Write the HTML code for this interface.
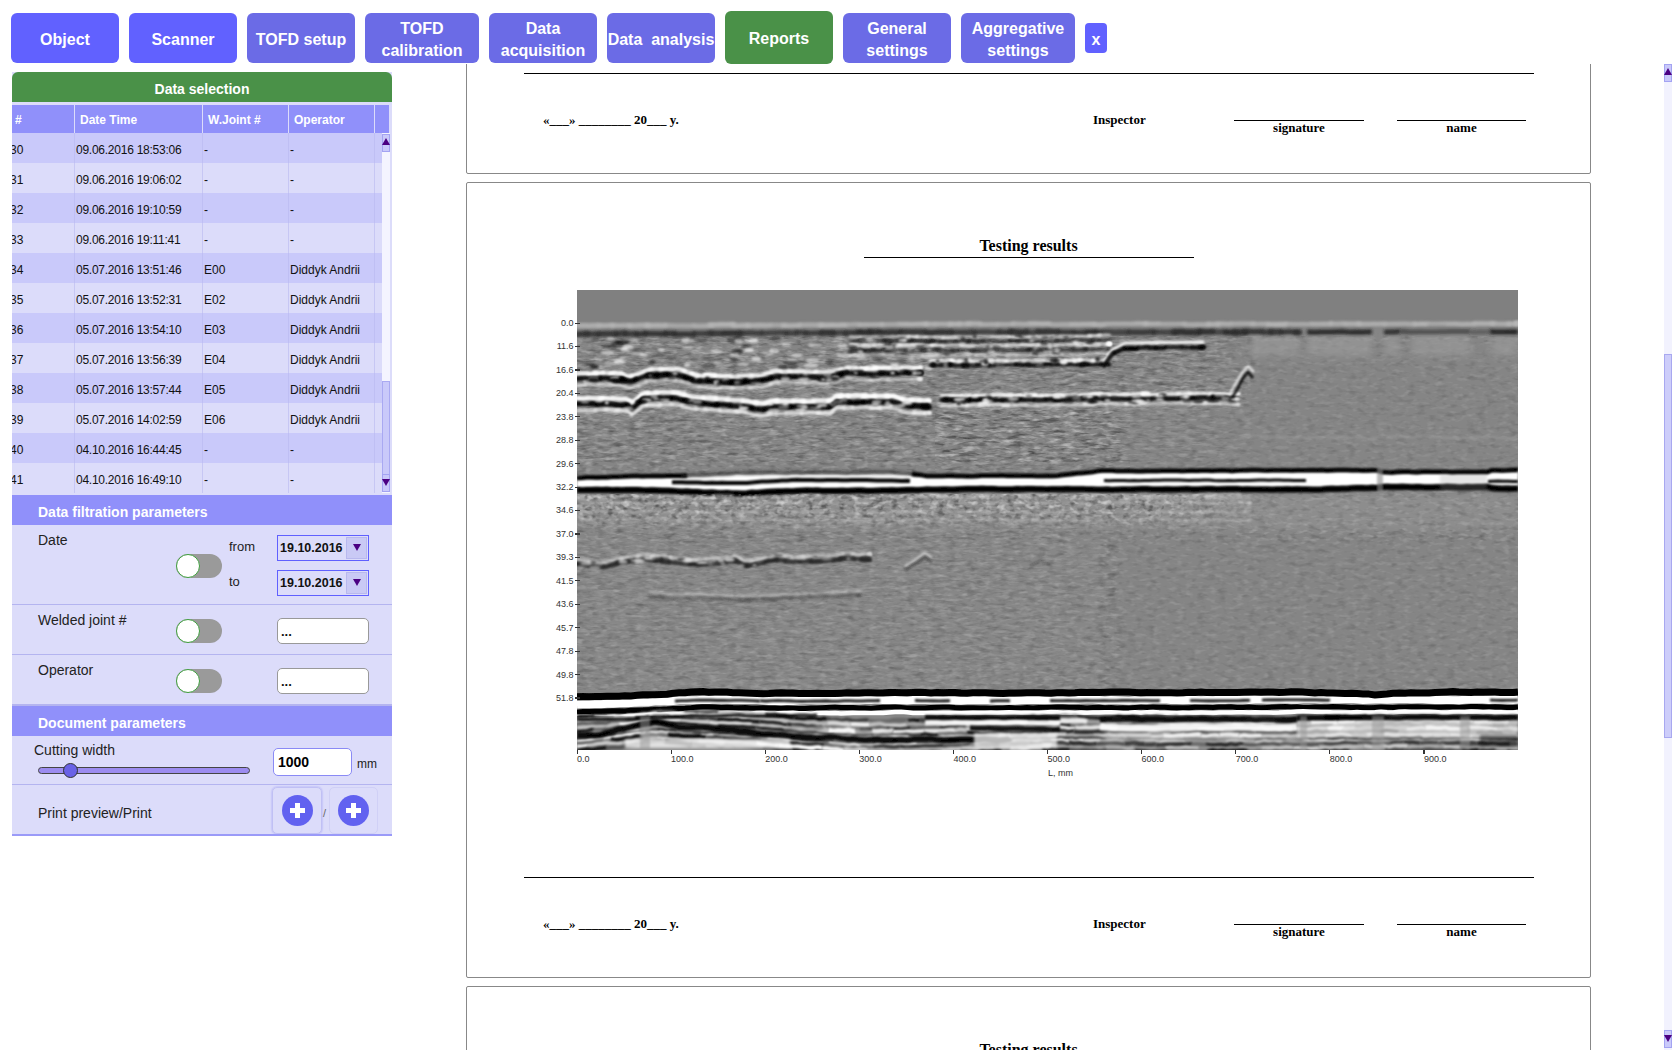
<!DOCTYPE html>
<html><head><meta charset="utf-8">
<style>
*{box-sizing:border-box;margin:0;padding:0}
html,body{width:1680px;height:1050px;overflow:hidden;background:#fff;font-family:"Liberation Sans",sans-serif;position:relative}
.a{position:absolute}
.btn{position:absolute;top:13px;height:50px;border-radius:6px;background:#6b6be6;color:#fff;font-weight:bold;font-size:16px;text-align:center;display:flex;align-items:center;justify-content:center;line-height:22px;padding-top:3px}
.btn.b2{background:#6161ff}
.btn.g{background:#4a9148;top:11px;height:53px}
/* panel */
.panel{position:absolute;left:12px;top:72px;width:380px;height:764px;background:#dcdcfa}
.gh{position:absolute;left:0;top:0;width:380px;height:30px;background:#4a9148;border-radius:6px 6px 0 0;color:#fff;font-weight:bold;font-size:14px;text-align:center;line-height:30px;padding-top:2px}
.th{position:absolute;top:33px;height:28px;background:#9090fa;color:#fff;font-weight:bold;font-size:12px;line-height:30px;padding-left:5px}
.row{position:absolute;left:0;width:370px;height:30px;font-size:12px;color:#111;line-height:30px}
.row span{position:absolute;top:2px}
.row span:nth-child(2){letter-spacing:-0.25px}
.sec{position:absolute;left:0;width:380px;height:30px;background:#9090fa;color:#fff;font-weight:bold;font-size:14px;line-height:30px;padding-left:26px;padding-top:2px}
.lbl{position:absolute;font-size:14px;color:#222}
.tog{position:absolute;width:46px;height:24px;border-radius:12px;background:#9a9a9a}
.tog:after{content:"";position:absolute;left:0;top:0;width:24px;height:24px;border-radius:50%;background:#fff;border:1.5px solid #3f9f3f;box-sizing:border-box}
.din{position:absolute;width:92px;height:26px;border:1.5px solid #6060ff;background:#dcdcfa;font-weight:bold;font-size:12.5px;line-height:25px;padding-left:2px;color:#111}
.din i{position:absolute;right:1px;top:1px;width:21px;height:22px;background:#c9c9f5;border:1px solid #b8b8ee}
.din i:after{content:"";position:absolute;left:5.5px;top:6px;border-left:4px solid transparent;border-right:4px solid transparent;border-top:7px solid #4b0082}
.tin{position:absolute;width:92px;height:26px;border:1px solid #999;border-radius:5px;background:#fff;font-weight:bold;font-size:13px;line-height:26px;padding-left:3px;color:#111}
.sep{position:absolute;left:0;width:380px;height:1px;background:#b4b4f0}
/* report */
.box{position:absolute;left:466px;width:1125px;border:1px solid #888;background:#fff;border-radius:2px}
.ser{font-family:"Liberation Serif",serif;font-weight:bold;color:#000}
.hl{position:absolute;height:1.2px;background:#000}

.sbb{background:#c9c9fa;border:1px solid #a3a3f2}
.sbb i{position:absolute;left:-1px;border-left:4px solid transparent;border-right:4px solid transparent}
.sbb i.up{top:3px;border-bottom:7px solid #4b0082}
.sbb i.dn{top:4px;border-top:7px solid #4b0082}
.plus{width:31px;height:31px;border-radius:50%;background:#6161f0}
.plus:before{content:"";position:absolute;left:8px;top:13px;width:15px;height:5px;background:#fff}
.plus:after{content:"";position:absolute;left:13px;top:8px;width:5px;height:15px;background:#fff}
.ax{font-size:9px;color:#333;font-family:"Liberation Sans",sans-serif;line-height:12px;white-space:nowrap}
</style></head><body>

<!-- top buttons -->
<div class="btn b2" style="left:11px;width:108px">Object</div>
<div class="btn b2" style="left:129px;width:108px">Scanner</div>
<div class="btn" style="left:247px;width:108px">TOFD setup</div>
<div class="btn" style="left:365px;width:114px">TOFD<br>calibration</div>
<div class="btn" style="left:489px;width:108px">Data<br>acquisition</div>
<div class="btn" style="left:607px;width:108px">Data&nbsp; analysis</div>
<div class="btn g" style="left:725px;width:108px">Reports</div>
<div class="btn" style="left:843px;width:108px">General<br>settings</div>
<div class="btn" style="left:961px;width:114px">Aggregative<br>settings</div>
<div class="btn b2" style="left:1085px;top:23px;width:22px;height:30px;border-radius:4px">x</div>

<!-- report area -->
<div class="a" style="left:0;top:64px;width:1680px;height:986px;overflow:hidden">
<div class="a" style="left:0;top:-64px;width:1680px;height:1114px">

<div class="box" style="top:-622px;height:796px">
  <div class="hl" style="left:397px;top:74px;width:330px"></div>
  <div class="ser a" style="left:0;width:1123px;top:53.5px;text-align:center;font-size:16px">Testing results</div>
</div>
<div class="hl" style="left:524px;top:73px;width:1010px"></div>
<div class="ser a" style="left:543px;top:112px;font-size:13px">«___» ________ 20___ y.</div>
<div class="ser a" style="left:1093px;top:112px;font-size:13px">Inspector</div>
<div class="a" style="left:1234px;top:120px;width:130px;height:1px;background:#000"></div>
<div class="ser a" style="left:1234px;width:130px;text-align:center;top:120px;font-size:13px">signature</div>
<div class="a" style="left:1397px;top:120px;width:129px;height:1px;background:#000"></div>
<div class="ser a" style="left:1397px;width:129px;text-align:center;top:120px;font-size:13px">name</div>

<div class="box" style="top:182px;height:796px">
  <div class="hl" style="left:397px;top:74px;width:330px"></div>
  <div class="ser a" style="left:0;width:1123px;top:53.5px;text-align:center;font-size:16px">Testing results</div>
</div>
<div class="hl" style="left:524px;top:877px;width:1010px"></div>
<div class="ser a" style="left:543px;top:916px;font-size:13px">«___» ________ 20___ y.</div>
<div class="ser a" style="left:1093px;top:916px;font-size:13px">Inspector</div>
<div class="a" style="left:1234px;top:924px;width:130px;height:1px;background:#000"></div>
<div class="ser a" style="left:1234px;width:130px;text-align:center;top:924px;font-size:13px">signature</div>
<div class="a" style="left:1397px;top:924px;width:129px;height:1px;background:#000"></div>
<div class="ser a" style="left:1397px;width:129px;text-align:center;top:924px;font-size:13px">name</div>

<div class="box" style="top:986px;height:796px">
  <div class="hl" style="left:397px;top:74px;width:330px"></div>
  <div class="ser a" style="left:0;width:1123px;top:53.5px;text-align:center;font-size:16px">Testing results</div>
</div>
<div class="hl" style="left:524px;top:1681px;width:1010px"></div>
<div class="ser a" style="left:543px;top:1720px;font-size:13px">«___» ________ 20___ y.</div>
<div class="ser a" style="left:1093px;top:1720px;font-size:13px">Inspector</div>
<div class="a" style="left:1234px;top:1728px;width:130px;height:1px;background:#000"></div>
<div class="ser a" style="left:1234px;width:130px;text-align:center;top:1728px;font-size:13px">signature</div>
<div class="a" style="left:1397px;top:1728px;width:129px;height:1px;background:#000"></div>
<div class="ser a" style="left:1397px;width:129px;text-align:center;top:1728px;font-size:13px">name</div>

<svg id="bs" class="a" style="left:577px;top:290px" width="941" height="460" viewBox="0 0 941 460">
<style>#bs path{fill:none;stroke-linejoin:round}#bs .rc{stroke-linecap:round}#bs .b1{filter:url(#b1)}#bs .b2{filter:url(#b2)}#bs .b3{filter:url(#b3)}</style>
<defs>
 <filter id="tex" x="0" y="0" width="100%" height="100%" color-interpolation-filters="sRGB">
  <feTurbulence type="fractalNoise" baseFrequency="0.10 0.22" numOctaves="2" seed="3"/>
  <feColorMatrix type="matrix" values="0 0 0 0 0  0 0 0 0 0  0 0 0 0 0  2.2 0 0 0 -1.1"/>
 </filter>
 <filter id="tex2" x="0" y="0" width="100%" height="100%" color-interpolation-filters="sRGB">
  <feTurbulence type="fractalNoise" baseFrequency="0.12 0.25" numOctaves="2" seed="11"/>
  <feColorMatrix type="matrix" values="0 0 0 0 1  0 0 0 0 1  0 0 0 0 1  2.2 0 0 0 -1.1"/>
 </filter>
 <filter id="tex3" x="0" y="0" width="100%" height="100%" color-interpolation-filters="sRGB">
  <feTurbulence type="fractalNoise" baseFrequency="0.06 0.3" numOctaves="3" seed="21"/>
  <feColorMatrix type="matrix" values="0 0 0 0 0  0 0 0 0 0  0 0 0 0 0  3 0 0 0 -1.5"/>
 </filter>
 <filter id="tex4" x="0" y="0" width="100%" height="100%" color-interpolation-filters="sRGB">
  <feTurbulence type="fractalNoise" baseFrequency="0.07 0.28" numOctaves="3" seed="5"/>
  <feColorMatrix type="matrix" values="0 0 0 0 1  0 0 0 0 1  0 0 0 0 1  3 0 0 0 -1.5"/>
 </filter>
 <filter id="tex5" x="0" y="0" width="100%" height="100%" color-interpolation-filters="sRGB">
  <feTurbulence type="fractalNoise" baseFrequency="0.13 0.2" numOctaves="2" seed="41"/>
  <feColorMatrix type="matrix" values="0 0 0 0 0  0 0 0 0 0  0 0 0 0 0  3.2 0 0 0 -1.6"/>
 </filter>
 <filter id="tex6" x="0" y="0" width="100%" height="100%" color-interpolation-filters="sRGB">
  <feTurbulence type="fractalNoise" baseFrequency="0.13 0.2" numOctaves="2" seed="43"/>
  <feColorMatrix type="matrix" values="0 0 0 0 1  0 0 0 0 1  0 0 0 0 1  3.2 0 0 0 -1.6"/>
 </filter>
 <linearGradient id="gB" x1="0" y1="0" x2="1" y2="0"><stop offset="0" stop-color="#fff"/><stop offset="0.62" stop-color="#fff"/><stop offset="0.75" stop-color="#000"/></linearGradient>
 <linearGradient id="gBv" x1="0" y1="0" x2="0" y2="1"><stop offset="0" stop-color="#fff"/><stop offset="0.45" stop-color="#fff"/><stop offset="1" stop-color="#000"/></linearGradient>
 <mask id="mBv" maskUnits="userSpaceOnUse" x="0" y="0" width="941" height="460"><rect x="0" y="203" width="941" height="40" fill="url(#gBv)"/></mask>
 <mask id="mB" maskUnits="userSpaceOnUse" x="0" y="0" width="941" height="460"><rect x="0" y="200" width="941" height="60" fill="url(#gB)" mask="url(#mBv)"/></mask>
 <filter id="b1" filterUnits="userSpaceOnUse" x="-10" y="-10" width="961" height="480"><feGaussianBlur stdDeviation="0.9"/></filter>
 <filter id="b2" filterUnits="userSpaceOnUse" x="-10" y="-10" width="961" height="480"><feGaussianBlur stdDeviation="1.4"/></filter>
 <filter id="b3" filterUnits="userSpaceOnUse" x="-10" y="-10" width="961" height="480"><feGaussianBlur stdDeviation="3"/></filter>
 <filter id="soft" filterUnits="userSpaceOnUse" x="0" y="0" width="941" height="460"><feGaussianBlur stdDeviation="0.6"/></filter>
 <filter id="b8" filterUnits="userSpaceOnUse" x="-50" y="-50" width="1041" height="560"><feGaussianBlur stdDeviation="12"/></filter>
 <linearGradient id="gL1" x1="0" y1="0" x2="1" y2="0"><stop offset="0" stop-color="#fff"/><stop offset="0.66" stop-color="#fff"/><stop offset="0.72" stop-color="#000"/></linearGradient>
 <linearGradient id="gL2" x1="0" y1="0" x2="1" y2="0"><stop offset="0" stop-color="#b3b3b3"/><stop offset="0.5" stop-color="#b3b3b3"/><stop offset="0.62" stop-color="#000"/></linearGradient>
 <mask id="mL" maskUnits="userSpaceOnUse" x="0" y="0" width="941" height="460"><rect x="0" y="44" width="941" height="128" fill="url(#gL1)"/><rect x="0" y="230" width="941" height="230" fill="url(#gL2)"/></mask>
 <clipPath id="cp"><rect x="0" y="0" width="941" height="460"/></clipPath>
</defs><g clip-path="url(#cp)"><g filter="url(#soft)"><rect x="0.0" y="0.0" width="941.0" height="460.0" fill="#858585" opacity="1" /><rect x="0.0" y="0.0" width="941.0" height="32.0" fill="#808080" opacity="1" /><rect x="0.0" y="46.0" width="941.0" height="354.0" fill="#000" opacity="0.26" filter="url(#tex)"/><rect x="0.0" y="46.0" width="941.0" height="354.0" fill="#fff" opacity="0.26" filter="url(#tex2)"/><g mask="url(#mL)"><rect x="0.0" y="46.0" width="941.0" height="354.0" fill="#000" opacity="0.22" filter="url(#tex3)"/><rect x="0.0" y="46.0" width="941.0" height="354.0" fill="#fff" opacity="0.22" filter="url(#tex4)"/></g><rect x="0.0" y="204.0" width="941.0" height="36.0" fill="#a0a0a0" opacity="0.3" filter="url(#b3)"/><rect x="673.0" y="50.0" width="268.0" height="130.0" fill="#858585" opacity="0.45" filter="url(#b3)"/><rect x="543.0" y="250.0" width="398.0" height="146.0" fill="#868686" opacity="0.4" filter="url(#b3)"/><rect x="673.0" y="44.0" width="48.0" height="22.0" fill="#9c9c9c" opacity="0.6" filter="url(#b3)"/><rect x="730.0" y="44.0" width="65.0" height="22.0" fill="#9c9c9c" opacity="0.6" filter="url(#b3)"/><rect x="807.0" y="44.0" width="16.0" height="22.0" fill="#9c9c9c" opacity="0.6" filter="url(#b3)"/><rect x="835.0" y="44.0" width="58.0" height="22.0" fill="#9c9c9c" opacity="0.6" filter="url(#b3)"/><rect x="913.0" y="44.0" width="28.0" height="22.0" fill="#9c9c9c" opacity="0.6" filter="url(#b3)"/><path d="M0 36.2 5 36.2 10 36 15 35.9 20 36 25 35.8 30 36 35 35.8 40 35.7 45 35.8 50 35.8 55 35.9 60 35.9 65 35.8 70 35.7 75 35.6 80 35.4 85 35.7 90 35.6 95 35.6 100 35.7 105 35.5 110 35.4 115 35.4 120 35.6 125 35.7 130 35.5 135 35.6 140 35.6 145 35.6 150 35.4 155 35.2 160 35.2 165 35.3 170 35.2 175 35.4 180 35.2 185 35.4 190 35.3 195 35.3 200 35.1 205 35 210 34.8 215 35.1 220 35.2 225 35 230 35.2 235 35.1 240 34.8 245 35 250 34.8 255 34.7 260 34.7 265 34.6 270 34.8 275 34.7 280 34.7 285 34.7 290 34.5 295 34.4 300 34.4 305 34.5 310 34.4 315 34.5 320 34.6 325 34.7 330 34.5 335 34.7 340 34.4 345 34.4 350 34.2 355 34.1 360 34.2 365 34.2 370 34.3 375 34.3 380 34.2 385 34.3 390 34.3 395 34.1 400 34.3 405 34.1 410 34.3 415 34.3 420 34.5 425 34.4 430 34.4 435 34.3 440 34.3 445 34.2 450 34 455 33.9 460 33.9 465 33.9 470 34.1 475 34.1 480 34.3 485 34.1 490 34.1 495 34.1 500 34.2 505 34.1 510 34 515 34.1 520 34 525 34.1 530 34.1 535 33.9 540 34 545 33.9 550 33.9 555 34 560 34.1 565 33.9 570 34.2 575 34.2 580 34 585 34.1 590 34.1 595 34.2 600 34 605 33.9 610 34 615 34.2 620 33.9 625 33.9 630 33.8 635 34.1 640 34.2 645 34.2 650 34.2 655 34.2 660 34.1 665 34.2 670 34.1 675 34.2 680 34.2 685 34.1 690 34.2 695 34.3 700 34.2 705 34.1 710 34.1 715 34 720 33.8 725 33.8 730 33.7 735 34 740 34.2 745 33.9 750 33.9 755 34 760 34.1 765 33.8 770 33.7 775 33.6 780 33.7 785 33.5 790 33.5 795 33.6 800 33.8 805 33.9 810 33.8 815 33.7 820 33.6 825 33.7 830 33.6 835 33.5 840 33.7 845 33.8 850 33.9 855 34 860 33.8 865 33.7 870 33.6 875 33.8 880 33.5 885 33.5 890 33.5 895 33.4 900 33.5 905 33.6 910 33.4 915 33.4 920 33.6 925 33.4 930 33.3 935 33.4 940 33.3 941 33.5" stroke="#b8b8b8" stroke-width="3" stroke-opacity="0.48" class="b2"/><path d="M0 35.5 4 35.5 8 35.4 12 35.8 16 35.4 20 35.3 21.6 35.5" stroke="#b8b8b8" stroke-width="4.1" stroke-opacity="0.79" class="b2 rc"/><path d="M21.9 35.3 25.9 35.5 29.9 35.5 33.9 35.1 36.2 35.5" stroke="#b8b8b8" stroke-width="3.5" stroke-opacity="0.91" class="b2 rc"/><path d="M34.9 35.2 38.9 35.2 42.9 35.5 46.9 35.3 50.9 35.1 53.6 35.5" stroke="#b8b8b8" stroke-width="2.9" stroke-opacity="0.91" class="b2 rc"/><path d="M52.5 35.7 56.5 35.5 60.5 35.3 64.5 35 68.5 35.3 71.9 35.5" stroke="#b8b8b8" stroke-width="3.9" stroke-opacity="0.77" class="b2 rc"/><path d="M69.2 35.3 73.2 35.5 77.2 35.6 81.2 35.3 85.2 35.4 88.6 35.3" stroke="#b8b8b8" stroke-width="4.0" stroke-opacity="0.87" class="b2 rc"/><path d="M88.9 35.4 92.9 35.3 96.9 35.6 100.9 35.7 104.9 35.8 108.9 36 112.9 36.1 116.5 35.4" stroke="#b8b8b8" stroke-width="3.1" stroke-opacity="0.63" class="b2 rc"/><path d="M117.3 36 121.3 36.2 125.3 36.1 129.3 35.9 133.3 35.8 135.6 35.9" stroke="#b8b8b8" stroke-width="3.5" stroke-opacity="0.74" class="b2 rc"/><path d="M132.7 34.6 136.7 34.6 140.7 34.5 144.7 34.3 148.7 34.4 152.7 34.2 156.7 34.1 156.8 34.7" stroke="#b8b8b8" stroke-width="3.9" stroke-opacity="0.99" class="b2 rc"/><path d="M156 35.4 160 35.8 164 35.6 168 35.5 171.5 35.6" stroke="#b8b8b8" stroke-width="3.8" stroke-opacity="0.89" class="b2 rc"/><path d="M170.4 35.4 174.4 35.5 178.4 35.6 182.4 35 186.4 35.3 190.4 35.6 193.4 35.1" stroke="#b8b8b8" stroke-width="4.0" stroke-opacity="0.80" class="b2 rc"/><path d="M194.8 35 198.8 34.8 202.8 35.2 206.8 34.8 208.4 35.1" stroke="#b8b8b8" stroke-width="2.8" stroke-opacity="0.63" class="b2 rc"/><path d="M205.5 35.8 209.5 35.7 213.5 35.9 217.5 35.5 221.5 35.4 222.5 35.5" stroke="#b8b8b8" stroke-width="3.4" stroke-opacity="0.93" class="b2 rc"/><path d="M222.8 34.7 226.8 34.9 230.8 34.7 234.8 34.7 238.8 35.1 242.8 34.8 245 35" stroke="#b8b8b8" stroke-width="3.9" stroke-opacity="0.66" class="b2 rc"/><path d="M242.9 35.3 246.9 35.1 250.9 35.4 254.9 34.9 258.9 35.3 262.9 35.1 266.9 34.8 268.8 35.1" stroke="#b8b8b8" stroke-width="3.6" stroke-opacity="0.99" class="b2 rc"/><path d="M270.6 34.6 274.6 34.3 278.6 33.9 282.2 34.3" stroke="#b8b8b8" stroke-width="3.3" stroke-opacity="0.63" class="b2 rc"/><path d="M282 34.7 286 34.6 290 34.6 294 34.7 298 34.5 302 34.5 305.8 34.4" stroke="#b8b8b8" stroke-width="3.1" stroke-opacity="0.87" class="b2 rc"/><path d="M304.4 34.5 308.4 34.5 312.4 34.3 316.4 34.2 320 34.1" stroke="#b8b8b8" stroke-width="3.1" stroke-opacity="0.64" class="b2 rc"/><path d="M321.9 33.9 325.9 34.2 329.9 33.9 333.9 34.4 337.9 34.1 341.9 33.8 345.9 33.9 349.9 33.7 349.9 34.2" stroke="#b8b8b8" stroke-width="3.2" stroke-opacity="0.99" class="b2 rc"/><path d="M347.8 34.1 351.8 34.1 355.8 34 358.1 34.3" stroke="#b8b8b8" stroke-width="3.4" stroke-opacity="0.83" class="b2 rc"/><path d="M359.1 33.9 363.1 33.9 367.1 33.9 371.1 34.1 373.9 34.1" stroke="#b8b8b8" stroke-width="3.1" stroke-opacity="0.84" class="b2 rc"/><path d="M372.5 34.2 376.5 34 380.5 34.2 382.8 33.9" stroke="#b8b8b8" stroke-width="3.8" stroke-opacity="0.96" class="b2 rc"/><path d="M381.8 33.8 385.8 33.9 389.8 33.6 392.9 34" stroke="#b8b8b8" stroke-width="3.1" stroke-opacity="0.87" class="b2 rc"/><path d="M390.7 33.5 394.7 33.4 398.7 33.4 402.7 33.7 403.1 33.7" stroke="#b8b8b8" stroke-width="3.7" stroke-opacity="0.87" class="b2 rc"/><path d="M403.5 34.4 407.5 34.6 411.5 34.5 415.5 34.4 419.5 34.3 420.8 34.5" stroke="#b8b8b8" stroke-width="3.1" stroke-opacity="0.78" class="b2 rc"/><path d="M420.6 34.2 424.6 34.1 428.6 34.2 432.6 34.1 436.6 34.4 436.6 34" stroke="#b8b8b8" stroke-width="3.1" stroke-opacity="0.77" class="b2 rc"/><path d="M435.9 33.4 439.9 33.6 443.9 33.9 447.9 34.2 451.8 33.6" stroke="#b8b8b8" stroke-width="3.6" stroke-opacity="0.74" class="b2 rc"/><path d="M453.2 33.7 457.2 33.4 461.2 33.6 465.2 33.9 469.2 33.7 472 33.6" stroke="#b8b8b8" stroke-width="3.8" stroke-opacity="0.98" class="b2 rc"/><path d="M472.8 34.8 476.8 35 480.8 35 484.8 34.7 488.8 34.7 492.1 34.7" stroke="#b8b8b8" stroke-width="4.0" stroke-opacity="0.61" class="b2 rc"/><path d="M493.8 34.6 497.8 34.2 501.8 34.6 505.8 34.3 509.8 34.2 513.8 34.1 517.1 34.3" stroke="#b8b8b8" stroke-width="3.5" stroke-opacity="0.92" class="b2 rc"/><path d="M517.3 34.4 521.3 34.8 525.3 34.8 528 34.4" stroke="#b8b8b8" stroke-width="3.7" stroke-opacity="0.88" class="b2 rc"/><path d="M529.9 33.7 533.9 33.7 537.9 33.4 541.9 33.8 545.9 33.4 549.9 33.5 553.9 33.7 555.9 33.8" stroke="#b8b8b8" stroke-width="2.9" stroke-opacity="0.79" class="b2 rc"/><path d="M557.7 33.3 561.7 33 565.7 33.5 569.7 33.4 569.9 33.4" stroke="#b8b8b8" stroke-width="3.1" stroke-opacity="0.92" class="b2 rc"/><path d="M567.4 33.7 571.4 33.6 575.4 33.8 579.4 33.7 582 33.6" stroke="#b8b8b8" stroke-width="3.0" stroke-opacity="0.97" class="b2 rc"/><path d="M582.9 33.9 586.9 34 590.9 34 594.9 33.7 598.9 33.9 602.9 33.6 606.9 33.9 607.7 33.6" stroke="#b8b8b8" stroke-width="2.9" stroke-opacity="0.68" class="b2 rc"/><path d="M607.3 34.4 611.3 34.8 615.3 35 619.3 34.8 623.3 34.9 627.3 35 631.3 34.7 631.6 34.5" stroke="#b8b8b8" stroke-width="4.0" stroke-opacity="0.64" class="b2 rc"/><path d="M631.3 34.3 635.3 34.5 639.3 34.1 641.5 34.5" stroke="#b8b8b8" stroke-width="4.1" stroke-opacity="0.83" class="b2 rc"/><path d="M640.9 33.6 644.9 33.4 648.9 33.8 652.9 33.9 653.5 33.5" stroke="#b8b8b8" stroke-width="3.4" stroke-opacity="0.83" class="b2 rc"/><path d="M654.9 33.5 658.9 33.4 662.9 33.3 666.9 33.3 670.9 33.3 674.9 33.7 677.1 33.5" stroke="#b8b8b8" stroke-width="3.4" stroke-opacity="0.65" class="b2 rc"/><path d="M674.4 33.8 678.4 33.8 682.4 33.9 686.4 33.6 690.2 34" stroke="#b8b8b8" stroke-width="3.2" stroke-opacity="0.69" class="b2 rc"/><path d="M690.8 34.2 694.8 34.5 698.8 34.5 702.8 34.3 706.8 34.5 708.6 34.1" stroke="#b8b8b8" stroke-width="3.9" stroke-opacity="0.95" class="b2 rc"/><path d="M709.1 33.8 713.1 33.8 717.1 34.3 721.1 34.4 725.1 34.2 729.1 34.6 733.1 34.2 733.3 34.1" stroke="#b8b8b8" stroke-width="2.8" stroke-opacity="0.72" class="b2 rc"/><path d="M734.8 33.9 738.8 34 742.8 34 746.8 33.7 750.8 34 754.2 33.6" stroke="#b8b8b8" stroke-width="3.6" stroke-opacity="0.80" class="b2 rc"/><path d="M753.6 33.4 757.6 33.6 761.6 33.7 765.6 33.4 767.5 33.6" stroke="#b8b8b8" stroke-width="3.9" stroke-opacity="0.68" class="b2 rc"/><path d="M768.4 34 772.4 33.8 776.4 34 780.4 33.7 782.8 33.9" stroke="#b8b8b8" stroke-width="3.9" stroke-opacity="0.75" class="b2 rc"/><path d="M781.1 33.9 785.1 34.3 789.1 34.2 793.1 34.3 797.1 33.9 801.1 34.2 805.1 33.7 807.5 34.1" stroke="#b8b8b8" stroke-width="3.8" stroke-opacity="0.75" class="b2 rc"/><path d="M808.5 34 812.5 34.1 816.5 34.1 820.5 34.1 824.5 33.8 828.5 33.8 832.5 34.2 836.5 34.2 837.3 33.9" stroke="#b8b8b8" stroke-width="4.0" stroke-opacity="0.62" class="b2 rc"/><path d="M837.6 34.2 841.6 34.1 845.6 33.8 849.5 33.9" stroke="#b8b8b8" stroke-width="3.5" stroke-opacity="0.99" class="b2 rc"/><path d="M850.7 33.2 854.7 33.5 858.7 33.6 862.7 33.5 866.7 33.3 868.4 33.5" stroke="#b8b8b8" stroke-width="2.8" stroke-opacity="0.65" class="b2 rc"/><path d="M870.3 33.9 874.3 33.9 878.3 33.8 882.3 34.2 886.3 34.5 890.3 34.2 894.3 34.4 897 34.1" stroke="#b8b8b8" stroke-width="3.4" stroke-opacity="0.86" class="b2 rc"/><path d="M897.8 33.5 901.8 33.5 905.8 33.4 909.8 33.6 913.8 33.5 916.5 33.4" stroke="#b8b8b8" stroke-width="3.8" stroke-opacity="0.87" class="b2 rc"/><path d="M915 33.9 919 33.7 923 34.1 927 34 931 34.1 932.9 33.8" stroke="#b8b8b8" stroke-width="3.7" stroke-opacity="0.72" class="b2 rc"/><path d="M931.1 33.9 935.1 33.7 939.1 33.9 941 33.5" stroke="#b8b8b8" stroke-width="3.5" stroke-opacity="0.89" class="b2 rc"/><path d="M938.1 33.6 941 33.2" stroke="#b8b8b8" stroke-width="3.3" stroke-opacity="0.72" class="b2 rc"/><path d="M939.8 34.2 941 33.8" stroke="#b8b8b8" stroke-width="3.4" stroke-opacity="0.63" class="b2 rc"/><path d="M938.5 32.8 941 33" stroke="#b8b8b8" stroke-width="2.9" stroke-opacity="0.87" class="b2 rc"/><path d="M939.4 33.1 941 33.4" stroke="#b8b8b8" stroke-width="2.9" stroke-opacity="0.91" class="b2 rc"/><path d="M0 43.9 5 44.2 10 44 15 43.8 20 44.1 25 44.1 30 43.8 35 44 40 44.1 45 44.1 50 43.8 55 43.6 60 43.8 65 43.7 70 43.7 75 43.7 80 43.8 85 43.6 90 43.5 95 43.4 100 43.7 105 43.7 110 43.6 115 43.3 120 43.6 125 43.7 130 43.4 135 43.3 140 43.1 145 43.4 150 43.5 155 43.3 160 43.5 165 43.2 170 43.2 175 43.3 180 43.2 185 43.2 190 43.1 195 43.1 200 42.9 205 42.8 210 42.6 215 42.9 220 42.9 225 42.8 230 42.9 235 42.8 240 42.7 245 42.7 250 42.9 255 42.9 260 42.8 265 42.7 270 42.5 275 42.8 280 42.9 285 42.8 290 42.8 295 42.7 300 42.5 305 42.5 310 42.4 315 42.4 320 42.5 325 42.4 330 42.4 335 42.6 340 42.8 345 42.5 350 42.6 355 42.5 360 42.5 365 42.5 370 42.5 375 42.6 380 42.3 385 42.1 390 41.9 395 42.2 400 42.1 405 42 410 42.3 415 42.4 420 42.3 425 42.2 430 42.3 435 42 440 42 445 42.1 450 42.1 455 42.3 460 42 465 42.2 470 42.2 475 42.3 480 42.4 485 42.4 490 42.5 495 42.5 500 42.3 505 42.3 510 41.9 515 42.1 520 42 525 42 530 41.8 535 42.1 540 42.3 545 42 550 42 555 42.2 560 42.2 565 42.3 570 42.2 575 42.3 580 42.2 585 42.2 590 42 595 42 600 41.9 605 41.8 610 42.1 615 42.2 620 42.1 625 41.9 630 41.9 635 41.7 640 42 645 42.1 650 42 655 42 660 41.9 665 41.8 670 41.7 675 41.8 680 41.8 685 41.7 690 41.9 695 41.9 700 42 705 42.2 710 42 715 41.9 720 41.7 723 42" stroke="#2a2a2a" stroke-width="4.2" stroke-opacity="0.44" class="b2"/><path d="M0 44.4 4 44.2 8 43.8 10.7 44.1" stroke="#2a2a2a" stroke-width="5.1" stroke-opacity="0.81" class="b2 rc"/><path d="M8.6 43.4 12.6 44.1 16.6 43.7 20.6 43.9 21.8 43.8" stroke="#2a2a2a" stroke-width="4.1" stroke-opacity="0.76" class="b2 rc"/><path d="M21.9 44.2 25.9 43.8 29.9 43.6 33.9 43.9 37.9 44 39.3 44.3" stroke="#2a2a2a" stroke-width="5.6" stroke-opacity="0.73" class="b2 rc"/><path d="M38.9 43.3 42.9 43.2 46.9 42.8 48.4 43.3" stroke="#2a2a2a" stroke-width="5.2" stroke-opacity="0.73" class="b2 rc"/><path d="M47.9 43.8 51.9 44 55.9 43.8 59.9 43.8" stroke="#2a2a2a" stroke-width="5.0" stroke-opacity="0.71" class="b2 rc"/><path d="M59.3 44.3 63.3 44.3 67.3 43.9 68.5 43.9" stroke="#2a2a2a" stroke-width="4.7" stroke-opacity="0.83" class="b2 rc"/><path d="M68.1 43.2 72.1 43.7 76.1 43.7 80.1 43.7 84.1 44 88.1 43.5 89.5 43.6" stroke="#2a2a2a" stroke-width="4.3" stroke-opacity="0.87" class="b2 rc"/><path d="M88.3 43.7 92.3 43.2 96.3 43.6 97.6 43.3" stroke="#2a2a2a" stroke-width="4.9" stroke-opacity="0.77" class="b2 rc"/><path d="M96.8 44.3 100.8 44.5 104.8 44.3 108.8 44.2 112.8 44.5 116.8 44.7 116.9 44" stroke="#2a2a2a" stroke-width="4.6" stroke-opacity="0.85" class="b2 rc"/><path d="M117.1 43.5 121.1 43.4 125.1 43.5 129.1 43.6 133.1 43.7 134.7 43.9" stroke="#2a2a2a" stroke-width="5.0" stroke-opacity="0.63" class="b2 rc"/><path d="M132.9 43.1 136.9 43.3 140.9 43.6 144.6 43.5" stroke="#2a2a2a" stroke-width="5.2" stroke-opacity="0.76" class="b2 rc"/><path d="M146.5 43.3 150.5 43.3 154.5 43.3 158.5 43.3 162.5 43 164 43.2" stroke="#2a2a2a" stroke-width="4.9" stroke-opacity="0.90" class="b2 rc"/><path d="M162.5 43.6 166.5 43.1 170.5 42.8 174.5 42.5 178.5 43.1 182.5 43.3 184.5 43.2" stroke="#2a2a2a" stroke-width="4.8" stroke-opacity="0.65" class="b2 rc"/><path d="M185 43.2 189 43.2 193 42.6 197 42.8 201 42.4 205 42.4 209 42.8 209.9 42.7" stroke="#2a2a2a" stroke-width="4.4" stroke-opacity="0.61" class="b2 rc"/><path d="M209.5 43.4 213.5 43 217.5 43.3 219.9 43.1" stroke="#2a2a2a" stroke-width="4.5" stroke-opacity="0.58" class="b2 rc"/><path d="M218.9 42.2 222.9 42.1 226.9 42.4 229.6 42.5" stroke="#2a2a2a" stroke-width="4.0" stroke-opacity="0.66" class="b2 rc"/><path d="M227.9 43.3 231.9 43.5 235.9 43 239.9 43 243.9 43.1 243.9 43.2" stroke="#2a2a2a" stroke-width="4.4" stroke-opacity="0.67" class="b2 rc"/><path d="M244.7 42.7 248.7 42.8 252.7 42.9 256.3 42.8" stroke="#2a2a2a" stroke-width="5.6" stroke-opacity="0.87" class="b2 rc"/><path d="M256.1 43.3 260.1 42.7 264.1 42.4 267.9 43.1" stroke="#2a2a2a" stroke-width="4.2" stroke-opacity="0.62" class="b2 rc"/><path d="M268.8 43.1 272.8 43.5 276.8 43 280.8 43.4 283.8 43.1" stroke="#2a2a2a" stroke-width="5.8" stroke-opacity="0.74" class="b2 rc"/><path d="M280.9 42.3 284.9 42.1 288.9 42.5 292.9 42.3 293.8 42.3" stroke="#2a2a2a" stroke-width="4.9" stroke-opacity="0.93" class="b2 rc"/><path d="M292 41.8 296 41.8 300 42 302.9 42.1" stroke="#2a2a2a" stroke-width="4.9" stroke-opacity="0.88" class="b2 rc"/><path d="M301.3 42.9 305.3 42.9 309.3 42.6 313.3 42.3 317.3 42.2 321.3 42.5 323.3 42.8" stroke="#2a2a2a" stroke-width="5.6" stroke-opacity="0.83" class="b2 rc"/><path d="M323.6 42.1 327.6 41.6 331.6 42 335.6 41.7 339.6 41.8 343.6 41.9 347.6 41.6 348.2 42" stroke="#2a2a2a" stroke-width="5.2" stroke-opacity="0.74" class="b2 rc"/><path d="M349.6 42.6 353.6 42.8 357.6 42.5 361.6 42 365.6 41.7 369.6 42.2 373.6 41.8 374.8 42.2" stroke="#2a2a2a" stroke-width="4.9" stroke-opacity="0.87" class="b2 rc"/><path d="M375.2 43 379.2 42.4 383.2 42.7 387.2 42.6 391.2 42.3 395.2 41.9 397.4 42.6" stroke="#2a2a2a" stroke-width="5.2" stroke-opacity="0.66" class="b2 rc"/><path d="M397.2 42.4 401.2 42 405.2 41.7 409.2 41.5 413.2 41.6 417.2 42.1 421.2 42.1 421.9 42.2" stroke="#2a2a2a" stroke-width="4.4" stroke-opacity="0.59" class="b2 rc"/><path d="M421.7 42.1 425.7 42.3 429.7 42.7 433.3 42.2" stroke="#2a2a2a" stroke-width="5.0" stroke-opacity="0.77" class="b2 rc"/><path d="M433.3 41.5 437.3 41.6 441.3 42.2 445.3 42.6 449.3 42.7 449.8 41.9" stroke="#2a2a2a" stroke-width="5.4" stroke-opacity="0.85" class="b2 rc"/><path d="M447.7 43 451.7 43.2 455.7 42.9 459.7 42.7 460.4 42.6" stroke="#2a2a2a" stroke-width="5.4" stroke-opacity="0.59" class="b2 rc"/><path d="M461.1 41.5 465.1 42 469.1 41.6 473.1 41.4 477.1 42 480.8 41.8" stroke="#2a2a2a" stroke-width="5.6" stroke-opacity="0.83" class="b2 rc"/><path d="M482.1 42.2 486.1 42 490.1 42 494.1 41.8 497.3 42.2" stroke="#2a2a2a" stroke-width="4.3" stroke-opacity="0.69" class="b2 rc"/><path d="M496.6 43 500.6 43.1 504.6 42.6 508.6 43 511.1 42.6" stroke="#2a2a2a" stroke-width="4.4" stroke-opacity="0.82" class="b2 rc"/><path d="M510.1 42.5 514.1 42.4 518.1 42.6 518.8 42.2" stroke="#2a2a2a" stroke-width="5.0" stroke-opacity="0.83" class="b2 rc"/><path d="M516.2 41.8 520.2 41.7 524.2 42.2 525.2 42.2" stroke="#2a2a2a" stroke-width="4.0" stroke-opacity="0.73" class="b2 rc"/><path d="M527.2 42.2 531.2 42 535.2 42.5 539.2 42.4 543.2 42.3 547.2 42.8 550.2 42.6" stroke="#2a2a2a" stroke-width="5.5" stroke-opacity="0.56" class="b2 rc"/><path d="M551.8 42 555.8 42.2 559.8 42.3 563.8 42.1 567.8 42.3 571.8 41.9 575.8 41.8 577.2 42.2" stroke="#2a2a2a" stroke-width="4.9" stroke-opacity="0.73" class="b2 rc"/><path d="M576.1 42.4 580.1 42 584.1 42.3 588.1 42.5 592.1 42.6 596.1 42.2 598.7 42.6" stroke="#2a2a2a" stroke-width="4.5" stroke-opacity="0.62" class="b2 rc"/><path d="M597.1 42.1 601.1 41.8 605.1 41.7 609.1 42.3 613.1 42.1 617.1 42.5 621.1 42.5 622.3 42.2" stroke="#2a2a2a" stroke-width="5.8" stroke-opacity="0.89" class="b2 rc"/><path d="M622.5 41.4 626.5 41.5 630.5 41.9 634.5 41.6 635.6 41.5" stroke="#2a2a2a" stroke-width="5.1" stroke-opacity="0.88" class="b2 rc"/><path d="M636.8 41.6 640.8 42.2 644.8 41.8 648.8 42.1 650 42" stroke="#2a2a2a" stroke-width="4.4" stroke-opacity="0.56" class="b2 rc"/><path d="M647.9 42 651.9 42.4 655.9 42.3 659.8 42.2" stroke="#2a2a2a" stroke-width="4.5" stroke-opacity="0.91" class="b2 rc"/><path d="M656.8 42.5 660.8 42.3 664.8 42.5 668.5 42.4" stroke="#2a2a2a" stroke-width="5.8" stroke-opacity="0.84" class="b2 rc"/><path d="M666.8 41.4 670.8 41.1 674.8 41.5 678.8 41.5 682.8 41.3 685.3 41.6" stroke="#2a2a2a" stroke-width="5.0" stroke-opacity="0.75" class="b2 rc"/><path d="M686.3 42.6 690.3 42.5 694.3 42.1 694.8 42.5" stroke="#2a2a2a" stroke-width="4.1" stroke-opacity="0.76" class="b2 rc"/><path d="M693.4 41.8 697.4 41.9 701.4 42 703.2 41.9" stroke="#2a2a2a" stroke-width="5.9" stroke-opacity="0.72" class="b2 rc"/><path d="M703.9 42.1 707.9 42 711.9 41.4 715.9 41.9 719.9 42 720.9 41.7" stroke="#2a2a2a" stroke-width="4.0" stroke-opacity="0.83" class="b2 rc"/><path d="M718.4 42.5 722.4 42.8 723 42.4" stroke="#2a2a2a" stroke-width="5.0" stroke-opacity="0.80" class="b2 rc"/><path d="M730 42 735 42.2 740 42.3 745 42.1 750 41.9 755 42.1 760 41.7 765 41.6 770 42 775 42.2 780 42 785 42.3 790 42.1 795 41.8" stroke="#202020" stroke-width="5" stroke-opacity="0.90" class="b2"/><path d="M807 42.2 812 41.9 817 42 822 41.6 823 41.8" stroke="#202020" stroke-width="5" stroke-opacity="0.85" class="b2"/><path d="M823 41.5 828 41.6 833 42 838 42.1 843 41.7 848 42 853 42.1 858 42 863 41.8 868 41.8 873 41.4 878 41.6 883 41.4 888 41.6 893 41.6" stroke="#202020" stroke-width="5" stroke-opacity="0.55" class="b2"/><path d="M893 42 898 42.2 903 41.7 908 41.9 913 41.6" stroke="#202020" stroke-width="5" stroke-opacity="0.40" class="b2"/><path d="M913 41.6 918 41.9 923 42 928 41.9 933 41.8 938 42.1 941 41.5" stroke="#202020" stroke-width="5" stroke-opacity="0.95" class="b2"/><ellipse cx="295.7" cy="57.8" rx="4.2" ry="2.3" fill="#fff" opacity="0.35" class="b1"/><ellipse cx="351.1" cy="78.0" rx="4.2" ry="2.1" fill="#fff" opacity="0.55" class="b1"/><ellipse cx="18.2" cy="76.7" rx="3.9" ry="2.3" fill="#111" opacity="0.31" class="b1"/><ellipse cx="123.7" cy="50.6" rx="6.9" ry="2.0" fill="#000" opacity="0.33" class="b1"/><ellipse cx="33.9" cy="73.4" rx="6.5" ry="2.4" fill="#fff" opacity="0.28" class="b1"/><ellipse cx="296.5" cy="69.2" rx="4.1" ry="1.8" fill="#fff" opacity="0.28" class="b1"/><ellipse cx="174.0" cy="50.4" rx="6.9" ry="2.0" fill="#fff" opacity="0.35" class="b1"/><ellipse cx="233.7" cy="75.6" rx="7.9" ry="1.9" fill="#fff" opacity="0.54" class="b1"/><ellipse cx="285.8" cy="60.1" rx="5.9" ry="2.1" fill="#000" opacity="0.33" class="b1"/><ellipse cx="178.0" cy="70.1" rx="6.8" ry="1.9" fill="#fff" opacity="0.27" class="b1"/><ellipse cx="235.7" cy="70.4" rx="6.8" ry="1.9" fill="#fff" opacity="0.59" class="b1"/><ellipse cx="333.8" cy="68.6" rx="3.3" ry="2.0" fill="#fff" opacity="0.30" class="b1"/><ellipse cx="199.2" cy="48.5" rx="5.4" ry="1.9" fill="#111" opacity="0.45" class="b1"/><ellipse cx="30.4" cy="62.4" rx="6.8" ry="2.3" fill="#fff" opacity="0.50" class="b1"/><ellipse cx="94.4" cy="68.0" rx="5.3" ry="2.4" fill="#111" opacity="0.29" class="b1"/><ellipse cx="315.9" cy="55.2" rx="4.0" ry="2.3" fill="#000" opacity="0.31" class="b1"/><ellipse cx="17.0" cy="76.7" rx="4.2" ry="2.0" fill="#111" opacity="0.59" class="b1"/><ellipse cx="215.6" cy="70.0" rx="5.1" ry="2.0" fill="#fff" opacity="0.42" class="b1"/><ellipse cx="157.4" cy="64.2" rx="4.4" ry="2.4" fill="#fff" opacity="0.46" class="b1"/><ellipse cx="33.5" cy="48.6" rx="3.7" ry="1.6" fill="#fff" opacity="0.43" class="b1"/><ellipse cx="252.3" cy="71.4" rx="3.8" ry="2.5" fill="#111" opacity="0.35" class="b1"/><ellipse cx="323.8" cy="64.0" rx="7.1" ry="1.9" fill="#111" opacity="0.55" class="b1"/><ellipse cx="110.1" cy="75.0" rx="3.4" ry="2.0" fill="#fff" opacity="0.57" class="b1"/><ellipse cx="287.3" cy="77.1" rx="6.8" ry="2.5" fill="#111" opacity="0.59" class="b1"/><ellipse cx="284.4" cy="67.7" rx="5.0" ry="2.0" fill="#fff" opacity="0.38" class="b1"/><ellipse cx="276.8" cy="64.9" rx="6.5" ry="1.8" fill="#fff" opacity="0.35" class="b1"/><ellipse cx="45.1" cy="52.1" rx="7.6" ry="2.2" fill="#000" opacity="0.57" class="b1"/><ellipse cx="220.0" cy="64.8" rx="6.4" ry="1.6" fill="#fff" opacity="0.55" class="b1"/><ellipse cx="354.0" cy="51.6" rx="6.5" ry="1.6" fill="#000" opacity="0.48" class="b1"/><ellipse cx="131.5" cy="68.3" rx="6.7" ry="2.1" fill="#111" opacity="0.28" class="b1"/><ellipse cx="260.9" cy="50.4" rx="5.3" ry="2.1" fill="#fff" opacity="0.27" class="b1"/><ellipse cx="277.5" cy="52.5" rx="5.0" ry="2.5" fill="#fff" opacity="0.40" class="b1"/><ellipse cx="47.4" cy="59.3" rx="3.6" ry="2.4" fill="#fff" opacity="0.54" class="b1"/><ellipse cx="345.2" cy="67.0" rx="7.1" ry="2.0" fill="#fff" opacity="0.27" class="b1"/><ellipse cx="206.2" cy="77.7" rx="4.9" ry="2.2" fill="#000" opacity="0.51" class="b1"/><ellipse cx="81.4" cy="65.0" rx="6.7" ry="1.8" fill="#000" opacity="0.32" class="b1"/><ellipse cx="215.9" cy="76.2" rx="4.9" ry="2.2" fill="#000" opacity="0.39" class="b1"/><ellipse cx="42.7" cy="71.6" rx="6.3" ry="2.1" fill="#fff" opacity="0.37" class="b1"/><ellipse cx="239.9" cy="53.7" rx="5.5" ry="2.3" fill="#000" opacity="0.34" class="b1"/><ellipse cx="294.7" cy="76.2" rx="4.7" ry="1.6" fill="#fff" opacity="0.43" class="b1"/><ellipse cx="168.9" cy="57.1" rx="4.2" ry="2.4" fill="#111" opacity="0.46" class="b1"/><ellipse cx="32.5" cy="56.7" rx="7.8" ry="2.4" fill="#111" opacity="0.40" class="b1"/><ellipse cx="197.0" cy="60.7" rx="5.0" ry="2.3" fill="#fff" opacity="0.49" class="b1"/><ellipse cx="297.7" cy="64.3" rx="5.4" ry="2.4" fill="#000" opacity="0.39" class="b1"/><ellipse cx="320.2" cy="60.9" rx="6.8" ry="1.5" fill="#fff" opacity="0.58" class="b1"/><ellipse cx="165.9" cy="74.1" rx="6.4" ry="1.5" fill="#fff" opacity="0.39" class="b1"/><ellipse cx="334.3" cy="59.2" rx="4.3" ry="2.5" fill="#fff" opacity="0.37" class="b1"/><ellipse cx="60.6" cy="61.4" rx="7.5" ry="1.7" fill="#111" opacity="0.45" class="b1"/><ellipse cx="131.7" cy="76.4" rx="7.4" ry="2.2" fill="#000" opacity="0.31" class="b1"/><ellipse cx="161.5" cy="48.7" rx="5.9" ry="2.0" fill="#111" opacity="0.33" class="b1"/><ellipse cx="267.1" cy="65.6" rx="7.7" ry="2.4" fill="#fff" opacity="0.46" class="b1"/><ellipse cx="160.8" cy="48.7" rx="3.2" ry="2.2" fill="#111" opacity="0.41" class="b1"/><ellipse cx="154.1" cy="50.3" rx="4.0" ry="1.9" fill="#000" opacity="0.45" class="b1"/><ellipse cx="322.5" cy="48.9" rx="6.3" ry="2.1" fill="#000" opacity="0.31" class="b1"/><ellipse cx="209.6" cy="54.4" rx="4.8" ry="1.8" fill="#fff" opacity="0.43" class="b1"/><ellipse cx="139.8" cy="61.5" rx="6.3" ry="2.4" fill="#fff" opacity="0.44" class="b1"/><ellipse cx="169.4" cy="59.5" rx="5.1" ry="2.0" fill="#fff" opacity="0.31" class="b1"/><ellipse cx="238.2" cy="55.0" rx="7.0" ry="2.0" fill="#fff" opacity="0.51" class="b1"/><ellipse cx="126.7" cy="62.3" rx="6.7" ry="1.7" fill="#fff" opacity="0.27" class="b1"/><ellipse cx="356.4" cy="64.7" rx="6.9" ry="2.1" fill="#fff" opacity="0.40" class="b1"/><ellipse cx="40.8" cy="54.2" rx="6.7" ry="2.5" fill="#000" opacity="0.46" class="b1"/><ellipse cx="265.5" cy="55.4" rx="4.7" ry="2.4" fill="#fff" opacity="0.48" class="b1"/><ellipse cx="183.9" cy="65.3" rx="3.9" ry="1.9" fill="#111" opacity="0.30" class="b1"/><ellipse cx="18.7" cy="49.1" rx="3.9" ry="2.5" fill="#111" opacity="0.34" class="b1"/><ellipse cx="176.5" cy="50.7" rx="4.4" ry="2.4" fill="#fff" opacity="0.46" class="b1"/><ellipse cx="334.0" cy="49.1" rx="7.6" ry="2.0" fill="#000" opacity="0.29" class="b1"/><ellipse cx="66.7" cy="64.8" rx="4.3" ry="1.8" fill="#fff" opacity="0.59" class="b1"/><ellipse cx="140.6" cy="73.1" rx="4.3" ry="1.7" fill="#fff" opacity="0.40" class="b1"/><ellipse cx="156.6" cy="69.7" rx="3.9" ry="1.5" fill="#111" opacity="0.55" class="b1"/><ellipse cx="75.1" cy="72.2" rx="3.2" ry="2.2" fill="#111" opacity="0.47" class="b1"/><ellipse cx="84.1" cy="59.9" rx="3.6" ry="1.8" fill="#fff" opacity="0.54" class="b1"/><ellipse cx="338.9" cy="54.5" rx="6.0" ry="2.4" fill="#fff" opacity="0.49" class="b1"/><ellipse cx="45.6" cy="68.0" rx="3.1" ry="2.0" fill="#fff" opacity="0.30" class="b1"/><ellipse cx="159.4" cy="61.5" rx="6.1" ry="1.7" fill="#000" opacity="0.52" class="b1"/><ellipse cx="299.9" cy="69.3" rx="6.0" ry="2.0" fill="#111" opacity="0.39" class="b1"/><ellipse cx="263.9" cy="77.4" rx="4.0" ry="1.5" fill="#000" opacity="0.39" class="b1"/><ellipse cx="161.6" cy="50.9" rx="3.8" ry="2.4" fill="#fff" opacity="0.46" class="b1"/><ellipse cx="189.6" cy="63.5" rx="7.9" ry="1.7" fill="#fff" opacity="0.41" class="b1"/><ellipse cx="57.6" cy="50.0" rx="3.3" ry="1.5" fill="#fff" opacity="0.39" class="b1"/><ellipse cx="60.5" cy="63.7" rx="6.7" ry="2.0" fill="#fff" opacity="0.39" class="b1"/><ellipse cx="172.5" cy="60.1" rx="4.8" ry="2.2" fill="#fff" opacity="0.60" class="b1"/><ellipse cx="51.2" cy="57.3" rx="5.6" ry="2.3" fill="#fff" opacity="0.54" class="b1"/><ellipse cx="41.9" cy="70.9" rx="4.1" ry="1.9" fill="#fff" opacity="0.57" class="b1"/><ellipse cx="110.2" cy="57.5" rx="6.4" ry="1.8" fill="#fff" opacity="0.49" class="b1"/><ellipse cx="108.5" cy="50.6" rx="4.0" ry="2.4" fill="#fff" opacity="0.42" class="b1"/><ellipse cx="179.3" cy="68.7" rx="4.7" ry="1.9" fill="#fff" opacity="0.56" class="b1"/><ellipse cx="213.2" cy="72.8" rx="7.2" ry="1.7" fill="#000" opacity="0.45" class="b1"/><ellipse cx="12.7" cy="74.3" rx="5.4" ry="1.9" fill="#111" opacity="0.38" class="b1"/><ellipse cx="281.9" cy="50.5" rx="8.0" ry="2.0" fill="#000" opacity="0.38" class="b1"/><ellipse cx="317.4" cy="75.2" rx="4.2" ry="1.9" fill="#fff" opacity="0.59" class="b1"/><path d="M0 83.6 5 83.6 10 83.3 15 83 20 82.9 25 82.8 30 83 35 83.3 40 83.3 45 83.9 50 85.6 55 85.8 60 84.2 65 82.3 70 80.2 75 79.5 80 79.6 85 79.5 90 79.3 95 79.4 100 79.5 105 80.2 110 82.3 115 84.1 120 85.4 125 85.6 130 85.8 135 86 140 86.4 145 86.5 150 86.4 155 86.5 160 86.4 165 85.9 170 86 175 86 180 85.5 185 85.2 190 83.8 195 82.4 200 81.3 205 81.6 210 81.4 215 81.2 220 81.4 225 81.5 230 81.4 235 81.4 240 81.3 245 81.2 250 81.6 255 81.3 260 80.1 265 78.7 270 77.5 275 77.7 280 78.1 285 78.6 290 78.6 295 78.6 300 78.2 305 77.9 310 78 315 77.7 320 77.9 325 78.1 330 78.1 335 78 340 77.6 344 77.5" stroke="#ffffff" stroke-width="3" stroke-opacity="0.48" class="b1"/><path d="M0 83.5 4 83.3 8 83.2 10.5 83.3" stroke="#ffffff" stroke-width="3.9" stroke-opacity="0.78" class="b1 rc"/><path d="M11.8 84 15.8 83.8 19.7 83.4" stroke="#ffffff" stroke-width="3.7" stroke-opacity="0.92" class="b1 rc"/><path d="M17.2 82.8 21.2 82.9 25.2 82.8 26.2 82.6" stroke="#ffffff" stroke-width="4.0" stroke-opacity="0.85" class="b1 rc"/><path d="M26.2 83.1 30.2 83.4 34.2 83.8 36.1 83.3" stroke="#ffffff" stroke-width="3.7" stroke-opacity="0.66" class="b1 rc"/><path d="M33.2 83.2 37.2 82.8 41.2 83.3 44.5 83.1" stroke="#ffffff" stroke-width="4.0" stroke-opacity="0.84" class="b1 rc"/><path d="M45.4 84.2 49.4 86 53.4 86.8 54.7 86" stroke="#ffffff" stroke-width="3.5" stroke-opacity="0.86" class="b1 rc"/><path d="M54.2 85.8 58.2 84.7 62.2 83.6 66.2 82.1 66.8 81.4" stroke="#ffffff" stroke-width="3.4" stroke-opacity="0.82" class="b1 rc"/><path d="M68.4 80.4 72.4 79.5 75.3 79.2" stroke="#ffffff" stroke-width="3.1" stroke-opacity="0.72" class="b1 rc"/><path d="M72.6 79 76.6 78.7 80.6 78.6 84.6 79.3 86.3 79.4" stroke="#ffffff" stroke-width="3.2" stroke-opacity="0.63" class="b1 rc"/><path d="M83.4 79 87.4 78.8 91.4 78.5 95.4 79.2 96.2 79.2" stroke="#ffffff" stroke-width="4.1" stroke-opacity="0.79" class="b1 rc"/><path d="M98.1 78.5 102.1 78.6 106.1 80.1 108.1 81" stroke="#ffffff" stroke-width="3.1" stroke-opacity="0.87" class="b1 rc"/><path d="M106.8 80.5 110.8 81.6 114.8 83.8 115.9 84.1" stroke="#ffffff" stroke-width="3.9" stroke-opacity="0.65" class="b1 rc"/><path d="M114.1 83 118.1 84.5 121.1 85" stroke="#ffffff" stroke-width="3.5" stroke-opacity="0.87" class="b1 rc"/><path d="M119.1 86.2 123.1 85.8 127.1 86.1 130.2 86.1" stroke="#ffffff" stroke-width="3.0" stroke-opacity="0.86" class="b1 rc"/><path d="M127.7 84.7 131.7 84.4 135.7 85 138 85.5" stroke="#ffffff" stroke-width="4.0" stroke-opacity="0.99" class="b1 rc"/><path d="M137.9 85.5 141.9 85.6 145.9 86 149.9 85.8 153.9 85.9" stroke="#ffffff" stroke-width="3.4" stroke-opacity="0.94" class="b1 rc"/><path d="M154.1 87.3 158.1 87 161.1 86.8" stroke="#ffffff" stroke-width="3.4" stroke-opacity="0.60" class="b1 rc"/><path d="M161.2 85.7 165.2 85.6 169.2 85.2 173.2 85.1 175.5 85.6" stroke="#ffffff" stroke-width="2.9" stroke-opacity="0.83" class="b1 rc"/><path d="M173.7 85.5 177.7 85 181.7 85.4 185.7 85.3 185.7 84.9" stroke="#ffffff" stroke-width="3.0" stroke-opacity="0.83" class="b1 rc"/><path d="M186.9 84.2 190.9 82.8 194.2 82.4" stroke="#ffffff" stroke-width="3.0" stroke-opacity="0.96" class="b1 rc"/><path d="M195.3 81.7 199.3 80.6 203.3 81 203.8 81.1" stroke="#ffffff" stroke-width="3.7" stroke-opacity="0.82" class="b1 rc"/><path d="M204.2 81.6 208.2 81.3 212.2 81.5 214.1 81.5" stroke="#ffffff" stroke-width="3.4" stroke-opacity="0.64" class="b1 rc"/><path d="M211.3 81.1 215.3 81.4 219.3 81.4 223.3 81 226.9 81.2" stroke="#ffffff" stroke-width="3.3" stroke-opacity="0.77" class="b1 rc"/><path d="M228.5 81.8 232.5 82 236.5 82.3 239.4 81.5" stroke="#ffffff" stroke-width="3.8" stroke-opacity="0.63" class="b1 rc"/><path d="M237.5 82 241.5 81.7 245.5 81.9 249.1 81.9" stroke="#ffffff" stroke-width="2.9" stroke-opacity="0.68" class="b1 rc"/><path d="M250.7 81.3 254.7 81.5 258.7 80.1 262.7 79.2 264.2 78.3" stroke="#ffffff" stroke-width="3.4" stroke-opacity="0.62" class="b1 rc"/><path d="M262 79.9 266 78.6 270 77.8 271.7 77.8" stroke="#ffffff" stroke-width="2.9" stroke-opacity="0.66" class="b1 rc"/><path d="M271 77.5 275 77.5 279 77.6 280.3 78.5" stroke="#ffffff" stroke-width="3.6" stroke-opacity="0.66" class="b1 rc"/><path d="M277.5 78.8 281.5 78.6 283.6 78.9" stroke="#ffffff" stroke-width="3.2" stroke-opacity="0.61" class="b1 rc"/><path d="M283.6 77.6 287.6 78.2 290.4 77.9" stroke="#ffffff" stroke-width="3.2" stroke-opacity="1.00" class="b1 rc"/><path d="M287.8 78.9 291.8 78.4 295.8 78.8 299.2 78.5" stroke="#ffffff" stroke-width="4.1" stroke-opacity="0.89" class="b1 rc"/><path d="M296.9 77.8 300.9 77.5 304.9 77.7 308.9 77.6 312.5 77.8" stroke="#ffffff" stroke-width="3.8" stroke-opacity="0.96" class="b1 rc"/><path d="M313.9 78.3 317.9 78.7 321.9 78 324 78.2" stroke="#ffffff" stroke-width="3.5" stroke-opacity="0.61" class="b1 rc"/><path d="M324.3 77.3 328.3 77 332.3 76.9 334.1 77.1" stroke="#ffffff" stroke-width="2.9" stroke-opacity="0.86" class="b1 rc"/><path d="M336.1 77.7 340.1 77.8 344 77.8" stroke="#ffffff" stroke-width="4.1" stroke-opacity="0.88" class="b1 rc"/><path d="M343.3 77.3 344 77.5" stroke="#ffffff" stroke-width="3.9" stroke-opacity="0.61" class="b1 rc"/><path d="M0 88.9 5 88.6 10 88.5 15 88.4 20 88.6 25 88.5 30 88.7 35 88.6 40 88.8 45 89.2 50 91 55 91.2 60 89.5 65 87.4 70 85.5 75 84.8 80 84.9 85 84.9 90 84.7 95 85 100 85.2 105 85.9 110 88 115 89.9 120 90.9 125 91 130 90.8 135 91.3 140 91.3 145 91.8 150 92.2 155 91.9 160 91.9 165 91.5 170 91.3 175 91.1 180 90.9 185 90.6 190 89.4 195 87.9 200 86.8 205 86.7 210 86.6 215 86.6 220 86.6 225 86.6 230 86.8 235 86.7 240 86.7 245 87 250 86.8 255 86.8 260 85.4 265 83.7 270 82.8 275 83.1 280 83.5 285 83.8 290 83.7 295 83.6 300 83.5 305 83.5 310 83.6 315 83.3 320 83.5 325 83.5 330 83.4 335 83.1 340 82.8 344 83" stroke="#000000" stroke-width="3.4" stroke-opacity="0.52" class="b1"/><path d="M0 88.8 4 88.5 8 88.3 10.7 89" stroke="#000000" stroke-width="3.8" stroke-opacity="0.78" class="b1 rc"/><path d="M12.7 88.9 16.7 88.7 20.7 88.6 23.6 88.7" stroke="#000000" stroke-width="4.3" stroke-opacity="0.86" class="b1 rc"/><path d="M23.3 87.6 27.3 87.6 31.3 87.9 35.3 88.2 36 88.4" stroke="#000000" stroke-width="3.8" stroke-opacity="0.77" class="b1 rc"/><path d="M34 88.8 38 89 42 89.3 45.8 89.2" stroke="#000000" stroke-width="4.3" stroke-opacity="0.77" class="b1 rc"/><path d="M44.8 88.6 48.8 90.1 52.8 91.5 56.8 90.6 59.2 89.1" stroke="#000000" stroke-width="4.5" stroke-opacity="0.88" class="b1 rc"/><path d="M57.3 90.3 61.3 88.9 65.3 87.1 69.3 85.9 73.2 84.9" stroke="#000000" stroke-width="3.4" stroke-opacity="0.80" class="b1 rc"/><path d="M70.9 85.6 74.9 85 78.9 85.3 80 85.1" stroke="#000000" stroke-width="4.8" stroke-opacity="0.96" class="b1 rc"/><path d="M79.8 84.3 83.8 84.6 87.8 84.3 90.9 84.5" stroke="#000000" stroke-width="3.9" stroke-opacity="0.86" class="b1 rc"/><path d="M90.3 84.4 94.3 84.4 98.3 84 100.1 84.4" stroke="#000000" stroke-width="3.3" stroke-opacity="0.72" class="b1 rc"/><path d="M101 85.2 105 86.3 109 87.9 109.7 88.2" stroke="#000000" stroke-width="4.3" stroke-opacity="0.89" class="b1 rc"/><path d="M107.2 86.6 111.2 87.8 115.2 89.1 115.6 89.9" stroke="#000000" stroke-width="4.1" stroke-opacity="0.92" class="b1 rc"/><path d="M113.5 89.7 117.5 91.7 121.5 91.8 123.3 91.4" stroke="#000000" stroke-width="4.0" stroke-opacity="0.73" class="b1 rc"/><path d="M122.4 91 126.4 91.4 130.4 91.5 132.3 91.4" stroke="#000000" stroke-width="4.4" stroke-opacity="0.73" class="b1 rc"/><path d="M129.7 90.7 133.7 91.1 137.7 91.6 138.4 91.3" stroke="#000000" stroke-width="3.8" stroke-opacity="0.87" class="b1 rc"/><path d="M135.7 91.3 139.7 91.3 143.7 91.5 146.3 91.3" stroke="#000000" stroke-width="3.9" stroke-opacity="0.89" class="b1 rc"/><path d="M147.6 92.7 151.6 92.7 155.6 92.2 156 92.5" stroke="#000000" stroke-width="4.7" stroke-opacity="0.78" class="b1 rc"/><path d="M153.9 92.9 157.9 92.1 161.9 92.4 165.9 92.4 167.4 92" stroke="#000000" stroke-width="4.7" stroke-opacity="0.97" class="b1 rc"/><path d="M168.4 92 172.4 91.7 176.2 91.6" stroke="#000000" stroke-width="3.3" stroke-opacity="0.87" class="b1 rc"/><path d="M178.1 90.8 182.1 90.5 186.1 89.9 190.1 89.2 194.1 88.1" stroke="#000000" stroke-width="4.7" stroke-opacity="0.96" class="b1 rc"/><path d="M194.4 87.9 198.4 86.6 202.4 86.3 203.2 86.5" stroke="#000000" stroke-width="4.0" stroke-opacity="0.82" class="b1 rc"/><path d="M203.4 87.7 207.4 87.3 211.4 87.6 212 87.5" stroke="#000000" stroke-width="4.4" stroke-opacity="0.81" class="b1 rc"/><path d="M212.1 86.5 216.1 87.1 218.5 86.8" stroke="#000000" stroke-width="4.0" stroke-opacity="0.89" class="b1 rc"/><path d="M219.1 86.5 223.1 86.2 227.1 86.7 227.2 86.7" stroke="#000000" stroke-width="3.2" stroke-opacity="0.65" class="b1 rc"/><path d="M224.3 86.5 228.3 86.8 232.3 86.8 235.9 86.7" stroke="#000000" stroke-width="3.6" stroke-opacity="0.80" class="b1 rc"/><path d="M237.8 87.4 241.8 87.7 245.8 87.8 249.4 87.1" stroke="#000000" stroke-width="4.7" stroke-opacity="0.74" class="b1 rc"/><path d="M246.6 86.9 250.6 86.7 254.6 86.8 256.9 86.2" stroke="#000000" stroke-width="4.5" stroke-opacity="0.85" class="b1 rc"/><path d="M255.7 86.8 259.7 85.8 263.7 84.6 265.4 84.2" stroke="#000000" stroke-width="3.5" stroke-opacity="0.89" class="b1 rc"/><path d="M263.1 84.5 267.1 83 269.4 82.5" stroke="#000000" stroke-width="4.7" stroke-opacity="0.84" class="b1 rc"/><path d="M270.4 82.6 274.4 83.2 278.4 83 280.2 83.2" stroke="#000000" stroke-width="3.5" stroke-opacity="0.74" class="b1 rc"/><path d="M281.1 83.8 285.1 84.4 289.1 84.1 293.1 84.4 294 83.8" stroke="#000000" stroke-width="3.4" stroke-opacity="0.84" class="b1 rc"/><path d="M294.5 83.9 298.5 83.4 302.5 83.3 304.5 83.4" stroke="#000000" stroke-width="3.8" stroke-opacity="0.68" class="b1 rc"/><path d="M303.1 83.6 307.1 83.4 311.1 83.8 315.1 83.6 316 83.7" stroke="#000000" stroke-width="4.3" stroke-opacity="0.92" class="b1 rc"/><path d="M316.3 83 320.3 82.7 324.3 82.6 328.3 82.4 331.6 83" stroke="#000000" stroke-width="3.5" stroke-opacity="0.87" class="b1 rc"/><path d="M331.1 83.4 335.1 83.1 337.6 83.2" stroke="#000000" stroke-width="3.6" stroke-opacity="0.76" class="b1 rc"/><path d="M339.3 83.2 343.3 83 344 82.8" stroke="#000000" stroke-width="4.6" stroke-opacity="0.89" class="b1 rc"/><path d="M342.5 82.6 344 82.6" stroke="#000000" stroke-width="4.3" stroke-opacity="0.71" class="b1 rc"/><path d="M343.3 83.5 344 83.4" stroke="#000000" stroke-width="3.9" stroke-opacity="0.92" class="b1 rc"/><path d="M341.2 82.8 344 82.9" stroke="#000000" stroke-width="4.4" stroke-opacity="0.79" class="b1 rc"/><path d="M0 94.9 5 94.7 10 94.5 15 94.3 20 94.2 25 94.5 30 94.7 35 94.6 40 94.6 45 95.1 50 96.8 55 97.4 60 95.5 65 93.8 70 92.1 75 91.2 80 91.1 85 90.9 90 91 95 91.2 100 91.1 105 91.7 110 93.8 115 95.8 120 96.9 125 97 130 97.3 135 97.5 140 97.8 145 98.1 150 98.3 155 98.2 160 97.8 165 97.6 170 97.4 175 97.1 180 97.2 185 97 190 95.6 195 94.2 200 93.2 205 93.3 210 93.2 215 93.2 220 93.3 225 93.2 230 93.2 235 93 240 93 245 93 250 92.8 255 93 260 91.7 265 89.9 270 89.2 275 89.6 280 89.6 285 90 290 90.1 295 89.8 300 89.8 305 89.9 310 89.5 315 89.6 320 89.5 325 89.5 330 89.4 335 89.4 340 89.3 344 89" stroke="#f0f0f0" stroke-width="2.1" stroke-opacity="0.24" class="b1"/><path d="M0 95.6 4 95.3 8 95 8.6 95" stroke="#f0f0f0" stroke-width="2.8" stroke-opacity="0.74" class="b1 rc"/><path d="M8.9 95.1 12.9 94.6 16.9 94.9 20.9 94.7 21.5 95" stroke="#f0f0f0" stroke-width="2.7" stroke-opacity="0.37" class="b1 rc"/><path d="M21.2 94.6 25.2 94.4 29.2 94.8 29.3 94.4" stroke="#f0f0f0" stroke-width="2.1" stroke-opacity="0.64" class="b1 rc"/><path d="M31.3 94.7 35.3 94.5 39.3 94.9 43.3 95.1 47.2 96.5" stroke="#f0f0f0" stroke-width="2.9" stroke-opacity="0.70" class="b1 rc"/><path d="M48.3 96.7 52.3 98.1 56.3 96.7 60.3 95 62.5 94.8" stroke="#f0f0f0" stroke-width="2.1" stroke-opacity="0.74" class="b1 rc"/><path d="M61.3 95.8 65.3 93.7 69.3 92.1 69.6 92.3" stroke="#f0f0f0" stroke-width="2.6" stroke-opacity="0.51" class="b1 rc"/><path d="M68.5 91.7 72.5 90.7 76.5 90.9 78.8 90.8" stroke="#f0f0f0" stroke-width="2.3" stroke-opacity="0.60" class="b1 rc"/><path d="M78.9 90.6 82.9 90.4 86.9 90.9 87.6 90.9" stroke="#f0f0f0" stroke-width="2.7" stroke-opacity="0.37" class="b1 rc"/><path d="M87.9 90.2 91.9 90.7 95.9 90.5 98.4 90.6" stroke="#f0f0f0" stroke-width="2.2" stroke-opacity="0.48" class="b1 rc"/><path d="M97.2 90.9 101.2 91.3 105.2 91.5 105.8 91.9" stroke="#f0f0f0" stroke-width="2.1" stroke-opacity="0.55" class="b1 rc"/><path d="M104 91.1 108 92.4 112 93.7 112.4 94.4" stroke="#f0f0f0" stroke-width="2.1" stroke-opacity="0.52" class="b1 rc"/><path d="M112.5 94.1 116.5 96 120.5 96.2 123.2 96.4" stroke="#f0f0f0" stroke-width="2.9" stroke-opacity="0.32" class="b1 rc"/><path d="M120.9 97.2 124.9 97.2 128.9 97.2 132.9 97.8 134.9 97.6" stroke="#f0f0f0" stroke-width="2.3" stroke-opacity="0.67" class="b1 rc"/><path d="M135.6 97.9 139.6 98.4 143.6 97.9 144.1 97.9" stroke="#f0f0f0" stroke-width="2.2" stroke-opacity="0.73" class="b1 rc"/><path d="M143 97 147 97.3 151 97.7 155 97.9 156.2 97.5" stroke="#f0f0f0" stroke-width="2.6" stroke-opacity="0.66" class="b1 rc"/><path d="M154.2 98.3 158.2 98.5 162.2 98.5 166.2 98.6 166.4 97.7" stroke="#f0f0f0" stroke-width="2.0" stroke-opacity="0.59" class="b1 rc"/><path d="M166.2 96.7 170.2 97 174.1 97" stroke="#f0f0f0" stroke-width="2.7" stroke-opacity="0.36" class="b1 rc"/><path d="M172.2 98 176.2 97.5 178.9 97.3" stroke="#f0f0f0" stroke-width="2.8" stroke-opacity="0.65" class="b1 rc"/><path d="M180.7 97 184.7 97.2 188.7 96.1 192.7 94.8 195 94" stroke="#f0f0f0" stroke-width="2.0" stroke-opacity="0.80" class="b1 rc"/><path d="M192.6 94.1 196.6 92.7 200.6 92.1 201.6 92.7" stroke="#f0f0f0" stroke-width="2.7" stroke-opacity="0.77" class="b1 rc"/><path d="M201.2 92.4 205.2 92.2 209.2 92.6 213.2 92.8 215.7 92.4" stroke="#f0f0f0" stroke-width="2.3" stroke-opacity="0.55" class="b1 rc"/><path d="M217.6 92.7 221.6 92.7 225.6 92.4 228.8 93" stroke="#f0f0f0" stroke-width="2.2" stroke-opacity="0.70" class="b1 rc"/><path d="M227.6 92.6 231.6 93 235.6 92.5 239.6 92.6 240.8 92.6" stroke="#f0f0f0" stroke-width="2.3" stroke-opacity="0.64" class="b1 rc"/><path d="M242 93.5 246 93.5 250 93.6 250.6 93.1" stroke="#f0f0f0" stroke-width="2.8" stroke-opacity="0.60" class="b1 rc"/><path d="M249.8 93.2 253.8 93.6 257.8 92.5 261.8 91.4 262.2 90.9" stroke="#f0f0f0" stroke-width="2.4" stroke-opacity="0.34" class="b1 rc"/><path d="M263 89.8 267 88.3 271 88.2 275 88.8" stroke="#f0f0f0" stroke-width="2.3" stroke-opacity="0.52" class="b1 rc"/><path d="M276.9 88.9 280.9 88.7 284.9 89.6 286.8 89.4" stroke="#f0f0f0" stroke-width="2.4" stroke-opacity="0.37" class="b1 rc"/><path d="M288.1 90.2 292.1 90.5 295.2 90.2" stroke="#f0f0f0" stroke-width="2.3" stroke-opacity="0.60" class="b1 rc"/><path d="M293.7 89.6 297.7 89.7 301.7 89.8 303.2 89.2" stroke="#f0f0f0" stroke-width="2.4" stroke-opacity="0.74" class="b1 rc"/><path d="M305.1 89.9 309.1 89.7 311.6 89.6" stroke="#f0f0f0" stroke-width="3.0" stroke-opacity="0.32" class="b1 rc"/><path d="M309.4 90.1 313.4 90.1 317.4 89.7 321.4 90 324.3 89.6" stroke="#f0f0f0" stroke-width="2.0" stroke-opacity="0.42" class="b1 rc"/><path d="M325.6 89.3 329.6 89.4 333.1 89.2" stroke="#f0f0f0" stroke-width="2.1" stroke-opacity="0.43" class="b1 rc"/><path d="M334.2 89.3 338.2 88.8 340.7 88.7" stroke="#f0f0f0" stroke-width="2.9" stroke-opacity="0.56" class="b1 rc"/><path d="M342.3 89.3 344 89.1" stroke="#f0f0f0" stroke-width="2.1" stroke-opacity="0.57" class="b1 rc"/><path d="M341.3 89.5 344 89.5" stroke="#f0f0f0" stroke-width="2.8" stroke-opacity="0.57" class="b1 rc"/><path d="M342.5 89.1 344 88.8" stroke="#f0f0f0" stroke-width="2.4" stroke-opacity="0.77" class="b1 rc"/><path d="M341.8 88.6 344 89" stroke="#f0f0f0" stroke-width="2.9" stroke-opacity="0.80" class="b1 rc"/><path d="M0 107.8 5 107.9 10 107.9 15 107.8 20 108 25 108 30 108 35 108.1 40 108.3 45 108.5 50 108.9 55 112.9 60 108.2 65 103.9 70 102.7 75 102.7 80 102.3 85 102.1 90 102.2 95 102.1 100 102.3 105 103.5 110 105 115 106 120 106.4 125 107.3 130 108 135 108.5 140 108.6 145 108.8 150 109.3 155 109.6 160 109.7 165 109.9 170 110.9 175 112 180 112.7 185 114 190 112.6 195 111.4 200 111.1 205 111 210 111.1 215 110.9 220 110.9 225 110.7 230 110.8 235 110.8 240 110.7 245 110.6 250 111 255 110 260 105.8 265 105.8 270 106 275 106.2 280 106.2 285 106.3 290 106.2 295 106.2 300 106.2 305 106.2 310 106.1 315 106.2 320 107.5 325 108.8 330 110 335 110.5 340 110.8 345 111.1 350 111.1 353 111" stroke="#ffffff" stroke-width="3.4" stroke-opacity="0.56" class="b1"/><path d="M0 108.1 4 108.6 8 108.5 10 108.2" stroke="#ffffff" stroke-width="3.7" stroke-opacity="0.95" class="b1 rc"/><path d="M11.9 108.1 15.9 108.7 19.9 108.7 23.9 108.7 25.6 108.6" stroke="#ffffff" stroke-width="4.0" stroke-opacity="0.77" class="b1 rc"/><path d="M22.6 108.1 26.6 107.7 30.6 108.3 34.6 108.4 35.1 108.2" stroke="#ffffff" stroke-width="3.4" stroke-opacity="0.93" class="b1 rc"/><path d="M36.7 108.4 40.7 108.9 44.7 109.1 48.7 108.9 52.7 111.3 53 111.3" stroke="#ffffff" stroke-width="4.4" stroke-opacity="0.82" class="b1 rc"/><path d="M52.2 111.1 56.2 111.6 60.2 108.6 64.2 104.4 68.2 102.8 71.7 102.9" stroke="#ffffff" stroke-width="3.4" stroke-opacity="0.99" class="b1 rc"/><path d="M70.6 103.7 74.6 103.8 78.6 103.2 80.4 102.9" stroke="#ffffff" stroke-width="4.5" stroke-opacity="0.71" class="b1 rc"/><path d="M78.2 102.2 82.2 102.2 86.2 102.1 90.2 102.3 94.2 102.3 95 102" stroke="#ffffff" stroke-width="3.5" stroke-opacity="0.71" class="b1 rc"/><path d="M96.3 102.6 100.3 102.9 104.3 104.3 107.1 104.7" stroke="#ffffff" stroke-width="4.3" stroke-opacity="0.94" class="b1 rc"/><path d="M107.4 104.8 111.4 106.4 115.4 107.3 119.4 107.7 123.4 107.7 126.8 108" stroke="#ffffff" stroke-width="3.3" stroke-opacity="0.87" class="b1 rc"/><path d="M126.6 107.8 130.6 107.7 134.6 107.6 138.6 108 139.2 108.3" stroke="#ffffff" stroke-width="4.6" stroke-opacity="0.82" class="b1 rc"/><path d="M138.1 108.4 142.1 108.6 146.1 108.8 150.1 109.5 151.5 109.1" stroke="#ffffff" stroke-width="3.8" stroke-opacity="0.71" class="b1 rc"/><path d="M149 109.6 153 110.2 157 110.7 161 110.3 165 111.1 165.6 110.9" stroke="#ffffff" stroke-width="3.2" stroke-opacity="0.72" class="b1 rc"/><path d="M165.6 110.7 169.6 111.1 173.6 111.8 177.6 112.8 179.8 113" stroke="#ffffff" stroke-width="4.1" stroke-opacity="0.89" class="b1 rc"/><path d="M177.7 111.9 181.7 112.3 185.7 113.2 187.8 113.1" stroke="#ffffff" stroke-width="3.7" stroke-opacity="0.93" class="b1 rc"/><path d="M189.4 112.6 193.4 111.1 197.4 110.6 200.4 110.6" stroke="#ffffff" stroke-width="4.5" stroke-opacity="0.93" class="b1 rc"/><path d="M199.2 111 203.2 110.9 207.2 110.9 211.2 111.4 215.2 111.1 215.4 111.2" stroke="#ffffff" stroke-width="4.3" stroke-opacity="0.77" class="b1 rc"/><path d="M217 110.9 221 110.7 225 111 227 111.3" stroke="#ffffff" stroke-width="4.6" stroke-opacity="0.85" class="b1 rc"/><path d="M225.9 111.6 229.9 111.9 233.9 111.7 236.8 111.5" stroke="#ffffff" stroke-width="4.1" stroke-opacity="0.83" class="b1 rc"/><path d="M235.9 110.3 239.9 110.5 243.9 110.3 247.9 110.4 251.9 110.8 252.8 110.5" stroke="#ffffff" stroke-width="3.3" stroke-opacity="0.78" class="b1 rc"/><path d="M251.2 110.7 255.2 109.3 259.2 105.7 263.2 106.1 264.3 105.6" stroke="#ffffff" stroke-width="4.6" stroke-opacity="0.89" class="b1 rc"/><path d="M262 106.3 266 105.8 270 105.7 271.8 106.3" stroke="#ffffff" stroke-width="3.6" stroke-opacity="0.99" class="b1 rc"/><path d="M271.4 105.6 275.4 105.3 279.4 104.9 283.4 105.2 287.4 105.7 288.2 105.4" stroke="#ffffff" stroke-width="4.6" stroke-opacity="0.81" class="b1 rc"/><path d="M285.9 105.9 289.9 106.1 293.9 106.3 297.9 106.5 298.4 106.3" stroke="#ffffff" stroke-width="4.1" stroke-opacity="0.95" class="b1 rc"/><path d="M296.9 105.4 300.9 106 304.9 105.7 308.9 105.5 311.3 105.7" stroke="#ffffff" stroke-width="4.4" stroke-opacity="0.81" class="b1 rc"/><path d="M309 106.1 313 105.9 317 105.7 321 107.5 325 109 325.5 108.9" stroke="#ffffff" stroke-width="4.2" stroke-opacity="0.96" class="b1 rc"/><path d="M325.5 109.3 329.5 110.1 333.5 110.5 336.5 110.3" stroke="#ffffff" stroke-width="4.6" stroke-opacity="0.74" class="b1 rc"/><path d="M334 109.7 338 109.6 342 109.5 343.1 110.1" stroke="#ffffff" stroke-width="4.5" stroke-opacity="0.72" class="b1 rc"/><path d="M340.7 110.5 344.7 110.2 348.7 110.2 352.1 110.8" stroke="#ffffff" stroke-width="3.7" stroke-opacity="0.85" class="b1 rc"/><path d="M350.2 110.2 353 110.6" stroke="#ffffff" stroke-width="3.5" stroke-opacity="0.92" class="b1 rc"/><path d="M0 114 5 113.8 10 113.8 15 113.7 20 113.8 25 113.8 30 113.9 35 113.8 40 114.4 45 114.6 50 114.9 55 119 60 114.7 65 109.8 70 108.9 75 108.6 80 108.5 85 108.3 90 108 95 107.9 100 108.1 105 109.8 110 111.1 115 112 120 112.5 125 113.1 130 114 135 114.5 140 114.9 145 114.9 150 115.2 155 115.4 160 115.9 165 116.4 170 117.4 175 118.4 180 119.3 185 120.3 190 118.3 195 117 200 116.8 205 116.8 210 117 215 116.9 220 116.7 225 116.6 230 116.7 235 116.7 240 116.9 245 116.9 250 116.7 255 116 260 111.8 265 112 270 112.1 275 112.1 280 111.9 285 112.1 290 112.1 295 111.9 300 111.9 305 112.2 310 112.3 315 112 320 113.2 325 114.9 330 116.1 335 116.2 340 116.2 345 116.3 350 116.5 353 117" stroke="#000000" stroke-width="3.4" stroke-opacity="0.60" class="b1"/><path d="M0 113.8 4 113.9 8 113.9 12 113.6 16 113.4 19.5 113.6" stroke="#000000" stroke-width="4.2" stroke-opacity="0.86" class="b1 rc"/><path d="M20 114.6 24 114.1 28 114.1 32 114.3 36 114.6 36.9 114.7" stroke="#000000" stroke-width="4.6" stroke-opacity="0.81" class="b1 rc"/><path d="M38.7 114.8 42.7 115.3 46.7 115.6 50.5 115.5" stroke="#000000" stroke-width="4.1" stroke-opacity="0.93" class="b1 rc"/><path d="M49.7 115.2 53.7 118.1 57.7 116.9 61.7 112.8 65.7 108.8 68.3 109" stroke="#000000" stroke-width="4.1" stroke-opacity="0.83" class="b1 rc"/><path d="M66.2 109.3 70.2 108.7 74.2 108.3 78.2 108.3 82.2 108.3 84.4 108.5" stroke="#000000" stroke-width="4.4" stroke-opacity="1.00" class="b1 rc"/><path d="M86.2 108.2 90.2 107.7 94.2 108.2 94.9 107.9" stroke="#000000" stroke-width="3.6" stroke-opacity="0.99" class="b1 rc"/><path d="M93.5 108.5 97.5 108 101.5 109.2 105.5 109.9 109.5 111.4 110.8 111.9" stroke="#000000" stroke-width="4.0" stroke-opacity="0.82" class="b1 rc"/><path d="M109.2 110.6 113.2 111.9 117.2 112.3 121.2 112.6 125.2 112.9 125.5 113.3" stroke="#000000" stroke-width="4.1" stroke-opacity="0.76" class="b1 rc"/><path d="M127.1 113.3 131.1 114.1 135.1 114.8 139.1 114.9 141.2 114.6" stroke="#000000" stroke-width="3.8" stroke-opacity="0.98" class="b1 rc"/><path d="M139.1 114.2 143.1 114.4 147.1 114.5 151.1 115.2 153.9 115.3" stroke="#000000" stroke-width="3.7" stroke-opacity="0.90" class="b1 rc"/><path d="M153.6 116 157.6 116.5 161.6 116.3 165.6 116.5 166.8 116.7" stroke="#000000" stroke-width="3.9" stroke-opacity="0.77" class="b1 rc"/><path d="M166 117 170 117.1 174 117.7 175.2 118.4" stroke="#000000" stroke-width="4.7" stroke-opacity="0.99" class="b1 rc"/><path d="M174.8 117.6 178.8 118.6 182.8 119.3 186.8 119.4 187.6 118.8" stroke="#000000" stroke-width="3.5" stroke-opacity="0.76" class="b1 rc"/><path d="M186.4 120.4 190.4 118.4 194.4 117.7 196.6 117.5" stroke="#000000" stroke-width="3.5" stroke-opacity="0.76" class="b1 rc"/><path d="M196.3 117.6 200.3 117.3 204.3 117.3 208.3 117.7 212.3 117.8 213.8 117.2" stroke="#000000" stroke-width="4.2" stroke-opacity="0.78" class="b1 rc"/><path d="M211.8 116.2 215.8 116.6 219.8 116.3 221.3 116.6" stroke="#000000" stroke-width="3.9" stroke-opacity="0.96" class="b1 rc"/><path d="M220.8 117.1 224.8 117.3 228.8 117 232.8 116.6 235 117.1" stroke="#000000" stroke-width="4.4" stroke-opacity="0.87" class="b1 rc"/><path d="M235.7 116.4 239.7 116.6 243.7 117 247.7 117.2 251.4 116.8" stroke="#000000" stroke-width="3.4" stroke-opacity="0.95" class="b1 rc"/><path d="M249.7 116.9 253.7 117.2 257.7 113.7 259.1 111.6" stroke="#000000" stroke-width="4.2" stroke-opacity="0.84" class="b1 rc"/><path d="M257 114.2 261 111.8 265 111.9 269 111.5 273 111.6 273.3 111.9" stroke="#000000" stroke-width="3.5" stroke-opacity="0.77" class="b1 rc"/><path d="M271.2 112.8 275.2 113.1 279.2 112.7 283.2 112.8 287.2 112.4 287.4 112.6" stroke="#000000" stroke-width="3.6" stroke-opacity="0.97" class="b1 rc"/><path d="M285.3 112 289.3 112 293.3 111.5 296.6 111.5" stroke="#000000" stroke-width="4.2" stroke-opacity="0.85" class="b1 rc"/><path d="M294.2 111.7 298.2 111.4 302.2 111.3 306.2 111.7 310.2 111.4 313.1 112" stroke="#000000" stroke-width="3.3" stroke-opacity="0.84" class="b1 rc"/><path d="M314.3 111.4 318.3 112.2 322.3 113.8 322.7 113.9" stroke="#000000" stroke-width="4.2" stroke-opacity="0.76" class="b1 rc"/><path d="M323.2 114.4 327.2 115.8 331.2 116.3 335.2 116.3 336.2 116.1" stroke="#000000" stroke-width="3.6" stroke-opacity="0.82" class="b1 rc"/><path d="M333.5 115.5 337.5 115.4 341.5 115.9 345.5 115.9 349.5 116.5" stroke="#000000" stroke-width="4.7" stroke-opacity="0.83" class="b1 rc"/><path d="M346.7 116.8 350.7 117.3 353 116.7" stroke="#000000" stroke-width="4.0" stroke-opacity="0.76" class="b1 rc"/><path d="M0 119.8 5 120.1 10 120 15 120.2 20 120.1 25 120.1 30 120.2 35 120.4 40 120.5 45 120.5 50 120.8 55 125 60 120.6 65 115.9 70 114.7 75 114.6 80 114.7 85 114.5 90 114.1 95 114.2 100 114.2 105 115.5 110 117.3 115 118.4 120 119 125 119.4 130 119.9 135 120.2 140 120.6 145 120.7 150 120.8 155 121.5 160 121.8 165 122.2 170 123.3 175 124 180 124.7 185 125.8 190 124.4 195 123.1 200 123.1 205 123.2 210 123.2 215 123 220 123.2 225 122.9 230 122.8 235 122.7 240 123.1 245 123 250 123 255 121.8 260 117.9 265 118 270 118.1 275 118 280 117.8 285 117.8 290 117.8 295 117.7 300 117.6 305 117.8 310 117.7 315 117.6 320 119 325 120.7 330 122.1 335 122.2 340 122.3 345 122.7 350 123.2 353 123" stroke="#f4f4f4" stroke-width="2.5" stroke-opacity="0.40" class="b1"/><path d="M0 120.8 4 120.6 8 120.8 12 120.8 16 121.1 19.1 120.5" stroke="#f4f4f4" stroke-width="3.4" stroke-opacity="0.51" class="b1 rc"/><path d="M17.6 120.2 21.6 120 25.6 119.8 29.6 120.1 30.2 119.8" stroke="#f4f4f4" stroke-width="2.6" stroke-opacity="0.68" class="b1 rc"/><path d="M28.3 119.3 32.3 119.6 36.3 120.1 40.3 120.4 41.7 119.9" stroke="#f4f4f4" stroke-width="3.6" stroke-opacity="0.70" class="b1 rc"/><path d="M38.8 120 42.8 120.5 46.8 121 50.8 121.4 54.4 124.4" stroke="#f4f4f4" stroke-width="2.5" stroke-opacity="0.81" class="b1 rc"/><path d="M54.3 124.4 58.3 122.4 62.3 119.1 66.3 115.9 70.2 115" stroke="#f4f4f4" stroke-width="2.8" stroke-opacity="0.80" class="b1 rc"/><path d="M69.1 114.8 73.1 115.2 77.1 115.3 81.1 115.1 83.9 114.6" stroke="#f4f4f4" stroke-width="3.1" stroke-opacity="0.83" class="b1 rc"/><path d="M81.8 115.3 85.8 115 89.8 115.1 93.8 114.5 95.6 114.5" stroke="#f4f4f4" stroke-width="3.2" stroke-opacity="0.57" class="b1 rc"/><path d="M93.5 114.3 97.5 114.8 101.5 115.3 105.4 116.2" stroke="#f4f4f4" stroke-width="3.1" stroke-opacity="0.53" class="b1 rc"/><path d="M104.5 115.7 108.5 117.4 112.5 118.3 116.5 118.9 119.3 119.2" stroke="#f4f4f4" stroke-width="3.4" stroke-opacity="0.63" class="b1 rc"/><path d="M118.2 118 122.2 118.5 126.2 119.1 129.6 119.6" stroke="#f4f4f4" stroke-width="2.9" stroke-opacity="0.59" class="b1 rc"/><path d="M127.4 119.1 131.4 119.9 135.4 119.7 139.4 120.3 142.8 120.3" stroke="#f4f4f4" stroke-width="3.4" stroke-opacity="0.60" class="b1 rc"/><path d="M142.6 121 146.6 121.6 150.6 121.2 154.6 121.3 158.6 121.8 161.6 122" stroke="#f4f4f4" stroke-width="2.9" stroke-opacity="0.68" class="b1 rc"/><path d="M158.7 121.3 162.7 121.5 166.7 122.1 170.7 122.7 174.3 123.7" stroke="#f4f4f4" stroke-width="3.4" stroke-opacity="0.77" class="b1 rc"/><path d="M176.2 125 180.2 125.1 184.2 126.1 188.2 125.6 192.2 123.8 193.8 123.5" stroke="#f4f4f4" stroke-width="3.5" stroke-opacity="0.68" class="b1 rc"/><path d="M191.3 123.6 195.3 123.4 199.3 123.7 199.5 123.3" stroke="#f4f4f4" stroke-width="2.6" stroke-opacity="0.53" class="b1 rc"/><path d="M198.8 124 202.8 123.7 206.8 124 209.2 123.5" stroke="#f4f4f4" stroke-width="2.8" stroke-opacity="0.54" class="b1 rc"/><path d="M209 122.8 213 122.5 217 123.1 221 122.8 224.8 123.2" stroke="#f4f4f4" stroke-width="3.4" stroke-opacity="0.60" class="b1 rc"/><path d="M223.9 123.1 227.9 123.3 231.9 122.7 235.9 122.6 239.9 122.6 242.7 122.9" stroke="#f4f4f4" stroke-width="3.2" stroke-opacity="0.67" class="b1 rc"/><path d="M240.5 123.1 244.5 123.1 248.5 122.8 252.5 123.5 255.9 121.5" stroke="#f4f4f4" stroke-width="3.2" stroke-opacity="0.83" class="b1 rc"/><path d="M256.1 120.3 260.1 117.6 264.1 117.6 267 117.8" stroke="#f4f4f4" stroke-width="2.8" stroke-opacity="0.84" class="b1 rc"/><path d="M267 117.8 271 118 275 117.7 275.6 117.7" stroke="#f4f4f4" stroke-width="3.2" stroke-opacity="0.63" class="b1 rc"/><path d="M275.4 117.7 279.4 117.5 283.4 117.2 287.4 117.2 291.4 117.5 293.5 117.7" stroke="#f4f4f4" stroke-width="3.2" stroke-opacity="0.64" class="b1 rc"/><path d="M293.9 118.1 297.9 117.9 301.9 118 303.3 118.5" stroke="#f4f4f4" stroke-width="3.4" stroke-opacity="0.90" class="b1 rc"/><path d="M301.6 117.3 305.6 117.8 309.6 117.3 313.6 116.9 313.7 117.4" stroke="#f4f4f4" stroke-width="3.3" stroke-opacity="0.66" class="b1 rc"/><path d="M314.7 117.8 318.7 118.9 322.7 120.2 323 120.5" stroke="#f4f4f4" stroke-width="2.9" stroke-opacity="0.53" class="b1 rc"/><path d="M323.5 121.1 327.5 122.1 331.5 122.8 335.5 123.2 337.3 122.6" stroke="#f4f4f4" stroke-width="3.3" stroke-opacity="0.57" class="b1 rc"/><path d="M336.9 123.1 340.9 123.2 344.9 123.4 348.1 123.5" stroke="#f4f4f4" stroke-width="3.5" stroke-opacity="0.85" class="b1 rc"/><path d="M347.6 122.9 351.6 123 353 123.2" stroke="#f4f4f4" stroke-width="2.9" stroke-opacity="0.77" class="b1 rc"/><path d="M352 122.5 353 122.7" stroke="#f4f4f4" stroke-width="2.8" stroke-opacity="0.66" class="b1 rc"/><path d="M352.1 123 353 123" stroke="#f4f4f4" stroke-width="3.5" stroke-opacity="0.72" class="b1 rc"/><path d="M364 105.7 369 105.6 374 105.5 379 105.5 384 105.3 389 105.5 394 105.6 399 105.4 404 105.5 409 105.4 414 105.2 419 105 424 104.8 429 105.1 434 105 439 104.9 444 105.2 449 105.2 454 105.4 459 105.4 464 105.6 469 105.4 474 105.3 479 105.1 484 105.1 489 104.8 494 104.8 499 104.5 504 104.3 509 104.2 514 104.1 519 103.8 524 104 529 104.2 534 104.3 539 104 544 103.9 549 104.1 554 104.3 559 104 564 104 569 103.9 574 104.1 579 104.2 584 104 589 104 594 103.9 599 103.7 604 103.9 609 103.7 614 103.6 619 103.8 624 103.4 629 103.3 634 103.6 639 103.8 644 103.7 649 103.6 654 104 659 104.1 662 104" stroke="#ffffff" stroke-width="2.5" stroke-opacity="0.44" class="b1"/><path d="M364 105.2 368 105.6 370.1 105" stroke="#ffffff" stroke-width="2.6" stroke-opacity="0.57" class="b1 rc"/><path d="M371.9 105.4 375.9 105.3 379.9 105.6 383.9 106 384.3 105.6" stroke="#ffffff" stroke-width="2.6" stroke-opacity="0.88" class="b1 rc"/><path d="M384.6 105.3 388.6 104.9 392.3 105.3" stroke="#ffffff" stroke-width="3.0" stroke-opacity="0.64" class="b1 rc"/><path d="M392.2 105.3 396.2 105.5 399.7 105.5" stroke="#ffffff" stroke-width="2.9" stroke-opacity="0.64" class="b1 rc"/><path d="M398.3 105.7 402.3 105.2 406.3 105.1 408.7 105.7" stroke="#ffffff" stroke-width="3.3" stroke-opacity="0.74" class="b1 rc"/><path d="M409 104.6 413 105 415.7 104.5" stroke="#ffffff" stroke-width="2.8" stroke-opacity="0.64" class="b1 rc"/><path d="M416.9 104.6 420.9 104.2 424.9 104.2 428.9 104.8 432.9 104.6 434.8 104.6" stroke="#ffffff" stroke-width="3.0" stroke-opacity="0.75" class="b1 rc"/><path d="M435.8 105.5 439.8 105.5 443.8 105 444.3 105.2" stroke="#ffffff" stroke-width="2.6" stroke-opacity="0.84" class="b1 rc"/><path d="M442.4 105.5 446.4 105.4 448.9 105.1" stroke="#ffffff" stroke-width="3.1" stroke-opacity="0.77" class="b1 rc"/><path d="M449.2 105.5 453.2 105.1 457.2 104.8 458.9 105.1" stroke="#ffffff" stroke-width="3.6" stroke-opacity="0.91" class="b1 rc"/><path d="M457.5 105.8 461.5 106.1 465.5 106.3 465.6 105.6" stroke="#ffffff" stroke-width="3.4" stroke-opacity="0.68" class="b1 rc"/><path d="M463.5 105.8 467.5 105.6 469.8 105.7" stroke="#ffffff" stroke-width="3.2" stroke-opacity="0.59" class="b1 rc"/><path d="M468.8 105.2 472.8 104.8 476.8 105.2 480.8 104.7 484.8 104.7 485.7 105.1" stroke="#ffffff" stroke-width="2.6" stroke-opacity="0.75" class="b1 rc"/><path d="M486.7 105.1 490.7 105.4 494.7 105.6 498.1 105" stroke="#ffffff" stroke-width="3.3" stroke-opacity="0.67" class="b1 rc"/><path d="M499.4 105.6 503.4 105.5 507.4 105 511.4 104.9 513.1 104.8" stroke="#ffffff" stroke-width="2.8" stroke-opacity="0.87" class="b1 rc"/><path d="M514.3 104.2 518.3 103.8 522.3 103.4 526.1 104" stroke="#ffffff" stroke-width="3.0" stroke-opacity="0.94" class="b1 rc"/><path d="M528 103.9 532 103.8 536 103.9 539.8 104.1" stroke="#ffffff" stroke-width="2.5" stroke-opacity="0.61" class="b1 rc"/><path d="M540.5 105 544.5 104.7 548.5 104.2 552.5 103.9 554.8 104.6" stroke="#ffffff" stroke-width="2.4" stroke-opacity="0.77" class="b1 rc"/><path d="M555.7 103.2 559.7 103.7 563.7 103.6 567.3 103.7" stroke="#ffffff" stroke-width="2.9" stroke-opacity="0.68" class="b1 rc"/><path d="M565.2 103.9 569.2 103.3 571.8 103.5" stroke="#ffffff" stroke-width="3.1" stroke-opacity="0.97" class="b1 rc"/><path d="M573.2 105 577.2 104.3 581.2 104.5 585.2 104 588.7 104.4" stroke="#ffffff" stroke-width="2.8" stroke-opacity="0.63" class="b1 rc"/><path d="M587.9 103.5 591.9 103.8 595.9 103.7 599.9 104 602.3 103.7" stroke="#ffffff" stroke-width="3.0" stroke-opacity="0.65" class="b1 rc"/><path d="M600.2 103.4 604.2 102.9 608.2 102.7 612.2 103 613.6 103.4" stroke="#ffffff" stroke-width="3.0" stroke-opacity="0.61" class="b1 rc"/><path d="M611.2 103.5 615.2 103.5 619.2 103.2 623.2 103.8 626.6 103.8" stroke="#ffffff" stroke-width="2.8" stroke-opacity="0.72" class="b1 rc"/><path d="M627.5 103.4 631.5 103.9 634 103.8" stroke="#ffffff" stroke-width="2.9" stroke-opacity="0.61" class="b1 rc"/><path d="M632.9 103.8 636.9 103.8 640.9 103.8 642.6 103.7" stroke="#ffffff" stroke-width="2.8" stroke-opacity="0.81" class="b1 rc"/><path d="M644.2 104.4 648.2 104 652.2 104.3 653.4 104.4" stroke="#ffffff" stroke-width="2.4" stroke-opacity="0.83" class="b1 rc"/><path d="M654.9 104 658.9 103.9 662 103.6" stroke="#ffffff" stroke-width="3.2" stroke-opacity="0.64" class="b1 rc"/><path d="M659.2 104.6 662 104.2" stroke="#ffffff" stroke-width="2.7" stroke-opacity="0.71" class="b1 rc"/><path d="M364 110.1 369 110 374 110.2 379 110.2 384 109.9 389 109.6 394 109.8 399 109.7 404 109.8 409 109.6 414 109.7 419 109.6 424 109.8 429 109.5 434 109.8 439 109.6 444 110 449 109.8 454 109.9 459 110.1 464 109.8 469 109.9 474 109.9 479 109.9 484 109.8 489 109.6 494 109.1 499 108.9 504 108.6 509 108.7 514 108.6 519 108.6 524 108.5 529 108.4 534 108.5 539 108.4 544 108.5 549 108.5 554 108.6 559 108.4 564 108.7 569 108.5 574 108.4 579 108.3 584 108.3 589 108.2 594 108.4 599 108.1 604 108 609 108 614 108.1 619 107.9 624 108 629 108 634 108.2 639 108.1 644 108.2 649 108.4 654 108.3 659 108.3 662 108.5" stroke="#000000" stroke-width="3" stroke-opacity="0.48" class="b1"/><path d="M364 109.8 368 109.4 370.9 109.6" stroke="#000000" stroke-width="3.8" stroke-opacity="0.70" class="b1 rc"/><path d="M368.1 109.6 372.1 109.4 374.5 109.7" stroke="#000000" stroke-width="4.0" stroke-opacity="0.81" class="b1 rc"/><path d="M376.2 109.9 380.2 109.6 384.2 109.6 388.2 109.6 392.2 110 392.8 109.6" stroke="#000000" stroke-width="3.6" stroke-opacity="0.91" class="b1 rc"/><path d="M392.4 110 396.4 109.8 400.4 109.8 404.3 110" stroke="#000000" stroke-width="4.0" stroke-opacity="0.98" class="b1 rc"/><path d="M402.3 109.1 406.3 108.7 409.3 109.2" stroke="#000000" stroke-width="3.0" stroke-opacity="0.66" class="b1 rc"/><path d="M406.4 109.2 410.4 108.6 412.9 109" stroke="#000000" stroke-width="3.1" stroke-opacity="0.79" class="b1 rc"/><path d="M413.6 109.9 417.6 110 421.6 109.9 425.5 109.6" stroke="#000000" stroke-width="3.8" stroke-opacity="0.83" class="b1 rc"/><path d="M425.4 109.8 429.4 109.7 433.4 109.8 437.4 109.4 440.6 109.8" stroke="#000000" stroke-width="3.2" stroke-opacity="0.63" class="b1 rc"/><path d="M440.9 109.5 444.9 109.8 448.9 109.8 452.9 110 456.9 110.3 457 109.7" stroke="#000000" stroke-width="2.9" stroke-opacity="0.79" class="b1 rc"/><path d="M458.1 109.7 462.1 110.3 466.1 110 469.4 110.1" stroke="#000000" stroke-width="4.0" stroke-opacity="0.65" class="b1 rc"/><path d="M467.7 109.3 471.7 109.2 475.7 108.7 479.7 109.1 480.4 109.1" stroke="#000000" stroke-width="3.1" stroke-opacity="0.61" class="b1 rc"/><path d="M477.4 110.4 481.4 110.2 485.4 109.9 489.4 110.2 493.4 109.6 494.8 109.4" stroke="#000000" stroke-width="3.3" stroke-opacity="0.79" class="b1 rc"/><path d="M496.5 109.4 500.5 109.1 504.5 108.4 505.5 108.7" stroke="#000000" stroke-width="3.5" stroke-opacity="0.69" class="b1 rc"/><path d="M504.4 108.6 508.4 108.6 512.4 108.3 516.4 108 519 108.2" stroke="#000000" stroke-width="4.1" stroke-opacity="0.65" class="b1 rc"/><path d="M519.5 108.5 523.5 108.6 527.5 108.2 529.7 108.3" stroke="#000000" stroke-width="3.1" stroke-opacity="0.60" class="b1 rc"/><path d="M526.8 108.9 530.8 108.8 534.8 109.1 538.8 109.2 542.8 109.4 544.2 108.6" stroke="#000000" stroke-width="3.9" stroke-opacity="0.73" class="b1 rc"/><path d="M546.1 108.9 550.1 109.2 554.1 109 558.1 108.4 562.1 108.8 563.1 108.4" stroke="#000000" stroke-width="4.2" stroke-opacity="0.77" class="b1 rc"/><path d="M564.8 109.4 568.8 108.9 572.8 109.3 574.5 109" stroke="#000000" stroke-width="4.2" stroke-opacity="0.68" class="b1 rc"/><path d="M575.4 108.7 579.4 108.5 583.4 108.5 587.4 108.9 588.4 108.3" stroke="#000000" stroke-width="3.3" stroke-opacity="0.64" class="b1 rc"/><path d="M589.2 108.9 593.2 108.6 597.2 109 601.2 109.1 602.5 108.7" stroke="#000000" stroke-width="2.8" stroke-opacity="0.95" class="b1 rc"/><path d="M603.1 108 607.1 108 611.1 108.1 615.1 108 617.2 108.4" stroke="#000000" stroke-width="3.1" stroke-opacity="0.76" class="b1 rc"/><path d="M615.2 107.9 619.2 107.8 623.2 107.3 627.2 107.3 629 107.7" stroke="#000000" stroke-width="3.4" stroke-opacity="0.78" class="b1 rc"/><path d="M630.6 108.5 634.6 108.3 636.6 108.6" stroke="#000000" stroke-width="2.8" stroke-opacity="0.63" class="b1 rc"/><path d="M635.4 107.3 639.4 107.1 643.4 107.2 647.4 107.4 650.1 107.9" stroke="#000000" stroke-width="4.2" stroke-opacity="0.95" class="b1 rc"/><path d="M650.8 108.2 654.8 108.5 657.7 108.6" stroke="#000000" stroke-width="3.5" stroke-opacity="0.63" class="b1 rc"/><path d="M655.7 108.9 659.7 108.6 662 109.1" stroke="#000000" stroke-width="4.2" stroke-opacity="0.75" class="b1 rc"/><path d="M364 115.4 369 115.4 374 115.5 379 115.4 384 115.3 389 115.4 394 115.1 399 115 404 114.9 409 114.9 414 114.8 419 114.8 424 115.1 429 114.9 434 115.2 439 115.3 444 115.5 449 115.3 454 115.3 459 115.3 464 115.4 469 115.4 474 115.1 479 115.1 484 114.8 489 114.5 494 114.7 499 114.6 504 114.7 509 114.6 514 114.4 519 114.2 524 114.3 529 114.3 534 113.9 539 114 544 113.8 549 113.9 554 113.9 559 114 564 113.8 569 114 574 113.8 579 113.9 584 113.8 589 114 594 114 599 113.7 604 113.5 609 113.7 614 113.6 619 113.5 624 113.5 629 113.6 634 113.9 639 113.8 644 113.6 649 113.9 654 113.9 659 114.1 662 114" stroke="#eeeeee" stroke-width="2.1" stroke-opacity="0.32" class="b1"/><path d="M364 115.5 368 115.4 372 116 376 115.5 376.8 115.5" stroke="#eeeeee" stroke-width="2.8" stroke-opacity="0.64" class="b1 rc"/><path d="M378.2 115.3 382.2 115.1 386.2 114.9 390.2 115.5 390.6 115.3" stroke="#eeeeee" stroke-width="2.9" stroke-opacity="0.87" class="b1 rc"/><path d="M389.2 115.4 393.2 115.4 397.2 114.8 401.2 115.3 403.5 115.1" stroke="#eeeeee" stroke-width="2.9" stroke-opacity="0.72" class="b1 rc"/><path d="M402 115 406 115.4 410 115 411.7 115.1" stroke="#eeeeee" stroke-width="2.7" stroke-opacity="0.83" class="b1 rc"/><path d="M412.1 115.1 416.1 114.8 420.1 114.9 424.1 114.3 427.9 114.8" stroke="#eeeeee" stroke-width="2.6" stroke-opacity="0.74" class="b1 rc"/><path d="M425.5 116 429.5 115.5 432.1 115.7" stroke="#eeeeee" stroke-width="3.0" stroke-opacity="0.90" class="b1 rc"/><path d="M429.5 115.2 433.5 115.2 437.5 115.4 439.9 115.4" stroke="#eeeeee" stroke-width="2.2" stroke-opacity="0.54" class="b1 rc"/><path d="M436.9 114.4 440.9 114.6 444.9 114.9 448.9 114.6 449.2 115.1" stroke="#eeeeee" stroke-width="2.4" stroke-opacity="0.74" class="b1 rc"/><path d="M450.6 115.3 454.6 115.7 458.6 115.2 461 115.6" stroke="#eeeeee" stroke-width="2.6" stroke-opacity="0.46" class="b1 rc"/><path d="M458.7 115.7 462.7 115.7 466.1 115.2" stroke="#eeeeee" stroke-width="2.4" stroke-opacity="0.57" class="b1 rc"/><path d="M467.5 114.8 471.5 115.2 475.5 115.4 479.5 114.8 481.6 114.9" stroke="#eeeeee" stroke-width="2.5" stroke-opacity="0.58" class="b1 rc"/><path d="M481.3 114.8 485.3 114.4 489.3 114.5 493.3 114.8 496.7 114.4" stroke="#eeeeee" stroke-width="2.0" stroke-opacity="0.59" class="b1 rc"/><path d="M497.5 114.5 501.5 115 505.5 115 507.8 114.6" stroke="#eeeeee" stroke-width="2.0" stroke-opacity="0.67" class="b1 rc"/><path d="M507.1 114.4 511.1 114.7 515.1 114.7 516.8 114.6" stroke="#eeeeee" stroke-width="2.9" stroke-opacity="0.85" class="b1 rc"/><path d="M517.5 114.1 521.5 113.7 525.5 113.9 529.3 114.2" stroke="#eeeeee" stroke-width="2.6" stroke-opacity="0.76" class="b1 rc"/><path d="M528.6 114 532.6 113.7 536.6 113.8 539.7 114" stroke="#eeeeee" stroke-width="2.5" stroke-opacity="0.71" class="b1 rc"/><path d="M540.4 114.3 544.4 114.6 548.4 114.4 551.1 114.3" stroke="#eeeeee" stroke-width="2.8" stroke-opacity="0.56" class="b1 rc"/><path d="M548.6 114.2 552.6 113.8 556.6 113.5 556.9 114.3" stroke="#eeeeee" stroke-width="3.0" stroke-opacity="0.85" class="b1 rc"/><path d="M554.7 113.9 558.7 114.2 562.7 114.4 566.7 113.7 569.4 113.8" stroke="#eeeeee" stroke-width="2.4" stroke-opacity="0.80" class="b1 rc"/><path d="M571 114.6 575 114.6 579 114.3 583 114.3 587 114 587.5 114.2" stroke="#eeeeee" stroke-width="2.7" stroke-opacity="0.42" class="b1 rc"/><path d="M588.2 112.9 592.2 113.2 596.2 112.8 600.2 113 604.2 112.9 605 113.1" stroke="#eeeeee" stroke-width="2.1" stroke-opacity="0.54" class="b1 rc"/><path d="M604.9 113 608.9 113.1 612.9 113.4 616.9 112.9 617.7 113.2" stroke="#eeeeee" stroke-width="2.2" stroke-opacity="0.70" class="b1 rc"/><path d="M615.1 113.1 619.1 112.9 623.1 112.9 627.1 113.4 629.2 113" stroke="#eeeeee" stroke-width="3.0" stroke-opacity="0.74" class="b1 rc"/><path d="M626.3 113.5 630.3 113.5 634.3 113.7 638.3 113.2 642.3 113.6 643.5 113.7" stroke="#eeeeee" stroke-width="2.1" stroke-opacity="0.83" class="b1 rc"/><path d="M642.8 114.1 646.8 113.8 650.8 114.2 654.8 114.5 658.2 114.1" stroke="#eeeeee" stroke-width="2.8" stroke-opacity="0.51" class="b1 rc"/><path d="M655.7 114.5 659.7 114.6 662 114.4" stroke="#eeeeee" stroke-width="2.5" stroke-opacity="0.55" class="b1 rc"/><path d="M659.2 114.4 662 114.5" stroke="#eeeeee" stroke-width="2.0" stroke-opacity="0.83" class="b1 rc"/><ellipse cx="148.3" cy="90.6" rx="3.5" ry="2.0" fill="#fff" opacity="0.43" class="b1"/><ellipse cx="245.2" cy="89.8" rx="5.0" ry="1.7" fill="#000" opacity="0.64" class="b1"/><ellipse cx="160.6" cy="92.4" rx="4.0" ry="1.3" fill="#fff" opacity="0.49" class="b1"/><ellipse cx="37.4" cy="88.0" rx="4.7" ry="1.6" fill="#fff" opacity="0.73" class="b1"/><ellipse cx="165.2" cy="92.7" rx="3.7" ry="2.1" fill="#000" opacity="0.49" class="b1"/><ellipse cx="296.7" cy="80.8" rx="4.5" ry="1.8" fill="#fff" opacity="0.35" class="b1"/><ellipse cx="251.3" cy="89.9" rx="4.8" ry="2.1" fill="#000" opacity="0.46" class="b1"/><ellipse cx="208.3" cy="89.0" rx="4.9" ry="2.2" fill="#fff" opacity="0.55" class="b1"/><ellipse cx="227.3" cy="88.6" rx="4.8" ry="1.3" fill="#fff" opacity="0.40" class="b1"/><ellipse cx="130.2" cy="88.0" rx="2.5" ry="1.7" fill="#000" opacity="0.68" class="b1"/><ellipse cx="279.2" cy="82.0" rx="2.3" ry="2.1" fill="#fff" opacity="0.76" class="b1"/><ellipse cx="88.2" cy="84.1" rx="3.5" ry="1.9" fill="#000" opacity="0.59" class="b1"/><ellipse cx="263.9" cy="87.2" rx="4.3" ry="1.7" fill="#000" opacity="0.48" class="b1"/><ellipse cx="253.3" cy="87.5" rx="4.8" ry="1.4" fill="#fff" opacity="0.32" class="b1"/><ellipse cx="70.9" cy="86.3" rx="4.1" ry="1.7" fill="#000" opacity="0.32" class="b1"/><ellipse cx="35.2" cy="89.4" rx="5.8" ry="1.4" fill="#000" opacity="0.54" class="b1"/><ellipse cx="175.5" cy="92.4" rx="3.2" ry="2.2" fill="#000" opacity="0.68" class="b1"/><ellipse cx="171.8" cy="92.1" rx="2.4" ry="2.1" fill="#000" opacity="0.64" class="b1"/><ellipse cx="320.3" cy="83.8" rx="3.1" ry="1.6" fill="#000" opacity="0.73" class="b1"/><ellipse cx="11.0" cy="91.7" rx="5.0" ry="2.0" fill="#fff" opacity="0.63" class="b1"/><ellipse cx="16.3" cy="88.7" rx="5.0" ry="1.9" fill="#fff" opacity="0.49" class="b1"/><ellipse cx="139.5" cy="91.8" rx="3.0" ry="2.2" fill="#fff" opacity="0.48" class="b1"/><ellipse cx="297.9" cy="86.7" rx="5.9" ry="2.1" fill="#000" opacity="0.32" class="b1"/><ellipse cx="47.0" cy="91.9" rx="4.2" ry="1.8" fill="#000" opacity="0.71" class="b1"/><ellipse cx="152.7" cy="91.1" rx="5.1" ry="1.6" fill="#000" opacity="0.52" class="b1"/><ellipse cx="11.9" cy="90.2" rx="3.7" ry="1.8" fill="#000" opacity="0.38" class="b1"/><ellipse cx="337.1" cy="83.4" rx="2.1" ry="1.8" fill="#fff" opacity="0.44" class="b1"/><ellipse cx="149.2" cy="92.4" rx="6.0" ry="1.7" fill="#000" opacity="0.73" class="b1"/><ellipse cx="246.2" cy="89.5" rx="2.1" ry="1.6" fill="#fff" opacity="0.62" class="b1"/><ellipse cx="258.8" cy="87.1" rx="3.4" ry="1.9" fill="#fff" opacity="0.71" class="b1"/><ellipse cx="16.6" cy="89.9" rx="4.8" ry="2.2" fill="#000" opacity="0.76" class="b1"/><ellipse cx="39.9" cy="91.6" rx="5.4" ry="1.8" fill="#000" opacity="0.74" class="b1"/><ellipse cx="195.1" cy="87.5" rx="2.0" ry="2.2" fill="#000" opacity="0.30" class="b1"/><ellipse cx="281.5" cy="81.3" rx="5.4" ry="1.6" fill="#000" opacity="0.71" class="b1"/><ellipse cx="39.5" cy="90.2" rx="6.0" ry="1.5" fill="#000" opacity="0.58" class="b1"/><ellipse cx="323.4" cy="81.0" rx="3.7" ry="1.3" fill="#fff" opacity="0.46" class="b1"/><ellipse cx="97.9" cy="83.5" rx="3.1" ry="1.2" fill="#fff" opacity="0.71" class="b1"/><ellipse cx="258.0" cy="88.6" rx="4.1" ry="2.0" fill="#000" opacity="0.70" class="b1"/><ellipse cx="73.3" cy="85.7" rx="2.1" ry="1.4" fill="#fff" opacity="0.35" class="b1"/><ellipse cx="262.8" cy="82.9" rx="5.2" ry="2.0" fill="#000" opacity="0.63" class="b1"/><ellipse cx="83.3" cy="86.3" rx="5.5" ry="2.0" fill="#000" opacity="0.60" class="b1"/><ellipse cx="329.3" cy="81.9" rx="2.2" ry="1.4" fill="#000" opacity="0.45" class="b1"/><ellipse cx="226.6" cy="89.2" rx="5.1" ry="1.2" fill="#fff" opacity="0.40" class="b1"/><ellipse cx="285.4" cy="83.6" rx="4.5" ry="1.2" fill="#000" opacity="0.76" class="b1"/><ellipse cx="250.1" cy="84.7" rx="4.5" ry="2.1" fill="#fff" opacity="0.42" class="b1"/><ellipse cx="138.7" cy="93.1" rx="2.3" ry="1.6" fill="#fff" opacity="0.58" class="b1"/><ellipse cx="79.0" cy="87.9" rx="4.4" ry="1.4" fill="#000" opacity="0.69" class="b1"/><ellipse cx="179.0" cy="93.2" rx="5.9" ry="1.7" fill="#fff" opacity="0.34" class="b1"/><ellipse cx="252.0" cy="90.0" rx="3.8" ry="2.1" fill="#fff" opacity="0.42" class="b1"/><ellipse cx="94.5" cy="87.9" rx="3.5" ry="1.3" fill="#000" opacity="0.46" class="b1"/><ellipse cx="184.2" cy="89.9" rx="3.6" ry="1.7" fill="#000" opacity="0.36" class="b1"/><ellipse cx="168.8" cy="90.3" rx="2.8" ry="2.2" fill="#000" opacity="0.79" class="b1"/><ellipse cx="228.3" cy="84.4" rx="2.9" ry="1.5" fill="#fff" opacity="0.37" class="b1"/><ellipse cx="315.6" cy="83.0" rx="2.4" ry="1.7" fill="#fff" opacity="0.73" class="b1"/><ellipse cx="295.7" cy="86.1" rx="3.5" ry="1.9" fill="#000" opacity="0.35" class="b1"/><ellipse cx="92.0" cy="84.4" rx="4.1" ry="2.0" fill="#000" opacity="0.46" class="b1"/><ellipse cx="340.4" cy="83.1" rx="4.9" ry="1.8" fill="#fff" opacity="0.56" class="b1"/><ellipse cx="327.1" cy="81.4" rx="4.8" ry="1.7" fill="#000" opacity="0.55" class="b1"/><ellipse cx="45.3" cy="89.8" rx="4.2" ry="1.3" fill="#000" opacity="0.64" class="b1"/><ellipse cx="142.4" cy="94.0" rx="3.0" ry="2.2" fill="#000" opacity="0.43" class="b1"/><ellipse cx="347.8" cy="117.7" rx="3.9" ry="1.8" fill="#000" opacity="0.37" class="b1"/><ellipse cx="227.2" cy="117.4" rx="4.0" ry="2.0" fill="#fff" opacity="0.60" class="b1"/><ellipse cx="241.7" cy="116.8" rx="2.7" ry="1.5" fill="#fff" opacity="0.66" class="b1"/><ellipse cx="266.7" cy="110.6" rx="3.7" ry="1.5" fill="#fff" opacity="0.32" class="b1"/><ellipse cx="19.8" cy="114.0" rx="3.7" ry="1.8" fill="#000" opacity="0.37" class="b1"/><ellipse cx="51.5" cy="118.1" rx="3.6" ry="1.5" fill="#fff" opacity="0.33" class="b1"/><ellipse cx="193.8" cy="114.1" rx="2.9" ry="1.2" fill="#fff" opacity="0.79" class="b1"/><ellipse cx="68.4" cy="110.5" rx="4.1" ry="2.1" fill="#000" opacity="0.42" class="b1"/><ellipse cx="246.4" cy="118.3" rx="2.2" ry="1.5" fill="#000" opacity="0.32" class="b1"/><ellipse cx="324.3" cy="115.3" rx="3.1" ry="1.8" fill="#fff" opacity="0.35" class="b1"/><ellipse cx="124.5" cy="115.6" rx="4.2" ry="1.8" fill="#000" opacity="0.37" class="b1"/><ellipse cx="236.5" cy="117.8" rx="4.7" ry="1.4" fill="#fff" opacity="0.37" class="b1"/><ellipse cx="197.0" cy="119.8" rx="5.9" ry="1.2" fill="#fff" opacity="0.61" class="b1"/><ellipse cx="337.6" cy="115.3" rx="2.9" ry="1.3" fill="#000" opacity="0.51" class="b1"/><ellipse cx="163.6" cy="116.0" rx="2.1" ry="1.7" fill="#fff" opacity="0.34" class="b1"/><ellipse cx="330.0" cy="113.2" rx="5.4" ry="1.9" fill="#fff" opacity="0.65" class="b1"/><ellipse cx="256.0" cy="114.7" rx="3.8" ry="2.0" fill="#fff" opacity="0.31" class="b1"/><ellipse cx="346.1" cy="116.7" rx="2.7" ry="1.4" fill="#000" opacity="0.62" class="b1"/><ellipse cx="299.2" cy="113.8" rx="4.0" ry="1.8" fill="#000" opacity="0.69" class="b1"/><ellipse cx="222.0" cy="116.6" rx="4.0" ry="1.3" fill="#000" opacity="0.70" class="b1"/><ellipse cx="79.4" cy="108.9" rx="3.0" ry="1.7" fill="#fff" opacity="0.48" class="b1"/><ellipse cx="278.9" cy="111.2" rx="3.7" ry="1.5" fill="#000" opacity="0.34" class="b1"/><ellipse cx="308.3" cy="113.6" rx="4.8" ry="2.0" fill="#000" opacity="0.49" class="b1"/><ellipse cx="120.5" cy="111.9" rx="4.5" ry="1.9" fill="#fff" opacity="0.45" class="b1"/><ellipse cx="29.8" cy="112.7" rx="2.1" ry="1.8" fill="#fff" opacity="0.78" class="b1"/><ellipse cx="183.3" cy="118.7" rx="5.0" ry="1.8" fill="#000" opacity="0.34" class="b1"/><ellipse cx="165.8" cy="119.1" rx="4.0" ry="1.4" fill="#fff" opacity="0.73" class="b1"/><ellipse cx="87.7" cy="109.8" rx="5.3" ry="1.5" fill="#fff" opacity="0.52" class="b1"/><ellipse cx="350.2" cy="118.7" rx="5.9" ry="1.4" fill="#000" opacity="0.49" class="b1"/><ellipse cx="76.9" cy="106.4" rx="3.5" ry="2.0" fill="#fff" opacity="0.49" class="b1"/><ellipse cx="185.0" cy="117.9" rx="4.9" ry="1.4" fill="#000" opacity="0.32" class="b1"/><ellipse cx="246.0" cy="115.7" rx="5.1" ry="1.4" fill="#fff" opacity="0.67" class="b1"/><ellipse cx="138.7" cy="115.2" rx="3.0" ry="1.5" fill="#000" opacity="0.73" class="b1"/><ellipse cx="208.9" cy="114.0" rx="3.2" ry="2.0" fill="#fff" opacity="0.55" class="b1"/><ellipse cx="51.3" cy="118.9" rx="5.9" ry="2.1" fill="#fff" opacity="0.35" class="b1"/><ellipse cx="69.6" cy="110.1" rx="5.1" ry="2.0" fill="#fff" opacity="0.64" class="b1"/><ellipse cx="298.5" cy="114.2" rx="4.1" ry="1.6" fill="#fff" opacity="0.67" class="b1"/><ellipse cx="40.1" cy="116.0" rx="2.5" ry="1.5" fill="#000" opacity="0.33" class="b1"/><ellipse cx="350.5" cy="114.9" rx="2.4" ry="2.1" fill="#000" opacity="0.64" class="b1"/><ellipse cx="281.1" cy="110.5" rx="2.6" ry="2.1" fill="#000" opacity="0.31" class="b1"/><ellipse cx="49.0" cy="113.4" rx="4.3" ry="1.5" fill="#000" opacity="0.51" class="b1"/><ellipse cx="223.4" cy="119.7" rx="5.2" ry="1.3" fill="#fff" opacity="0.78" class="b1"/><ellipse cx="68.5" cy="111.6" rx="2.5" ry="1.4" fill="#000" opacity="0.38" class="b1"/><ellipse cx="63.6" cy="111.5" rx="5.8" ry="2.2" fill="#000" opacity="0.75" class="b1"/><ellipse cx="176.0" cy="121.1" rx="5.9" ry="2.0" fill="#000" opacity="0.31" class="b1"/><ellipse cx="310.6" cy="112.4" rx="2.5" ry="1.3" fill="#fff" opacity="0.55" class="b1"/><ellipse cx="113.4" cy="110.3" rx="4.3" ry="1.6" fill="#fff" opacity="0.45" class="b1"/><ellipse cx="260.5" cy="112.0" rx="4.9" ry="1.4" fill="#fff" opacity="0.36" class="b1"/><ellipse cx="8.0" cy="112.0" rx="4.1" ry="1.5" fill="#fff" opacity="0.44" class="b1"/><ellipse cx="252.1" cy="117.1" rx="2.5" ry="1.4" fill="#000" opacity="0.77" class="b1"/><ellipse cx="299.6" cy="111.7" rx="5.1" ry="1.6" fill="#fff" opacity="0.55" class="b1"/><ellipse cx="206.5" cy="117.4" rx="5.6" ry="2.2" fill="#fff" opacity="0.33" class="b1"/><ellipse cx="323.2" cy="115.8" rx="5.8" ry="1.6" fill="#fff" opacity="0.45" class="b1"/><ellipse cx="347.7" cy="115.9" rx="5.3" ry="1.9" fill="#000" opacity="0.64" class="b1"/><ellipse cx="311.2" cy="114.6" rx="4.0" ry="1.6" fill="#fff" opacity="0.56" class="b1"/><ellipse cx="167.1" cy="117.9" rx="4.8" ry="1.7" fill="#fff" opacity="0.67" class="b1"/><ellipse cx="21.8" cy="111.1" rx="4.4" ry="1.3" fill="#fff" opacity="0.64" class="b1"/><ellipse cx="224.6" cy="116.1" rx="5.7" ry="1.4" fill="#fff" opacity="0.58" class="b1"/><ellipse cx="107.6" cy="110.3" rx="5.2" ry="1.8" fill="#000" opacity="0.78" class="b1"/><ellipse cx="279.5" cy="114.1" rx="3.2" ry="1.8" fill="#000" opacity="0.34" class="b1"/><ellipse cx="376.6" cy="111.1" rx="3.8" ry="1.8" fill="#000" opacity="0.39" class="b1"/><ellipse cx="482.0" cy="110.2" rx="3.9" ry="1.8" fill="#000" opacity="0.36" class="b1"/><ellipse cx="475.7" cy="109.6" rx="5.9" ry="1.3" fill="#000" opacity="0.73" class="b1"/><ellipse cx="386.9" cy="112.2" rx="2.7" ry="1.7" fill="#000" opacity="0.56" class="b1"/><ellipse cx="482.1" cy="107.3" rx="5.8" ry="1.5" fill="#fff" opacity="0.41" class="b1"/><ellipse cx="529.2" cy="110.5" rx="3.0" ry="1.4" fill="#000" opacity="0.77" class="b1"/><ellipse cx="481.4" cy="107.8" rx="3.7" ry="2.1" fill="#000" opacity="0.34" class="b1"/><ellipse cx="411.2" cy="105.7" rx="2.9" ry="2.2" fill="#000" opacity="0.31" class="b1"/><ellipse cx="525.9" cy="105.1" rx="4.9" ry="2.2" fill="#fff" opacity="0.53" class="b1"/><ellipse cx="582.7" cy="109.4" rx="3.7" ry="1.7" fill="#fff" opacity="0.62" class="b1"/><ellipse cx="556.4" cy="112.2" rx="5.7" ry="2.0" fill="#000" opacity="0.55" class="b1"/><ellipse cx="585.9" cy="112.0" rx="2.2" ry="1.4" fill="#fff" opacity="0.32" class="b1"/><ellipse cx="439.2" cy="111.8" rx="3.4" ry="1.4" fill="#000" opacity="0.65" class="b1"/><ellipse cx="580.7" cy="105.7" rx="2.3" ry="1.6" fill="#fff" opacity="0.71" class="b1"/><ellipse cx="558.3" cy="111.9" rx="3.1" ry="1.5" fill="#000" opacity="0.63" class="b1"/><ellipse cx="635.7" cy="106.3" rx="2.1" ry="2.1" fill="#000" opacity="0.49" class="b1"/><ellipse cx="585.9" cy="104.7" rx="4.0" ry="1.8" fill="#000" opacity="0.74" class="b1"/><ellipse cx="426.0" cy="106.8" rx="5.9" ry="2.0" fill="#fff" opacity="0.47" class="b1"/><ellipse cx="440.1" cy="106.6" rx="2.3" ry="2.0" fill="#fff" opacity="0.64" class="b1"/><ellipse cx="400.0" cy="109.1" rx="2.4" ry="1.5" fill="#000" opacity="0.43" class="b1"/><ellipse cx="560.1" cy="106.5" rx="4.7" ry="1.7" fill="#fff" opacity="0.49" class="b1"/><ellipse cx="571.0" cy="110.7" rx="2.1" ry="1.6" fill="#fff" opacity="0.44" class="b1"/><ellipse cx="406.6" cy="113.3" rx="5.4" ry="1.8" fill="#fff" opacity="0.74" class="b1"/><ellipse cx="563.5" cy="111.8" rx="4.9" ry="1.8" fill="#fff" opacity="0.76" class="b1"/><ellipse cx="642.4" cy="105.4" rx="5.1" ry="1.9" fill="#fff" opacity="0.39" class="b1"/><ellipse cx="451.6" cy="106.0" rx="3.3" ry="1.3" fill="#000" opacity="0.49" class="b1"/><ellipse cx="515.6" cy="111.8" rx="5.4" ry="1.6" fill="#000" opacity="0.69" class="b1"/><ellipse cx="479.7" cy="106.7" rx="4.1" ry="1.8" fill="#fff" opacity="0.79" class="b1"/><ellipse cx="493.5" cy="106.7" rx="5.1" ry="1.8" fill="#000" opacity="0.47" class="b1"/><ellipse cx="508.7" cy="106.9" rx="4.1" ry="1.3" fill="#000" opacity="0.49" class="b1"/><ellipse cx="560.1" cy="110.9" rx="5.5" ry="1.8" fill="#fff" opacity="0.64" class="b1"/><ellipse cx="388.2" cy="106.5" rx="3.6" ry="1.5" fill="#fff" opacity="0.40" class="b1"/><ellipse cx="510.9" cy="106.6" rx="5.2" ry="1.9" fill="#fff" opacity="0.80" class="b1"/><ellipse cx="425.5" cy="110.6" rx="3.5" ry="1.9" fill="#000" opacity="0.36" class="b1"/><ellipse cx="515.3" cy="110.9" rx="3.5" ry="1.8" fill="#000" opacity="0.58" class="b1"/><ellipse cx="491.3" cy="111.7" rx="5.5" ry="1.9" fill="#000" opacity="0.38" class="b1"/><ellipse cx="611.6" cy="111.2" rx="5.4" ry="1.9" fill="#000" opacity="0.34" class="b1"/><ellipse cx="655.4" cy="111.4" rx="4.3" ry="2.2" fill="#000" opacity="0.37" class="b1"/><ellipse cx="427.7" cy="109.4" rx="5.2" ry="1.4" fill="#000" opacity="0.57" class="b1"/><ellipse cx="531.3" cy="104.7" rx="3.1" ry="1.4" fill="#fff" opacity="0.72" class="b1"/><ellipse cx="621.1" cy="111.5" rx="5.2" ry="1.9" fill="#000" opacity="0.65" class="b1"/><ellipse cx="441.5" cy="108.4" rx="5.5" ry="1.7" fill="#000" opacity="0.63" class="b1"/><ellipse cx="409.6" cy="109.7" rx="4.0" ry="1.8" fill="#fff" opacity="0.80" class="b1"/><ellipse cx="636.2" cy="111.1" rx="5.9" ry="1.4" fill="#000" opacity="0.68" class="b1"/><ellipse cx="407.8" cy="111.8" rx="2.9" ry="2.1" fill="#fff" opacity="0.41" class="b1"/><ellipse cx="609.0" cy="106.5" rx="2.6" ry="2.2" fill="#fff" opacity="0.62" class="b1"/><ellipse cx="436.1" cy="109.0" rx="5.7" ry="1.9" fill="#fff" opacity="0.57" class="b1"/><ellipse cx="568.7" cy="104.6" rx="4.8" ry="2.0" fill="#fff" opacity="0.68" class="b1"/><ellipse cx="499.2" cy="105.9" rx="2.7" ry="1.5" fill="#000" opacity="0.41" class="b1"/><ellipse cx="648.4" cy="108.4" rx="4.1" ry="2.1" fill="#fff" opacity="0.47" class="b1"/><ellipse cx="660.8" cy="109.2" rx="3.4" ry="2.1" fill="#fff" opacity="0.63" class="b1"/><ellipse cx="527.1" cy="105.7" rx="4.4" ry="1.3" fill="#000" opacity="0.37" class="b1"/><ellipse cx="530.2" cy="110.4" rx="2.9" ry="2.1" fill="#fff" opacity="0.62" class="b1"/><ellipse cx="411.1" cy="111.3" rx="5.3" ry="1.8" fill="#fff" opacity="0.47" class="b1"/><ellipse cx="658.0" cy="108.9" rx="4.2" ry="1.7" fill="#fff" opacity="0.78" class="b1"/><ellipse cx="508.3" cy="107.9" rx="2.3" ry="1.3" fill="#000" opacity="0.64" class="b1"/><ellipse cx="482.3" cy="105.5" rx="5.1" ry="1.9" fill="#fff" opacity="0.60" class="b1"/><ellipse cx="547.4" cy="104.7" rx="5.7" ry="1.8" fill="#fff" opacity="0.51" class="b1"/><ellipse cx="607.7" cy="106.6" rx="5.5" ry="2.0" fill="#fff" opacity="0.47" class="b1"/><ellipse cx="527.1" cy="107.7" rx="4.3" ry="1.7" fill="#000" opacity="0.30" class="b1"/><ellipse cx="382.5" cy="109.6" rx="6.0" ry="2.1" fill="#fff" opacity="0.74" class="b1"/><ellipse cx="388.4" cy="111.5" rx="5.2" ry="1.3" fill="#000" opacity="0.54" class="b1"/><ellipse cx="583.9" cy="105.9" rx="2.3" ry="1.4" fill="#fff" opacity="0.69" class="b1"/><ellipse cx="381.8" cy="113.8" rx="2.4" ry="1.5" fill="#000" opacity="0.75" class="b1"/><ellipse cx="556.7" cy="106.0" rx="2.8" ry="1.2" fill="#fff" opacity="0.43" class="b1"/><ellipse cx="368.1" cy="109.9" rx="3.4" ry="1.4" fill="#000" opacity="0.63" class="b1"/><ellipse cx="398.0" cy="106.9" rx="3.5" ry="1.4" fill="#fff" opacity="0.61" class="b1"/><ellipse cx="432.8" cy="105.7" rx="2.8" ry="1.8" fill="#fff" opacity="0.59" class="b1"/><ellipse cx="499.7" cy="108.5" rx="5.1" ry="1.3" fill="#fff" opacity="0.37" class="b1"/><ellipse cx="412.6" cy="108.2" rx="2.2" ry="1.5" fill="#000" opacity="0.77" class="b1"/><path d="M655 108 661 98 666 88 671 82 676 88" stroke="#000" stroke-width="3" stroke-opacity="0.80" class="b1"/><path d="M653 103 659 93 665 83 671 76 677 82" stroke="#fff" stroke-width="2.5" stroke-opacity="0.70" class="b1"/><path d="M273 46.4 278 46.3 283 46.2 288 46.5 293 46.6 298 46.5 303 46.6 308 46.5 313 46.5 318 46.5 323 46.8 328 47 333 46.7 338 46.5 343 46.8 348 46.7 353 46.7 358 46.8 363 47.1 368 46.9 373 47 378 47.2 383 47.1 388 47.1 393 46.8 398 46.9 403 46.8 408 46.7 413 46.8 418 46.9 423 46.8 428 46.5 433 46.5 438 46.7 443 46.9 448 46.9 453 47 458 47 463 46.9 468 46.9 473 46.8 478 46.5 483 46.2 488 46.2 493 45.9 498 45.8 503 45.6 508 45.9 513 45.9 518 45.8 523 45.5 528 45.6 533 45.5" stroke="#ffffff" stroke-width="2.1" stroke-opacity="0.20" class="b1"/><path d="M273 46.6 277 47.2 281 46.7 283.8 46.8" stroke="#ffffff" stroke-width="2.9" stroke-opacity="0.42" class="b1 rc"/><path d="M283.8 46.8 287.8 46.5 291.8 47 295.8 46.7 299 47.2" stroke="#ffffff" stroke-width="2.1" stroke-opacity="0.26" class="b1 rc"/><path d="M299.1 46 303.1 45.8 307.1 46.5 311.1 46.9 314.4 46.5" stroke="#ffffff" stroke-width="2.4" stroke-opacity="0.26" class="b1 rc"/><path d="M315.7 46.2 319.7 46.8 321.9 46.5" stroke="#ffffff" stroke-width="3.0" stroke-opacity="0.27" class="b1 rc"/><path d="M321.4 46.1 325.4 45.9 329.4 46.3 331.6 46.3" stroke="#ffffff" stroke-width="2.2" stroke-opacity="0.56" class="b1 rc"/><path d="M332 46.6 336 46.7 340 47 340.3 46.4" stroke="#ffffff" stroke-width="3.0" stroke-opacity="0.59" class="b1 rc"/><path d="M339.1 46.9 343.1 46.8 347.1 47.2 350.3 47.5" stroke="#ffffff" stroke-width="2.3" stroke-opacity="0.51" class="b1 rc"/><path d="M347.5 47 351.5 47 355.5 47.5 357.4 47.3" stroke="#ffffff" stroke-width="2.5" stroke-opacity="0.34" class="b1 rc"/><path d="M357.6 47 361.6 47.1 365.6 47.5 366.1 47.4" stroke="#ffffff" stroke-width="2.6" stroke-opacity="0.44" class="b1 rc"/><path d="M365.9 47.7 369.9 47.7 373.9 47.2 377.9 46.7 381.9 46.9 383.1 47.3" stroke="#ffffff" stroke-width="3.0" stroke-opacity="0.62" class="b1 rc"/><path d="M382.5 47 386.5 47 390.5 47.3 394.5 46.8 398.5 46.4 400.2 46.9" stroke="#ffffff" stroke-width="2.3" stroke-opacity="0.37" class="b1 rc"/><path d="M400.9 46.3 404.9 46.5 408.9 46.7 412.9 46.5 413.4 46.6" stroke="#ffffff" stroke-width="2.2" stroke-opacity="0.34" class="b1 rc"/><path d="M414.5 46.7 418.5 46.9 422.5 46.4 426.5 46.5 430.5 46.4 432 46.6" stroke="#ffffff" stroke-width="2.3" stroke-opacity="0.59" class="b1 rc"/><path d="M432 47.1 436 47.3 440 47.3 440.8 46.7" stroke="#ffffff" stroke-width="2.8" stroke-opacity="0.61" class="b1 rc"/><path d="M440.8 47.3 444.8 46.8 448.8 46.7 452.8 46.4 453.3 46.7" stroke="#ffffff" stroke-width="2.7" stroke-opacity="0.47" class="b1 rc"/><path d="M452.5 47.1 456.5 46.9 458.5 47" stroke="#ffffff" stroke-width="3.0" stroke-opacity="0.28" class="b1 rc"/><path d="M459.2 45.8 463.2 46.4 467.2 46.3 471.2 46.1 475.2 46.2 477.1 46" stroke="#ffffff" stroke-width="2.3" stroke-opacity="0.57" class="b1 rc"/><path d="M475 46.6 479 46.6 483 46 487 46.5 487.7 46.3" stroke="#ffffff" stroke-width="2.9" stroke-opacity="0.39" class="b1 rc"/><path d="M488.5 46.6 492.5 46.1 496.5 45.6 499.8 45.9" stroke="#ffffff" stroke-width="2.4" stroke-opacity="0.36" class="b1 rc"/><path d="M499.4 46.4 503.4 46.2 507.4 46.3 511.4 45.9 513.8 46" stroke="#ffffff" stroke-width="2.8" stroke-opacity="0.45" class="b1 rc"/><path d="M511.6 45.7 515.6 45.5 519.6 45.5 523.5 45.2" stroke="#ffffff" stroke-width="2.7" stroke-opacity="0.66" class="b1 rc"/><path d="M520.9 45.4 524.9 44.9 528.9 44.5 532.9 44.9 533 45.1" stroke="#ffffff" stroke-width="2.3" stroke-opacity="0.49" class="b1 rc"/><path d="M273 51 278 50.9 283 50.8 288 50.9 293 51.1 298 51.1 303 51 308 50.9 313 51.1 318 51.3 323 51.3 328 51.3 333 51.1 338 51.1 343 51.2 348 51.2 353 51.3 358 51.4 363 51.7 368 51.4 373 51.3 378 51.1 383 51.5 388 51.3 393 51.3 398 51.2 403 51 408 50.9 413 50.9 418 50.8 423 51.1 428 51.2 433 51 438 51.1 443 51 448 51.3 453 51 458 50.9 463 51 468 51.3 473 51.1 478 50.9 483 50.9 488 50.8 493 50.5 498 50.6 503 50.7 508 50.3 513 50.1 518 49.9 523 49.8 528 49.8 533 50" stroke="#101010" stroke-width="2.4" stroke-opacity="0.24" class="b1"/><path d="M273 51.3 277 51.4 281 51.4 285 51.1 285.4 51.4" stroke="#101010" stroke-width="2.9" stroke-opacity="0.37" class="b1 rc"/><path d="M282.6 50.1 286.6 50.5 290.6 51 294.6 50.9 295.6 50.6" stroke="#101010" stroke-width="2.3" stroke-opacity="0.74" class="b1 rc"/><path d="M296.3 50.6 300.3 51 304.3 51.5 308.3 51.3 308.6 51" stroke="#101010" stroke-width="3.1" stroke-opacity="0.54" class="b1 rc"/><path d="M307.4 50.6 311.4 51 314.9 50.9" stroke="#101010" stroke-width="3.3" stroke-opacity="0.56" class="b1 rc"/><path d="M312.8 51.5 316.8 51.6 320.8 51.9 324.2 51.4" stroke="#101010" stroke-width="3.1" stroke-opacity="0.40" class="b1 rc"/><path d="M325.4 51.2 329.4 50.9 333.4 50.9 337.4 50.9 337.7 51" stroke="#101010" stroke-width="3.0" stroke-opacity="0.44" class="b1 rc"/><path d="M338 51.2 342 51.2 346 50.7 348.3 50.8" stroke="#101010" stroke-width="2.9" stroke-opacity="0.64" class="b1 rc"/><path d="M349.3 50.9 353.3 50.7 356.1 51.3" stroke="#101010" stroke-width="3.2" stroke-opacity="0.59" class="b1 rc"/><path d="M354.5 51.6 358.5 51.7 362.5 51.8 363.1 52" stroke="#101010" stroke-width="3.1" stroke-opacity="0.51" class="b1 rc"/><path d="M363.8 52.2 367.8 51.7 371.8 51.9 375.8 52.1 379.6 51.8" stroke="#101010" stroke-width="2.5" stroke-opacity="0.70" class="b1 rc"/><path d="M377.8 52.1 381.8 52.2 385.8 51.5 389.8 51.6 392.1 51.6" stroke="#101010" stroke-width="3.0" stroke-opacity="0.63" class="b1 rc"/><path d="M390.7 51.4 394.7 51.6 398.7 51.7 402.7 51.6 406.6 51.3" stroke="#101010" stroke-width="2.3" stroke-opacity="0.60" class="b1 rc"/><path d="M405.1 51.6 409.1 51.2 411.5 51.1" stroke="#101010" stroke-width="3.2" stroke-opacity="0.50" class="b1 rc"/><path d="M412.9 50.5 416.9 51 420.6 50.9" stroke="#101010" stroke-width="2.4" stroke-opacity="0.39" class="b1 rc"/><path d="M420.9 51.6 424.9 51.4 428.9 51.4 432.9 51.1 434.1 51.4" stroke="#101010" stroke-width="2.9" stroke-opacity="0.34" class="b1 rc"/><path d="M432.6 50.4 436.6 50.1 440.6 50.7 444.6 50.8 448.6 50.7 450.1 50.7" stroke="#101010" stroke-width="2.4" stroke-opacity="0.54" class="b1 rc"/><path d="M447.7 51.2 451.7 51.5 455.7 51 459.7 51 463.7 50.8 464.9 51.1" stroke="#101010" stroke-width="2.3" stroke-opacity="0.54" class="b1 rc"/><path d="M466.6 51.4 470.6 51.9 474.6 52.1 478.6 51.9 480.5 51.3" stroke="#101010" stroke-width="3.0" stroke-opacity="0.49" class="b1 rc"/><path d="M478.9 51.1 482.9 51.2 486.9 51.5 487.4 50.9" stroke="#101010" stroke-width="3.1" stroke-opacity="0.65" class="b1 rc"/><path d="M488.3 50.1 492.3 50 496.3 49.8 500.3 49.7 504.3 49.9 505.1 50" stroke="#101010" stroke-width="2.9" stroke-opacity="0.32" class="b1 rc"/><path d="M504.8 50.2 508.8 50 512.8 50.4 516.7 50.3" stroke="#101010" stroke-width="2.8" stroke-opacity="0.53" class="b1 rc"/><path d="M515.4 50 519.4 49.7 522.5 50.2" stroke="#101010" stroke-width="2.8" stroke-opacity="0.51" class="b1 rc"/><path d="M521.4 50.6 525.4 50.6 529.4 50.9 533 50.2" stroke="#101010" stroke-width="2.9" stroke-opacity="0.53" class="b1 rc"/><path d="M273 54.8 278 54.8 283 54.8 288 55 293 55.2 298 55.2 303 55.2 308 55.1 313 55.3 318 55.1 323 55 328 55.1 333 55.3 338 55.4 343 55.3 348 55.3 353 55.2 358 55.1 363 55.4 368 55.4 373 55.4 378 55.7 383 55.7 388 55.4 393 55.6 398 55.6 403 55.3 408 55.2 413 55.4 418 55.2 423 55.2 428 55 433 54.9 438 54.7 443 55 448 54.9 453 55 458 55.1 463 55.2 468 54.9 473 55 478 55.1 483 54.8 488 54.7 493 54.8 498 54.9 503 54.8 508 54.6 513 54.5 518 54.2 523 53.9 528 53.9 533 54" stroke="#ffffff" stroke-width="2.1" stroke-opacity="0.24" class="b1"/><path d="M273 55 277 54.9 281 55.4 285 55 285.7 55.4" stroke="#ffffff" stroke-width="2.0" stroke-opacity="0.46" class="b1 rc"/><path d="M286.6 54.9 290.6 54.6 294.6 54.7 297.9 54.8" stroke="#ffffff" stroke-width="2.4" stroke-opacity="0.57" class="b1 rc"/><path d="M295.7 55.1 299.7 55 302.8 54.7" stroke="#ffffff" stroke-width="2.2" stroke-opacity="0.65" class="b1 rc"/><path d="M303.7 55.3 307.7 55.3 311.7 55.6 315.7 55.5 316.9 55.7" stroke="#ffffff" stroke-width="2.5" stroke-opacity="0.46" class="b1 rc"/><path d="M315.4 55 319.4 55.1 323.4 54.8 327.4 55.2 331.4 55 332.5 55.1" stroke="#ffffff" stroke-width="3.0" stroke-opacity="0.74" class="b1 rc"/><path d="M334.1 54.7 338.1 54.5 342.1 55.3 345.8 55.2" stroke="#ffffff" stroke-width="2.2" stroke-opacity="0.61" class="b1 rc"/><path d="M347.6 55.8 351.6 56 355.6 55.5 356.9 55.9" stroke="#ffffff" stroke-width="2.0" stroke-opacity="0.31" class="b1 rc"/><path d="M354.7 55.5 358.7 55.8 362.7 55.7 366.7 55.9 367.5 55.6" stroke="#ffffff" stroke-width="2.1" stroke-opacity="0.68" class="b1 rc"/><path d="M368.7 55.1 372.7 54.8 376.7 54.6 380.7 54.3 383.7 55.1" stroke="#ffffff" stroke-width="2.0" stroke-opacity="0.57" class="b1 rc"/><path d="M383.7 55.8 387.7 55.7 391.7 56 395.7 55.5 399.7 55.2 401.1 55.7" stroke="#ffffff" stroke-width="2.3" stroke-opacity="0.34" class="b1 rc"/><path d="M401.7 55 405.7 54.7 409.7 54.8 410.5 55.2" stroke="#ffffff" stroke-width="2.2" stroke-opacity="0.31" class="b1 rc"/><path d="M411.2 56.1 415.2 55.8 419.2 55.3 422.7 55.6" stroke="#ffffff" stroke-width="2.3" stroke-opacity="0.43" class="b1 rc"/><path d="M421.7 55.2 425.7 55.6 429.7 55.9 430.5 55.4" stroke="#ffffff" stroke-width="2.6" stroke-opacity="0.51" class="b1 rc"/><path d="M428.7 55.3 432.7 55.7 436.7 55.3 440.7 55 443 55.4" stroke="#ffffff" stroke-width="2.7" stroke-opacity="0.50" class="b1 rc"/><path d="M444.5 54.6 448.5 54.8 452.5 54.7 456.5 54.9 460.5 55.2 462 54.7" stroke="#ffffff" stroke-width="2.4" stroke-opacity="0.72" class="b1 rc"/><path d="M460.8 54.5 464.8 55 468.8 54.5 472.8 54.5" stroke="#ffffff" stroke-width="2.6" stroke-opacity="0.33" class="b1 rc"/><path d="M470.9 54.8 474.9 54.4 477.9 54.5" stroke="#ffffff" stroke-width="2.1" stroke-opacity="0.35" class="b1 rc"/><path d="M478.1 54.6 482.1 54.1 486.1 54.2 490.1 53.7 494.1 53.6 495.6 54.1" stroke="#ffffff" stroke-width="2.2" stroke-opacity="0.42" class="b1 rc"/><path d="M497.1 53.9 501.1 53.8 505.1 53.4 508 53.9" stroke="#ffffff" stroke-width="2.3" stroke-opacity="0.37" class="b1 rc"/><path d="M507 54.9 511 55.1 515 55.4 519 55 522.5 54.7" stroke="#ffffff" stroke-width="2.8" stroke-opacity="0.63" class="b1 rc"/><path d="M520.7 53.8 524.7 53.9 528.7 54.1 532.7 53.5" stroke="#ffffff" stroke-width="2.3" stroke-opacity="0.40" class="b1 rc"/><path d="M531.7 53.6 533 53.9" stroke="#ffffff" stroke-width="2.1" stroke-opacity="0.41" class="b1 rc"/><path d="M532.7 54 533 54.4" stroke="#ffffff" stroke-width="2.8" stroke-opacity="0.58" class="b1 rc"/><path d="M532.9 53.6 533 53.9" stroke="#ffffff" stroke-width="2.9" stroke-opacity="0.57" class="b1 rc"/><path d="M531.2 53.8 533 53.6" stroke="#ffffff" stroke-width="2.5" stroke-opacity="0.47" class="b1 rc"/><path d="M531.9 54.9 533 54.5" stroke="#ffffff" stroke-width="2.2" stroke-opacity="0.51" class="b1 rc"/><path d="M532.9 54.1 533 53.7" stroke="#ffffff" stroke-width="2.6" stroke-opacity="0.40" class="b1 rc"/><path d="M532.6 54.7 533 54.4" stroke="#ffffff" stroke-width="2.2" stroke-opacity="0.60" class="b1 rc"/><path d="M530.8 54.2 533 53.9" stroke="#ffffff" stroke-width="2.9" stroke-opacity="0.40" class="b1 rc"/><path d="M530.5 54.5 533 54" stroke="#ffffff" stroke-width="2.5" stroke-opacity="0.41" class="b1 rc"/><path d="M530.1 54 533 53.6" stroke="#ffffff" stroke-width="2.9" stroke-opacity="0.72" class="b1 rc"/><path d="M531.2 53.3 533 53.6" stroke="#ffffff" stroke-width="2.4" stroke-opacity="0.55" class="b1 rc"/><path d="M531.8 53 533 53.5" stroke="#ffffff" stroke-width="2.7" stroke-opacity="0.53" class="b1 rc"/><path d="M273 60.1 278 59.8 283 59.9 288 60.1 293 60 298 60.2 303 60 308 60.3 313 60.2 318 60.2 323 60.1 328 60.3 333 60.5 338 60.2 343 60.4 348 60.4 353 60.3 358 60.4 363 60.6 368 60.6 373 60.7 378 60.7 383 60.4 388 60.6 393 60.6 398 60.5 403 60.3 408 60.1 413 60.1 418 60.1 423 60.3 428 60.3 433 60.3 438 60.4 443 60.4 448 60.3 453 60.1 458 59.9 463 60 468 59.8 473 59.8 478 59.8 483 59.8 488 59.7 493 59.9 498 59.4 503 59.4 508 59.6 513 59.4 518 59.3 523 59.1 528 59.2 533 59" stroke="#101010" stroke-width="2.4" stroke-opacity="0.24" class="b1"/><path d="M273 60.8 277 60.8 281 60.6 285 60.7 287.1 60.6" stroke="#101010" stroke-width="2.5" stroke-opacity="0.63" class="b1 rc"/><path d="M285.8 60.1 289.8 59.9 293.8 59.5 297 59.8" stroke="#101010" stroke-width="3.2" stroke-opacity="0.39" class="b1 rc"/><path d="M294.2 59.9 298.2 59.6 302.2 59.9 305.1 59.6" stroke="#101010" stroke-width="3.0" stroke-opacity="0.74" class="b1 rc"/><path d="M305.2 59.6 309.2 60 313.2 59.5 317.2 59.8 318.5 60.1" stroke="#101010" stroke-width="2.4" stroke-opacity="0.56" class="b1 rc"/><path d="M320.3 59.6 324.3 60 328.3 60.4 331.2 59.9" stroke="#101010" stroke-width="2.4" stroke-opacity="0.72" class="b1 rc"/><path d="M331 60.5 335 60.8 339 60.4 343 60.2 347 60.9 347.2 60.8" stroke="#101010" stroke-width="2.3" stroke-opacity="0.68" class="b1 rc"/><path d="M345.4 59.4 349.4 60 353.4 59.5 357.4 59.3 361.4 59.8 362.2 60" stroke="#101010" stroke-width="2.7" stroke-opacity="0.54" class="b1 rc"/><path d="M359.5 60.5 363.5 60.7 367.5 60.4 368.5 60.5" stroke="#101010" stroke-width="2.4" stroke-opacity="0.47" class="b1 rc"/><path d="M369.3 60.8 373.3 61.1 377.3 61.1 380.9 60.7" stroke="#101010" stroke-width="3.2" stroke-opacity="0.44" class="b1 rc"/><path d="M382 60.1 386 60.6 390 60 394 60.1 397.8 60.2" stroke="#101010" stroke-width="2.5" stroke-opacity="0.43" class="b1 rc"/><path d="M394.8 60.7 398.8 60.4 401.6 60.3" stroke="#101010" stroke-width="3.2" stroke-opacity="0.58" class="b1 rc"/><path d="M403.6 59.8 407.6 59.8 411.6 59.8 415.6 59.6 419.6 59.4 420.1 60" stroke="#101010" stroke-width="2.5" stroke-opacity="0.54" class="b1 rc"/><path d="M422 60.3 426 59.8 430 59.9 434 60.4 438 60.2 439.7 60.1" stroke="#101010" stroke-width="2.6" stroke-opacity="0.47" class="b1 rc"/><path d="M437.5 59.5 441.5 60 445.5 60.1 449.5 59.7 452.5 59.9" stroke="#101010" stroke-width="3.2" stroke-opacity="0.64" class="b1 rc"/><path d="M453.9 59.8 457.9 59.7 461.9 59.3 465.9 59 469.6 59.7" stroke="#101010" stroke-width="2.4" stroke-opacity="0.51" class="b1 rc"/><path d="M469.5 59.5 473.5 59.3 477.5 59.1 481.5 59 484.6 59.3" stroke="#101010" stroke-width="2.4" stroke-opacity="0.35" class="b1 rc"/><path d="M485.2 59.8 489.2 59.8 493.2 60.2 494.8 59.9" stroke="#101010" stroke-width="3.0" stroke-opacity="0.33" class="b1 rc"/><path d="M495.6 59.8 499.6 59.6 503.6 59.4 507.6 59.2 509.8 59.2" stroke="#101010" stroke-width="3.2" stroke-opacity="0.71" class="b1 rc"/><path d="M507.9 59.7 511.9 59.4 514.7 59.9" stroke="#101010" stroke-width="2.3" stroke-opacity="0.32" class="b1 rc"/><path d="M515 58.9 519 59.2 523 59.1 527 58.6 530.3 58.9" stroke="#101010" stroke-width="2.5" stroke-opacity="0.33" class="b1 rc"/><path d="M531.6 59.2 533 59.3" stroke="#101010" stroke-width="2.8" stroke-opacity="0.57" class="b1 rc"/><path d="M273 64.9 278 64.9 283 65 288 65 293 65.1 298 65.2 303 65.3 308 65.3 313 65.2 318 65.5 323 65.5 328 65.6 333 65.3 338 65.3 343 65.2 348 65.5 353 65.4 358 65.2 363 65.3 368 65.6 373 65.5 378 65.4 383 65.3 388 65.2 393 65.1 398 65.1 403 65.2 408 65.1 413 65.4 418 65.5 423 65.2 428 65.3 433 65.2 438 65 443 64.9 448 64.9 453 65.2 458 65.2 463 65.3 468 65.1 473 65.1 478 64.9 483 64.8 488 64.9 493 65 498 64.7 503 64.6 508 64.7 513 64.5 518 64.2 523 63.9 528 63.7 533 64" stroke="#ffffff" stroke-width="2.1" stroke-opacity="0.12" class="b1"/><path d="M273 65.6 277 65.6 281 65.8 285 65.2 285.6 65.3" stroke="#ffffff" stroke-width="2.7" stroke-opacity="0.38" class="b1 rc"/><path d="M285.6 64.6 289.6 64.2 293.6 64.1 297.6 64.4 301.1 64.6" stroke="#ffffff" stroke-width="2.3" stroke-opacity="0.43" class="b1 rc"/><path d="M302.6 64.2 306.6 64.3 310.6 64.5 314.6 64.5 316 64.7" stroke="#ffffff" stroke-width="2.7" stroke-opacity="0.35" class="b1 rc"/><path d="M313.7 64.8 317.7 65.2 321.7 64.6 323 64.9" stroke="#ffffff" stroke-width="2.5" stroke-opacity="0.24" class="b1 rc"/><path d="M321.7 65.5 325.7 65.7 329.7 65.5 333.7 66 336.4 65.4" stroke="#ffffff" stroke-width="2.4" stroke-opacity="0.16" class="b1 rc"/><path d="M335.7 65.4 339.7 65.6 343.7 65.5 345.1 65.4" stroke="#ffffff" stroke-width="2.5" stroke-opacity="0.30" class="b1 rc"/><path d="M345.1 65.7 349.1 66 353.1 65.8 357.1 65.9 360.7 65.4" stroke="#ffffff" stroke-width="2.6" stroke-opacity="0.44" class="b1 rc"/><path d="M362.1 65.3 366.1 65.6 370.1 65.7 374.1 65.5 378.1 65.2 379.3 65.4" stroke="#ffffff" stroke-width="2.1" stroke-opacity="0.42" class="b1 rc"/><path d="M377.8 65.2 381.8 64.9 385.8 64.7 389.8 64.3 392.3 64.8" stroke="#ffffff" stroke-width="2.4" stroke-opacity="0.27" class="b1 rc"/><path d="M389.5 65.2 393.5 65.2 397.5 64.9 398.7 64.9" stroke="#ffffff" stroke-width="2.5" stroke-opacity="0.23" class="b1 rc"/><path d="M398.4 65.2 402.4 65.2 406.4 65.2 407.7 65.5" stroke="#ffffff" stroke-width="2.7" stroke-opacity="0.41" class="b1 rc"/><path d="M407.7 65.9 411.7 65.5 415.7 65 417.3 65.6" stroke="#ffffff" stroke-width="2.6" stroke-opacity="0.35" class="b1 rc"/><path d="M417.5 65.3 421.5 64.6 425.5 65 429.5 65.2 432.5 64.7" stroke="#ffffff" stroke-width="2.4" stroke-opacity="0.36" class="b1 rc"/><path d="M429.8 65.2 433.8 65.3 437.8 65.6 439.9 65.5" stroke="#ffffff" stroke-width="2.8" stroke-opacity="0.27" class="b1 rc"/><path d="M438.6 65.4 442.6 65.3 446.6 65.1 450.6 65.4 454.6 64.9 455 65.2" stroke="#ffffff" stroke-width="2.1" stroke-opacity="0.29" class="b1 rc"/><path d="M454.7 64.4 458.7 64.6 462.3 64.6" stroke="#ffffff" stroke-width="2.3" stroke-opacity="0.21" class="b1 rc"/><path d="M462.2 65.8 466.2 65.9 468.5 65.4" stroke="#ffffff" stroke-width="2.3" stroke-opacity="0.44" class="b1 rc"/><path d="M466.9 64.9 470.9 65 474.9 64.7 477.2 65.3" stroke="#ffffff" stroke-width="2.1" stroke-opacity="0.23" class="b1 rc"/><path d="M474.9 64.7 478.9 64.7 482.9 64.9 485.9 64.6" stroke="#ffffff" stroke-width="2.3" stroke-opacity="0.45" class="b1 rc"/><path d="M486 65.2 490 65.6 494 65.5 498 65 502 65.2 502.2 65" stroke="#ffffff" stroke-width="2.1" stroke-opacity="0.26" class="b1 rc"/><path d="M503 64.5 507 64.9 511 64.4 515 64.4 519 64 519 64.2" stroke="#ffffff" stroke-width="2.7" stroke-opacity="0.37" class="b1 rc"/><path d="M520.8 63.7 524.8 63.6 528.8 63.7 532.8 63.4 533 63.8" stroke="#ffffff" stroke-width="2.8" stroke-opacity="0.44" class="b1 rc"/><path d="M532.6 64.4 533 64.5" stroke="#ffffff" stroke-width="2.0" stroke-opacity="0.28" class="b1 rc"/><path d="M532.5 63.9 533 63.6" stroke="#ffffff" stroke-width="2.9" stroke-opacity="0.17" class="b1 rc"/><path d="M531.7 63.6 533 63.6" stroke="#ffffff" stroke-width="3.0" stroke-opacity="0.34" class="b1 rc"/><path d="M530.7 63.8 533 64.1" stroke="#ffffff" stroke-width="2.4" stroke-opacity="0.31" class="b1 rc"/><path d="M530.7 63.4 533 63.8" stroke="#ffffff" stroke-width="2.7" stroke-opacity="0.44" class="b1 rc"/><path d="M532.5 64.4 533 64.4" stroke="#ffffff" stroke-width="2.5" stroke-opacity="0.22" class="b1 rc"/><path d="M353 70.9 358 70.8 363 70.6 368 70.6 373 70.8 378 71 383 70.9 388 70.6 393 70.5 398 70.4 403 70.7 408 70.6 413 70.8 418 70.9 423 70.8 428 70.7 433 70.4 438 70.5 443 70.3 448 70.2 453 70.4 458 70.5 463 70.6 468 70.2 473 70.2 478 70.2 483 70.2 488 70.2 493 70.1 498 70.3 503 70.4 508 70.3 513 70.3 518 70.1 523 69.9 528 69.9 533 70" stroke="#ffffff" stroke-width="2.4" stroke-opacity="0.24" class="b1"/><path d="M353 70.8 357 70.1 361 70.6 364.2 70.4" stroke="#ffffff" stroke-width="3.3" stroke-opacity="0.71" class="b1 rc"/><path d="M366 70.6 370 70.2 374 70.1 377 70.3" stroke="#ffffff" stroke-width="3.3" stroke-opacity="0.57" class="b1 rc"/><path d="M374.9 71.3 378.9 71.5 382.9 71.1 384.5 71.1" stroke="#ffffff" stroke-width="2.4" stroke-opacity="0.75" class="b1 rc"/><path d="M382.1 71 386.1 70.9 390.1 71.1 394.1 71.3 396.4 71.1" stroke="#ffffff" stroke-width="2.8" stroke-opacity="0.35" class="b1 rc"/><path d="M394 71.1 398 71.2 402 71.4 406 71.2 407.6 70.7" stroke="#ffffff" stroke-width="2.9" stroke-opacity="0.67" class="b1 rc"/><path d="M408.4 70.7 412.4 70.5 416.4 70.6 420.4 70.7 421.2 70.9" stroke="#ffffff" stroke-width="2.5" stroke-opacity="0.40" class="b1 rc"/><path d="M420 70.4 424 70.5 428 70.9 429.8 70.8" stroke="#ffffff" stroke-width="2.8" stroke-opacity="0.78" class="b1 rc"/><path d="M428.6 71.5 432.6 71.1 436.6 71.2 439.4 71.1" stroke="#ffffff" stroke-width="3.2" stroke-opacity="0.65" class="b1 rc"/><path d="M440.1 70.6 444.1 70.6 448.1 70.5 449 70.6" stroke="#ffffff" stroke-width="2.8" stroke-opacity="0.38" class="b1 rc"/><path d="M447.4 70.3 451.4 70.5 455.4 70.5 458.1 69.9" stroke="#ffffff" stroke-width="3.1" stroke-opacity="0.37" class="b1 rc"/><path d="M459.1 70.5 463.1 70.2 467.1 70.5 467.2 70" stroke="#ffffff" stroke-width="2.5" stroke-opacity="0.72" class="b1 rc"/><path d="M467.4 71.2 471.4 71.4 475.4 71.6 476.2 70.8" stroke="#ffffff" stroke-width="2.5" stroke-opacity="0.66" class="b1 rc"/><path d="M475 70.4 479 70.5 483 70.1 483.1 70.7" stroke="#ffffff" stroke-width="2.8" stroke-opacity="0.76" class="b1 rc"/><path d="M482.8 71.2 486.8 71.3 488.9 70.6" stroke="#ffffff" stroke-width="2.3" stroke-opacity="0.45" class="b1 rc"/><path d="M487.9 70.6 491.9 70.8 495.9 70.2 499.9 70.5 501.9 70.1" stroke="#ffffff" stroke-width="3.3" stroke-opacity="0.75" class="b1 rc"/><path d="M503.1 70.9 507.1 70.5 511.1 70.8 515.1 70.7 515.3 70.5" stroke="#ffffff" stroke-width="2.7" stroke-opacity="0.67" class="b1 rc"/><path d="M516.5 70.5 520.5 70 524.5 70.3 528.5 70.6 529.8 70.3" stroke="#ffffff" stroke-width="2.7" stroke-opacity="0.44" class="b1 rc"/><path d="M528.2 69.2 532.2 69.6 533 69.5" stroke="#ffffff" stroke-width="2.8" stroke-opacity="0.43" class="b1 rc"/><path d="M353 75.3 358 75.4 363 75.6 368 75.4 373 75.2 378 75.2 383 75.3 388 75.2 393 75.4 398 75.3 403 75.1 408 75.1 413 75.3 418 75.4 423 75.5 428 75.2 433 75.3 438 75.4 443 75.4 448 75.2 453 75.2 458 75.1 463 75.2 468 74.9 473 74.8 478 74.5 483 74.7 488 74.4 493 74.7 498 74.7 503 74.8 508 74.7 513 74.5 518 74.6 523 74.7 528 74.8 533 74.5" stroke="#050505" stroke-width="2.7" stroke-opacity="0.28" class="b1"/><path d="M353 75.3 357 75.4 361 75.6 363.9 75.6" stroke="#050505" stroke-width="3.0" stroke-opacity="0.70" class="b1 rc"/><path d="M364.3 74.6 368.3 75.2 372.3 74.7 376.3 75.2 376.9 75" stroke="#050505" stroke-width="3.6" stroke-opacity="0.63" class="b1 rc"/><path d="M378.4 76.1 382.4 75.6 386.4 75.2 386.6 75.7" stroke="#050505" stroke-width="3.5" stroke-opacity="0.66" class="b1 rc"/><path d="M386.1 75.4 390.1 75.3 394.1 75.3 398.1 75.7 399.3 75.3" stroke="#050505" stroke-width="3.5" stroke-opacity="0.56" class="b1 rc"/><path d="M400 75 404 74.8 408 74.8 412 74.9 412.5 75.1" stroke="#050505" stroke-width="3.8" stroke-opacity="0.77" class="b1 rc"/><path d="M411.3 76.1 415.3 76.2 417.8 75.6" stroke="#050505" stroke-width="3.1" stroke-opacity="0.59" class="b1 rc"/><path d="M416.9 74.5 420.9 74.9 424.9 75.1 427.8 74.6" stroke="#050505" stroke-width="3.2" stroke-opacity="0.40" class="b1 rc"/><path d="M429.7 74.8 433.7 74.4 437.7 74.7 439.8 74.5" stroke="#050505" stroke-width="3.2" stroke-opacity="0.57" class="b1 rc"/><path d="M438.5 74.2 442.5 74.6 445.9 74.4" stroke="#050505" stroke-width="3.6" stroke-opacity="0.84" class="b1 rc"/><path d="M446 74.8 450 74.7 454 75.3 457.9 75.2" stroke="#050505" stroke-width="3.1" stroke-opacity="0.87" class="b1 rc"/><path d="M459.8 75.2 463.8 75.4 467.8 74.9 469.2 75.2" stroke="#050505" stroke-width="3.2" stroke-opacity="0.40" class="b1 rc"/><path d="M467.3 74.3 471.3 74 473.6 74.5" stroke="#050505" stroke-width="3.1" stroke-opacity="0.93" class="b1 rc"/><path d="M474.5 75 478.5 74.8 482.5 74.4 486.1 74.8" stroke="#050505" stroke-width="2.6" stroke-opacity="0.87" class="b1 rc"/><path d="M487.9 74.6 491.9 74.4 495.9 74.7 497.7 74.9" stroke="#050505" stroke-width="2.9" stroke-opacity="0.81" class="b1 rc"/><path d="M499.4 74.8 503.4 75 507.4 74.3 511.2 74.4" stroke="#050505" stroke-width="3.2" stroke-opacity="0.83" class="b1 rc"/><path d="M510.7 74.8 514.7 74.9 518.7 74.5 522.7 74.4 524.9 74.5" stroke="#050505" stroke-width="3.0" stroke-opacity="0.80" class="b1 rc"/><path d="M523.6 74.1 527.6 73.6 531.4 74.1" stroke="#050505" stroke-width="3.2" stroke-opacity="0.65" class="b1 rc"/><path d="M531.2 75 533 74.9" stroke="#050505" stroke-width="3.4" stroke-opacity="0.57" class="b1 rc"/><ellipse cx="458.0" cy="63.4" rx="3.5" ry="1.7" fill="#000" opacity="0.55" class="b1"/><ellipse cx="452.0" cy="59.8" rx="3.5" ry="2.0" fill="#000" opacity="0.40" class="b1"/><ellipse cx="400.9" cy="53.1" rx="2.4" ry="1.6" fill="#000" opacity="0.38" class="b1"/><ellipse cx="397.5" cy="51.2" rx="2.1" ry="1.7" fill="#000" opacity="0.29" class="b1"/><ellipse cx="468.4" cy="61.4" rx="2.2" ry="1.4" fill="#fff" opacity="0.25" class="b1"/><ellipse cx="275.8" cy="57.4" rx="4.3" ry="1.8" fill="#000" opacity="0.55" class="b1"/><ellipse cx="273.5" cy="62.4" rx="3.2" ry="1.4" fill="#000" opacity="0.42" class="b1"/><ellipse cx="311.8" cy="62.1" rx="4.4" ry="1.5" fill="#000" opacity="0.37" class="b1"/><ellipse cx="532.9" cy="62.0" rx="4.8" ry="1.6" fill="#000" opacity="0.28" class="b1"/><ellipse cx="339.7" cy="60.4" rx="2.3" ry="1.3" fill="#fff" opacity="0.35" class="b1"/><ellipse cx="441.3" cy="45.7" rx="3.5" ry="1.7" fill="#000" opacity="0.60" class="b1"/><ellipse cx="435.6" cy="62.7" rx="3.6" ry="1.8" fill="#fff" opacity="0.24" class="b1"/><ellipse cx="419.7" cy="57.1" rx="4.5" ry="1.5" fill="#000" opacity="0.49" class="b1"/><ellipse cx="385.1" cy="53.9" rx="3.1" ry="1.9" fill="#fff" opacity="0.47" class="b1"/><ellipse cx="390.4" cy="63.7" rx="4.8" ry="1.8" fill="#fff" opacity="0.25" class="b1"/><ellipse cx="502.0" cy="57.2" rx="4.1" ry="1.7" fill="#fff" opacity="0.26" class="b1"/><ellipse cx="456.8" cy="48.7" rx="3.4" ry="1.9" fill="#000" opacity="0.34" class="b1"/><ellipse cx="454.5" cy="51.2" rx="2.2" ry="1.6" fill="#fff" opacity="0.46" class="b1"/><ellipse cx="412.2" cy="58.0" rx="2.7" ry="2.0" fill="#fff" opacity="0.21" class="b1"/><ellipse cx="370.0" cy="64.9" rx="2.9" ry="1.7" fill="#000" opacity="0.46" class="b1"/><ellipse cx="327.7" cy="49.5" rx="2.4" ry="1.3" fill="#fff" opacity="0.47" class="b1"/><ellipse cx="324.8" cy="47.6" rx="4.6" ry="1.6" fill="#000" opacity="0.27" class="b1"/><ellipse cx="462.3" cy="60.0" rx="3.8" ry="1.5" fill="#000" opacity="0.38" class="b1"/><ellipse cx="501.8" cy="54.5" rx="4.2" ry="1.8" fill="#fff" opacity="0.47" class="b1"/><ellipse cx="348.8" cy="57.4" rx="2.2" ry="1.6" fill="#000" opacity="0.25" class="b1"/><ellipse cx="323.0" cy="55.9" rx="2.5" ry="1.9" fill="#fff" opacity="0.39" class="b1"/><ellipse cx="476.0" cy="58.1" rx="2.1" ry="1.4" fill="#000" opacity="0.21" class="b1"/><ellipse cx="365.7" cy="52.4" rx="4.9" ry="1.3" fill="#000" opacity="0.40" class="b1"/><ellipse cx="432.9" cy="50.4" rx="2.7" ry="1.6" fill="#000" opacity="0.22" class="b1"/><ellipse cx="316.1" cy="54.0" rx="4.2" ry="1.9" fill="#000" opacity="0.24" class="b1"/><ellipse cx="414.3" cy="61.5" rx="3.7" ry="2.0" fill="#fff" opacity="0.52" class="b1"/><ellipse cx="332.0" cy="59.6" rx="2.4" ry="1.8" fill="#fff" opacity="0.37" class="b1"/><ellipse cx="513.9" cy="52.8" rx="3.0" ry="1.5" fill="#000" opacity="0.26" class="b1"/><ellipse cx="479.0" cy="63.3" rx="4.5" ry="1.2" fill="#000" opacity="0.53" class="b1"/><ellipse cx="397.7" cy="46.4" rx="2.4" ry="1.8" fill="#000" opacity="0.57" class="b1"/><ellipse cx="360.4" cy="57.5" rx="4.6" ry="2.0" fill="#000" opacity="0.47" class="b1"/><ellipse cx="353.4" cy="59.6" rx="2.1" ry="1.4" fill="#000" opacity="0.38" class="b1"/><ellipse cx="333.1" cy="50.4" rx="4.0" ry="1.9" fill="#000" opacity="0.57" class="b1"/><ellipse cx="331.0" cy="47.9" rx="2.7" ry="1.9" fill="#fff" opacity="0.43" class="b1"/><ellipse cx="474.5" cy="47.7" rx="2.2" ry="1.3" fill="#000" opacity="0.31" class="b1"/><ellipse cx="302.4" cy="57.4" rx="3.7" ry="1.6" fill="#fff" opacity="0.31" class="b1"/><ellipse cx="286.4" cy="50.7" rx="4.6" ry="2.0" fill="#fff" opacity="0.22" class="b1"/><ellipse cx="411.2" cy="56.7" rx="2.6" ry="1.6" fill="#000" opacity="0.50" class="b1"/><ellipse cx="295.0" cy="51.2" rx="4.8" ry="1.9" fill="#fff" opacity="0.35" class="b1"/><ellipse cx="440.1" cy="57.6" rx="2.2" ry="1.9" fill="#fff" opacity="0.31" class="b1"/><ellipse cx="325.8" cy="50.3" rx="4.2" ry="1.9" fill="#fff" opacity="0.59" class="b1"/><ellipse cx="392.2" cy="49.1" rx="2.5" ry="1.7" fill="#000" opacity="0.37" class="b1"/><ellipse cx="343.0" cy="56.5" rx="4.6" ry="1.8" fill="#000" opacity="0.50" class="b1"/><ellipse cx="480.1" cy="60.8" rx="2.7" ry="1.6" fill="#fff" opacity="0.56" class="b1"/><ellipse cx="393.3" cy="56.5" rx="4.6" ry="1.4" fill="#fff" opacity="0.44" class="b1"/><ellipse cx="512.1" cy="52.5" rx="3.7" ry="1.6" fill="#000" opacity="0.38" class="b1"/><ellipse cx="468.0" cy="47.4" rx="3.4" ry="1.8" fill="#000" opacity="0.40" class="b1"/><ellipse cx="316.8" cy="56.0" rx="2.0" ry="1.7" fill="#000" opacity="0.56" class="b1"/><ellipse cx="458.9" cy="58.2" rx="2.7" ry="1.6" fill="#fff" opacity="0.29" class="b1"/><ellipse cx="307.7" cy="50.3" rx="4.3" ry="1.4" fill="#000" opacity="0.42" class="b1"/><ellipse cx="471.9" cy="62.1" rx="3.7" ry="1.9" fill="#fff" opacity="0.33" class="b1"/><ellipse cx="356.7" cy="54.9" rx="4.0" ry="2.0" fill="#fff" opacity="0.55" class="b1"/><ellipse cx="319.8" cy="57.2" rx="2.0" ry="1.4" fill="#fff" opacity="0.49" class="b1"/><ellipse cx="478.9" cy="56.6" rx="2.9" ry="1.9" fill="#fff" opacity="0.35" class="b1"/><ellipse cx="383.9" cy="47.0" rx="3.7" ry="1.3" fill="#000" opacity="0.34" class="b1"/><ellipse cx="473.3" cy="57.2" rx="2.4" ry="1.7" fill="#fff" opacity="0.58" class="b1"/><ellipse cx="304.6" cy="46.2" rx="2.4" ry="1.5" fill="#000" opacity="0.24" class="b1"/><ellipse cx="282.3" cy="61.6" rx="2.6" ry="1.7" fill="#000" opacity="0.23" class="b1"/><ellipse cx="440.3" cy="51.3" rx="3.4" ry="1.4" fill="#000" opacity="0.56" class="b1"/><ellipse cx="488.8" cy="47.3" rx="2.7" ry="1.3" fill="#000" opacity="0.52" class="b1"/><ellipse cx="313.0" cy="58.1" rx="4.1" ry="1.4" fill="#fff" opacity="0.49" class="b1"/><ellipse cx="283.4" cy="61.8" rx="3.0" ry="1.9" fill="#fff" opacity="0.59" class="b1"/><ellipse cx="352.6" cy="59.7" rx="2.1" ry="1.5" fill="#fff" opacity="0.53" class="b1"/><ellipse cx="316.3" cy="61.6" rx="3.7" ry="1.8" fill="#000" opacity="0.24" class="b1"/><ellipse cx="456.4" cy="49.5" rx="3.6" ry="1.4" fill="#fff" opacity="0.35" class="b1"/><ellipse cx="300.4" cy="60.9" rx="4.6" ry="1.5" fill="#000" opacity="0.24" class="b1"/><ellipse cx="498.3" cy="52.7" rx="2.8" ry="2.0" fill="#fff" opacity="0.52" class="b1"/><ellipse cx="365.7" cy="63.9" rx="4.7" ry="1.2" fill="#000" opacity="0.23" class="b1"/><ellipse cx="365.3" cy="54.2" rx="2.6" ry="1.2" fill="#fff" opacity="0.29" class="b1"/><ellipse cx="506.7" cy="58.9" rx="5.0" ry="1.4" fill="#000" opacity="0.21" class="b1"/><ellipse cx="289.0" cy="56.4" rx="4.9" ry="1.8" fill="#fff" opacity="0.48" class="b1"/><ellipse cx="444.8" cy="47.1" rx="2.8" ry="1.3" fill="#000" opacity="0.48" class="b1"/><ellipse cx="310.7" cy="54.2" rx="4.0" ry="1.4" fill="#000" opacity="0.57" class="b1"/><ellipse cx="491.8" cy="52.1" rx="3.3" ry="1.5" fill="#000" opacity="0.31" class="b1"/><ellipse cx="386.2" cy="49.1" rx="2.9" ry="1.4" fill="#000" opacity="0.60" class="b1"/><ellipse cx="362.5" cy="55.5" rx="3.4" ry="1.7" fill="#fff" opacity="0.37" class="b1"/><ellipse cx="375.3" cy="60.2" rx="2.6" ry="1.8" fill="#000" opacity="0.42" class="b1"/><ellipse cx="413.8" cy="56.4" rx="2.1" ry="1.9" fill="#fff" opacity="0.22" class="b1"/><ellipse cx="291.0" cy="61.8" rx="4.0" ry="1.9" fill="#000" opacity="0.48" class="b1"/><ellipse cx="292.6" cy="49.6" rx="4.0" ry="1.9" fill="#fff" opacity="0.45" class="b1"/><ellipse cx="492.4" cy="54.5" rx="3.4" ry="1.7" fill="#fff" opacity="0.37" class="b1"/><ellipse cx="355.6" cy="50.5" rx="2.2" ry="1.8" fill="#000" opacity="0.26" class="b1"/><ellipse cx="467.2" cy="53.6" rx="3.6" ry="1.9" fill="#000" opacity="0.45" class="b1"/><ellipse cx="411.6" cy="60.5" rx="4.6" ry="1.3" fill="#000" opacity="0.23" class="b1"/><ellipse cx="477.2" cy="46.7" rx="4.0" ry="1.3" fill="#000" opacity="0.30" class="b1"/><ellipse cx="476.1" cy="71.4" rx="3.2" ry="1.6" fill="#000" opacity="0.47" class="b1"/><ellipse cx="520.4" cy="69.3" rx="2.7" ry="2.4" fill="#000" opacity="0.69" class="b1"/><ellipse cx="507.3" cy="73.1" rx="3.5" ry="2.4" fill="#000" opacity="0.42" class="b1"/><ellipse cx="374.5" cy="70.3" rx="2.1" ry="1.8" fill="#fff" opacity="0.87" class="b1"/><ellipse cx="373.3" cy="74.8" rx="2.6" ry="2.2" fill="#000" opacity="0.71" class="b1"/><ellipse cx="516.1" cy="70.8" rx="2.7" ry="1.6" fill="#fff" opacity="0.81" class="b1"/><ellipse cx="369.3" cy="75.1" rx="2.3" ry="1.9" fill="#fff" opacity="0.87" class="b1"/><ellipse cx="476.8" cy="69.9" rx="4.0" ry="2.3" fill="#000" opacity="0.63" class="b1"/><ellipse cx="388.5" cy="75.8" rx="4.0" ry="2.2" fill="#000" opacity="0.76" class="b1"/><ellipse cx="373.4" cy="74.7" rx="2.8" ry="1.8" fill="#000" opacity="0.86" class="b1"/><ellipse cx="408.5" cy="70.4" rx="2.3" ry="1.7" fill="#000" opacity="0.52" class="b1"/><ellipse cx="405.3" cy="71.5" rx="3.3" ry="1.9" fill="#000" opacity="0.52" class="b1"/><ellipse cx="446.2" cy="71.6" rx="2.2" ry="2.0" fill="#fff" opacity="0.41" class="b1"/><ellipse cx="390.3" cy="72.9" rx="2.2" ry="2.2" fill="#000" opacity="0.46" class="b1"/><ellipse cx="356.0" cy="74.7" rx="2.3" ry="2.4" fill="#000" opacity="0.82" class="b1"/><ellipse cx="480.1" cy="70.8" rx="3.5" ry="2.0" fill="#000" opacity="0.59" class="b1"/><ellipse cx="389.3" cy="70.2" rx="2.2" ry="2.4" fill="#000" opacity="0.51" class="b1"/><ellipse cx="486.6" cy="72.5" rx="3.7" ry="1.9" fill="#fff" opacity="0.89" class="b1"/><ellipse cx="357.0" cy="75.1" rx="2.3" ry="1.8" fill="#000" opacity="0.64" class="b1"/><ellipse cx="407.8" cy="74.1" rx="3.8" ry="1.8" fill="#fff" opacity="0.84" class="b1"/><ellipse cx="497.6" cy="71.0" rx="2.6" ry="1.9" fill="#fff" opacity="0.75" class="b1"/><ellipse cx="503.3" cy="69.5" rx="3.1" ry="2.3" fill="#fff" opacity="0.68" class="b1"/><ellipse cx="392.6" cy="70.0" rx="2.0" ry="2.4" fill="#fff" opacity="0.61" class="b1"/><ellipse cx="451.3" cy="74.6" rx="3.2" ry="2.2" fill="#000" opacity="0.56" class="b1"/><ellipse cx="381.9" cy="71.3" rx="2.4" ry="2.1" fill="#fff" opacity="0.53" class="b1"/><ellipse cx="505.7" cy="74.7" rx="3.9" ry="2.2" fill="#000" opacity="0.77" class="b1"/><ellipse cx="414.2" cy="70.7" rx="3.4" ry="2.2" fill="#fff" opacity="0.66" class="b1"/><ellipse cx="369.7" cy="75.1" rx="2.7" ry="1.7" fill="#000" opacity="0.64" class="b1"/><ellipse cx="409.0" cy="72.4" rx="2.1" ry="2.3" fill="#000" opacity="0.71" class="b1"/><ellipse cx="360.7" cy="71.1" rx="2.1" ry="1.5" fill="#000" opacity="0.68" class="b1"/><path d="M527 72 535 60 548 53 627 52" stroke="#ffffff" stroke-width="3" stroke-opacity="0.90" class="b1"/><path d="M527 75.9 532 68.5 537 62.9 542 60.6 547 58.5 552 57.9 557 58 562 57.9 567 57.7 572 57.9 577 57.9 582 57.8 587 57.7 592 57.5 597 57.3 602 57.2 607 57.3 612 57.1 617 57.2 622 56.9 627 57" stroke="#000" stroke-width="3" stroke-opacity="0.48" class="b1"/><path d="M527 75.8 531 69.9 535 63.8 536.8 62.8" stroke="#000" stroke-width="4.1" stroke-opacity="0.75" class="b1 rc"/><path d="M538.3 62.6 542.3 60.8 546.3 59 547.1 58.1" stroke="#000" stroke-width="3.8" stroke-opacity="0.83" class="b1 rc"/><path d="M548 58.8 552 58.5 556 58.6 560 58.6 560.6 58.2" stroke="#000" stroke-width="4.1" stroke-opacity="0.99" class="b1 rc"/><path d="M562.5 57.5 566.5 57.3 570.5 56.9 571.7 57.4" stroke="#000" stroke-width="3.7" stroke-opacity="0.62" class="b1 rc"/><path d="M572.7 58.2 576.7 57.9 579 58" stroke="#000" stroke-width="3.8" stroke-opacity="0.63" class="b1 rc"/><path d="M577.8 57.9 581.8 58 585.8 58 588.5 57.6" stroke="#000" stroke-width="3.0" stroke-opacity="0.97" class="b1 rc"/><path d="M589 56.5 593 56.8 597 57.2 601 57.1 604.8 56.7" stroke="#000" stroke-width="3.1" stroke-opacity="0.61" class="b1 rc"/><path d="M604.7 57.4 608.7 57.6 612.7 57.9 615 57.5" stroke="#000" stroke-width="3.2" stroke-opacity="0.66" class="b1 rc"/><path d="M615.4 57.7 619.4 57.9 623.4 57.5 625.4 57.2" stroke="#000" stroke-width="4.0" stroke-opacity="0.69" class="b1 rc"/><path d="M622.9 57.7 626.9 57.6 627 57.5" stroke="#000" stroke-width="3.4" stroke-opacity="0.90" class="b1 rc"/><path d="M626.7 57.1 627 57.2" stroke="#000" stroke-width="3.0" stroke-opacity="0.92" class="b1 rc"/><rect x="358.0" y="120.0" width="195.0" height="60.0" fill="#000" opacity="0.2" filter="url(#tex3)"/><rect x="358.0" y="120.0" width="195.0" height="60.0" fill="#fff" opacity="0.2" filter="url(#tex4)"/><rect x="543.0" y="118.0" width="130.0" height="62.0" fill="#878787" opacity="0.35" filter="url(#b3)"/><path d="M663 146.6 671 146.8 679 146.3 687 147.1 695 146.6 703 146.9 711 147.6 719 147.2 727 147.9 735 147.9 743 147.6 751 147.6 759 147.5 767 147.1 775 147.8 783 147.3 791 148 799 148.2 807 146.9 815 146.6 823 146.7 831 147.3 839 146.7 847 147 855 146.8 863 147.3 871 147.9 879 147.9 887 147.1 895 147.5 903 147.2 911 147.6 919 147.3 927 147.9 935 148.3 941 147" stroke="#a8a8a8" stroke-width="2" stroke-opacity="0.40" class="b1"/><path d="M0.0,189.6 L5.0,189.3 L10.0,188.8 L15.0,188.7 L20.0,189.0 L25.0,188.8 L30.0,188.7 L35.0,188.3 L40.0,188.2 L45.0,188.1 L50.0,187.8 L55.0,187.6 L60.0,187.3 L65.0,187.7 L70.0,187.5 L75.0,187.5 L80.0,187.5 L85.0,187.5 L90.0,187.2 L95.0,187.3 L100.0,187.2 L105.0,187.3 L110.0,186.9 L115.0,186.6 L120.0,186.2 L125.0,186.4 L130.0,186.2 L135.0,186.0 L140.0,185.5 L145.0,185.5 L150.0,185.2 L155.0,184.9 L160.0,184.1 L165.0,184.2 L170.0,184.4 L175.0,184.4 L180.0,184.2 L185.0,184.2 L190.0,184.0 L195.0,183.8 L200.0,184.1 L205.0,184.2 L210.0,184.4 L215.0,184.0 L220.0,184.0 L225.0,184.2 L230.0,183.9 L235.0,183.9 L240.0,183.9 L245.0,183.8 L250.0,184.0 L255.0,184.1 L260.0,184.0 L265.0,184.2 L270.0,184.4 L275.0,184.0 L280.0,184.3 L285.0,184.0 L290.0,184.0 L295.0,183.8 L300.0,183.6 L305.0,183.8 L310.0,183.6 L315.0,183.8 L320.0,184.2 L325.0,184.6 L330.0,184.8 L335.0,185.2 L340.0,186.1 L345.0,186.6 L350.0,187.5 L355.0,187.6 L360.0,187.6 L365.0,187.5 L370.0,187.2 L375.0,187.3 L380.0,187.4 L385.0,187.4 L390.0,187.8 L395.0,187.8 L400.0,187.5 L405.0,187.1 L410.0,187.0 L415.0,187.0 L420.0,186.9 L425.0,186.8 L430.0,187.3 L435.0,187.2 L440.0,187.2 L445.0,187.3 L450.0,187.3 L455.0,187.3 L460.0,187.4 L465.0,187.5 L470.0,187.3 L475.0,187.4 L480.0,187.2 L485.0,186.5 L490.0,186.0 L495.0,185.4 L500.0,184.8 L505.0,184.4 L510.0,184.0 L515.0,183.5 L520.0,182.6 L525.0,182.0 L530.0,182.0 L535.0,181.9 L540.0,182.4 L545.0,182.6 L550.0,182.3 L555.0,182.6 L560.0,182.8 L565.0,182.7 L570.0,182.6 L575.0,182.4 L580.0,182.5 L585.0,182.2 L590.0,182.2 L595.0,182.3 L600.0,182.2 L605.0,182.5 L610.0,182.3 L615.0,182.0 L620.0,182.2 L625.0,182.0 L630.0,182.1 L635.0,182.2 L640.0,182.0 L645.0,181.8 L650.0,182.1 L655.0,182.4 L660.0,182.0 L665.0,181.8 L670.0,181.7 L675.0,181.6 L680.0,181.5 L685.0,181.8 L690.0,181.9 L695.0,181.8 L700.0,181.8 L705.0,181.8 L710.0,181.8 L715.0,182.1 L720.0,181.8 L725.0,181.8 L730.0,181.8 L735.0,181.6 L740.0,181.7 L745.0,181.6 L750.0,181.9 L755.0,181.7 L760.0,181.6 L765.0,181.5 L770.0,181.4 L775.0,181.7 L780.0,181.6 L785.0,182.0 L790.0,182.0 L795.0,181.7 L800.0,181.7 L805.0,183.4 L810.0,183.8 L815.0,184.0 L820.0,183.5 L825.0,183.3 L830.0,183.1 L835.0,183.4 L840.0,183.7 L845.0,183.3 L850.0,183.1 L855.0,183.3 L860.0,183.2 L865.0,183.2 L870.0,183.3 L875.0,183.7 L880.0,183.4 L885.0,183.6 L890.0,183.4 L895.0,183.5 L900.0,183.5 L905.0,183.2 L910.0,183.6 L915.0,181.7 L920.0,181.7 L925.0,181.9 L930.0,181.8 L935.0,181.4 L940.0,181.3 L941.0,181.5 L941.0,196.0 L940.0,196.1 L935.0,196.2 L930.0,196.0 L925.0,196.2 L920.0,195.9 L915.0,195.6 L910.0,194.2 L905.0,194.4 L900.0,194.5 L895.0,194.8 L890.0,194.5 L885.0,195.0 L880.0,194.8 L875.0,194.4 L870.0,194.3 L865.0,194.8 L860.0,194.8 L855.0,195.0 L850.0,194.9 L845.0,194.8 L840.0,194.5 L835.0,194.7 L830.0,194.5 L825.0,194.3 L820.0,194.5 L815.0,194.4 L810.0,194.3 L805.0,194.5 L800.0,195.5 L795.0,195.3 L790.0,195.7 L785.0,195.6 L780.0,195.5 L775.0,195.8 L770.0,196.2 L765.0,196.3 L760.0,196.4 L755.0,196.3 L750.0,196.5 L745.0,197.1 L740.0,197.3 L735.0,197.3 L730.0,197.1 L725.0,197.1 L720.0,196.8 L715.0,197.0 L710.0,196.7 L705.0,196.9 L700.0,196.9 L695.0,197.3 L690.0,197.0 L685.0,197.0 L680.0,197.1 L675.0,197.1 L670.0,196.7 L665.0,197.0 L660.0,196.6 L655.0,196.6 L650.0,196.6 L645.0,196.7 L640.0,197.0 L635.0,196.5 L630.0,196.6 L625.0,196.8 L620.0,196.9 L615.0,197.0 L610.0,196.6 L605.0,196.8 L600.0,197.0 L595.0,197.1 L590.0,196.8 L585.0,196.9 L580.0,196.9 L575.0,196.9 L570.0,196.6 L565.0,196.6 L560.0,196.7 L555.0,197.1 L550.0,197.1 L545.0,197.1 L540.0,197.2 L535.0,197.4 L530.0,197.1 L525.0,197.2 L520.0,197.3 L515.0,196.9 L510.0,197.0 L505.0,196.7 L500.0,196.8 L495.0,196.7 L490.0,196.6 L485.0,196.7 L480.0,196.8 L475.0,196.7 L470.0,196.9 L465.0,196.7 L460.0,196.7 L455.0,196.4 L450.0,196.4 L445.0,196.8 L440.0,196.5 L435.0,197.0 L430.0,197.0 L425.0,196.9 L420.0,196.8 L415.0,196.5 L410.0,196.6 L405.0,196.3 L400.0,196.4 L395.0,196.6 L390.0,196.6 L385.0,196.7 L380.0,196.9 L375.0,197.2 L370.0,197.0 L365.0,197.1 L360.0,197.2 L355.0,197.3 L350.0,197.1 L345.0,197.5 L340.0,197.8 L335.0,197.6 L330.0,197.5 L325.0,197.7 L320.0,197.9 L315.0,197.7 L310.0,198.0 L305.0,198.0 L300.0,198.3 L295.0,198.6 L290.0,198.4 L285.0,198.1 L280.0,198.0 L275.0,198.3 L270.0,198.5 L265.0,198.2 L260.0,198.5 L255.0,198.5 L250.0,198.6 L245.0,198.5 L240.0,198.0 L235.0,198.3 L230.0,197.9 L225.0,198.2 L220.0,198.6 L215.0,198.9 L210.0,198.7 L205.0,198.9 L200.0,198.9 L195.0,199.2 L190.0,199.5 L185.0,200.0 L180.0,200.4 L175.0,200.3 L170.0,201.0 L165.0,201.2 L160.0,200.9 L155.0,201.1 L150.0,200.6 L145.0,200.7 L140.0,200.4 L135.0,199.9 L130.0,200.2 L125.0,200.0 L120.0,199.5 L115.0,199.4 L110.0,199.1 L105.0,199.3 L100.0,198.9 L95.0,198.6 L90.0,198.2 L85.0,198.3 L80.0,197.9 L75.0,197.7 L70.0,197.9 L65.0,197.8 L60.0,197.5 L55.0,197.4 L50.0,197.4 L45.0,197.8 L40.0,197.5 L35.0,197.7 L30.0,197.3 L25.0,197.5 L20.0,197.3 L15.0,197.5 L10.0,197.6 L5.0,197.7 L0.0,197.4 Z" style="fill:#fff" class="b1"/><path d="M0 188.1 5 187.8 10 187.3 15 187.2 20 187.5 25 187.3 30 187.2 35 186.8 40 186.7 45 186.6 50 186.3 55 186.1 60 185.8 65 186.2 70 186 75 186 80 186 85 186 90 185.7 95 185.8 100 185.7 105 185.8 110 185.4" stroke="#000" stroke-width="4.5" class="b1"/><path d="M105 185.8 110 185.4 115 185.1 120 184.7 125 184.9 130 184.7 135 184.5 140 184 145 184 150 183.7 155 183.4 160 182.6 165 182.7 170 182.9 175 182.9 180 182.7 185 182.7 190 182.5 195 182.3 200 182.6 205 182.7 210 182.9 215 182.5 220 182.5 225 182.7 230 182.4 235 182.4 240 182.4 245 182.3 250 182.5 255 182.6 260 182.5 265 182.7 270 182.9 275 182.5 280 182.8 285 182.5 290 182.5 295 182.3 300 182.1 305 182.3 310 182.1 315 182.3 320 182.7 325 183.1 330 183.3 335 183.7 340 184.6" stroke="#222" stroke-width="4" stroke-opacity="0.55" class="b2"/><path d="M335 183.7 340 184.6 345 185.1 350 186 355 186.1 360 186.1 365 186 370 185.7 375 185.8 380 185.9 385 185.9 390 186.3 395 186.3 400 186 405 185.6 410 185.5 415 185.5 420 185.4 425 185.3 430 185.8 435 185.7 440 185.7 445 185.8 450 185.8 455 185.8 460 185.9 465 186 470 185.8 475 185.9 480 185.7 485 185 490 184.5 495 183.9 500 183.3 505 182.9 510 182.5 515 182 520 181.1 525 180.5 530 180.5 535 180.4 540 180.9 545 181.1 550 180.8 555 181.1 560 181.3 565 181.2 570 181.1 575 180.9 580 181 585 180.7 590 180.7 595 180.8 600 180.7 605 181 610 180.8 615 180.5 620 180.7 625 180.5 630 180.6 635 180.7 640 180.5 645 180.3 650 180.6 655 180.9 660 180.5 665 180.3 670 180.2 675 180.1 680 180 685 180.3 690 180.4 695 180.3 700 180.3 705 180.3 710 180.3 715 180.6 720 180.3 725 180.3 730 180.3 735 180.1 740 180.2 745 180.1 750 180.4 755 180.2 760 180.1 765 180 770 179.9 775 180.2 780 180.1 785 180.5 790 180.5 795 180.2 800 180.2 805 181.9 810 182.3 815 182.5 820 182 825 181.8 830 181.6 835 181.9 840 182.2 845 181.8 850 181.6 855 181.8 860 181.7 865 181.7 870 181.8 875 182.2 880 181.9 885 182.1 890 181.9 895 182 900 182 905 181.7 910 182.1 915 180.2 920 180.2 925 180.4 930 180.3 935 179.9 940 179.8 941 180" stroke="#000" stroke-width="4.5" class="b1"/><path d="M0 199.9 5 200.2 10 200.1 15 200 20 199.8 25 200 30 199.8 35 200.2 40 200 45 200.3 50 199.9 55 199.9 60 200 65 200.3 70 200.4 75 200.2 80 200.4 85 200.8 90 200.7 95 201.1 100 201.4 105 201.8 110 201.6 115 201.9 120 202 125 202.5 130 202.7 135 202.4 140 202.9 145 203.2 150 203.1 155 203.6 160 203.4 165 203.7 170 203.5 175 202.8 180 202.9 185 202.5 190 202 195 201.7 200 201.4 205 201.4 210 201.2 215 201.4 220 201.1 225 200.7 230 200.4 235 200.8 240 200.5 245 201 250 201.1 255 201 260 201 265 200.7 270 201 275 200.8 280 200.5 285 200.6 290 200.9 295 201.1 300 200.8 305 200.5 310 200.5 315 200.2 320 200.4 325 200.2 330 200 335 200.1 340 200.3 345 200 350 199.6 355 199.8 360 199.7 365 199.6 370 199.5 375 199.7 380 199.4 385 199.2 390 199.1 395 199.1 400 198.9 405 198.8 410 199.1 415 199 420 199.3 425 199.4 430 199.5 435 199.5 440 199 445 199.3 450 198.9 455 198.9 460 199.2 465 199.2 470 199.4 475 199.2 480 199.3 485 199.2 490 199.1 495 199.2 500 199.3 505 199.2 510 199.5 515 199.4 520 199.8 525 199.7 530 199.6 535 199.9 540 199.7 545 199.6 550 199.6 555 199.6 560 199.2 565 199.1 570 199.1 575 199.4 580 199.4 585 199.4 590 199.3 595 199.6 600 199.5 605 199.3 610 199.1 615 199.5 620 199.4 625 199.3 630 199.1 635 199 640 199.5 645 199.2 650 199.1 655 199.1 660 199.1 665 199.5 670 199.2 675 199.6 680 199.6 685 199.5 690 199.5 695 199.8 700 199.4 705 199.4 710 199.2 715 199.5 720 199.3 725 199.6 730 199.6 735 199.8 740 199.8 745 199.6 750 199 755 198.8 760 198.9 765 198.8 770 198.7 775 198.3 780 198 785 198.1 790 198.2 795 197.8 800 198 805 197 810 196.8 815 196.9 820 197 825 196.8 830 197 835 197.2 840 197 845 197.3 850 197.4 855 197.5 860 197.3 865 197.3 870 196.8 875 196.9 880 197.3 885 197.5 890 197 895 197.3 900 197 905 196.9 910 196.7 915 198.1 920 198.4 925 198.7 930 198.5 935 198.7 940 198.6 941 198.5" stroke="#000" stroke-width="6" class="b1"/><path d="M95 192.2 100 192.2 105 192.2 110 192.4 115 192.6 120 192.4 125 192.8 130 193 135 192.8 140 193 145 192.8 150 193 155 193 160 193.1 165 193.1 170 192.9 175 192.5 180 192 185 191.6 190 191.6 195 191.2 200 190.9 205 190.6 210 190.5 215 190 220 189.8 225 190 230 189.9 235 190.1 240 190.3 245 190.2 250 190 255 189.9 260 190 265 190.3 270 190.2 275 189.9 280 190.1 285 190 290 190.1 295 190.2 300 190.5 305 190.5 310 190.4 315 190.5 320 190.7 325 191 330 190.8 333 191" stroke="#000" stroke-width="4" class="b1"/><path d="M527 190.4 532 190.7 537 190.4 542 190.6 547 190.5 552 190.8 557 190.6 562 190.8 567 190.6 572 190.4 577 190.3 582 190.2 587 190.1 592 190 597 190.1 602 190.1 607 190.3 612 190.5 617 190.2 622 190.2 627 190.1 632 190.1 637 190.5 642 190.7 647 190.8 652 190.4 657 190.7 662 190.4 667 190.6 672 190.4 677 190.2 682 190.1 687 190 692 190.3 697 190.1 702 190.1 707 190.3 712 190.2 717 190.4 722 190.6 727 190.6 729 190.5" stroke="#000" stroke-width="3" class="b1"/><path d="M911 191.4 916 191.2 921 191.1 926 191.3 931 191.2 936 191.6 941 191.5" stroke="#000" stroke-width="3" class="b1"/><rect x="863.0" y="184.0" width="47.0" height="16.0" fill="#9a9a9a" opacity="0.25" filter="url(#b2)"/><rect x="800.0" y="176.0" width="6.0" height="28.0" fill="#8a8a8a" opacity="0.6" filter="url(#b1)"/><path d="M0 206.1 5 206 10 206.2 15 205.9 20 206.1 25 206.1 30 205.9 35 205.8 40 206 45 205.9 50 206 55 205.8 60 206.1 65 205.9 70 206 75 206.2 80 205.8 85 205.9 90 205.9 95 206 100 206.2 105 205.8 110 205.6 115 205.7 120 205.9 125 205.8 130 205.6 135 205.4 140 205.4 145 205.5 150 205.6 155 205.4 160 205.5 165 205.7 170 205.5 175 205.7 180 205.7 185 205.9 190 205.9 195 205.8 200 205.8 205 205.9 210 205.6 215 205.8 220 205.6 225 205.4 230 205.6 235 205.4 240 205.4 245 205.4 250 205.6 255 205.9 260 205.8 265 205.7 270 205.7 275 205.9 280 205.6 285 205.5 290 205.5 295 205.3 300 205.3 305 205.3 310 205.3 315 205.3 320 205.4 325 205.5 330 205.6 335 205.7 340 205.4 345 205.4 350 205.6 355 205.8 360 205.9 365 205.8 370 205.7 375 205.7 380 205.4 385 205.4 390 205.4 395 205.2 400 205.3 405 205.2 410 205.1 415 205.1 420 205 425 205.2 430 205.4 435 205.5 440 205.7 445 205.4 450 205.2 455 205.2 460 205 465 205.4 470 205.6 475 205.4 480 205.4 485 205.2 490 205.4 495 205.4 500 205.1 505 205.1 510 205.2 515 205 520 205 525 205.1 530 205.3 535 205.1 540 204.9 545 205.2 550 205.3 555 205 560 205.1 565 205.1 570 205.3 575 205.2 580 205.4 585 205.5 590 205.2 595 205.3 600 205 605 205 610 205.3 615 205.4 620 205.3 625 205.4 630 205.3 635 205.4 640 205.3 645 205 650 204.8 655 204.9 660 205.2 663 205" stroke="#fff" stroke-width="2.1" stroke-opacity="0.00" class="b1"/><path d="M0 205.8 4 205.5 8 205.9 11.8 205.8" stroke="#fff" stroke-width="2.1" stroke-opacity="0.40" class="b1 rc"/><path d="M11.6 205.9 15.6 206.3 19.6 206.7 23.6 206.9 24.3 206.1" stroke="#fff" stroke-width="2.6" stroke-opacity="0.20" class="b1 rc"/><path d="M26 205.5 30 205.9 34 206 38 205.7 41.4 205.6" stroke="#fff" stroke-width="2.7" stroke-opacity="0.01" class="b1 rc"/><path d="M40.9 206.1 44.9 206.3 48.9 205.9 52.9 205.5 56.9 205.5 57 205.9" stroke="#fff" stroke-width="2.2" stroke-opacity="0.20" class="b1 rc"/><path d="M58.9 205.9 62.9 206 66.9 206 67.8 205.9" stroke="#fff" stroke-width="2.6" stroke-opacity="0.17" class="b1 rc"/><path d="M66.2 205.5 70.2 205.6 74.2 205.1 78.2 205.6 78.9 205.5" stroke="#fff" stroke-width="2.4" stroke-opacity="0.09" class="b1 rc"/><path d="M80.5 206.3 84.5 205.8 88.5 205.5 92.5 205.7 96.5 205.6 98.7 206" stroke="#fff" stroke-width="2.1" stroke-opacity="0.18" class="b1 rc"/><path d="M98.3 206.1 102.3 206.2 106.3 206 107.1 205.9" stroke="#fff" stroke-width="2.5" stroke-opacity="0.38" class="b1 rc"/><path d="M108 205.7 112 205.5 116 205.3 119.2 205.7" stroke="#fff" stroke-width="2.9" stroke-opacity="0.11" class="b1 rc"/><path d="M119.9 205.5 123.9 205.2 127.9 205.1 131.9 205.6 135.9 205.8 136.6 205.8" stroke="#fff" stroke-width="2.2" stroke-opacity="0.11" class="b1 rc"/><path d="M136.3 205.6 140.3 205.1 144.3 205.1 148.3 205.5 152.3 205.4 154.9 205.6" stroke="#fff" stroke-width="2.9" stroke-opacity="0.40" class="b1 rc"/><path d="M153.8 206.1 157.8 206.6 161.1 206.1" stroke="#fff" stroke-width="2.6" stroke-opacity="0.09" class="b1 rc"/><path d="M162.9 205.6 166.9 205.6 170.9 205 174.9 204.9 178.9 205.3 181.7 205.2" stroke="#fff" stroke-width="2.3" stroke-opacity="0.02" class="b1 rc"/><path d="M183.2 205.4 187.2 205.8 191.2 205.8 192.8 205.3" stroke="#fff" stroke-width="2.2" stroke-opacity="0.13" class="b1 rc"/><path d="M191.7 206.1 195.7 206.4 199.7 206.1 203.7 206.2 207.4 205.7" stroke="#fff" stroke-width="3.0" stroke-opacity="0.01" class="b1 rc"/><path d="M207.9 205.8 211.9 205.8 215.9 206.3 217 206" stroke="#fff" stroke-width="2.6" stroke-opacity="0.26" class="b1 rc"/><path d="M218.2 205.7 222.2 205.3 226.2 205 226.2 205.4" stroke="#fff" stroke-width="2.4" stroke-opacity="0.13" class="b1 rc"/><path d="M225.3 205.1 229.3 205.3 233.3 204.9 237.3 205.1 241.3 205.2 241.9 205.1" stroke="#fff" stroke-width="2.4" stroke-opacity="0.44" class="b1 rc"/><path d="M240.6 205.2 244.6 205.5 248.6 205.7 252.6 205.6 252.9 205.6" stroke="#fff" stroke-width="2.1" stroke-opacity="0.18" class="b1 rc"/><path d="M250.6 205.7 254.6 205.7 258.6 205.7 262.6 205.3 266.6 205.8 268.9 205.7" stroke="#fff" stroke-width="2.8" stroke-opacity="0.15" class="b1 rc"/><path d="M269.5 205.7 273.5 205.3 277.5 205.4 279.4 205.3" stroke="#fff" stroke-width="2.8" stroke-opacity="0.05" class="b1 rc"/><path d="M281.3 206.5 285.3 206 289.3 205.7 293.3 206.3 295.6 206" stroke="#fff" stroke-width="2.2" stroke-opacity="0.15" class="b1 rc"/><path d="M293.6 205.1 297.6 205.2 301.6 205.3 305.6 204.9 308.8 205.3" stroke="#fff" stroke-width="2.3" stroke-opacity="0.19" class="b1 rc"/><path d="M307.3 205.4 311.3 205.6 315.3 205.9 319.3 205.5 323.3 204.9 326.6 205.2" stroke="#fff" stroke-width="3.0" stroke-opacity="0.09" class="b1 rc"/><path d="M327.1 205.4 331.1 205.8 333.7 205.8" stroke="#fff" stroke-width="2.1" stroke-opacity="0.20" class="b1 rc"/><path d="M335.5 205.3 339.5 204.9 343.5 204.9 343.7 205" stroke="#fff" stroke-width="2.5" stroke-opacity="0.25" class="b1 rc"/><path d="M344.4 204.6 348.4 204.8 352.4 204.5 356.4 204.6 360.4 204.9 361.8 205" stroke="#fff" stroke-width="2.7" stroke-opacity="0.43" class="b1 rc"/><path d="M359.9 206 363.9 205.8 367.9 206.2 371.9 205.5 373.2 205.7" stroke="#fff" stroke-width="2.7" stroke-opacity="0.42" class="b1 rc"/><path d="M374.2 205.7 378.2 206 382.2 205.4 384.5 205.7" stroke="#fff" stroke-width="2.6" stroke-opacity="0.02" class="b1 rc"/><path d="M384.2 205.6 388.2 205.8 392.2 205.2 396.2 205 397.8 205.5" stroke="#fff" stroke-width="2.6" stroke-opacity="0.00" class="b1 rc"/><path d="M395.2 205.7 399.2 205.9 403.2 205.5 407.2 206.2 410.1 206" stroke="#fff" stroke-width="2.7" stroke-opacity="0.33" class="b1 rc"/><path d="M407.6 205.8 411.6 205.4 415.6 205.8 419.6 205.5 423.6 205.4 424 205.7" stroke="#fff" stroke-width="2.7" stroke-opacity="0.17" class="b1 rc"/><path d="M424.3 205.5 428.3 205.1 432.3 205.1 436.3 205.6 438.2 205.4" stroke="#fff" stroke-width="2.2" stroke-opacity="0.14" class="b1 rc"/><path d="M437.1 205.2 441.1 205.6 445.1 205.9 446 205.4" stroke="#fff" stroke-width="2.5" stroke-opacity="0.32" class="b1 rc"/><path d="M447.6 204.7 451.6 204.9 455.6 205.3 459.6 205 461.7 204.8" stroke="#fff" stroke-width="2.5" stroke-opacity="0.24" class="b1 rc"/><path d="M460.2 204.7 464.2 204.5 468.2 204.5 470.8 205.2" stroke="#fff" stroke-width="2.2" stroke-opacity="0.21" class="b1 rc"/><path d="M468.1 204.7 472.1 205.1 476.1 205 478.8 205.1" stroke="#fff" stroke-width="2.4" stroke-opacity="0.37" class="b1 rc"/><path d="M477.1 205.2 481.1 205.6 485.1 205.4 489.1 205 493.1 205.5 493.4 205.5" stroke="#fff" stroke-width="2.0" stroke-opacity="0.07" class="b1 rc"/><path d="M493.4 205.2 497.4 205.4 501.4 205.6 503.3 205.3" stroke="#fff" stroke-width="3.0" stroke-opacity="0.01" class="b1 rc"/><path d="M503.9 205.2 507.9 204.7 511.9 205.1 515.9 204.8 519.9 204.7 522.7 205" stroke="#fff" stroke-width="2.7" stroke-opacity="0.43" class="b1 rc"/><path d="M523.4 205.1 527.4 205 530.3 205.1" stroke="#fff" stroke-width="2.4" stroke-opacity="0.22" class="b1 rc"/><path d="M532.3 205 536.3 204.9 540.3 204.6 544.3 204.8 547.5 204.8" stroke="#fff" stroke-width="2.1" stroke-opacity="0.32" class="b1 rc"/><path d="M544.6 206 548.6 206.1 551.5 205.6" stroke="#fff" stroke-width="2.1" stroke-opacity="0.37" class="b1 rc"/><path d="M551.6 204.8 555.6 205 559.6 205.4 563.6 205.2 565.2 204.7" stroke="#fff" stroke-width="2.8" stroke-opacity="0.06" class="b1 rc"/><path d="M562.3 205.4 566.3 205.5 570.3 205.6 574.3 205.8 575.7 205.7" stroke="#fff" stroke-width="2.2" stroke-opacity="0.08" class="b1 rc"/><path d="M575.7 204.9 579.7 205.3 582.7 205.3" stroke="#fff" stroke-width="2.8" stroke-opacity="0.16" class="b1 rc"/><path d="M580.2 205.9 584.2 205.3 588.2 205.4 592.2 205.5 596.2 205.4 600.1 205.4" stroke="#fff" stroke-width="2.9" stroke-opacity="0.02" class="b1 rc"/><path d="M601.5 205.7 605.5 205.7 609.5 205.7 613.5 205.7 617.5 205.6 620.9 205.6" stroke="#fff" stroke-width="2.1" stroke-opacity="0.19" class="b1 rc"/><path d="M622.3 205.5 626.3 205.7 630.3 206 634.3 205.3 638 205.4" stroke="#fff" stroke-width="2.8" stroke-opacity="0.41" class="b1 rc"/><path d="M638.1 204.5 642.1 204.8 646.1 205 649 204.9" stroke="#fff" stroke-width="2.8" stroke-opacity="0.25" class="b1 rc"/><path d="M649.9 205.2 653.9 204.6 657.9 204.3 661.9 204.1 663 204.7" stroke="#fff" stroke-width="2.5" stroke-opacity="0.21" class="b1 rc"/><path d="M661.3 205.1 663 205" stroke="#fff" stroke-width="2.7" stroke-opacity="0.24" class="b1 rc"/><path d="M0 209.4 5 209.6 10 209.3 15 209.5 20 209.8 25 209.7 30 209.7 35 209.6 40 209.5 45 209.5 50 209.6 55 209.5 60 209.7 65 209.6 70 209.4 75 209.4 80 209.6 85 209.3 90 209.3 95 209.4 100 209.2 105 209.3 110 209.4 115 209.3 120 209.3 125 209.2 130 209.2 135 209.2 140 209 145 209.2 150 209.1 155 208.9 160 209.1 165 209.4 170 209.5 175 209.6 180 209.5 185 209.6 190 209.5 195 209.4 200 209.3 205 209.3 210 209.1 215 209.2 220 209.2 225 209.2 230 209.1 235 209.2 240 209 245 208.8 250 209.1 255 209 260 209.2 265 209.3 270 209.4 275 209.4 280 209.2 285 209.3 290 209.4 295 209 300 209 305 208.8 310 208.7 315 208.8 320 208.8 325 208.7 330 208.9 335 209.2 340 209.1 345 209 350 208.8 355 209.1 360 209.1 365 209 370 208.9 375 208.9 380 208.8 385 209.1 390 209.1 395 209.2 400 209 405 208.9 410 208.7 415 208.8 420 209 425 209.2 430 208.8 435 208.9 440 209.1 445 208.9 450 209 455 209 460 209.1 465 209.1 470 209.1 475 209.1 480 209.2 485 209.2 490 209.2 495 209.3 500 209 505 208.8 510 208.6 515 208.4 520 208.7 523 208.7" stroke="#111" stroke-width="2.1" stroke-opacity="0.00" class="b1"/><path d="M0 209 4 208.9 8 208.8 12 209.3 12.3 209.1" stroke="#111" stroke-width="2.6" stroke-opacity="0.06" class="b1 rc"/><path d="M11.6 208.7 15.6 208.9 19.6 208.8 19.9 209.1" stroke="#111" stroke-width="2.7" stroke-opacity="0.18" class="b1 rc"/><path d="M20.5 209.6 24.5 209.9 28.5 209.8 32.5 209.3 35.2 209.5" stroke="#111" stroke-width="2.5" stroke-opacity="0.01" class="b1 rc"/><path d="M33.4 209.3 37.4 209.5 41.4 209.5 45.4 209.5 47.2 208.8" stroke="#111" stroke-width="2.9" stroke-opacity="0.20" class="b1 rc"/><path d="M45 208.9 49 209 53 209.1 53.5 209.2" stroke="#111" stroke-width="2.6" stroke-opacity="0.25" class="b1 rc"/><path d="M52.1 208.6 56.1 208.8 60.1 209.1 62.4 209" stroke="#111" stroke-width="3.0" stroke-opacity="0.01" class="b1 rc"/><path d="M61 209 65 208.7 68 208.9" stroke="#111" stroke-width="2.7" stroke-opacity="0.23" class="b1 rc"/><path d="M69.5 209.1 73.5 209.2 77.5 209.3 81.5 209.1 85.5 208.8 89 208.8" stroke="#111" stroke-width="2.6" stroke-opacity="0.22" class="b1 rc"/><path d="M89.5 210.1 93.5 210.1 97.5 210.5 101.5 210.2 105.5 210.1 106.8 209.8" stroke="#111" stroke-width="2.0" stroke-opacity="0.04" class="b1 rc"/><path d="M108.4 209.8 112.4 209.5 116.4 210.1 120.4 210.4 124.4 210.5 125.6 209.8" stroke="#111" stroke-width="2.9" stroke-opacity="0.09" class="b1 rc"/><path d="M124.6 209.5 128.6 209.6 132.6 210 136.6 210 140.6 210.1 142 209.9" stroke="#111" stroke-width="2.1" stroke-opacity="0.08" class="b1 rc"/><path d="M139.8 209.1 143.8 209.2 147.8 208.7 151.8 208.3 155.8 208.7 156 208.8" stroke="#111" stroke-width="2.8" stroke-opacity="0.03" class="b1 rc"/><path d="M156.5 209.4 160.5 209.1 164.5 209.2 168.5 209.6 172.5 209.3" stroke="#111" stroke-width="2.2" stroke-opacity="0.05" class="b1 rc"/><path d="M174.1 208.6 178.1 209 182.1 209 185.3 208.6" stroke="#111" stroke-width="2.8" stroke-opacity="0.12" class="b1 rc"/><path d="M186 209.1 190 209 194 209.3 197.7 209" stroke="#111" stroke-width="3.0" stroke-opacity="0.17" class="b1 rc"/><path d="M198 209.5 202 209.2 205.5 209.6" stroke="#111" stroke-width="2.8" stroke-opacity="0.03" class="b1 rc"/><path d="M205.4 209.3 209.4 209.1 213.1 209" stroke="#111" stroke-width="2.3" stroke-opacity="0.05" class="b1 rc"/><path d="M213 209.2 217 209.7 221 209.7 225 209.8 227.1 209.7" stroke="#111" stroke-width="2.8" stroke-opacity="0.17" class="b1 rc"/><path d="M227.5 208.7 231.5 208.5 235 208.8" stroke="#111" stroke-width="2.9" stroke-opacity="0.12" class="b1 rc"/><path d="M233.9 209.5 237.9 209.7 241.9 209 245.9 209.4 249.9 209.3 253.4 209.1" stroke="#111" stroke-width="2.1" stroke-opacity="0.10" class="b1 rc"/><path d="M254.3 208.7 258.3 209 262.3 208.4 266.3 208.5 270.3 208.1 271.7 208.5" stroke="#111" stroke-width="2.1" stroke-opacity="0.18" class="b1 rc"/><path d="M269.7 208.6 273.7 208.8 277.7 209 278.9 208.6" stroke="#111" stroke-width="2.4" stroke-opacity="0.09" class="b1 rc"/><path d="M278.6 209.7 282.6 209.3 286.6 209.6 290.6 209.7 294.6 209.1 296.4 209.6" stroke="#111" stroke-width="2.6" stroke-opacity="0.02" class="b1 rc"/><path d="M297.5 208.2 301.5 208.4 305.5 208.6 309.5 208.8 313.5 208.6" stroke="#111" stroke-width="2.4" stroke-opacity="0.22" class="b1 rc"/><path d="M311 209 315 208.9 319 209.5 323 209.7 326.5 209.2" stroke="#111" stroke-width="2.3" stroke-opacity="0.17" class="b1 rc"/><path d="M325.5 208.6 329.5 208.8 333.5 208.4 337 208.5" stroke="#111" stroke-width="2.1" stroke-opacity="0.11" class="b1 rc"/><path d="M335.3 209.9 339.3 209.9 343.3 210.1 345.7 209.4" stroke="#111" stroke-width="2.9" stroke-opacity="0.25" class="b1 rc"/><path d="M344.7 208.6 348.7 208.7 352.7 209 356.7 208.6 360.5 209" stroke="#111" stroke-width="2.6" stroke-opacity="0.08" class="b1 rc"/><path d="M362.1 209 366.1 208.6 370.1 208.6 370.9 208.7" stroke="#111" stroke-width="3.0" stroke-opacity="0.10" class="b1 rc"/><path d="M369.2 209 373.2 208.8 377.2 209.2 381.2 209 381.6 209.4" stroke="#111" stroke-width="2.4" stroke-opacity="0.13" class="b1 rc"/><path d="M380 209.3 384 209.1 388 209.4 392 209.4 396 208.8 397 209.3" stroke="#111" stroke-width="2.7" stroke-opacity="0.02" class="b1 rc"/><path d="M395.8 208.8 399.8 209.1 403.8 209.3 407.8 208.6 411.8 208.5 412.7 208.5" stroke="#111" stroke-width="2.4" stroke-opacity="0.15" class="b1 rc"/><path d="M414.2 208.7 418.2 208.8 422.2 208.5 426.2 208.3 429.6 208.5" stroke="#111" stroke-width="2.7" stroke-opacity="0.24" class="b1 rc"/><path d="M430.6 209.1 434.6 208.7 438.6 208.8 442.6 209.2 443 209.3" stroke="#111" stroke-width="2.8" stroke-opacity="0.23" class="b1 rc"/><path d="M441.4 209.1 445.4 209.2 449.4 209 453.4 208.7 457.2 209.3" stroke="#111" stroke-width="2.7" stroke-opacity="0.05" class="b1 rc"/><path d="M457.2 209.1 461.2 209.7 465.2 209.6 469.2 209.9 473.2 209.2 476.9 209.3" stroke="#111" stroke-width="2.7" stroke-opacity="0.16" class="b1 rc"/><path d="M476.7 208.7 480.7 209 484.7 208.9 488.7 208.8 492.7 208.4 493.3 209.1" stroke="#111" stroke-width="2.6" stroke-opacity="0.17" class="b1 rc"/><path d="M493.5 209.2 497.5 209.2 501.5 209.1 505.3 209.3" stroke="#111" stroke-width="2.2" stroke-opacity="0.19" class="b1 rc"/><path d="M503.9 208.3 507.9 208.6 511.9 208.4 515.9 208.2 518 208.5" stroke="#111" stroke-width="2.6" stroke-opacity="0.10" class="b1 rc"/><path d="M518.5 208.8 522.5 208.3 523 208.5" stroke="#111" stroke-width="2.7" stroke-opacity="0.16" class="b1 rc"/><path d="M522.9 209 523 208.7" stroke="#111" stroke-width="2.6" stroke-opacity="0.03" class="b1 rc"/><g mask="url(#mB)"><rect x="0.0" y="204.0" width="941.0" height="66.0" fill="#000" opacity="0.4" filter="url(#tex5)"/><rect x="0.0" y="204.0" width="941.0" height="66.0" fill="#fff" opacity="0.45" filter="url(#tex6)"/></g><path d="M0 268.4 5 269.3 10 270.7 15 271.4 20 272 25 272.5 30 271.8 35 270 40 268.2 45 267.2 50 266.6 55 266 60 265.5 65 264.9 70 264.6 75 265.3 80 265.6 85 265.9 90 266.6 95 267.2 100 267.9 105 268.4 110 268.6 115 269 120 269.3 125 269.2 130 269.2 135 269.1 140 268.8 145 268 150 267 155 266.1 160 266.6 165 269.8 170 271.3 175 270.2 180 269.4 185 268.3 190 267.3 195 266.5 200 265.4 205 265.1 210 266.5 215 267 220 266.7 225 266.6 230 266.1 235 265.8 240 266 245 266 250 265.9 255 265.6 260 264.6 265 263.9 270 263.6 275 263.7 280 263.9 285 264.2 290 264.2 293 264.5" stroke="#f0f0f0" stroke-width="2.5" stroke-opacity="0.24" class="b1"/><path d="M0 269 4 270 8 270.7 10.9 271.1" stroke="#f0f0f0" stroke-width="3.5" stroke-opacity="0.45" class="b1 rc"/><path d="M12 271.5 16 272.3 18.2 271.7" stroke="#f0f0f0" stroke-width="2.9" stroke-opacity="0.46" class="b1 rc"/><path d="M16.1 272.5 20.1 272.5 24.1 272.5 28.1 272.7 28.4 272.8" stroke="#f0f0f0" stroke-width="2.5" stroke-opacity="0.39" class="b1 rc"/><path d="M25.5 271.9 29.5 271.5 33.5 270.5 37.5 269.3 39.6 268.2" stroke="#f0f0f0" stroke-width="2.8" stroke-opacity="0.45" class="b1 rc"/><path d="M41.5 269 45.5 268.3 49.5 267.5 50.9 267.1" stroke="#f0f0f0" stroke-width="2.8" stroke-opacity="0.71" class="b1 rc"/><path d="M51 266.6 55 265.8 59 265.8 63 264.9 64.8 265" stroke="#f0f0f0" stroke-width="2.9" stroke-opacity="0.37" class="b1 rc"/><path d="M62.1 264.8 66.1 263.8 70.1 263.6 71.8 264.3" stroke="#f0f0f0" stroke-width="2.5" stroke-opacity="0.45" class="b1 rc"/><path d="M68.8 264.9 72.8 264.8 76.6 265.3" stroke="#f0f0f0" stroke-width="2.5" stroke-opacity="0.41" class="b1 rc"/><path d="M76.7 264.7 80.7 265.6 84.7 266.2 88.7 265.9 88.9 266.1" stroke="#f0f0f0" stroke-width="2.7" stroke-opacity="0.75" class="b1 rc"/><path d="M86.9 266.5 90.9 267.2 93.6 267.2" stroke="#f0f0f0" stroke-width="3.2" stroke-opacity="0.62" class="b1 rc"/><path d="M93.7 267.4 97.7 268.4 101.7 268.9 103.8 269.1" stroke="#f0f0f0" stroke-width="3.3" stroke-opacity="0.66" class="b1 rc"/><path d="M104.9 269.3 108.9 269.1 112.9 269.8 116.9 269.5 119.9 269.7" stroke="#f0f0f0" stroke-width="3.6" stroke-opacity="0.55" class="b1 rc"/><path d="M121.6 268.8 125.6 269.1 128.4 268.8" stroke="#f0f0f0" stroke-width="3.4" stroke-opacity="0.39" class="b1 rc"/><path d="M128.4 269.2 132.4 268.5 136.4 268 140.4 268.2 141.8 268.2" stroke="#f0f0f0" stroke-width="2.7" stroke-opacity="0.68" class="b1 rc"/><path d="M141.1 268.5 145.1 267.3 149.1 267 150.3 266.5" stroke="#f0f0f0" stroke-width="2.7" stroke-opacity="0.35" class="b1 rc"/><path d="M149.3 267.9 153.3 267.4 156.8 266.2" stroke="#f0f0f0" stroke-width="3.1" stroke-opacity="0.35" class="b1 rc"/><path d="M156.8 265.1 160.8 266.5 164.3 269.1" stroke="#f0f0f0" stroke-width="2.6" stroke-opacity="0.73" class="b1 rc"/><path d="M163.4 268.8 167.4 270.7 171.4 270.3 173.8 270.3" stroke="#f0f0f0" stroke-width="3.5" stroke-opacity="0.59" class="b1 rc"/><path d="M174.7 270.6 178.7 270 182.7 268.6 186.7 268 187.9 267.5" stroke="#f0f0f0" stroke-width="3.3" stroke-opacity="0.70" class="b1 rc"/><path d="M189.3 267.2 193.3 267 197.3 265.8 201.3 264.9 201.9 265" stroke="#f0f0f0" stroke-width="2.6" stroke-opacity="0.37" class="b1 rc"/><path d="M202.1 264.5 206.1 265.4 210.1 266.1 214.1 266.9 214.1 266.8" stroke="#f0f0f0" stroke-width="3.5" stroke-opacity="0.74" class="b1 rc"/><path d="M212.8 267.9 216.8 268 220.8 267.1 224.8 266.4 226.9 266.6" stroke="#f0f0f0" stroke-width="3.5" stroke-opacity="0.54" class="b1 rc"/><path d="M225.3 266.8 229.3 266.5 232.7 266.6" stroke="#f0f0f0" stroke-width="3.0" stroke-opacity="0.63" class="b1 rc"/><path d="M230.4 266.1 234.4 265.4 238.4 265.1 239.9 265.6" stroke="#f0f0f0" stroke-width="3.5" stroke-opacity="0.39" class="b1 rc"/><path d="M241.6 265.1 245.6 265.4 249.6 265.5 251.8 265.1" stroke="#f0f0f0" stroke-width="3.5" stroke-opacity="0.37" class="b1 rc"/><path d="M252.2 265.3 256.2 264.9 260.2 264.6 264.2 263.6 265.6 263.8" stroke="#f0f0f0" stroke-width="3.2" stroke-opacity="0.48" class="b1 rc"/><path d="M265.7 263.5 269.7 263.7 273.7 263.7 276.8 263.6" stroke="#f0f0f0" stroke-width="2.8" stroke-opacity="0.65" class="b1 rc"/><path d="M274.4 264.1 278.4 264.6 282.4 264.7 286.4 265.1 286.8 264.6" stroke="#f0f0f0" stroke-width="2.5" stroke-opacity="0.53" class="b1 rc"/><path d="M284.6 264 288.6 263.9 292.6 264.3 293 264" stroke="#f0f0f0" stroke-width="2.5" stroke-opacity="0.57" class="b1 rc"/><path d="M290.1 264.1 293 264.1" stroke="#f0f0f0" stroke-width="2.6" stroke-opacity="0.48" class="b1 rc"/><path d="M293 264.4 293 264.3" stroke="#f0f0f0" stroke-width="3.0" stroke-opacity="0.46" class="b1 rc"/><path d="M291.9 264.6 293 264.3" stroke="#f0f0f0" stroke-width="3.4" stroke-opacity="0.59" class="b1 rc"/><path d="M292.2 264.3 293 264.5" stroke="#f0f0f0" stroke-width="2.8" stroke-opacity="0.38" class="b1 rc"/><path d="M293 264.4 293 264.2" stroke="#f0f0f0" stroke-width="2.8" stroke-opacity="0.61" class="b1 rc"/><path d="M292 264.4 293 264.3" stroke="#f0f0f0" stroke-width="3.1" stroke-opacity="0.41" class="b1 rc"/><path d="M0 273.5 5 274.6 10 276 15 276.7 20 276.8 25 277.1 30 276.6 35 274.9 40 273.6 45 272.3 50 271.7 55 271.3 60 270.5 65 269.9 70 269.8 75 270.4 80 270.6 85 270.9 90 271.7 95 272.4 100 272.8 105 273.4 110 274 115 274.4 120 274.6 125 274.7 130 274.1 135 273.9 140 273.9 145 273.3 150 272.4 155 271.3 160 272 165 275.1 170 276.2 175 275.2 180 274.3 185 273.3 190 272.3 195 271 200 270.1 205 270.2 210 271.9 215 272.3 220 271.6 225 271.4 230 271.4 235 271.4 240 271.2 245 270.8 250 270.6 255 270 260 269.4 265 268.9 270 268.5 275 268.8 280 269 285 269 290 269.4 293 269.5" stroke="#000000" stroke-width="3.2" stroke-opacity="0.40" class="b1"/><path d="M0 273.4 4 273.9 8 274.9 12 276.2 15.3 276.3" stroke="#000000" stroke-width="3.4" stroke-opacity="0.73" class="b1 rc"/><path d="M16.8 276.4 20.8 276.9 24.8 277.6 26.3 277.4" stroke="#000000" stroke-width="3.1" stroke-opacity="0.63" class="b1 rc"/><path d="M26.5 276.9 30.5 276.6 34.5 275 38.5 274.1 41.2 272.5" stroke="#000000" stroke-width="3.8" stroke-opacity="0.89" class="b1 rc"/><path d="M39.9 273.6 43.9 272.3 47.9 272.1 51.8 271" stroke="#000000" stroke-width="4.1" stroke-opacity="0.66" class="b1 rc"/><path d="M51 271.7 55 271.2 57.2 270.7" stroke="#000000" stroke-width="3.5" stroke-opacity="0.67" class="b1 rc"/><path d="M56.5 270.4 60.5 269.8 64.5 269.7 68.5 269.7 72 269.7" stroke="#000000" stroke-width="4.0" stroke-opacity="0.62" class="b1 rc"/><path d="M72 269.5 76 270.2 80 270.8" stroke="#000000" stroke-width="3.9" stroke-opacity="0.79" class="b1 rc"/><path d="M77.1 270.1 81.1 270 85.1 270.3 85.5 270.8" stroke="#000000" stroke-width="3.7" stroke-opacity="0.74" class="b1 rc"/><path d="M84.1 271.3 88.1 272.3 92.1 272.6 92.1 272.6" stroke="#000000" stroke-width="4.4" stroke-opacity="0.67" class="b1 rc"/><path d="M91.1 271.5 95.1 272.4 99.1 273 103.1 273.3 104.2 273.4" stroke="#000000" stroke-width="3.0" stroke-opacity="0.77" class="b1 rc"/><path d="M105.7 273.9 109.7 273.9 112.4 274.5" stroke="#000000" stroke-width="4.0" stroke-opacity="0.56" class="b1 rc"/><path d="M112.8 273.7 116.8 274.1 120.8 274.6 121 274.4" stroke="#000000" stroke-width="4.1" stroke-opacity="0.96" class="b1 rc"/><path d="M122.8 274.2 126.8 273.6 129.8 273.9" stroke="#000000" stroke-width="4.5" stroke-opacity="1.00" class="b1 rc"/><path d="M131.6 274.4 135.6 274.8 139.6 274 143.6 273.5 147 273.2" stroke="#000000" stroke-width="3.5" stroke-opacity="0.53" class="b1 rc"/><path d="M148.7 272.8 152.7 271.8 156.7 271.5 159.3 271.9" stroke="#000000" stroke-width="3.4" stroke-opacity="0.69" class="b1 rc"/><path d="M157.5 269.9 161.5 272 165.5 274.7 169.5 275.6 170.6 275.6" stroke="#000000" stroke-width="4.1" stroke-opacity="0.82" class="b1 rc"/><path d="M169.3 276 173.3 275.6 177.3 274.4 179.4 274" stroke="#000000" stroke-width="3.1" stroke-opacity="0.84" class="b1 rc"/><path d="M176.8 275.1 180.8 274.1 184.8 273.2 185.6 273.1" stroke="#000000" stroke-width="4.2" stroke-opacity="0.59" class="b1 rc"/><path d="M187.6 272.1 191.6 270.9 195.6 270.7 199.6 269.6 200.3 269.8" stroke="#000000" stroke-width="3.8" stroke-opacity="0.98" class="b1 rc"/><path d="M199.9 270.2 203.9 270.1 207.9 270.9 208.4 271.6" stroke="#000000" stroke-width="3.5" stroke-opacity="0.63" class="b1 rc"/><path d="M208 270.8 212 271.7 216 272.2 220 271.3 223.7 271.4" stroke="#000000" stroke-width="3.8" stroke-opacity="0.67" class="b1 rc"/><path d="M223 271.1 227 271.2 231 270.9 234.1 270.6" stroke="#000000" stroke-width="4.5" stroke-opacity="0.69" class="b1 rc"/><path d="M233.2 271.9 237.2 271.5 241.2 271.2 243.4 271.1" stroke="#000000" stroke-width="3.3" stroke-opacity="0.85" class="b1 rc"/><path d="M245.3 271.3 249.3 271.3 253.3 270.6 254.8 270.4" stroke="#000000" stroke-width="3.8" stroke-opacity="0.66" class="b1 rc"/><path d="M256.3 270.4 260.3 269.8 263.5 269.5" stroke="#000000" stroke-width="4.1" stroke-opacity="0.88" class="b1 rc"/><path d="M264.2 268.8 268.2 268.5 272.2 268.4 276.2 268.6 277.6 269.1" stroke="#000000" stroke-width="4.5" stroke-opacity="0.63" class="b1 rc"/><path d="M277.2 268.2 281.2 268 283.4 268.8" stroke="#000000" stroke-width="4.0" stroke-opacity="0.60" class="b1 rc"/><path d="M284.2 269.5 288.2 270.2 292.2 269.9 293 270" stroke="#000000" stroke-width="4.2" stroke-opacity="0.92" class="b1 rc"/><ellipse cx="0.3" cy="275.0" rx="2.3" ry="1.9" fill="#000" opacity="0.44" class="b1"/><ellipse cx="98.7" cy="270.5" rx="2.6" ry="1.4" fill="#000" opacity="0.36" class="b1"/><ellipse cx="265.7" cy="268.2" rx="3.9" ry="1.6" fill="#000" opacity="0.75" class="b1"/><ellipse cx="74.7" cy="266.0" rx="2.1" ry="1.8" fill="#fff" opacity="0.66" class="b1"/><ellipse cx="280.9" cy="265.1" rx="4.0" ry="1.7" fill="#fff" opacity="0.45" class="b1"/><ellipse cx="170.3" cy="274.5" rx="5.7" ry="2.1" fill="#000" opacity="0.37" class="b1"/><ellipse cx="164.4" cy="275.8" rx="2.9" ry="1.9" fill="#fff" opacity="0.49" class="b1"/><ellipse cx="144.3" cy="272.4" rx="5.8" ry="2.2" fill="#000" opacity="0.77" class="b1"/><ellipse cx="133.0" cy="273.4" rx="3.2" ry="1.5" fill="#fff" opacity="0.30" class="b1"/><ellipse cx="17.6" cy="277.6" rx="5.3" ry="2.1" fill="#fff" opacity="0.42" class="b1"/><ellipse cx="16.5" cy="272.6" rx="2.9" ry="1.9" fill="#000" opacity="0.60" class="b1"/><ellipse cx="59.5" cy="270.5" rx="5.6" ry="1.5" fill="#fff" opacity="0.62" class="b1"/><ellipse cx="211.9" cy="268.0" rx="2.4" ry="1.6" fill="#000" opacity="0.31" class="b1"/><ellipse cx="116.5" cy="270.7" rx="4.4" ry="1.3" fill="#fff" opacity="0.50" class="b1"/><ellipse cx="72.9" cy="267.9" rx="5.8" ry="2.2" fill="#fff" opacity="0.73" class="b1"/><ellipse cx="224.4" cy="268.1" rx="5.5" ry="2.0" fill="#fff" opacity="0.55" class="b1"/><ellipse cx="8.8" cy="273.6" rx="5.4" ry="2.0" fill="#fff" opacity="0.47" class="b1"/><ellipse cx="177.5" cy="275.2" rx="2.3" ry="1.5" fill="#fff" opacity="0.54" class="b1"/><ellipse cx="270.7" cy="264.9" rx="3.3" ry="1.6" fill="#000" opacity="0.39" class="b1"/><ellipse cx="44.7" cy="269.2" rx="2.6" ry="2.1" fill="#fff" opacity="0.61" class="b1"/><ellipse cx="289.2" cy="267.7" rx="5.2" ry="1.9" fill="#000" opacity="0.67" class="b1"/><ellipse cx="85.9" cy="268.0" rx="5.9" ry="1.8" fill="#000" opacity="0.43" class="b1"/><ellipse cx="146.0" cy="273.9" rx="2.7" ry="2.0" fill="#fff" opacity="0.43" class="b1"/><ellipse cx="78.6" cy="267.6" rx="5.1" ry="1.3" fill="#fff" opacity="0.61" class="b1"/><ellipse cx="111.0" cy="270.0" rx="3.3" ry="2.0" fill="#fff" opacity="0.59" class="b1"/><ellipse cx="144.0" cy="270.6" rx="3.3" ry="1.9" fill="#fff" opacity="0.63" class="b1"/><ellipse cx="239.7" cy="272.1" rx="6.0" ry="1.7" fill="#000" opacity="0.53" class="b1"/><ellipse cx="60.8" cy="266.4" rx="2.5" ry="2.1" fill="#fff" opacity="0.64" class="b1"/><ellipse cx="46.0" cy="271.8" rx="4.5" ry="1.9" fill="#fff" opacity="0.59" class="b1"/><ellipse cx="86.9" cy="270.3" rx="5.1" ry="1.4" fill="#000" opacity="0.44" class="b1"/><ellipse cx="152.8" cy="269.7" rx="4.9" ry="1.8" fill="#fff" opacity="0.70" class="b1"/><ellipse cx="104.1" cy="269.4" rx="3.8" ry="1.7" fill="#000" opacity="0.74" class="b1"/><ellipse cx="125.3" cy="272.6" rx="5.9" ry="1.5" fill="#fff" opacity="0.77" class="b1"/><ellipse cx="62.6" cy="271.2" rx="5.1" ry="2.1" fill="#fff" opacity="0.63" class="b1"/><ellipse cx="201.4" cy="265.5" rx="4.4" ry="1.7" fill="#000" opacity="0.48" class="b1"/><ellipse cx="271.4" cy="268.8" rx="2.1" ry="1.2" fill="#fff" opacity="0.47" class="b1"/><ellipse cx="80.0" cy="269.0" rx="5.7" ry="1.6" fill="#000" opacity="0.56" class="b1"/><ellipse cx="250.4" cy="269.1" rx="5.5" ry="1.2" fill="#fff" opacity="0.32" class="b1"/><ellipse cx="238.7" cy="266.9" rx="2.2" ry="1.5" fill="#000" opacity="0.32" class="b1"/><ellipse cx="110.2" cy="270.5" rx="5.0" ry="2.0" fill="#fff" opacity="0.48" class="b1"/><path d="M73 301.8 78 302.3 83 303 88 303.7 93 303.9 98 304.4 103 304.7 108 304.7 113 304.3 118 303.9 123 303.7 128 304 133 304.5 138 304.8 143 304.9 148 305.3 153 305.7 158 305.7 163 305.7 168 305.4 173 305.6 178 305.4 183 305.1 188 305.2 193 304.9 198 304.9 203 304.8 208 304.4 213 304.3 218 304 223 303.7 228 303.6 233 303.6 238 303.6 243 303.2 248 303 253 302.4 258 302.1 263 302.2 268 302 273 301.8 278 301.5 283 301" stroke="#dcdcdc" stroke-width="2.5" stroke-opacity="0.16" class="b1"/><path d="M73 301.7 77 301.8 81 302.3 85 302.7 86.3 303.1" stroke="#dcdcdc" stroke-width="2.7" stroke-opacity="0.40" class="b1 rc"/><path d="M85.3 303.5 89.3 303.6 93.3 304.2 94.2 304.3" stroke="#dcdcdc" stroke-width="2.5" stroke-opacity="0.39" class="b1 rc"/><path d="M95.4 304.3 99.4 304.2 103.4 305.1 107.4 304.4 110.8 304.3" stroke="#dcdcdc" stroke-width="3.5" stroke-opacity="0.24" class="b1 rc"/><path d="M108.9 303.7 112.9 303.7 116.9 303.5 120.9 303.7 124.1 303.5" stroke="#dcdcdc" stroke-width="3.5" stroke-opacity="0.46" class="b1 rc"/><path d="M124.7 304.4 128.7 304.5 132.7 305 135.4 304.8" stroke="#dcdcdc" stroke-width="2.9" stroke-opacity="0.31" class="b1 rc"/><path d="M135.9 304.4 139.9 304.5 143.9 304.9 145.2 304.5" stroke="#dcdcdc" stroke-width="3.1" stroke-opacity="0.43" class="b1 rc"/><path d="M146.8 305.2 150.8 306.1 154.8 306.3 155.1 306.1" stroke="#dcdcdc" stroke-width="3.1" stroke-opacity="0.48" class="b1 rc"/><path d="M154.1 305.4 158.1 306 162.1 306 166.1 306.2 167.3 305.7" stroke="#dcdcdc" stroke-width="2.5" stroke-opacity="0.33" class="b1 rc"/><path d="M165.6 306.3 169.6 305.6 173.6 305.3 177.6 305.6 181.6 305.7 185 305.3" stroke="#dcdcdc" stroke-width="3.0" stroke-opacity="0.26" class="b1 rc"/><path d="M183.1 305.9 187.1 305.6 191.1 305.9 195.1 305.1 199.1 304.9 202.7 305.1" stroke="#dcdcdc" stroke-width="2.6" stroke-opacity="0.45" class="b1 rc"/><path d="M204 304.2 208 303.9 212 304.2 216 304.3 220 304.4 221.6 303.7" stroke="#dcdcdc" stroke-width="2.8" stroke-opacity="0.36" class="b1 rc"/><path d="M220.1 304.7 224.1 304.7 228.1 304.4 229.6 304.1" stroke="#dcdcdc" stroke-width="2.6" stroke-opacity="0.31" class="b1 rc"/><path d="M227.2 303.7 231.2 303.6 235.2 303.8 235.8 303.1" stroke="#dcdcdc" stroke-width="2.9" stroke-opacity="0.25" class="b1 rc"/><path d="M234.8 304 238.8 304 242.8 303.2 246.3 303.2" stroke="#dcdcdc" stroke-width="3.1" stroke-opacity="0.23" class="b1 rc"/><path d="M247.3 302.7 251.3 302.7 255.3 302.7 255.7 302.2" stroke="#dcdcdc" stroke-width="3.2" stroke-opacity="0.43" class="b1 rc"/><path d="M255.9 302.3 259.9 301.7 263.9 301.5 267.9 301.5 269.6 301.1" stroke="#dcdcdc" stroke-width="3.1" stroke-opacity="0.50" class="b1 rc"/><path d="M268.9 301.1 272.9 301.1 276.9 301.3 280.9 300.9 282.2 300.6" stroke="#dcdcdc" stroke-width="3.5" stroke-opacity="0.28" class="b1 rc"/><path d="M280.9 300.8 283 301" stroke="#dcdcdc" stroke-width="3.6" stroke-opacity="0.33" class="b1 rc"/><path d="M73 305.8 78 306.7 83 307.1 88 307.7 93 308.3 98 308.8 103 309.2 108 309.1 113 308.6 118 308.2 123 307.9 128 308.4 133 308.7 138 308.8 143 309.1 148 309.4 153 309.7 158 310.1 163 310.4 168 310.3 173 309.9 178 309.7 183 309.5 188 309.4 193 309.2 198 308.8 203 308.4 208 308.2 213 308.4 218 308 223 308.1 228 307.7 233 307.4 238 307.4 243 307.2 248 306.7 253 306.7 258 306.4 263 306.2 268 305.9 273 305.4 278 304.9 283 305" stroke="#303030" stroke-width="2.5" stroke-opacity="0.20" class="b1"/><path d="M73 306.3 77 306.9 81 306.7 85 307.1 86.7 307.5" stroke="#303030" stroke-width="3.0" stroke-opacity="0.49" class="b1 rc"/><path d="M84.7 307.3 88.7 307.5 92.7 308.2 96 308.8" stroke="#303030" stroke-width="3.4" stroke-opacity="0.32" class="b1 rc"/><path d="M97.1 308.1 101.1 308.3 105.1 308 109.1 307.6 112.9 308.1" stroke="#303030" stroke-width="2.9" stroke-opacity="0.32" class="b1 rc"/><path d="M110 309.2 114 309.3 118 308.7 122 308.4 122.8 308.5" stroke="#303030" stroke-width="2.5" stroke-opacity="0.29" class="b1 rc"/><path d="M120.1 307.5 124.1 307.1 128.1 307.9 132.1 308.5 135.1 308.3" stroke="#303030" stroke-width="2.5" stroke-opacity="0.26" class="b1 rc"/><path d="M134.4 308.6 138.4 308.8 142.4 308.7 146.4 308.5 150.4 309.2 153.1 309.3" stroke="#303030" stroke-width="3.1" stroke-opacity="0.38" class="b1 rc"/><path d="M151.7 309.6 155.7 309.3 159.7 310 163.7 310.4 164 309.9" stroke="#303030" stroke-width="2.5" stroke-opacity="0.33" class="b1 rc"/><path d="M161.8 309.9 165.8 310 169.8 309.6 172.5 309.9" stroke="#303030" stroke-width="3.2" stroke-opacity="0.54" class="b1 rc"/><path d="M169.6 309.8 173.6 309.5 177.6 309.4 181.6 309.4 185.6 308.8 187.3 309" stroke="#303030" stroke-width="2.5" stroke-opacity="0.30" class="b1 rc"/><path d="M185.4 309 189.4 308.8 193.4 309.3 197.4 309.1 201.4 308.8 203.9 308.9" stroke="#303030" stroke-width="3.6" stroke-opacity="0.48" class="b1 rc"/><path d="M205.6 308.1 209.6 308.4 213.6 307.9 215.4 308" stroke="#303030" stroke-width="2.9" stroke-opacity="0.50" class="b1 rc"/><path d="M213.2 307.9 217.2 307.9 221.2 307.6 223.1 307.6" stroke="#303030" stroke-width="2.6" stroke-opacity="0.29" class="b1 rc"/><path d="M224.7 307.6 228.7 307.7 232.7 307.3 233.4 307.1" stroke="#303030" stroke-width="3.6" stroke-opacity="0.34" class="b1 rc"/><path d="M232.5 306.8 236.5 306.6 240.5 306.2 244.5 305.9 248.5 305.8 249.9 306.1" stroke="#303030" stroke-width="2.8" stroke-opacity="0.43" class="b1 rc"/><path d="M247.1 306.5 251.1 305.9 255.1 306.4 259.1 306.4 263.1 305.8 264.1 306" stroke="#303030" stroke-width="3.4" stroke-opacity="0.30" class="b1 rc"/><path d="M265.5 305.8 269.5 305.5 273.5 305 277.5 305.2 281.5 305.4 282.6 305.3" stroke="#303030" stroke-width="2.8" stroke-opacity="0.47" class="b1 rc"/><path d="M280.2 305.3 283 304.9" stroke="#303030" stroke-width="2.8" stroke-opacity="0.25" class="b1 rc"/><path d="M280 305.7 283 305.2" stroke="#303030" stroke-width="2.6" stroke-opacity="0.59" class="b1 rc"/><path d="M328 276 338 270 348 263 355 268" stroke="#fff" stroke-width="3" stroke-opacity="0.60" class="b1"/><path d="M328 280 338 274 348 267 355 272" stroke="#111" stroke-width="3" stroke-opacity="0.60" class="b1"/><path d="M453 276 463 271 473 275" stroke="#111" stroke-width="3" stroke-opacity="0.40" class="b1"/><path d="M0 208.1 5 208.3 10 208.3 15 208 20 208.3 25 208.4 30 208.4 35 208.4 40 208 45 207.9 50 207.8 55 208 60 208.1 65 207.9 70 207.8 75 208 80 207.9 85 207.8 90 207.7 95 207.8 100 208 105 208.1 110 207.9 115 207.8 120 207.7 125 208.1 130 208.1 135 208 140 208.1 145 207.9 150 207.9 155 207.9 160 208 165 207.8 170 207.8 175 207.8 180 207.7 185 208.1 190 207.8 195 207.9 200 207.9 205 208.1 210 208.2 215 208.3 220 208.1 225 208.3 230 208.3 235 208.4 240 208.4 245 208.2 250 208.1 255 207.9 260 208.2 265 207.9 270 208 275 208 280 208.1 285 208.1 290 208.3 295 208.2 300 207.9 305 207.9 310 207.8 315 207.8 320 207.9 325 207.8 330 207.6 335 207.7 340 208 345 208.1 350 207.9 355 207.8 360 207.7 365 207.6 370 207.6 375 207.9 380 208 385 208.2 390 208.1 395 208.1 400 208.1 405 207.9 410 207.8 415 208.1 420 208 425 207.8 430 208.1 435 208.1 440 207.8 445 207.9 450 207.8 455 207.9 460 207.7 465 207.9 470 208.1 475 208.3 480 207.9 485 207.9 490 207.7 495 207.8 500 207.8 505 207.7 510 208 515 207.8 520 207.9 525 207.8 530 207.7 535 207.9 540 208 545 207.7 550 207.7 555 207.9 560 207.9 565 208 570 208.2 575 208.2 580 208.4 585 208.4 590 208.3 595 208.3 600 208.2 605 207.9 610 207.8 615 207.8 620 207.6 625 208 630 208.1 635 208.1 640 208.1 645 208 650 208.1 655 207.8 660 208 665 207.9 670 207.8 673 208" stroke="#e8e8e8" stroke-width="2.1" stroke-opacity="0.04" class="b1"/><path d="M0 208.8 4 208.6 8 208.8 12 208.6 13.9 208.3" stroke="#e8e8e8" stroke-width="2.8" stroke-opacity="0.32" class="b1 rc"/><path d="M12.5 208.9 16.5 208.6 20.5 208.7 24.5 208.4 26.6 208.6" stroke="#e8e8e8" stroke-width="2.5" stroke-opacity="0.19" class="b1 rc"/><path d="M25.3 208.9 29.3 208.7 33.3 209 37.3 208.6 37.7 208.4" stroke="#e8e8e8" stroke-width="2.3" stroke-opacity="0.19" class="b1 rc"/><path d="M37.7 207.8 41.7 207.6 45.7 207.7 48.9 207.5" stroke="#e8e8e8" stroke-width="2.4" stroke-opacity="0.17" class="b1 rc"/><path d="M50.5 207.5 54.5 207.3 58.5 207 62.5 207.1 66.5 207.4 70.5 207.9 74.5 208 78.5 207.7 79.4 207.6" stroke="#e8e8e8" stroke-width="2.4" stroke-opacity="0.07" class="b1 rc"/><path d="M76.6 208.8 80.6 209 84.6 208.3 88.6 208.7 92.6 208.5 96.6 208.7 100.6 208.5 104.6 209 106.3 208.5" stroke="#e8e8e8" stroke-width="2.7" stroke-opacity="0.06" class="b1 rc"/><path d="M105.4 208.2 109.4 208.4 113.4 208.1 117.4 208.5 121.4 208.4 124.7 208" stroke="#e8e8e8" stroke-width="2.9" stroke-opacity="0.27" class="b1 rc"/><path d="M123.1 208.2 127.1 208.2 131.1 208.2 135.1 208.1 139.1 208.1 140.6 208.1" stroke="#e8e8e8" stroke-width="2.9" stroke-opacity="0.34" class="b1 rc"/><path d="M140.9 208.4 144.9 208 148.9 207.9 151.3 208.2" stroke="#e8e8e8" stroke-width="2.2" stroke-opacity="0.13" class="b1 rc"/><path d="M150.1 208.3 154.1 208.5 158.1 208.2 162.1 208.4 166.1 208.6 170.1 208.3 170.1 208.3" stroke="#e8e8e8" stroke-width="2.5" stroke-opacity="0.08" class="b1 rc"/><path d="M168.3 208.6 172.3 208.2 176.3 208.6 180.3 208.2 184.3 208.5 188 208.2" stroke="#e8e8e8" stroke-width="3.0" stroke-opacity="0.08" class="b1 rc"/><path d="M185.3 208.2 189.3 207.7 193.3 207.8 197.3 207.4 201.3 207.8 205.3 207.8 208.3 207.9" stroke="#e8e8e8" stroke-width="2.7" stroke-opacity="0.30" class="b1 rc"/><path d="M209.9 208.3 213.9 208.1 217.9 208.2 221.9 208.8 225.9 209 227.7 208.5" stroke="#e8e8e8" stroke-width="2.6" stroke-opacity="0.22" class="b1 rc"/><path d="M226.5 208.1 230.5 208 234.5 208.3 238.5 208.1 242.5 208.5 246.5 208.7 250.5 208.7 250.6 208.3" stroke="#e8e8e8" stroke-width="3.0" stroke-opacity="0.08" class="b1 rc"/><path d="M250.7 208.2 254.7 208.6 258.7 208.6 262.7 208 266.7 207.9 270.7 208.4 274.7 208.1 278.7 207.9 279.3 208.1" stroke="#e8e8e8" stroke-width="2.6" stroke-opacity="0.28" class="b1 rc"/><path d="M277.1 208.4 281.1 208.8 285.1 209 289.1 209.1 291.1 208.2" stroke="#e8e8e8" stroke-width="2.5" stroke-opacity="0.19" class="b1 rc"/><path d="M292.3 207.1 296.3 207.5 300.3 207.8 304.3 207.9 308.3 207.7 312.3 207.2 316.3 207.1 316.5 207.6" stroke="#e8e8e8" stroke-width="2.1" stroke-opacity="0.08" class="b1 rc"/><path d="M315.6 207.7 319.6 208 323.6 208.2 327.6 208.3 331.6 208.2 335.6 208.2 339.6 208.1 342.6 208.2" stroke="#e8e8e8" stroke-width="3.0" stroke-opacity="0.29" class="b1 rc"/><path d="M344.3 207.1 348.3 207.3 352.3 207.4 356.3 207.8 360.3 207.5 364.3 207.2 368.3 207.5 370.6 207.5" stroke="#e8e8e8" stroke-width="2.2" stroke-opacity="0.32" class="b1 rc"/><path d="M367.8 207.8 371.8 208.1 375.8 207.7 379.8 207.8 383.8 207.7 385.9 208.3" stroke="#e8e8e8" stroke-width="2.0" stroke-opacity="0.26" class="b1 rc"/><path d="M383.2 208 387.2 207.9 391.2 207.5 395.2 207.6 397.5 208.1" stroke="#e8e8e8" stroke-width="2.8" stroke-opacity="0.29" class="b1 rc"/><path d="M395.3 207.5 399.3 208 403.3 208 407.3 207.6 411.3 207.6 415.3 207.5 419.3 208 421.3 207.9" stroke="#e8e8e8" stroke-width="2.5" stroke-opacity="0.28" class="b1 rc"/><path d="M420.6 208.3 424.6 208.7 428.6 208.5 430.7 208.2" stroke="#e8e8e8" stroke-width="2.4" stroke-opacity="0.18" class="b1 rc"/><path d="M432.1 207.4 436.1 207.9 440.1 207.7 444.1 207.3 448.1 207.7 450.7 207.6" stroke="#e8e8e8" stroke-width="2.1" stroke-opacity="0.29" class="b1 rc"/><path d="M451.5 207.8 455.5 207.2 459.5 207.7 463.5 207.7 467.5 207.2 468.8 207.5" stroke="#e8e8e8" stroke-width="2.4" stroke-opacity="0.32" class="b1 rc"/><path d="M467.4 207.2 471.4 207.8 475.4 207.9 479.4 207.8 481.9 207.7" stroke="#e8e8e8" stroke-width="2.7" stroke-opacity="0.12" class="b1 rc"/><path d="M481.5 208.3 485.5 208.5 489.5 208.3 493.5 208.5 497.5 208.6 501.5 208.5 503 207.9" stroke="#e8e8e8" stroke-width="2.9" stroke-opacity="0.26" class="b1 rc"/><path d="M500.3 208.9 504.3 209.2 508.3 208.5 512.3 208.9 516.3 208.3 520.3 208.5 522.9 208.5" stroke="#e8e8e8" stroke-width="2.1" stroke-opacity="0.34" class="b1 rc"/><path d="M521.6 207.7 525.6 207.7 529.6 207.4 533.6 208.1 537.6 207.6 541.6 207.5 542.2 207.9" stroke="#e8e8e8" stroke-width="2.6" stroke-opacity="0.05" class="b1 rc"/><path d="M541 208.8 545 208.8 549 208.8 553 208.9 553.7 208.5" stroke="#e8e8e8" stroke-width="2.2" stroke-opacity="0.32" class="b1 rc"/><path d="M550.9 207.6 554.9 207.6 558.9 208 562.9 208.1 566.9 207.5 570.9 207.8 572.3 207.8" stroke="#e8e8e8" stroke-width="2.4" stroke-opacity="0.33" class="b1 rc"/><path d="M570.6 207.8 574.6 207.7 578.6 207.5 582.6 207.5 585.1 208" stroke="#e8e8e8" stroke-width="2.9" stroke-opacity="0.14" class="b1 rc"/><path d="M586.5 207.5 590.5 207.7 594.5 207.2 598.5 207.2 602.5 207 606.5 207 607.8 207.5" stroke="#e8e8e8" stroke-width="2.8" stroke-opacity="0.16" class="b1 rc"/><path d="M608.5 207.4 612.5 207.1 616.5 207.5 620.5 207.6 624.5 207.7 628.5 207.6 632.5 207.7 633.6 207.7" stroke="#e8e8e8" stroke-width="2.3" stroke-opacity="0.23" class="b1 rc"/><path d="M630.7 207.9 634.7 207.7 638.7 208 642.7 208.2 646.7 208.4 649.7 208" stroke="#e8e8e8" stroke-width="2.7" stroke-opacity="0.30" class="b1 rc"/><path d="M651.2 208.1 655.2 207.6 659.2 207.4 663.2 207.6 667.2 207.4 671.2 207.3 673 207.7" stroke="#e8e8e8" stroke-width="2.1" stroke-opacity="0.30" class="b1 rc"/><path d="M0 212.8 5 212.9 10 213.2 15 213.1 20 213.1 25 212.9 30 212.8 35 212.6 40 212.9 45 212.9 50 213.1 55 213 60 213.1 65 213.3 70 213.3 75 213 80 212.8 85 212.8 90 212.9 95 212.9 100 212.9 105 213 110 212.8 115 213.1 120 213 125 213.2 130 212.9 135 212.9 140 213 145 213.2 150 213.2 155 213 160 213.1 165 213.3 170 213.4 175 213 180 213.2 185 213.2 190 213.3 195 213.2 200 213.4 205 213.1 210 212.8 215 212.7 220 212.9 225 212.9 230 213 235 213.2 240 213.1 245 213.1 250 213.2 255 213 260 213.1 265 213.2 270 213 275 212.8 280 212.9 285 213.2 290 212.9 295 213.1 300 212.9 305 213.1 310 213.3 315 213 320 213.2 325 212.9 330 213.2 335 213.3 340 213.2 345 213.2 350 213.1 355 213.2 360 213 365 213.1 370 213.2 375 213.1 380 213.2 385 212.9 390 212.8 395 212.7 400 213 405 213 410 213.1 415 213 420 212.8 425 212.8 430 212.9 435 213.2 440 213.3 445 213.3 450 213 455 213 460 213.2 465 212.9 470 212.8 475 213 480 213.1 485 213 490 213 495 212.7 500 212.9 505 213 510 213 515 212.8 520 213 525 212.8 530 213 535 213 540 212.9 545 212.7 550 212.7 555 212.6 560 212.6 565 212.7 570 212.7 575 212.6 580 212.7 585 212.7 590 212.7 595 212.8 600 212.7 605 212.8 610 213 615 213.1 620 212.9 625 213.1 630 213.2 635 213.1 640 213.2 645 213 650 213.1 655 212.9 660 213 665 213.1 670 213.3 673 213" stroke="#e8e8e8" stroke-width="2.1" stroke-opacity="0.04" class="b1"/><path d="M0 213.3 4 213.7 8 213.5 12 213.5 16 213.7 19.3 213.6" stroke="#e8e8e8" stroke-width="2.7" stroke-opacity="0.13" class="b1 rc"/><path d="M20.4 212.5 24.4 212.7 28.4 212.9 32.4 212.3 36.4 212.6 40.4 212.2 41.3 212.6" stroke="#e8e8e8" stroke-width="2.8" stroke-opacity="0.20" class="b1 rc"/><path d="M42.7 213.1 46.7 213.4 50.7 213 54.7 213.3 58.7 213.1 61.3 213.2" stroke="#e8e8e8" stroke-width="2.7" stroke-opacity="0.27" class="b1 rc"/><path d="M60.4 213.4 64.4 213.4 68.4 213.5 72.4 213.8 76.4 213.5 80.4 213.4 84.4 213.4 85.8 213.4" stroke="#e8e8e8" stroke-width="2.1" stroke-opacity="0.27" class="b1 rc"/><path d="M85 213.4 89 212.9 93 213 97 212.9 101 212.7 105 212.6 109 212.9 111.5 213" stroke="#e8e8e8" stroke-width="2.3" stroke-opacity="0.20" class="b1 rc"/><path d="M113.4 213 117.4 213.4 121.4 213.4 125.4 213.4 129.4 213.7 133.4 213.1 134.7 213.3" stroke="#e8e8e8" stroke-width="2.3" stroke-opacity="0.27" class="b1 rc"/><path d="M133.3 213.3 137.3 213.6 141.3 213.5 145.3 213.9 149.3 213.4 153.3 213.8 156.8 213.3" stroke="#e8e8e8" stroke-width="2.5" stroke-opacity="0.20" class="b1 rc"/><path d="M158.3 213.9 162.3 214 166.3 214 170.3 213.9 174.3 213.4 177.5 213.5" stroke="#e8e8e8" stroke-width="2.2" stroke-opacity="0.16" class="b1 rc"/><path d="M174.7 213.8 178.7 213.7 182.7 213.3 186.6 213.5" stroke="#e8e8e8" stroke-width="2.1" stroke-opacity="0.28" class="b1 rc"/><path d="M187.5 213 191.5 213.3 195.5 213.3 199.5 213.4 203.5 212.6 206.1 212.6" stroke="#e8e8e8" stroke-width="2.9" stroke-opacity="0.21" class="b1 rc"/><path d="M204.3 212.8 208.3 212.5 212.3 212.4 216.3 212.6 220.3 212.6 223.4 213.2" stroke="#e8e8e8" stroke-width="2.5" stroke-opacity="0.28" class="b1 rc"/><path d="M220.6 212.5 224.6 212.5 228.6 213.1 232.6 213.3 236.6 213.1 240.6 212.8 244.6 212.4 247.1 212.7" stroke="#e8e8e8" stroke-width="2.7" stroke-opacity="0.10" class="b1 rc"/><path d="M244.6 213.1 248.6 212.9 252.6 213.1 256.6 213.2 260.6 213 264.6 213.2 268.6 212.5 270.8 212.6" stroke="#e8e8e8" stroke-width="2.7" stroke-opacity="0.06" class="b1 rc"/><path d="M272 213.8 276 213.3 280 213 284 212.7 288 212.9 289.1 213.3" stroke="#e8e8e8" stroke-width="2.1" stroke-opacity="0.22" class="b1 rc"/><path d="M287.1 212.7 291.1 212.3 295.1 211.9 299.1 212.3 303.1 212.6 304.7 212.5" stroke="#e8e8e8" stroke-width="2.1" stroke-opacity="0.19" class="b1 rc"/><path d="M306.2 212.7 310.2 212.5 314.2 212.2 318.2 212.2 322.2 212.7 326.2 212.4 330.2 212.5 332.8 212.8" stroke="#e8e8e8" stroke-width="2.1" stroke-opacity="0.19" class="b1 rc"/><path d="M334.2 213.3 338.2 213.3 342.2 212.8 345.2 213.4" stroke="#e8e8e8" stroke-width="2.5" stroke-opacity="0.10" class="b1 rc"/><path d="M342.9 213.2 346.9 212.7 350.9 213.3 354.9 213.1 358.9 212.8 362.9 213.2 366.9 213.2 370.5 213" stroke="#e8e8e8" stroke-width="2.1" stroke-opacity="0.13" class="b1 rc"/><path d="M368 213.2 372 213 376 212.9 380 213.3 384 213.1 388 212.8 392 212.8 395.7 213.3" stroke="#e8e8e8" stroke-width="2.3" stroke-opacity="0.17" class="b1 rc"/><path d="M395.8 213.5 399.8 212.9 403.8 213.3 407.8 213 411.8 213.1 415.8 213.6 419.8 213.5 423.5 213.1" stroke="#e8e8e8" stroke-width="2.9" stroke-opacity="0.24" class="b1 rc"/><path d="M423.3 213.6 427.3 213.2 431.3 213 435.3 213.3 439.3 213.7 443.3 213.3 443.8 213.3" stroke="#e8e8e8" stroke-width="2.4" stroke-opacity="0.29" class="b1 rc"/><path d="M444.2 212.2 448.2 212 452.2 212.2 456.2 212.3 460.2 212.8 461 212.7" stroke="#e8e8e8" stroke-width="2.8" stroke-opacity="0.22" class="b1 rc"/><path d="M459.2 213.1 463.2 212.8 467.2 212.8 471.2 213.2 475.2 212.8 479.2 212.4 481.8 212.9" stroke="#e8e8e8" stroke-width="2.2" stroke-opacity="0.30" class="b1 rc"/><path d="M480.4 212.8 484.4 213.2 488.4 212.8 492 212.7" stroke="#e8e8e8" stroke-width="3.0" stroke-opacity="0.06" class="b1 rc"/><path d="M490.8 212.7 494.8 213.1 498.8 213.1 502.8 213.4 506.8 213 510.8 212.7 512.6 213.1" stroke="#e8e8e8" stroke-width="2.3" stroke-opacity="0.09" class="b1 rc"/><path d="M511.3 213.5 515.3 213.4 519.3 213.3 523.3 213.2 527.3 213.8 530.3 213.6" stroke="#e8e8e8" stroke-width="2.7" stroke-opacity="0.26" class="b1 rc"/><path d="M528.9 212.9 532.9 212.4 536.9 212.1 540.9 211.9 544.9 212.3 548.9 212.3 552 212.7" stroke="#e8e8e8" stroke-width="2.9" stroke-opacity="0.23" class="b1 rc"/><path d="M551.6 212.9 555.6 212.9 559.6 212.7 563.6 212.6 567.6 212.7 571.6 212.7 571.9 213.2" stroke="#e8e8e8" stroke-width="2.4" stroke-opacity="0.14" class="b1 rc"/><path d="M569 212.8 573 212.6 577 212.3 581 212.1 585 212.4 589 212.4 589.6 212.5" stroke="#e8e8e8" stroke-width="2.2" stroke-opacity="0.22" class="b1 rc"/><path d="M590.6 212.4 594.6 212.5 598.6 212.3 602.6 212.1 606.6 212.8 610.6 212.5 614.6 212.9" stroke="#e8e8e8" stroke-width="2.8" stroke-opacity="0.18" class="b1 rc"/><path d="M612.3 212.8 616.3 212.5 620.3 212.9 624.3 213.2 628.3 213.6 632.3 213.9 634.9 213.3" stroke="#e8e8e8" stroke-width="2.5" stroke-opacity="0.25" class="b1 rc"/><path d="M635.2 213.1 639.2 213.4 643.2 213.4 647.2 213.6 651.2 213.2 655.2 212.7 659.2 212.9 663.2 212.9 664.9 212.8" stroke="#e8e8e8" stroke-width="2.5" stroke-opacity="0.18" class="b1 rc"/><path d="M662.8 212.5 666.8 212.6 670.8 212.9 673 213" stroke="#e8e8e8" stroke-width="2.2" stroke-opacity="0.24" class="b1 rc"/><path d="M671.9 212.4 673 212.8" stroke="#e8e8e8" stroke-width="2.3" stroke-opacity="0.27" class="b1 rc"/><path d="M670.9 213.9 673 213.5" stroke="#e8e8e8" stroke-width="3.0" stroke-opacity="0.23" class="b1 rc"/><path d="M670.5 213.4 673 213.5" stroke="#e8e8e8" stroke-width="2.3" stroke-opacity="0.14" class="b1 rc"/><path d="M671.8 213.6 673 213.1" stroke="#e8e8e8" stroke-width="2.5" stroke-opacity="0.10" class="b1 rc"/><path d="M672.9 212.7 673 212.9" stroke="#e8e8e8" stroke-width="2.0" stroke-opacity="0.23" class="b1 rc"/><path d="M0 222.2 5 222.3 10 222.2 15 221.9 20 222.1 25 222 30 222.1 35 221.9 40 222.1 45 222.1 50 222 55 222 60 222.1 65 222.3 70 222.4 75 222.5 80 222.4 85 222.1 90 222 95 221.8 100 221.7 105 221.6 110 221.9 115 222 120 221.8 125 222 130 222 135 221.9 140 221.9 145 222.2 150 221.9 155 221.8 160 221.7 165 221.8 170 221.7 175 221.8 180 222.1 185 222.2 190 222.3 195 222.1 200 222.3 205 222 210 221.8 215 221.7 220 221.7 225 222 230 222.2 235 221.9 240 221.8 245 221.8 250 221.7 255 222 260 222.1 265 221.9 270 222.1 275 221.9 280 221.8 285 222.1 290 222 295 222 300 221.9 305 221.7 310 221.8 315 221.9 320 222 325 221.9 330 222.1 335 221.8 340 222.1 345 222.1 350 222.1 355 222.1 360 222.1 365 222.1 370 222.2 375 222.3 380 222.3 385 222.3 390 221.9 395 222.2 400 222.3 405 222.3 410 222.3 415 222.4 420 222.3 425 222.2 430 222.4 435 222.3 440 222 445 222 450 221.9 455 222.1 460 221.8 465 222 470 222.2 475 222.3 480 222 485 222.1 490 222.1 495 221.9 500 222.1 505 222.2 510 222.2 515 222.3 520 222.2 525 222.2 530 222.2 535 222.4 540 222.3 545 222.2 550 222 555 222 560 222 565 222.1 570 222.3 575 222 580 221.9 585 221.9 590 221.8 595 221.9 600 221.8 605 222.1 610 221.9 615 221.9 620 221.8 625 221.7 630 221.7 635 221.6 640 221.8 645 221.9 650 221.9 655 221.8 660 221.6 665 221.8 670 221.7 673 222" stroke="#e8e8e8" stroke-width="2.1" stroke-opacity="0.04" class="b1"/><path d="M0 221.2 4 220.9 8 221.6 12 221.8 16 222 20 221.6 24 221.6 24.1 221.6" stroke="#e8e8e8" stroke-width="2.8" stroke-opacity="0.18" class="b1 rc"/><path d="M25.9 221.3 29.9 221.8 33.9 221.8 37.9 221.4 41.4 221.7" stroke="#e8e8e8" stroke-width="2.1" stroke-opacity="0.22" class="b1 rc"/><path d="M42.2 221.6 46.2 221.3 50.2 220.9 54.2 221.2 55.1 221.4" stroke="#e8e8e8" stroke-width="2.7" stroke-opacity="0.25" class="b1 rc"/><path d="M53.6 221.6 57.6 221.9 61.6 221.5 65.6 221.9 69.6 221.3 73.6 221.1 77.6 221.6 81.6 222 82.2 221.4" stroke="#e8e8e8" stroke-width="2.5" stroke-opacity="0.16" class="b1 rc"/><path d="M79.6 222.4 83.6 222.3 87.6 221.9 91.6 222.5 95.6 222.4 95.9 222.5" stroke="#e8e8e8" stroke-width="2.7" stroke-opacity="0.12" class="b1 rc"/><path d="M93.8 222 97.8 221.7 101.8 221.7 105.8 222.2 106.6 222.3" stroke="#e8e8e8" stroke-width="3.0" stroke-opacity="0.14" class="b1 rc"/><path d="M104.3 222.3 108.3 222.5 112.3 222.4 116.3 222.8 120.3 222.4 124.3 222.1 128.3 222.4 130.1 222.2" stroke="#e8e8e8" stroke-width="2.2" stroke-opacity="0.21" class="b1 rc"/><path d="M129.3 222.1 133.3 221.5 137.3 222 141.3 222.3 142 221.7" stroke="#e8e8e8" stroke-width="2.5" stroke-opacity="0.26" class="b1 rc"/><path d="M141.1 222.3 145.1 222.8 149.1 222.4 153.1 222.7 157.1 222.6 158.6 222.5" stroke="#e8e8e8" stroke-width="2.3" stroke-opacity="0.18" class="b1 rc"/><path d="M160 222.4 164 222.7 168 222.3 172 222.4 176 222 179.4 222.6" stroke="#e8e8e8" stroke-width="2.9" stroke-opacity="0.22" class="b1 rc"/><path d="M178.6 221.9 182.6 222.5 186.6 222 190.6 222 194.6 221.9 197.7 222.2" stroke="#e8e8e8" stroke-width="2.3" stroke-opacity="0.12" class="b1 rc"/><path d="M195.8 221.8 199.8 221.4 203.8 221.2 207.8 221.2 211.8 221 215.8 221.8 218.6 221.8" stroke="#e8e8e8" stroke-width="2.4" stroke-opacity="0.19" class="b1 rc"/><path d="M216.3 222 220.3 222.1 224.3 222.1 227.4 222" stroke="#e8e8e8" stroke-width="2.9" stroke-opacity="0.27" class="b1 rc"/><path d="M225.7 221.3 229.7 221.5 233.7 221.9 237.7 221.7 241.7 221.3 245.7 221.1 249.7 221.8 253.7 221.8 255.5 221.8" stroke="#e8e8e8" stroke-width="2.4" stroke-opacity="0.23" class="b1 rc"/><path d="M256.4 222 260.4 221.8 264.4 222.2 268.4 222.2 272.4 221.9 276.4 222.4 277 222.1" stroke="#e8e8e8" stroke-width="2.5" stroke-opacity="0.13" class="b1 rc"/><path d="M274.6 222.1 278.6 222.3 282.6 222.5 286.6 222 290.6 222.2 294.6 222.4 296 222.5" stroke="#e8e8e8" stroke-width="2.8" stroke-opacity="0.23" class="b1 rc"/><path d="M295.6 221.9 299.6 222.4 303.6 222.3 307.6 221.7 308.3 222.1" stroke="#e8e8e8" stroke-width="2.3" stroke-opacity="0.24" class="b1 rc"/><path d="M307.9 222.8 311.9 222.5 315.9 222.2 319.9 222.1 322.5 222.4" stroke="#e8e8e8" stroke-width="2.4" stroke-opacity="0.13" class="b1 rc"/><path d="M319.7 221.5 323.7 221.3 327.7 221.7 331.7 222 335.7 221.8 339.7 221.5 343.7 221 346.3 221.5" stroke="#e8e8e8" stroke-width="2.5" stroke-opacity="0.22" class="b1 rc"/><path d="M346.6 222.3 350.6 221.9 354.6 222 358.6 221.9 362.6 222.1 363.7 222.3" stroke="#e8e8e8" stroke-width="2.5" stroke-opacity="0.12" class="b1 rc"/><path d="M360.9 221.6 364.9 222.1 368.9 222.1 372.9 222.4 376.9 222.6 380.9 222.4 381.8 221.8" stroke="#e8e8e8" stroke-width="2.9" stroke-opacity="0.06" class="b1 rc"/><path d="M382.9 222.4 386.9 221.9 390.9 222.5 394.9 222.3 398.9 222.7 402.9 222.2 405.1 222.3" stroke="#e8e8e8" stroke-width="2.2" stroke-opacity="0.17" class="b1 rc"/><path d="M405.7 221.8 409.7 222 413.7 222 417.7 221.8 418.7 221.5" stroke="#e8e8e8" stroke-width="2.9" stroke-opacity="0.22" class="b1 rc"/><path d="M420.6 221.7 424.6 221.2 428.6 221 432.6 220.8 433.5 221.6" stroke="#e8e8e8" stroke-width="2.2" stroke-opacity="0.15" class="b1 rc"/><path d="M434.8 222.8 438.8 222.5 442.8 222.2 446.8 221.9 450.8 222.3 451.6 222.4" stroke="#e8e8e8" stroke-width="2.7" stroke-opacity="0.21" class="b1 rc"/><path d="M448.9 223 452.9 222.9 456.9 223.2 460.9 222.5 464.5 222.5" stroke="#e8e8e8" stroke-width="2.4" stroke-opacity="0.22" class="b1 rc"/><path d="M464.2 222.7 468.2 222.7 472.2 222.5 476.2 222.5 480.2 222.2 484.2 222 488.2 221.7 492.2 221.9 494.2 222.4" stroke="#e8e8e8" stroke-width="2.8" stroke-opacity="0.26" class="b1 rc"/><path d="M495 222.2 499 221.9 503 222.3 507 222.5 510.8 222.4" stroke="#e8e8e8" stroke-width="2.8" stroke-opacity="0.22" class="b1 rc"/><path d="M511.2 221.9 515.2 221.3 519.2 221.8 523.2 222.1 527.2 222 528.5 221.5" stroke="#e8e8e8" stroke-width="2.2" stroke-opacity="0.13" class="b1 rc"/><path d="M526.9 222 530.9 222 534.9 222.2 538.9 221.6 542.9 221.9 546.9 221.7 549.6 221.6" stroke="#e8e8e8" stroke-width="2.2" stroke-opacity="0.05" class="b1 rc"/><path d="M547.4 222.9 551.4 223.2 555.4 222.5 559.4 222.6 563.4 222.6 567.4 222.5 571.4 222 574.5 222.6" stroke="#e8e8e8" stroke-width="2.7" stroke-opacity="0.15" class="b1 rc"/><path d="M572.2 221.6 576.2 221.8 580.2 221.8 584.2 221.6 586.8 221.5" stroke="#e8e8e8" stroke-width="2.8" stroke-opacity="0.08" class="b1 rc"/><path d="M585.4 222.8 589.4 222.2 593.4 222 597.4 222.4 601.4 222.1 605.4 221.8 608.7 222.6" stroke="#e8e8e8" stroke-width="2.0" stroke-opacity="0.26" class="b1 rc"/><path d="M606.3 222.3 610.3 222.5 614.3 222.1 617.8 222.2" stroke="#e8e8e8" stroke-width="2.9" stroke-opacity="0.29" class="b1 rc"/><path d="M615.7 222.9 619.7 222.9 623.7 223 627.7 222.7 628.6 222.6" stroke="#e8e8e8" stroke-width="2.7" stroke-opacity="0.16" class="b1 rc"/><path d="M627.4 221.8 631.4 221.6 635.4 221.5 639.4 221.5 643.4 221.4 647.4 221.3 649.3 221.5" stroke="#e8e8e8" stroke-width="2.9" stroke-opacity="0.23" class="b1 rc"/><path d="M649.5 222 653.5 221.9 657.5 222.3 661.5 222.4 665.5 222.4 668.4 221.9" stroke="#e8e8e8" stroke-width="2.9" stroke-opacity="0.14" class="b1 rc"/><path d="M667.2 221.5 671.2 221.7 673 221.9" stroke="#e8e8e8" stroke-width="2.7" stroke-opacity="0.25" class="b1 rc"/><path d="M0 230 5 230 10 229.9 15 229.9 20 230 25 230 30 229.9 35 230.1 40 229.9 45 230.2 50 230.3 55 230.1 60 229.9 65 230.1 70 229.9 75 230.2 80 230.1 85 230 90 230.1 95 230.3 100 230.2 105 230 110 229.8 115 230.1 120 230 125 230 130 229.8 135 229.7 140 229.7 145 229.9 150 229.9 155 229.9 160 229.8 165 229.7 170 230 175 230.2 180 230.3 185 230 190 229.8 195 229.8 200 229.8 205 229.8 210 229.9 215 229.8 220 229.9 225 230 230 229.9 235 230.1 240 230.1 245 229.8 250 230.1 255 229.9 260 229.8 265 230 270 229.8 275 229.7 280 229.6 285 230 290 230.2 295 230 300 230.1 305 230.2 310 230.1 315 230.1 320 230 325 229.9 330 230.2 335 230.1 340 230.2 345 230.3 350 230.2 355 230.2 360 230.3 365 230.4 370 230.1 375 230.2 380 230.3 385 230 390 230.1 395 230.1 400 230 405 230.1 410 230 415 229.8 420 229.7 425 229.9 430 230 435 229.8 440 229.8 445 230 450 229.8 455 229.8 460 230.1 465 229.9 470 230.1 475 230.1 480 229.9 485 230 490 230 495 230.2 500 230.2 505 230 510 230.3 515 230.4 520 230 525 230 530 229.9 535 229.7 540 230 545 230 550 229.8 555 230.1 560 229.9 565 229.8 570 229.6 575 229.6 580 229.9 585 229.8 590 229.7 595 229.7 600 229.8 605 229.9 610 229.9 615 229.7 620 229.9 625 230 630 230.1 635 230 640 230.3 645 230.2 650 230.3 655 230.2 660 230.2 665 230.2 670 230 673 230" stroke="#e8e8e8" stroke-width="2.1" stroke-opacity="0.04" class="b1"/><path d="M0 229.1 4 229.3 8 229.5 12 229.4 16 229.5 18.5 229.6" stroke="#e8e8e8" stroke-width="3.0" stroke-opacity="0.23" class="b1 rc"/><path d="M15.5 229.6 19.5 229.4 23.5 229 26.4 229.5" stroke="#e8e8e8" stroke-width="2.2" stroke-opacity="0.05" class="b1 rc"/><path d="M26.1 230 30.1 230.5 34.1 230.3 38.1 230.7 39.4 230.5" stroke="#e8e8e8" stroke-width="2.1" stroke-opacity="0.06" class="b1 rc"/><path d="M37 229.8 41 229.4 45 229.8 48.5 229.9" stroke="#e8e8e8" stroke-width="2.1" stroke-opacity="0.14" class="b1 rc"/><path d="M46.4 229.6 50.4 230.2 54.4 230 58.4 230.2 59.4 230" stroke="#e8e8e8" stroke-width="2.5" stroke-opacity="0.14" class="b1 rc"/><path d="M59.6 230.2 63.6 230.6 67.6 230.8 71.6 230.9 75.6 230.1 79.1 229.9" stroke="#e8e8e8" stroke-width="2.3" stroke-opacity="0.13" class="b1 rc"/><path d="M76.9 230.9 80.9 230.5 84.9 230.7 88.9 230.4 92.9 230.6 96.9 230.9 100.9 230.6 104.8 230.6" stroke="#e8e8e8" stroke-width="2.3" stroke-opacity="0.11" class="b1 rc"/><path d="M102.4 230.7 106.4 230.5 110.4 230.4 114.4 230.1 118.4 230 122.4 230.3 126.4 230.2" stroke="#e8e8e8" stroke-width="2.2" stroke-opacity="0.19" class="b1 rc"/><path d="M127.2 230.9 131.2 230.3 135.2 230.3 139.2 230.8 142.7 230.4" stroke="#e8e8e8" stroke-width="2.5" stroke-opacity="0.08" class="b1 rc"/><path d="M142.6 229.5 146.6 230 150.6 230.3 154.6 230.5 154.7 229.9" stroke="#e8e8e8" stroke-width="2.5" stroke-opacity="0.10" class="b1 rc"/><path d="M151.9 229.9 155.9 229.4 159.9 229.6 163.9 229.7 167.9 229.4 171.9 229.8 175.9 229.3 177.7 229.5" stroke="#e8e8e8" stroke-width="2.8" stroke-opacity="0.17" class="b1 rc"/><path d="M178.8 229.6 182.8 229.9 186.8 230 190.8 230 194.8 230.3 197.7 229.9" stroke="#e8e8e8" stroke-width="2.8" stroke-opacity="0.16" class="b1 rc"/><path d="M197.9 229.6 201.9 229.4 205.9 229.4 209.9 229.1 213.9 229.2 217.9 229.7 221.5 229.6" stroke="#e8e8e8" stroke-width="2.5" stroke-opacity="0.21" class="b1 rc"/><path d="M219.6 230.6 223.6 230.7 227.6 230.1 231.6 230 235.6 230.6 239.6 230.3 240.3 230.5" stroke="#e8e8e8" stroke-width="2.1" stroke-opacity="0.13" class="b1 rc"/><path d="M240.7 229.9 244.7 229.7 248.7 229.5 252.7 230.2 256.7 230.6 260.7 230 264.7 230.3 266.5 230.1" stroke="#e8e8e8" stroke-width="2.4" stroke-opacity="0.08" class="b1 rc"/><path d="M265.7 230.5 269.7 230.6 273.7 230.8 277.7 231.1 281.7 230.4 285.7 230.1 289.7 230.7 293.7 230.8 294.3 230.6" stroke="#e8e8e8" stroke-width="2.8" stroke-opacity="0.25" class="b1 rc"/><path d="M292.5 229.6 296.5 230.1 300.5 229.5 304.5 230.1 306.3 230" stroke="#e8e8e8" stroke-width="2.3" stroke-opacity="0.23" class="b1 rc"/><path d="M304.5 230 308.5 229.8 312.5 229.4 316.5 229.6 320.5 229.5 324.5 229.3 328.5 229.8 330.5 229.8" stroke="#e8e8e8" stroke-width="2.5" stroke-opacity="0.17" class="b1 rc"/><path d="M332.4 230.1 336.4 230.1 340.4 229.5 344.4 229.4 348.4 229.4 352.4 229.4 356.1 229.9" stroke="#e8e8e8" stroke-width="2.2" stroke-opacity="0.24" class="b1 rc"/><path d="M358 230.1 362 229.7 366 230.2 370 230.6 374 230.6 378 230.6 379.6 230.1" stroke="#e8e8e8" stroke-width="3.0" stroke-opacity="0.17" class="b1 rc"/><path d="M380 230.2 384 229.6 388 229.4 392 229.4 396 230 400 229.7 404 230.2 405.9 229.8" stroke="#e8e8e8" stroke-width="2.1" stroke-opacity="0.20" class="b1 rc"/><path d="M406.3 229.8 410.3 230.3 414.3 229.8 418.3 229.5 422.3 229.5 426.3 229.7 430.3 229.7 431.9 230.2" stroke="#e8e8e8" stroke-width="2.4" stroke-opacity="0.21" class="b1 rc"/><path d="M429.3 230.9 433.3 231.1 437.3 231.1 441.3 231.3 444.7 230.6" stroke="#e8e8e8" stroke-width="2.1" stroke-opacity="0.20" class="b1 rc"/><path d="M444.7 230.2 448.7 230.3 452.7 230.6 456.7 230.4 460.7 230.3 461.8 230" stroke="#e8e8e8" stroke-width="2.8" stroke-opacity="0.24" class="b1 rc"/><path d="M459.5 230.4 463.5 230.9 467.5 231.1 471.5 230.8 475.5 231 479.5 231.2 483.1 230.5" stroke="#e8e8e8" stroke-width="2.8" stroke-opacity="0.23" class="b1 rc"/><path d="M483.5 230.3 487.5 230.7 491.5 230.5 495.5 230.7 496.5 230.2" stroke="#e8e8e8" stroke-width="2.4" stroke-opacity="0.06" class="b1 rc"/><path d="M495.7 230.6 499.7 230.8 503.7 230.6 507.7 230.9 511.7 230.9 515.7 231 519.7 230.3 523.7 230 525 230.4" stroke="#e8e8e8" stroke-width="2.3" stroke-opacity="0.24" class="b1 rc"/><path d="M523.9 229.2 527.9 229.8 531.9 229.7 535.9 229.8 539.9 229.3 543.9 229.4 547.9 229.8 548.4 229.6" stroke="#e8e8e8" stroke-width="2.5" stroke-opacity="0.13" class="b1 rc"/><path d="M546.5 229.7 550.5 230 554.5 230 558.5 230.2 562.5 230.4 565.4 230.1" stroke="#e8e8e8" stroke-width="2.2" stroke-opacity="0.17" class="b1 rc"/><path d="M563.1 230.3 567.1 230.2 571.1 230 575.1 229.8 579.1 229.6 583.1 230.1 585.7 229.9" stroke="#e8e8e8" stroke-width="2.4" stroke-opacity="0.19" class="b1 rc"/><path d="M585.3 229.4 589.3 229.3 593.3 229.2 597.3 229.9 600.5 229.9" stroke="#e8e8e8" stroke-width="2.9" stroke-opacity="0.19" class="b1 rc"/><path d="M600.9 230.2 604.9 230.1 608.9 230.2 612.9 230.7 616.9 230.1 618.1 230.2" stroke="#e8e8e8" stroke-width="2.3" stroke-opacity="0.21" class="b1 rc"/><path d="M615.7 230.7 619.7 230.2 623.7 229.9 627.7 229.7 631.7 229.6 635.7 230.1 635.9 230.6" stroke="#e8e8e8" stroke-width="2.9" stroke-opacity="0.09" class="b1 rc"/><path d="M636.1 230.4 640.1 230.9 644.1 230.4 648.1 230.6 652.1 230.8 656.1 230.3 658.7 230.4" stroke="#e8e8e8" stroke-width="2.6" stroke-opacity="0.14" class="b1 rc"/><path d="M659.8 230.4 663.8 230.6 667.8 230.5 671.8 230.8 673 230.1" stroke="#e8e8e8" stroke-width="2.7" stroke-opacity="0.20" class="b1 rc"/><path d="M670.7 229.9 673 229.9" stroke="#e8e8e8" stroke-width="2.8" stroke-opacity="0.18" class="b1 rc"/><rect x="0.0" y="250.0" width="523.0" height="150.0" fill="#8e8e8e" opacity="0.25" filter="url(#b3)"/><path d="M0 414.5 6 414.3 12 414.3 18 414.3 24 414.2 30 413.7 36 413.8 42 413.2 48 413.2 54 413.1 60 412.5 66 412.7 72 412.4 78 411.6 84 411.6 90 411.4 96 411 102 410.2 108 410.2 114 410.3 120 410.2 126 409.7 132 409.9 138 409.6 144 409.8 150 409.7 156 409.9 162 409.8 168 410 174 410.1 180 410.1 186 410.6 192 410.9 198 410.8 204 410.9 210 410.8 216 410.9 222 410.5 228 410.3 234 410.3 240 410.4 246 410.4 252 410.7 258 410.8 264 410.5 270 410.3 276 410.4 282 410.5 288 410 294 410 300 409.6 306 410 312 410.4 318 410 324 410 330 410.4 336 410.1 342 409.8 348 410 354 410.2 360 410.3 366 410.6 372 410.4 378 410.4 384 410.8 390 410.3 396 410 402 410.3 408 410.1 414 410.5 420 410.8 426 410.8 432 410.8 438 410.8 444 410.2 450 409.9 456 409.7 462 410.1 468 410.4 474 410.2 480 409.9 486 410 492 410.3 498 410.3 504 409.8 510 409.6 516 409.5 522 410 528 410.4 534 409.9 540 410.2 546 410.5 552 410.7 558 410.2 564 410.5 570 410 576 409.6 582 409.4 588 409.3 594 409.9 600 409.9 606 410.2 612 410 618 410 624 410.3 630 409.9 636 410.3 642 409.7 648 410 654 409.6 660 409.7 666 409.6 672 409.9 678 409.5 684 409.5 690 409.7 696 409.8 702 409.6 708 409.3 714 409.7 720 409.7 726 409.2 732 409.2 738 409.2 744 409.7 750 409.3 756 409.6 762 409.4 768 409.3 774 409.1 780 409.6 786 409.9 792 409.7 798 409.4 804 409.4 810 409.8 816 409.4 822 409.2 828 409 834 409.5 840 409.2 846 409.3 852 409.7 858 409.9 864 409.7 870 410 876 410.2 882 410.3 888 409.8 894 409.4 900 409.6 906 409.5 912 409.9 918 409.6 924 409.8 930 409.8 936 410 941 409.5" stroke="#fff" stroke-width="8"/><path d="M0 406.8 6 406.5 12 406.7 18 406.5 24 406.5 30 406.2 36 406.3 42 406.2 48 405.8 54 405.9 60 405.3 66 404.7 72 404.8 78 404.8 84 404.5 90 404.2 96 403.3 102 402.8 108 402.8 114 402.1 120 401.8 126 401.6 132 402.2 138 402.1 144 401.9 150 402.1 156 402.7 162 402.8 168 403.1 174 403.3 180 403.5 186 403.7 192 403.5 198 403 204 402.7 210 403.1 216 403.1 222 403.5 228 403.4 234 403.6 240 403.3 246 403.5 252 403.5 258 403.6 264 403.2 270 402.8 276 403 282 403 288 402.7 294 402.8 300 403 306 403.1 312 402.6 318 402.6 324 402.7 330 402.7 336 402.5 342 402.3 348 402.5 354 402.9 360 402.5 366 402.8 372 402.6 378 402.6 384 403.1 390 403.2 396 402.8 402 402.8 408 402.8 414 403 420 403.2 426 403.4 432 403 438 403.1 444 403 450 402.8 456 402.8 462 402.8 468 403.1 474 403.2 480 402.8 486 402.7 492 402.9 498 402.7 504 402.2 510 402.6 516 402.2 522 402.5 528 402.2 534 402 540 402 546 402.1 552 402.1 558 402.4 564 402.7 570 402.4 576 402.7 582 402.7 588 402.7 594 402.8 600 402.9 606 402.8 612 402.3 618 402.5 624 402.1 630 402.6 636 402.6 642 402.6 648 402.6 654 402.4 660 402.4 666 402.2 672 402 678 402 684 402.2 690 402 696 402.1 702 402.4 708 402.2 714 401.8 720 401.7 726 401.9 732 402.4 738 402.9 744 402.5 750 402.9 756 403.1 762 403.3 768 403.6 774 403.3 780 403.6 786 403.9 792 404.1 798 405 804 404.4 810 404 816 403.3 822 402.9 828 403.2 834 402.8 840 402.9 846 403 852 402.9 858 402.4 864 402.2 870 401.9 876 401.6 882 402.1 888 402.2 894 402.4 900 402.1 906 402.2 912 402.1 918 402.1 924 402.5 930 402.6 936 402.6 941 402" stroke="#000" stroke-width="7"/><path d="M98 411.1 104 410.8 110 410.7 116 410.2 122 410.1 128 410.1 134 410.1 140 410.4 146 410.2 152 410.5 158 410.3 164 410.3 170 410.5 176 410.8 182 411.1 183 411" stroke="#000" stroke-width="2.6" class="b1"/><path d="M183 410.8 189 411.1 195 410.8 201 410.6 207 410.8 213 410.9 219 411.2 225 411.4 231 411.2 237 411.1 243 411.1 249 410.9 255 411.2 261 411.3 267 410.8 273 410.8 279 411 285 411 291 410.8 297 410.7 303 410.6" stroke="#000" stroke-width="2.6" class="b1"/><path d="M338 410.4 344 410.7 350 410.7 356 410.9 362 411 368 410.9 373 410.8" stroke="#000" stroke-width="2.6" class="b1"/><path d="M413 411.1 419 410.8 425 410.8 431 410.7 433 411" stroke="#000" stroke-width="2.6" class="b1"/><path d="M473 410.6 479 410.7 485 410.7 491 410.6 497 410.8 503 410.9 509 410.6 515 410.7 521 410.8 527 410.6 533 410.8 539 410.8 545 410.4 551 410.2 557 410.6 563 410.5 569 410.5 575 410.7 581 410.8 583 410.5" stroke="#000" stroke-width="2.6" class="b1"/><path d="M613 410.5 619 410.5 625 410.8 631 410.9 637 410.9 643 410.7 649 410.8 655 410.8 661 410.8 667 410.4 673 410.2" stroke="#000" stroke-width="2.6" class="b1"/><path d="M685 410 691 409.9 697 409.9 703 409.9 709 409.8 715 409.8 721 409.8 727 409.9 733 409.9 739 409.9 745 410.1 751 410.3 753 410" stroke="#000" stroke-width="2.6" class="b1"/><path d="M913 410 919 410.3 925 410.4 931 410.3 937 410.2 941 410" stroke="#000" stroke-width="2.6" class="b1"/><path d="M0 422.3 6 421.6 12 421.6 18 421.3 24 421.2 30 421 36 420.7 42 420.8 48 420.9 54 420.2 60 420.3 66 420.1 72 419.7 78 419.5 84 419.4 90 419.1 96 418.6 102 418.5 108 418.3 114 417.8 120 417 126 416.7 132 416.7 138 416.9 144 417.5 150 417.2 156 417.6 162 417.8 168 417.6 174 417.9 180 417.9 186 417.7 192 418 198 418.1 204 418.4 210 418.1 216 418.2 222 418.4 228 418.6 234 418.1 240 418 246 417.7 252 417.3 258 417.1 264 417.6 270 417.6 276 417.5 282 417.9 288 418.1 294 418.4 300 417.7 306 417.3 312 416.9 318 417.1 324 417.5 330 417.9 336 417.9 342 418.1 348 418.1 354 417.6 360 417.2 366 417 372 417 378 417.5 384 417.7 390 417.8 396 417.8 402 418.1 408 418.1 414 418.3 420 418.1 426 418.1 432 417.5 438 418.1 444 417.9 450 417.6 456 417.9 462 417.5 468 417.3 474 417.2 480 416.9 486 417.1 492 417.2 498 417.3 504 417.6 510 417.9 516 417.5 522 417.2 528 417.7 534 417.6 540 417.9 546 417.8 552 418 558 417.4 564 417.1 570 417.6 576 417.1 582 417.3 588 417.3 594 417.7 600 417.7 606 417.7 612 417.8 618 417.2 624 417.3 630 417.2 636 417.4 642 417 648 416.9 654 416.8 660 417.5 666 417.4 672 417 678 417.4 684 417.7 690 417.4 696 417 702 416.7 708 416.6 714 416.9 720 416.8 726 417.4 732 417.4 738 417 744 417.1 750 416.9 756 416.6 762 416.7 768 416.9 774 417.4 780 417.3 786 417.5 792 417.8 798 417.4 804 417.1 810 417.3 816 417.4 822 416.9 828 417 834 416.8 840 416.8 846 417.1 852 416.9 858 417.2 864 417.2 870 417.1 876 417 882 417.4 888 417 894 416.6 900 416.6 906 416.7 912 417 918 416.8 924 417 930 417.4 936 417.5 941 417" stroke="#000" stroke-width="5"/><path d="M0 426.7 6 426.5 12 426.7 18 426.9 24 427 30 426.7 36 426.2 42 426.4 48 426.3 54 426.1 60 425.8 66 425.7 72 425 78 424.7 84 424.7 90 424.2 96 424.1 102 423.9 108 422.9 114 422.2 120 422.3 126 422.6 132 422.6 138 422.8 144 422.9 150 422.7 156 423 162 423.2 168 423.6 174 423.6 180 422.9 186 423.1 192 423.4 198 423.5 204 423.1 210 422.9 216 422.8 222 423.3 228 423.3 234 423.7 240 423 246 423 252 423.3 258 423 264 423.4 270 423.2 276 423 282 423.1 288 422.9 294 423.1 300 422.9 306 423 312 422.4 318 422.1 324 421.8 330 422.3 336 422.9 342 423 348 423.1 354 423 360 423.1 366 422.8 372 422.8 378 423.2 384 423.2 390 423 396 422.8 402 422.7 408 422.8 414 422.5 420 422.7 426 422.4 432 422.3 438 422.4 444 422.8 450 422.7 456 422.8 462 422.9 468 422.4 474 422.1 480 422.2 486 422.8 492 422.5 498 422.9 504 422.6 510 422.8 516 422.4 522 422.5 528 422.2 534 422.2 540 422.5 546 422.9 552 422.7 558 422.3 564 422.8 570 422.2 576 422.1 582 422.6 588 422.7 594 423 600 423.2 606 422.8 612 423 618 422.7 624 422.4 630 422.7 636 422.9 642 422.6 648 422.4 654 422.4 660 422.2 666 422.2 672 422.5 678 422.2 684 422.6 690 422.4 696 422.7 702 422.6 708 422.3 714 421.9 720 421.5 726 421.3 732 421.6 738 421.8 744 421.9 750 421.9 756 422.4 762 422.4 768 422.4 774 422.5 780 422 786 422.5 792 422.4 798 422.2 804 421.7 810 422.2 816 422.4 822 421.8 828 421.4 834 422 840 422.1 846 421.8 852 421.8 858 422 864 422.4 870 422.4 876 422 882 421.7 888 421.9 894 421.4 900 421.8 906 422.3 912 421.8 918 422.2 924 422.2 930 422.5 936 422.4 941 422" stroke="#fff" stroke-width="4.5"/><rect x="0.0" y="426.0" width="941.0" height="34.0" fill="#8a8a8a" opacity="1" /><path d="M0 426.5 5 425.8 10 426.1 15 425.7 18 425.1" stroke="#000" stroke-width="4.2" stroke-opacity="0.79" class="b1"/><path d="M18 425.3 23 424.2 28 424.2 33 423.1 37.8 423.5" stroke="#000" stroke-width="3.6" stroke-opacity="0.47" class="b1"/><path d="M37.8 423 42.8 422.4 47.8 421.3 52.8 421.3 57.8 420.5 62.8 419.7 67.4 419.6" stroke="#000" stroke-width="4.7" stroke-opacity="0.56" class="b1"/><path d="M67.4 418.9 72.4 419.2 77.4 418.2 82.4 419 87.4 418 92.4 419.8 97.4 419.6 102.4 418.9 107.4 420.4 107.6 419.6" stroke="#000" stroke-width="3.8" stroke-opacity="0.43" class="b1"/><path d="M107.6 420.2 112.6 420.3 117.6 420.9 122.6 422.4 127.6 422.3 132.6 422.1 137.6 421.9 141.4 422.2" stroke="#000" stroke-width="5.3" stroke-opacity="0.62" class="b1"/><path d="M141.4 422.4 146.4 422 151.4 422.3 152.2 422.2" stroke="#000" stroke-width="5.3" stroke-opacity="0.21" class="b1"/><path d="M152.2 421.8 157.2 422.1 162.2 423.4 167.2 423 172.2 423 177.2 423.5 177.9 423.5" stroke="#000" stroke-width="3.6" stroke-opacity="0.24" class="b1"/><path d="M177.9 424.1 182.9 423.9 187.9 424.4 188.1 424" stroke="#000" stroke-width="3.8" stroke-opacity="0.18" class="b1"/><path d="M188.1 424.5 193.1 424.8 198.1 424.5 203.1 426 208.1 426.1 213.1 427.8 217.3 427.9" stroke="#000" stroke-width="4.2" stroke-opacity="0.82" class="b1"/><path d="M217.3 427.9 222.3 428.7 227.3 429 232.3 428 237.3 428.4 242.3 429.3 247.3 428.3 249.8 429.3" stroke="#000" stroke-width="3.3" stroke-opacity="0.99" class="b1"/><path d="M249.8 428.5 254.8 429.8 259.8 429.5 264.8 430.4 269.8 429.1 274.8 430.5 279.8 431 284.8 430.1 289.8 429.8 291.2 430.5" stroke="#000" stroke-width="3.4" stroke-opacity="0.55" class="b1"/><path d="M291.2 431.2 296.2 431.7 301.2 432 306.2 432.1 311.2 432.1 316.2 430.6 321.2 430.4 326.2 430.2 331.2 430.7 331.2 430.8" stroke="#000" stroke-width="5.6" stroke-opacity="0.24" class="b1"/><path d="M331.2 430.7 336.2 430 341.2 430.6 342.9 429.7" stroke="#000" stroke-width="3.1" stroke-opacity="0.98" class="b1"/><path d="M342.9 430.2 347.9 430.9 352.9 429.6 357.9 429.8 362.9 430 367.9 430.6 372.9 429.9 376.3 429.9" stroke="#000" stroke-width="4.9" stroke-opacity="0.58" class="b1"/><path d="M376.3 428.3 381.3 428.1 386.3 428.1 391.3 428.9 396.3 428.4 401.3 428 405.4 428.9" stroke="#000" stroke-width="3.8" stroke-opacity="0.59" class="b1"/><path d="M405.4 428.8 410.4 428.8 415.4 428.1 420.4 428.1 425.4 427.7 430.4 428.2 435.4 428.8 440.4 428.8 441 427.4" stroke="#000" stroke-width="3.2" stroke-opacity="0.25" class="b1"/><path d="M441 428.3 446 428.2 451 427.7 456 426.3 461 427.7 466 426.9 471 427.7 476 427.4 481 426.6 483.2 427.5" stroke="#000" stroke-width="4.8" stroke-opacity="0.48" class="b1"/><path d="M483.2 426.7 488.2 426.2 493.2 427.2 498.2 426.6 500.3 427.4" stroke="#000" stroke-width="5.6" stroke-opacity="0.44" class="b1"/><path d="M500.3 426.7 505.3 427.4 510.3 427.7 515.3 427.9 520.3 428.2 525.3 428.6 530.3 428.6 535.3 427.9 537 427.1" stroke="#000" stroke-width="3.3" stroke-opacity="0.87" class="b1"/><path d="M537 428 542 426.7 547 427.4 552 427.3 557 427.1 562 428 563.7 428.2" stroke="#000" stroke-width="4.5" stroke-opacity="0.84" class="b1"/><path d="M563.7 428.2 568.7 427 573.7 428.3 574.3 428.3" stroke="#000" stroke-width="4.9" stroke-opacity="0.51" class="b1"/><path d="M574.3 427.9 579.3 426.9 584.3 427.2 589.3 428.7 594.3 428 599.3 427.2 599.7 427.8" stroke="#000" stroke-width="5.6" stroke-opacity="0.43" class="b1"/><path d="M599.7 428.6 604.7 428.2 609.7 427.5 614.7 428.6 619.7 428.7 624.7 427.5 629.7 428 634.7 428.2 639.7 428.5 641.6 428" stroke="#000" stroke-width="4.1" stroke-opacity="0.49" class="b1"/><path d="M641.6 428.4 646.6 427.7 651.6 428.5 656.6 428.7 661.6 429 666.6 428.5 671.6 428.5 674.3 428" stroke="#000" stroke-width="3.5" stroke-opacity="0.65" class="b1"/><path d="M674.3 428.1 679.3 427.5 684.3 427.3 689.3 427.6 694.3 427 699.3 427.8 704.3 428.1 704.6 428.4" stroke="#000" stroke-width="3.4" stroke-opacity="0.17" class="b1"/><path d="M704.6 428.6 709.6 429.4 714.6 429 719.6 428.8 724.6 428.9 729.6 429.2 734.6 427.9 739.6 427.9 744.6 427 746.9 428.2" stroke="#000" stroke-width="3.4" stroke-opacity="0.61" class="b1"/><path d="M746.9 427.7 751.9 428.1 756.9 427.6 761.9 427.5 763.3 427.8" stroke="#000" stroke-width="5.6" stroke-opacity="0.99" class="b1"/><path d="M763.3 427.6 768.3 427.4 773.3 427.8 778.3 427.5 783.3 426.9 788.3 426.1 788.5 427.4" stroke="#000" stroke-width="3.7" stroke-opacity="0.78" class="b1"/><path d="M788.5 427 793.5 427.6 798.5 426.2 803.5 426.2 808.5 427.5 811.4 427.5" stroke="#000" stroke-width="5.2" stroke-opacity="0.35" class="b1"/><path d="M811.4 426 816.4 426 821.4 426.6 826.4 426.4 831.4 427.2 832.7 426.6" stroke="#000" stroke-width="4.2" stroke-opacity="0.30" class="b1"/><path d="M832.7 426.5 837.7 427.7 842.7 427 847.7 426.9 852.7 426.8 857.7 427 862.7 426.5 864.6 427.7" stroke="#000" stroke-width="4.3" stroke-opacity="0.16" class="b1"/><path d="M864.6 427.4 869.6 427.4 874.6 428.1 879.6 428.5 884.6 428.6 886.2 427.6" stroke="#000" stroke-width="3.5" stroke-opacity="0.57" class="b1"/><path d="M886.2 427.8 891.2 426.8 896.2 427.4 901.2 428 906.2 427.9 911.2 427 916.2 428.2 919.2 427.9" stroke="#000" stroke-width="4.4" stroke-opacity="0.29" class="b1"/><path d="M919.2 427.8 924.2 427.7 929.2 427.9 934.1 428" stroke="#000" stroke-width="5.3" stroke-opacity="0.44" class="b1"/><path d="M934.1 428.8 939.1 428 941 428.2" stroke="#000" stroke-width="4.8" stroke-opacity="0.20" class="b1"/><path d="M0 431 5 430.7 10 430.6 14.3 429.1" stroke="#fff" stroke-width="4.5" stroke-opacity="0.43" class="b1"/><path d="M14.3 429.3 19.3 428.7 24.3 428.3 29.3 427.4 34.3 427 36.6 427.5" stroke="#fff" stroke-width="3.3" stroke-opacity="0.34" class="b1"/><path d="M36.6 426.7 41.6 427.5 46.6 427.6 51.6 425.3 56.6 425.8 61.6 424.9 66.6 423.8 71.6 423.9 76.6 422.4 80.7 422.2" stroke="#fff" stroke-width="3.3" stroke-opacity="0.81" class="b1"/><path d="M80.7 421.5 85.7 421.8 90.7 421.9 95.7 422.2 100.7 423.6 105.7 424.5 110.7 425.1 115.7 424.6 120.7 425.6 121 424.8" stroke="#fff" stroke-width="4" stroke-opacity="0.44" class="b1"/><path d="M121 424.5 126 425.4 131 426.4 136 425.5 141 425.7 146 426.8 151 426.7 153.9 426.2" stroke="#fff" stroke-width="3.8" stroke-opacity="0.87" class="b1"/><path d="M153.9 426.9 158.9 426.8 163.9 428.1 168.9 428 169.8 426.8" stroke="#fff" stroke-width="3.2" stroke-opacity="0.81" class="b1"/><path d="M169.8 426.8 174.8 427.8 179.8 428.2 184.8 427.9 189.8 428.8 194.8 428.9 199.8 430.3 204.8 429.9 209.8 431.5 212.5 430.5" stroke="#fff" stroke-width="4.3" stroke-opacity="0.44" class="b1"/><path d="M212.5 431 217.5 432.3 222.5 432.2 227.5 432.6 232.5 432.9 237.5 432 242.5 433.8 247.5 433.9 250.4 432.9" stroke="#fff" stroke-width="4.1" stroke-opacity="0.37" class="b1"/><path d="M250.4 433.1 255.4 432.5 260.4 433 265.4 433.8 270.4 434 273.4 434.8" stroke="#fff" stroke-width="4.3" stroke-opacity="0.67" class="b1"/><path d="M273.4 434.2 278.4 434 283.4 434.4 288.4 434.8 292.7 434.4" stroke="#fff" stroke-width="4" stroke-opacity="0.87" class="b1"/><path d="M292.7 434.6 297.7 433.9 302.7 433.4 307.7 434.6 312.7 435 317.7 435.2 322.7 435.6 327.7 434.7 329.3 434.2" stroke="#fff" stroke-width="3.7" stroke-opacity="0.55" class="b1"/><path d="M329.3 433.5 334.3 432.8 339.3 434.1 344.3 433.7 349.3 434.9 354.3 434.1 359.3 434.4 364.3 433.5 366 433.8" stroke="#fff" stroke-width="4.8" stroke-opacity="0.20" class="b1"/><path d="M366 434.1 371 433.7 376 434.3 381 433.8 386 433.9 391 433.9 396 433.9 400.4 432.3" stroke="#fff" stroke-width="5.6" stroke-opacity="0.30" class="b1"/><path d="M400.4 432.8 405.4 432.5 410.4 431.8 415.4 431.1 420.4 431.4 425.4 432.3 429.5 431.9" stroke="#fff" stroke-width="5.2" stroke-opacity="0.58" class="b1"/><path d="M429.5 431.4 434.5 430.9 439.5 430.4 444.5 431.5 449.5 431.3 451.4 431" stroke="#fff" stroke-width="4.4" stroke-opacity="0.86" class="b1"/><path d="M451.4 430.4 456.4 431.1 461.4 431.9 466.4 430.6 471 431.5" stroke="#fff" stroke-width="3.3" stroke-opacity="0.41" class="b1"/><path d="M471 431.1 476 431.1 481 431.3 486 430.6 491 430.9 496 430.5 501 430.5 506 430.6 510.2 431.8" stroke="#fff" stroke-width="5.4" stroke-opacity="0.81" class="b1"/><path d="M510.2 430.6 515.2 431.1 520.2 432 525.2 431.3 529.1 431.1" stroke="#fff" stroke-width="5.7" stroke-opacity="0.15" class="b1"/><path d="M529.1 431.1 534.1 431 539.1 430.4 544.1 430.5 549.1 431 554.1 431.4 555.6 432.1" stroke="#fff" stroke-width="4.7" stroke-opacity="0.75" class="b1"/><path d="M555.6 430.7 560.6 430.8 565.6 432.2 570.6 431.9 575.6 431.5 580.6 431.2 581 431.6" stroke="#fff" stroke-width="3.3" stroke-opacity="0.42" class="b1"/><path d="M581 431.5 586 432 591 432 596 432.6 601 432.8 606 432.6 611 432.4 616 432.2 621 431.6 624.3 431.8" stroke="#fff" stroke-width="5.4" stroke-opacity="0.50" class="b1"/><path d="M624.3 431.3 629.3 432.3 634.3 432.4 635.6 431.5" stroke="#fff" stroke-width="5.5" stroke-opacity="0.39" class="b1"/><path d="M635.6 430.8 640.6 431.2 645.6 431 650.6 431.8 655.1 432.1" stroke="#fff" stroke-width="3.4" stroke-opacity="0.95" class="b1"/><path d="M655.1 432.2 660.1 433.2 665.1 432.5 670.1 431.7 675.1 431.9 680.1 431.5 685.1 431.1 690.1 431.4 695.1 431.6 698.2 432" stroke="#fff" stroke-width="5.7" stroke-opacity="0.91" class="b1"/><path d="M698.2 431.4 703.2 431.8 708.2 431.6 713.2 432.6 718.2 431.6 723.2 432.6 728.2 432.2 733.2 432.1 734.1 431.5" stroke="#fff" stroke-width="3.9" stroke-opacity="0.17" class="b1"/><path d="M734.1 432.6 739.1 432.3 744.1 432.4 749.1 432.5 754.1 432.8 759.1 432.4 760.4 431.9" stroke="#fff" stroke-width="5" stroke-opacity="0.87" class="b1"/><path d="M760.4 432.3 765.4 432.5 770.4 431.9 775.4 431.7 778.6 431.3" stroke="#fff" stroke-width="3.5" stroke-opacity="0.89" class="b1"/><path d="M778.6 431.7 783.6 431.8 788.6 431.3 793.6 431.6 797.2 430.8" stroke="#fff" stroke-width="4.3" stroke-opacity="0.67" class="b1"/><path d="M797.2 431.5 802.2 431.1 807.2 430.6 812.2 430 817.2 429.8 822.2 430.6 827.2 430.1 831.4 431.4" stroke="#fff" stroke-width="5" stroke-opacity="0.53" class="b1"/><path d="M831.4 431.3 836.4 432.4 841.4 432.6 846.4 431.2 851.4 430.8 856.4 431.6 861.4 431.9 866.4 431.1 867 431" stroke="#fff" stroke-width="3.2" stroke-opacity="0.47" class="b1"/><path d="M867 430.2 872 431.1 877 430.6 882 431.4 887 430.6 892 430.3 896.5 431.2" stroke="#fff" stroke-width="3.7" stroke-opacity="0.77" class="b1"/><path d="M896.5 431.9 901.5 432.2 906.5 431.6 911.5 431.6 912.1 431.3" stroke="#fff" stroke-width="4.5" stroke-opacity="0.77" class="b1"/><path d="M912.1 432.1 917.1 432.6 922.1 433 927.1 432.6 931.9 431.8" stroke="#fff" stroke-width="4" stroke-opacity="0.67" class="b1"/><path d="M931.9 432.1 936.9 432 941 431.9" stroke="#fff" stroke-width="3.4" stroke-opacity="0.32" class="b1"/><path d="M0 434.5 5 433 10 433.7 15 434.1 20 433.1 25 433.5 30 433.8 33.6 431.8" stroke="#000" stroke-width="3" stroke-opacity="0.41" class="b1"/><path d="M33.6 432.4 38.6 432.1 43.6 431.5 48.6 430.8 53.6 428.9 58.2 428.6" stroke="#000" stroke-width="3.2" stroke-opacity="0.18" class="b1"/><path d="M58.2 428.1 63.2 428 68.2 427.5 72.5 426.7" stroke="#000" stroke-width="3.5" stroke-opacity="0.93" class="b1"/><path d="M72.5 427.8 77.5 426.5 82.5 426.4 87.5 426.5 89.1 426.3" stroke="#000" stroke-width="3.9" stroke-opacity="0.67" class="b1"/><path d="M89.1 425.7 94.1 426.9 99.1 426.9 103.5 427.3" stroke="#000" stroke-width="2.3" stroke-opacity="0.81" class="b1"/><path d="M103.5 427.5 108.5 428.3 113.5 428.2 118.5 429.4 123.5 428.4 128.5 428.6 133.5 428.5 138.5 429.1 140 430.3" stroke="#000" stroke-width="2.5" stroke-opacity="0.67" class="b1"/><path d="M140 429.6 145 429 150 429.6 155 430.1 160 429.6 165 430.7 170 430.7 175 431.4 180 431.8 182.4 431.6" stroke="#000" stroke-width="3.6" stroke-opacity="0.86" class="b1"/><path d="M182.4 431.5 187.4 431.9 192.4 432.4 197.4 432.5 202.4 433.1 207.4 435 210.3 434.3" stroke="#000" stroke-width="2.4" stroke-opacity="0.95" class="b1"/><path d="M210.3 434.2 215.3 435.4 220.3 435.2 225.3 435.6 230.3 437 235.3 436.6 240.3 438 245.3 437.1 245.5 436.8" stroke="#000" stroke-width="4" stroke-opacity="0.75" class="b1"/><path d="M245.5 436.8 250.5 437.4 255.5 436.6 260.5 437.4 265.5 437.6 270.5 439.2 275.5 438.6 280.5 439 282.7 438.6" stroke="#000" stroke-width="2.6" stroke-opacity="0.18" class="b1"/><path d="M282.7 439.4 287.7 439.5 292.7 439.1 297.7 438.9 302.7 438.1 307.7 438.7 309.3 438.6" stroke="#000" stroke-width="3.3" stroke-opacity="0.55" class="b1"/><path d="M309.3 438.5 314.3 439.4 319.3 439.3 324.3 439.6 329.3 439.2 333.4 437.8" stroke="#000" stroke-width="3.8" stroke-opacity="0.80" class="b1"/><path d="M333.4 437.7 338.4 438.3 343.4 437.8 348.4 437.2 353.4 437.4 358.4 437 362.4 437.7" stroke="#000" stroke-width="3.5" stroke-opacity="0.33" class="b1"/><path d="M362.4 437.1 367.4 437 372.4 436.1 377.4 436 382.4 435.5 387.4 435.2 388.3 437.1" stroke="#000" stroke-width="3" stroke-opacity="0.73" class="b1"/><path d="M388.3 436.8 393.3 436.2 398.3 436 403.3 435.8 408.3 436.2 410 436.6" stroke="#000" stroke-width="2.6" stroke-opacity="0.20" class="b1"/><path d="M410 436.5 415 437.3 420 436 425 436.1 430 436.1 435 435.3 440 436.1 445 436.6 449.1 435.1" stroke="#000" stroke-width="3.3" stroke-opacity="0.25" class="b1"/><path d="M449.1 435.3 454.1 434.8 459.1 435.1 464.1 435.1 469.1 434.6 474.1 435.4 479.1 436.1 484.1 435 489.1 435.6 493.5 435.3" stroke="#000" stroke-width="2.6" stroke-opacity="0.92" class="b1"/><path d="M493.5 435.3 498.5 436.3 503.5 435.1 508.5 434.6 513.5 434.9 518.5 434.7 523.5 435.7 528 435.6" stroke="#000" stroke-width="2.4" stroke-opacity="0.23" class="b1"/><path d="M528 435.6 533 435.4 538 436.3 539 435.6" stroke="#000" stroke-width="3.8" stroke-opacity="0.54" class="b1"/><path d="M539 435 544 435.6 549 435.6 551 436" stroke="#000" stroke-width="3.1" stroke-opacity="0.66" class="b1"/><path d="M551 435.7 556 434.7 561 435.5 566 435.6 571 436.1 576 436.5 581 437.1 586 437.2 591 436.9 593 436" stroke="#000" stroke-width="4.1" stroke-opacity="0.58" class="b1"/><path d="M593 436.5 598 435.9 603 435.8 608 435.7 613 436.6 618 437.3 622.6 435.9" stroke="#000" stroke-width="3.2" stroke-opacity="0.25" class="b1"/><path d="M622.6 435.7 627.6 436.3 632.6 435.3 637.6 436 642.6 436.4 647.6 435.4 652.6 436.5 657.6 436.2 662.6 435.8 666.6 435.9" stroke="#000" stroke-width="2.9" stroke-opacity="0.36" class="b1"/><path d="M666.6 435.5 671.6 435.2 676.6 436.6 681.6 436.5 686.6 436.3 691.6 436.3 695 436.2" stroke="#000" stroke-width="2.4" stroke-opacity="0.81" class="b1"/><path d="M695 436 700 436.2 705 435.5 710 436 715 436.9 720 436.9 722.8 436.1" stroke="#000" stroke-width="3.9" stroke-opacity="0.41" class="b1"/><path d="M722.8 436.5 727.8 436.9 732.8 436.2 737.8 436.1 742.8 435.8 747.8 435.2 752.8 435.4 756.2 435.4" stroke="#000" stroke-width="3" stroke-opacity="0.62" class="b1"/><path d="M756.2 436.4 761.2 435.9 766.2 435.8 771.2 436.2 776.2 436.2 781.2 435.6 782.2 435.2" stroke="#000" stroke-width="2.3" stroke-opacity="0.21" class="b1"/><path d="M782.2 435.3 787.2 433.8 792.2 433.6 797.2 435.2 799.9 435.4" stroke="#000" stroke-width="2.7" stroke-opacity="0.19" class="b1"/><path d="M799.9 435.7 804.9 434.6 809.9 434.3 814.9 434.4 819.9 435.3 824.9 434.4 829.9 434.2 832.6 434.6" stroke="#000" stroke-width="2.3" stroke-opacity="0.32" class="b1"/><path d="M832.6 434.9 837.6 435.6 842.6 436.1 847.6 435.9 849 435.5" stroke="#000" stroke-width="2.5" stroke-opacity="0.44" class="b1"/><path d="M849 435.2 854 435.5 859 435.5 864 435.6 869 435.5 874 436 877 435.8" stroke="#000" stroke-width="3.3" stroke-opacity="0.20" class="b1"/><path d="M877 436 882 436.2 887 436.5 892 435.3 897 435.3 902 436.2 902.4 435.7" stroke="#000" stroke-width="2.4" stroke-opacity="0.31" class="b1"/><path d="M902.4 436.2 907.4 436.3 912.4 436.2 915.3 435.9" stroke="#000" stroke-width="2.3" stroke-opacity="0.69" class="b1"/><path d="M915.3 435.6 920.3 435.7 925.3 435.7 927.6 436.1" stroke="#000" stroke-width="3.9" stroke-opacity="0.65" class="b1"/><path d="M927.6 436.2 932.6 435.1 937.6 435 941 435.7" stroke="#000" stroke-width="2.7" stroke-opacity="0.47" class="b1"/><path d="M0 437.4 5 437.3 10 436.8 15 436.1 20 437.2 25 436.6 30 436.3 35 434.9 40 434.4 42 434.1" stroke="#fff" stroke-width="3.7" stroke-opacity="0.47" class="b1"/><path d="M42 434.1 47 433.9 52 433.8 57 432.9 62 431.8 67 430.8 72 430.4 77 430.3 77.4 428.8" stroke="#fff" stroke-width="3.5" stroke-opacity="0.96" class="b1"/><path d="M77.4 430.1 82.4 429.6 87.4 429.9 92.4 429.9 97.4 430.2 102.4 430.6 103.9 430.8" stroke="#fff" stroke-width="4.5" stroke-opacity="0.75" class="b1"/><path d="M103.9 430.8 108.9 431.5 113.9 432.2 118.9 431.3 123.9 432.4 128.9 432.4 132.4 432" stroke="#fff" stroke-width="4.8" stroke-opacity="0.53" class="b1"/><path d="M132.4 432.4 137.4 433 142.4 433 147.4 433.1 152.4 433.3 157.4 433.1 162.4 433.6 167.4 434.1 172.4 433.8 175 434.3" stroke="#fff" stroke-width="3.1" stroke-opacity="0.76" class="b1"/><path d="M175 434.9 180 435.7 185 435.5 190 436.4 195 435.7 200 437 205 437.1 210 437.8 213.9 437.6" stroke="#fff" stroke-width="3" stroke-opacity="0.45" class="b1"/><path d="M213.9 437.4 218.9 437.9 223.9 438.5 228.9 439.2 233.9 439.1 238.9 439.2 243.9 438.6 248.9 440.1 251.3 440.3" stroke="#fff" stroke-width="5.3" stroke-opacity="0.44" class="b1"/><path d="M251.3 440.2 256.3 441.4 261.3 440.6 266.3 440.8 271.3 439.8 276.3 441.3 278.4 441.1" stroke="#fff" stroke-width="5.3" stroke-opacity="0.93" class="b1"/><path d="M278.4 441.4 283.4 441.2 288.4 440.7 293.4 441.9 295 442.1" stroke="#fff" stroke-width="4" stroke-opacity="0.26" class="b1"/><path d="M295 440.8 300 441.2 305 440.6 310 441.4 315 440.4 316 441.1" stroke="#fff" stroke-width="4.7" stroke-opacity="0.81" class="b1"/><path d="M316 441.7 321 441.6 326 441.5 331 440.9 336 441.7 341 441.2 346 441.2 347.4 440.8" stroke="#fff" stroke-width="3.5" stroke-opacity="0.88" class="b1"/><path d="M347.4 440.9 352.4 440.9 357.4 441.1 362.4 441.1 367.4 440.8 372.4 440.3 377.4 440.3 378 439.9" stroke="#fff" stroke-width="4" stroke-opacity="0.78" class="b1"/><path d="M378 440.9 383 439.3 388 440.1 388.4 440.2" stroke="#fff" stroke-width="3.5" stroke-opacity="0.52" class="b1"/><path d="M388.4 439.6 393.4 439.2 398.4 439 403.4 439.6 408.4 438.6 409.1 438.8" stroke="#fff" stroke-width="4.8" stroke-opacity="0.51" class="b1"/><path d="M409.1 439.7 414.1 440.1 419.1 440.4 424.1 439.6 429.1 438.3 433.9 438.7" stroke="#fff" stroke-width="3.7" stroke-opacity="0.89" class="b1"/><path d="M433.9 439.2 438.9 438.5 443.9 438 448.9 438 453.9 437.3 458.9 438.5" stroke="#fff" stroke-width="4.9" stroke-opacity="0.61" class="b1"/><path d="M458.9 437.7 463.9 437.4 468.9 437.3 469.5 438.5" stroke="#fff" stroke-width="4.7" stroke-opacity="0.42" class="b1"/><path d="M469.5 438.2 474.5 437.9 479.5 437.5 481.8 438.1" stroke="#fff" stroke-width="4.1" stroke-opacity="0.90" class="b1"/><path d="M481.8 437.2 486.8 437.3 491.8 438.4 496.8 438.5 498 438.5" stroke="#fff" stroke-width="3.2" stroke-opacity="0.84" class="b1"/><path d="M498 438.1 503 438.9 508 438 513 438.6 518 438 523 437.6 528 437.6 533 437.8 538 438.8 540.7 438.7" stroke="#fff" stroke-width="5.3" stroke-opacity="0.75" class="b1"/><path d="M540.7 439.7 545.7 439.4 550.7 440 555.7 439.8 560.7 438.2 565.7 438.1 570.7 437.7 575.7 438.7 580.7 439.1 584 438.4" stroke="#fff" stroke-width="4.7" stroke-opacity="0.40" class="b1"/><path d="M584 439.5 589 438.8 594 439.2 599 440 604 439.5 609 440.1 614 439.3 619 439.1 620.4 439" stroke="#fff" stroke-width="3.1" stroke-opacity="0.49" class="b1"/><path d="M620.4 439.6 625.4 438.3 630.4 438.2 635.4 438.4 640.4 438.7 645.4 439.7 647.4 438.6" stroke="#fff" stroke-width="2.9" stroke-opacity="0.89" class="b1"/><path d="M647.4 439.7 652.4 439.3 657.4 438.8 662.4 437.8 667.4 438 672.4 438.6 673.7 439.2" stroke="#fff" stroke-width="4.7" stroke-opacity="0.49" class="b1"/><path d="M673.7 439 678.7 439.3 683.7 438 684 438.9" stroke="#fff" stroke-width="5.2" stroke-opacity="0.69" class="b1"/><path d="M684 437.8 689 438.7 694 439 699 439.6 704 438.6 709 438.6 714 438.5 715.6 439" stroke="#fff" stroke-width="5.1" stroke-opacity="0.73" class="b1"/><path d="M715.6 439.6 720.6 438.1 725.6 438.8 730.6 439.9 735.6 438.4 740.6 437.9 745.6 438.1 750.1 438.9" stroke="#fff" stroke-width="3.9" stroke-opacity="0.49" class="b1"/><path d="M750.1 439.3 755.1 438.2 760.1 438.1 765.1 438.4 765.3 438.9" stroke="#fff" stroke-width="4.9" stroke-opacity="0.95" class="b1"/><path d="M765.3 439.1 770.3 438.3 775.3 438.6 778.1 438.1" stroke="#fff" stroke-width="5.1" stroke-opacity="0.52" class="b1"/><path d="M778.1 438.3 783.1 438.9 788.1 437.6 793.1 437.4 798.1 437.7 803.1 438.2" stroke="#fff" stroke-width="2.9" stroke-opacity="0.27" class="b1"/><path d="M803.1 438.7 808.1 438.1 813.1 438 818.1 439.1 823.1 437.4 828.1 438.1 829.4 437.8" stroke="#fff" stroke-width="3.7" stroke-opacity="0.22" class="b1"/><path d="M829.4 439 834.4 438.9 839.4 438 844.4 437.3 848.3 438.3" stroke="#fff" stroke-width="3.7" stroke-opacity="0.68" class="b1"/><path d="M848.3 437.8 853.3 437.4 858.3 438 863.3 438.3 868.3 437.9 873.3 439.1 878.3 439 883.3 439.8 888.3 438.5 890.4 438.5" stroke="#fff" stroke-width="4.7" stroke-opacity="0.90" class="b1"/><path d="M890.4 437.2 895.4 437.4 900.4 437.1 905.4 437.4 910.4 437.9 915.4 438.8 920.3 439.2" stroke="#fff" stroke-width="3.2" stroke-opacity="0.81" class="b1"/><path d="M920.3 439.1 925.3 439 930.3 439.4 931.8 438.4" stroke="#fff" stroke-width="3.9" stroke-opacity="0.38" class="b1"/><path d="M931.8 438 936.8 439.4 941 438.9" stroke="#fff" stroke-width="4.5" stroke-opacity="0.40" class="b1"/><path d="M0 441.9 5 441.8 10 441.4 15 440 16.2 440.6" stroke="#000" stroke-width="4" stroke-opacity="0.93" class="b1"/><path d="M16.2 439.9 21.2 439.6 26.2 439.3 30.2 438.7" stroke="#000" stroke-width="4.3" stroke-opacity="0.33" class="b1"/><path d="M30.2 439.1 35.2 438.8 40.2 437.5 45.2 437.5 50.2 437.5 54.5 435.8" stroke="#000" stroke-width="3.7" stroke-opacity="0.26" class="b1"/><path d="M54.5 436.4 59.5 435.4 64.5 434.2 69.5 434.1 74.5 432 79.5 432.2 84.5 432.9 89.5 433.3 92.2 433.3" stroke="#000" stroke-width="4.1" stroke-opacity="0.68" class="b1"/><path d="M92.2 433.8 97.2 433.8 102.2 433.5 107.2 433.8 112.2 434.4 117.2 434.9 121 435.5" stroke="#000" stroke-width="3.5" stroke-opacity="0.81" class="b1"/><path d="M121 435.1 126 435.7 131 435.9 136 437.5 141 436.9 141 436.8" stroke="#000" stroke-width="3.6" stroke-opacity="0.40" class="b1"/><path d="M141 436.5 146 436.6 151 437.1 156 437.2 161 437.3 166 437.1 171 437.9 176 437.9 179 438.2" stroke="#000" stroke-width="4.2" stroke-opacity="0.85" class="b1"/><path d="M179 437.4 184 438.5 189 438.4 194 439.1 199 439.5 204 439.3 207.9 441" stroke="#000" stroke-width="2.8" stroke-opacity="0.80" class="b1"/><path d="M207.9 440.9 212.9 440.9 217.9 441.9 222.9 443 227.9 442.5 232.9 442.4 237.9 442.6 238.6 443.6" stroke="#000" stroke-width="4.2" stroke-opacity="0.50" class="b1"/><path d="M238.6 443.6 243.6 444.4 248.6 444.8 253.6 444.9 257.7 444.3" stroke="#000" stroke-width="2.6" stroke-opacity="0.86" class="b1"/><path d="M257.7 444.8 262.7 444.9 267.7 445.1 272.7 446.1 277.7 445.6 282.7 446.1 287.7 446.1 292.7 446 296.4 444.9" stroke="#000" stroke-width="3.3" stroke-opacity="0.44" class="b1"/><path d="M296.4 445.8 301.4 446.1 306.4 444.8 311.4 444.4 313.7 445.1" stroke="#000" stroke-width="4.3" stroke-opacity="0.25" class="b1"/><path d="M313.7 445.3 318.7 445.5 323.7 445.4 328.7 444.3 333.7 445 338.7 445.1 343 445.1" stroke="#000" stroke-width="3.7" stroke-opacity="0.48" class="b1"/><path d="M343 445.2 348 443.7 353 444.8 358 445.6 361 444.9" stroke="#000" stroke-width="3.2" stroke-opacity="0.84" class="b1"/><path d="M361 443.2 366 443.2 371 443 376 443.3 381 443.5 386 443.7 390 444" stroke="#000" stroke-width="2.8" stroke-opacity="0.29" class="b1"/><path d="M390 442.4 395 442.7 400 442.9 405 443.8 410 443.5 410.1 442.6" stroke="#000" stroke-width="2.7" stroke-opacity="0.99" class="b1"/><path d="M410.1 443.1 415.1 442.9 420.1 441.8 425.1 441 430.1 442.2 432.2 442.6" stroke="#000" stroke-width="4.2" stroke-opacity="0.59" class="b1"/><path d="M432.2 442.8 437.2 442.8 442.2 443 447.2 442 452.2 442.9 457.2 442.3 462.2 442.3 466 441.4" stroke="#000" stroke-width="3.8" stroke-opacity="0.73" class="b1"/><path d="M466 441.2 471 441.9 476 441.5 481 440.9 486 441.1 491 441.8 496 440.9 497 441.4" stroke="#000" stroke-width="3.1" stroke-opacity="0.75" class="b1"/><path d="M497 441.4 502 442 507 441.9 512 442 517 441.9 522 441.4 527 441.6 531.5 442" stroke="#000" stroke-width="4.5" stroke-opacity="0.69" class="b1"/><path d="M531.5 442 536.5 442.2 541.5 441.9 546.5 441.9 551.5 441.9 556.5 442 561.5 442.3 566.5 442 571.1 442.3" stroke="#000" stroke-width="2.5" stroke-opacity="0.67" class="b1"/><path d="M571.1 442.7 576.1 442.9 581.1 442.5 586.1 441.9 591.1 442.6 593.4 442.6" stroke="#000" stroke-width="4.4" stroke-opacity="0.18" class="b1"/><path d="M593.4 443.8 598.4 443.6 603.4 443.2 606.2 442.7" stroke="#000" stroke-width="2.6" stroke-opacity="0.82" class="b1"/><path d="M606.2 443.4 611.2 443.1 616.2 442.6 621.2 442.2 626.2 442.4 631.2 442.9 632.2 442.3" stroke="#000" stroke-width="4" stroke-opacity="0.74" class="b1"/><path d="M632.2 442.4 637.2 442.4 642.2 442.8 645.3 443" stroke="#000" stroke-width="3.7" stroke-opacity="0.64" class="b1"/><path d="M645.3 443.1 650.3 442.8 655.3 442.5 660.3 441.9 665.3 442.3 670.3 442.4 675.3 442.9 678.4 443" stroke="#000" stroke-width="4.1" stroke-opacity="0.55" class="b1"/><path d="M678.4 442.8 683.4 443.3 688.4 443 693.4 442.8 698.4 442.4 703.4 443.5 708.4 442 713.4 443.4 718.4 442.1 720 442.5" stroke="#000" stroke-width="4.2" stroke-opacity="0.71" class="b1"/><path d="M720 443.5 725 442.1 730 442.7 735 442.1 740 441.2 745 442.3 750 441.4 753.4 442.6" stroke="#000" stroke-width="3.9" stroke-opacity="0.57" class="b1"/><path d="M753.4 442.3 758.4 442.3 763.4 442.9 768.4 443.1 773.4 442.3 777.8 442.1" stroke="#000" stroke-width="4" stroke-opacity="0.41" class="b1"/><path d="M777.8 441.7 782.8 442.7 787.8 442.2 792.8 441.7 797.8 442 802.8 441.9 803.3 442" stroke="#000" stroke-width="2.7" stroke-opacity="0.41" class="b1"/><path d="M803.3 441.8 808.3 440.4 813.3 440.8 818.3 441.2 821.7 442.1" stroke="#000" stroke-width="3.1" stroke-opacity="0.81" class="b1"/><path d="M821.7 442.3 826.7 441.7 831.7 442.4 836.7 442.5 841.7 442.7 846.7 442.1 851.7 442.1 856.7 441.6 861.7 441.6 862.5 442.1" stroke="#000" stroke-width="2.5" stroke-opacity="0.28" class="b1"/><path d="M862.5 442.4 867.5 441 872.5 442.3 877.5 442.4 882.5 441.6 887.5 441.1 892.5 442.2 897.5 442.9 899.1 441.8" stroke="#000" stroke-width="3.8" stroke-opacity="0.26" class="b1"/><path d="M899.1 443.2 904.1 442.7 909.1 443.4 914.1 442 919.1 442.7 924.1 442.7 925.6 442.1" stroke="#000" stroke-width="3.8" stroke-opacity="0.74" class="b1"/><path d="M925.6 441.5 930.6 441 935.6 442.8 940.6 443.4 941 442.4" stroke="#000" stroke-width="4.2" stroke-opacity="0.40" class="b1"/><path d="M0 444.7 5 444.3 10 443.6 15 442.7 20 442.9 25 442.7 26 442.1" stroke="#fff" stroke-width="4.3" stroke-opacity="0.36" class="b1"/><path d="M26 442.5 31 441.6 36 440.7 41 440.3 46 439.1 48.2 439.5" stroke="#fff" stroke-width="2.7" stroke-opacity="0.16" class="b1"/><path d="M48.2 439.6 53.2 439.1 58.2 438.9 62.1 438.2" stroke="#fff" stroke-width="4.1" stroke-opacity="0.88" class="b1"/><path d="M62.1 438.5 67.1 437.5 72.1 436.4 77.1 435.3 82.1 435.6 87.1 436.3 92.1 436.7 97.1 436.1 102.1 436.3 102.7 436.9" stroke="#fff" stroke-width="3" stroke-opacity="0.27" class="b1"/><path d="M102.7 438.2 107.7 437.2 112.7 437.7 117.7 438 122.7 438.3 127.7 439.9 132.7 438.7 133.6 439.6" stroke="#fff" stroke-width="3.8" stroke-opacity="0.67" class="b1"/><path d="M133.6 438.4 138.6 440.2 143.6 439.2 148.6 439.3 150.7 439.8" stroke="#fff" stroke-width="3.3" stroke-opacity="0.28" class="b1"/><path d="M150.7 439.8 155.7 439.6 160.7 440.5 165.7 439.9 170.7 440.4 175.7 440.7 180.5 441.2" stroke="#fff" stroke-width="4.8" stroke-opacity="0.26" class="b1"/><path d="M180.5 441.1 185.5 442.3 190.5 442.8 195.5 442.7 198.2 442.9" stroke="#fff" stroke-width="4.1" stroke-opacity="0.24" class="b1"/><path d="M198.2 443.4 203.2 443.8 208.2 444.8 213.2 444.4 218.2 444.6 223.2 445.9 228.2 445.9 233.2 445.4 234.4 446.4" stroke="#fff" stroke-width="4.3" stroke-opacity="0.41" class="b1"/><path d="M234.4 447 239.4 445.7 244.4 446.4 249.4 446.9 252.5 447.2" stroke="#fff" stroke-width="4.7" stroke-opacity="0.80" class="b1"/><path d="M252.5 447.2 257.5 446.5 262.5 447.3 267.5 447.9 267.8 448.3" stroke="#fff" stroke-width="4.5" stroke-opacity="0.94" class="b1"/><path d="M267.8 448.4 272.8 447.4 277.8 448.8 282.8 448.3 287.8 448.8 292.8 447.7 296.7 448.6" stroke="#fff" stroke-width="4.2" stroke-opacity="0.86" class="b1"/><path d="M296.7 447.7 301.7 448.4 306.7 448.4 311.7 448.2 316.7 447.2 321.7 447.4 326.7 447.7 331.7 448 331.9 447.9" stroke="#fff" stroke-width="4.5" stroke-opacity="0.98" class="b1"/><path d="M331.9 448.7 336.9 448.9 341.9 449 346.9 448.8 351.9 448.5 356.9 448.4 361.9 448.3 363.8 447.8" stroke="#fff" stroke-width="3.1" stroke-opacity="0.94" class="b1"/><path d="M363.8 446.7 368.8 447.7 373.8 446.6 378.1 446.7" stroke="#fff" stroke-width="3.8" stroke-opacity="0.56" class="b1"/><path d="M378.1 446 383.1 446.3 388.1 447 393.1 447.5 398.1 447.8 403.1 447 408.1 446.4 413.1 445.4 418.1 446.1 421.2 446.1" stroke="#fff" stroke-width="3.9" stroke-opacity="0.43" class="b1"/><path d="M421.2 446 426.2 446.4 431.2 447.1 433.7 445.3" stroke="#fff" stroke-width="4.6" stroke-opacity="0.78" class="b1"/><path d="M433.7 445.5 438.7 445.4 443.7 446.5 448.7 444.5 453.7 445.2 458.7 444.8 460.2 444.7" stroke="#fff" stroke-width="3.5" stroke-opacity="0.43" class="b1"/><path d="M460.2 445.7 465.2 445.8 470.2 445.3 470.7 444.6" stroke="#fff" stroke-width="4" stroke-opacity="0.31" class="b1"/><path d="M470.7 444.9 475.7 444.9 480.7 444.1 485.7 444.9 489.3 444.6" stroke="#fff" stroke-width="4.6" stroke-opacity="0.58" class="b1"/><path d="M489.3 445.5 494.3 444.9 499.3 445.2 504.3 445.5 509.3 445.9 514.3 445 516.1 445.5" stroke="#fff" stroke-width="2.7" stroke-opacity="0.36" class="b1"/><path d="M516.1 444.7 521.1 444.8 526.1 445.8 531.1 444.3 536.1 445.4 539.9 445.8" stroke="#fff" stroke-width="3.1" stroke-opacity="0.51" class="b1"/><path d="M539.9 446 544.9 444.9 549.9 445.4 554.9 445.4 559.9 445.3 564.9 445.3 569.9 444.8 573.9 445.4" stroke="#fff" stroke-width="3.8" stroke-opacity="0.49" class="b1"/><path d="M573.9 446.7 578.9 446.6 583.9 446.3 586.1 445.8" stroke="#fff" stroke-width="2.8" stroke-opacity="0.68" class="b1"/><path d="M586.1 445.7 591.1 446.1 596.1 446.2 601.1 445.5 606.1 445.4 611.1 445.6 616.1 444.7 621.1 444.3 623.9 445.2" stroke="#fff" stroke-width="4.6" stroke-opacity="0.90" class="b1"/><path d="M623.9 445.9 628.9 446.4 633.9 445.2 638.9 444.7 642.4 445.7" stroke="#fff" stroke-width="3.1" stroke-opacity="0.90" class="b1"/><path d="M642.4 445.1 647.4 444.5 652.4 444.3 657.4 444.9 661.8 445.3" stroke="#fff" stroke-width="4.1" stroke-opacity="0.88" class="b1"/><path d="M661.8 446.3 666.8 445 671.8 445.8 676.8 445.7 681.8 445.4 684.7 445.9" stroke="#fff" stroke-width="3.3" stroke-opacity="0.95" class="b1"/><path d="M684.7 446.4 689.7 446.5 694.7 446.5 699.7 446.8 704.7 446.1 709.7 445.9 714.7 447.3 719.7 446.8 724.7 445.4 725 445.4" stroke="#fff" stroke-width="4.5" stroke-opacity="0.46" class="b1"/><path d="M725 445.6 730 445.4 735 446.1 740 445.5 745 445.8 748.5 445.1" stroke="#fff" stroke-width="3.4" stroke-opacity="0.38" class="b1"/><path d="M748.5 445.8 753.5 445.5 758.5 445 763.5 443.9 768.5 444.5 773.5 446 774.2 445.2" stroke="#fff" stroke-width="4" stroke-opacity="0.70" class="b1"/><path d="M774.2 444.5 779.2 444.3 784.2 444.9 789.2 444.3 789.8 444.8" stroke="#fff" stroke-width="4.9" stroke-opacity="0.19" class="b1"/><path d="M789.8 444.8 794.8 443.9 799.8 444.3 804.8 445.5 809.8 444.4 814.8 445.2 819.8 445 822.9 444.4" stroke="#fff" stroke-width="3.6" stroke-opacity="0.67" class="b1"/><path d="M822.9 444.7 827.9 445.8 832.9 444.7 837.9 444.8 842.9 445.1 847.9 444.8 852.9 444.5 855.8 445.1" stroke="#fff" stroke-width="3.7" stroke-opacity="0.60" class="b1"/><path d="M855.8 445.2 860.8 445.1 865.8 444.9 870.8 445.3 872.8 445.6" stroke="#fff" stroke-width="4.8" stroke-opacity="0.53" class="b1"/><path d="M872.8 445.2 877.8 445.2 882.8 445.9 887.8 445.1 892.8 445.7 892.8 445.6" stroke="#fff" stroke-width="4.4" stroke-opacity="0.71" class="b1"/><path d="M892.8 445.3 897.8 444.8 902.8 444.9 907.8 444.7 912.8 444.9 917.8 445.7 922.8 445.7 927.8 446.5 932.8 445.3 934.5 446.1" stroke="#fff" stroke-width="2.7" stroke-opacity="0.34" class="b1"/><path d="M934.5 444.5 939.5 445.7 941 446" stroke="#fff" stroke-width="2.8" stroke-opacity="0.44" class="b1"/><path d="M0 448.2 5 448.6 10 447.8 15 446 20 446.2 25 445.9 30 444.2 35 444.8 39 444.6" stroke="#000" stroke-width="2.4" stroke-opacity="0.81" class="b1"/><path d="M39 444.9 44 444 49 443 54 442.9 59 442.5 64 442 69 442.3 74 440.3 79 439.4 80 439.1" stroke="#000" stroke-width="2.4" stroke-opacity="0.46" class="b1"/><path d="M80 439.4 85 439.5 90 440.7 95 439.8 99.9 440.9" stroke="#000" stroke-width="2" stroke-opacity="0.99" class="b1"/><path d="M99.9 441.5 104.9 441 109.9 441.4 114.9 441.7 115.5 441.9" stroke="#000" stroke-width="2.2" stroke-opacity="0.41" class="b1"/><path d="M115.5 442.4 120.5 442.7 125.5 443.3 130.5 443.1 135.5 443.3 140.4 442.7" stroke="#000" stroke-width="3.3" stroke-opacity="0.62" class="b1"/><path d="M140.4 443.1 145.4 443.1 150.4 443.6 155.4 444.6 160.4 444.1 165.4 444 170.4 444.5 175.4 445.7 180.4 445.8 180.5 444.7" stroke="#000" stroke-width="3.1" stroke-opacity="0.70" class="b1"/><path d="M180.5 444.4 185.5 445.1 190.5 445.1 195.5 446.1 200.1 447" stroke="#000" stroke-width="2.9" stroke-opacity="0.43" class="b1"/><path d="M200.1 447.6 205.1 447.2 210.1 448 215.1 447.9 220.1 448.7 225.1 450 228.1 449.4" stroke="#000" stroke-width="2.1" stroke-opacity="0.91" class="b1"/><path d="M228.1 449.8 233.1 450.2 238.1 450.2 243.1 449.7 248.1 451.2 253.1 450.9 256.1 451.1" stroke="#000" stroke-width="3" stroke-opacity="0.83" class="b1"/><path d="M256.1 451.4 261.1 451.1 266.1 452.2 271.1 451.2 276.1 451.5 281.1 451.5 286.1 451.3 291.1 451.6 295.4 451.9" stroke="#000" stroke-width="2.6" stroke-opacity="0.16" class="b1"/><path d="M295.4 452.3 300.4 451.2 305.4 451.8 310.4 451.2 315.4 451.6 315.6 451.9" stroke="#000" stroke-width="2.3" stroke-opacity="0.83" class="b1"/><path d="M315.6 450.7 320.6 451.4 325.6 451.9 330.6 451.9 334.7 451.8" stroke="#000" stroke-width="3" stroke-opacity="0.88" class="b1"/><path d="M334.7 451 339.7 451.4 344.7 451.1 349.7 452.2 354.7 451.8 359.7 451.7 364.7 451.3 369.7 450.8 371.5 450.2" stroke="#000" stroke-width="2.4" stroke-opacity="0.43" class="b1"/><path d="M371.5 450.8 376.5 450 381.5 449.8 386.5 449.9 391.5 449.3 396.5 449.3 398.9 449.4" stroke="#000" stroke-width="3.2" stroke-opacity="0.80" class="b1"/><path d="M398.9 449.5 403.9 448.6 408.9 449.3 413.9 449 418.9 448.7 420.4 449" stroke="#000" stroke-width="2.8" stroke-opacity="0.73" class="b1"/><path d="M420.4 449.5 425.4 448.8 430.4 448.5 431.5 448.9" stroke="#000" stroke-width="1.9" stroke-opacity="0.38" class="b1"/><path d="M431.5 449.5 436.5 448.6 441.5 447.3 446.5 447.5 450.5 448.1" stroke="#000" stroke-width="2.9" stroke-opacity="0.40" class="b1"/><path d="M450.5 449.6 455.5 449.1 460.5 448.3 463.3 447.9" stroke="#000" stroke-width="2.5" stroke-opacity="0.25" class="b1"/><path d="M463.3 448.2 468.3 448.4 473.3 448.9 478.3 448.6 483.3 447.8 488.3 447.8 493.3 448.2 494 448.3" stroke="#000" stroke-width="2.9" stroke-opacity="0.56" class="b1"/><path d="M494 447.5 499 448.5 504 447.6 509 447.7 514 447.5 519 447.8 524 448.3 529 449 529.6 448.9" stroke="#000" stroke-width="2.8" stroke-opacity="0.49" class="b1"/><path d="M529.6 449 534.6 448.2 539.6 448.2 544.6 447.7 549.5 449.3" stroke="#000" stroke-width="1.9" stroke-opacity="0.21" class="b1"/><path d="M549.5 448 554.5 448.7 559.5 449.2 563.2 449" stroke="#000" stroke-width="3.2" stroke-opacity="0.41" class="b1"/><path d="M563.2 448 568.2 448.4 573.2 449 578.2 448.9 583.2 448.1 588.2 448.5 593.2 449 598.2 448.3 603.2 448.2 606 449.2" stroke="#000" stroke-width="2" stroke-opacity="0.23" class="b1"/><path d="M606 448.7 611 448.1 616 448.7 621 448.7 626 449.1 631 449 636 449 639.8 449.4" stroke="#000" stroke-width="2.4" stroke-opacity="0.47" class="b1"/><path d="M639.8 449.6 644.8 448.5 649.8 449.1 654.8 449.5 659.8 449.8 664.8 449.7 666.7 449.5" stroke="#000" stroke-width="3.1" stroke-opacity="0.23" class="b1"/><path d="M666.7 449.3 671.7 450.2 676.7 450 681.7 449.4 686.7 449 691.7 448.5 696.7 449.3 701.7 448.6 706.7 449.2 709.7 449.1" stroke="#000" stroke-width="2.7" stroke-opacity="0.74" class="b1"/><path d="M709.7 448.9 714.7 448.5 719.7 448.4 724.7 449 729.7 448.7 731.5 449" stroke="#000" stroke-width="3.3" stroke-opacity="0.33" class="b1"/><path d="M731.5 448.9 736.5 449.9 741.5 448.1 746.5 447.9 749.7 449" stroke="#000" stroke-width="2.7" stroke-opacity="0.70" class="b1"/><path d="M749.7 448.7 754.7 449 759.7 448.3 764.7 447.6 769.7 448.4 770.4 448.9" stroke="#000" stroke-width="3.4" stroke-opacity="0.85" class="b1"/><path d="M770.4 448 775.4 448.1 780.4 448.2 781.4 448.7" stroke="#000" stroke-width="2.3" stroke-opacity="0.99" class="b1"/><path d="M781.4 448.3 786.4 448.8 791.4 449.6 796.4 448.2 801.4 448.5 806.4 447.5 811.4 447.6 816.4 448.6 821.4 448.6 822.3 448.3" stroke="#000" stroke-width="3.3" stroke-opacity="0.53" class="b1"/><path d="M822.3 448 827.3 447.3 832.3 448.2 837.3 447.8 842.3 446.7 845.7 448.4" stroke="#000" stroke-width="2.6" stroke-opacity="0.82" class="b1"/><path d="M845.7 449.4 850.7 448.9 855.7 447.9 860.7 448.6 865.7 447.8 870.7 448 875.7 447.6 880.7 447.7 885.7 448 888 448.4" stroke="#000" stroke-width="2.7" stroke-opacity="0.54" class="b1"/><path d="M888 448.4 893 448.8 898 449 903 448.6 908 449.1 913 449.4 918 449.2 923 449.2 927.3 448.7" stroke="#000" stroke-width="1.8" stroke-opacity="0.66" class="b1"/><path d="M927.3 449 932.3 449.7 937.3 449.8 941 449.2" stroke="#000" stroke-width="2.7" stroke-opacity="0.76" class="b1"/><path d="M0 451.1 5 450.5 10 450.1 15 449.2 20 448.4 25 448.1 25.8 448" stroke="#fff" stroke-width="2.3" stroke-opacity="0.98" class="b1"/><path d="M25.8 448.9 30.8 448.3 35.8 447.4 40.8 446.3 45.8 446 50.8 444.7 55.8 443.9 60.8 443.2 65.8 443 69.3 442.6" stroke="#fff" stroke-width="3" stroke-opacity="1.00" class="b1"/><path d="M69.3 442.9 74.3 441.9 79.3 442.5 84.3 441.7 89.3 442.3 92.5 441.9" stroke="#fff" stroke-width="2.3" stroke-opacity="0.89" class="b1"/><path d="M92.5 442.4 97.5 442.4 102.5 441.6 105.9 443.2" stroke="#fff" stroke-width="3.4" stroke-opacity="0.30" class="b1"/><path d="M105.9 443.6 110.9 443.5 115.9 443 120.9 444 123.9 444.7" stroke="#fff" stroke-width="2.7" stroke-opacity="0.16" class="b1"/><path d="M123.9 445.1 128.9 445.6 133.9 444.5 137.1 445.1" stroke="#fff" stroke-width="3.1" stroke-opacity="0.75" class="b1"/><path d="M137.1 444.3 142.1 445.7 147.1 445.1 152.1 445 157.1 445.1 162.1 446.6 167.1 447 172.1 447.1 175.3 447.1" stroke="#fff" stroke-width="2.2" stroke-opacity="0.55" class="b1"/><path d="M175.3 446.1 180.3 446.5 185.3 447.1 190.3 447.2 190.6 448.2" stroke="#fff" stroke-width="2.5" stroke-opacity="0.18" class="b1"/><path d="M190.6 448.3 195.6 448.5 200.6 448.5 203.5 449" stroke="#fff" stroke-width="2.4" stroke-opacity="0.78" class="b1"/><path d="M203.5 449.3 208.5 449.8 213.5 450.3 218.5 450.9 223.5 451.8 228.5 452.7 233.1 452.1" stroke="#fff" stroke-width="3.4" stroke-opacity="0.49" class="b1"/><path d="M233.1 451.8 238.1 451.3 243.1 451.7 248.1 451.6 251.7 452.6" stroke="#fff" stroke-width="3.6" stroke-opacity="0.32" class="b1"/><path d="M251.7 452.1 256.7 453.7 261.7 454.3 266.7 454.1 271.7 455.4 276.7 454.2 281.7 455.1 282.3 454.2" stroke="#fff" stroke-width="3.4" stroke-opacity="0.77" class="b1"/><path d="M282.3 454.4 287.3 453.5 292.3 454.8 297.3 454.3 302.3 453.7 307.3 454.4 312.3 453.5 316.6 453.6" stroke="#fff" stroke-width="2.4" stroke-opacity="0.48" class="b1"/><path d="M316.6 453.7 321.6 452.9 326.6 453.3 331.6 453.3 336.6 453.6 339.6 453.5" stroke="#fff" stroke-width="2.9" stroke-opacity="0.82" class="b1"/><path d="M339.6 454.3 344.6 454.2 349.6 454.3 354.6 453 359.6 452.9 364.6 452.3 369.6 453.3 374.6 452.9 378.1 452.8" stroke="#fff" stroke-width="2.3" stroke-opacity="0.28" class="b1"/><path d="M378.1 452.4 383.1 452.2 388.1 452.1 392.9 452.1" stroke="#fff" stroke-width="2.2" stroke-opacity="0.47" class="b1"/><path d="M392.9 453.4 397.9 452.9 402.9 451.4 407.9 450.8 412.9 450.4 414.8 452.1" stroke="#fff" stroke-width="3.3" stroke-opacity="0.95" class="b1"/><path d="M414.8 451.2 419.8 451.5 424.8 451.6 429.8 451.5 434.8 451.4 439.8 451.1 440.3 450.7" stroke="#fff" stroke-width="3.2" stroke-opacity="0.56" class="b1"/><path d="M440.3 451.2 445.3 451.7 450.3 451.4 455.3 451.9 460.3 451.5 461.7 451.2" stroke="#fff" stroke-width="2.2" stroke-opacity="0.68" class="b1"/><path d="M461.7 450.2 466.7 450.3 471.7 450.8 473.7 450.2" stroke="#fff" stroke-width="3.3" stroke-opacity="0.27" class="b1"/><path d="M473.7 450.5 478.7 450.4 483.7 449.8 488.7 451.2 493.7 450.8 498.7 451.7 503.7 450.5 507 450.9" stroke="#fff" stroke-width="3" stroke-opacity="0.95" class="b1"/><path d="M507 451 512 450.8 517 450.7 522 450.6 523.5 451.3" stroke="#fff" stroke-width="3.7" stroke-opacity="0.64" class="b1"/><path d="M523.5 450.8 528.5 450.5 533.5 450.2 538.5 449.9 543.5 451 548.5 451.8 553.5 452.4 555.3 450.8" stroke="#fff" stroke-width="2.3" stroke-opacity="0.48" class="b1"/><path d="M555.3 451 560.3 450.7 565.3 451 570.3 450.5 575.3 450.3 580.3 451.3 582 451.4" stroke="#fff" stroke-width="2.7" stroke-opacity="0.65" class="b1"/><path d="M582 452.1 587 451.1 592 451.2 597 451.4 602 451.9 607 451.8 607.6 451" stroke="#fff" stroke-width="2.1" stroke-opacity="0.95" class="b1"/><path d="M607.6 451.2 612.6 451.6 617.6 450.9 622.6 451.2 627.6 451.8 632.6 451.7 637.6 452.5 642.6 451.8 647.6 451.2 648.7 451.6" stroke="#fff" stroke-width="3.1" stroke-opacity="0.17" class="b1"/><path d="M648.7 451.4 653.7 450.4 658.7 450.1 663.7 451.2 668.7 450.6 673.7 450.9 677.6 451" stroke="#fff" stroke-width="2.9" stroke-opacity="0.62" class="b1"/><path d="M677.6 452.3 682.6 451.8 687.6 450.6 692.6 451.8 697.6 451.5 702.6 451.5 705.6 451.6" stroke="#fff" stroke-width="3.4" stroke-opacity="0.65" class="b1"/><path d="M705.6 450.3 710.6 450.8 715.6 451.5 720.6 451 725.6 450.2 726.3 451.8" stroke="#fff" stroke-width="3.1" stroke-opacity="0.22" class="b1"/><path d="M726.3 450.2 731.3 450.5 736.3 450.6 741.3 450.5 746.3 450.3 751.3 450.6 756.3 451.1 761.3 450.8 766.3 450.1 767.7 450.9" stroke="#fff" stroke-width="2.4" stroke-opacity="0.90" class="b1"/><path d="M767.7 450.2 772.7 450.1 777.7 450.9 782.7 450.8 787.7 451.7 792.7 451.2 797.7 451.2 797.9 450.3" stroke="#fff" stroke-width="2.7" stroke-opacity="0.49" class="b1"/><path d="M797.9 451.3 802.9 451.6 807.9 451.1 812.9 451.8 817.9 451 822.9 451.5 823.3 450.6" stroke="#fff" stroke-width="2.8" stroke-opacity="0.40" class="b1"/><path d="M823.3 449.9 828.3 450.2 833.3 450.8 838.3 449.6 843.3 450.4 848.1 450.8" stroke="#fff" stroke-width="2.8" stroke-opacity="0.36" class="b1"/><path d="M848.1 450.8 853.1 450.3 858.1 450.3 860 450.9" stroke="#fff" stroke-width="2.8" stroke-opacity="0.28" class="b1"/><path d="M860 451 865 451.2 870 450.2 875 450.8 880 450.5 883.5 450.7" stroke="#fff" stroke-width="3" stroke-opacity="0.46" class="b1"/><path d="M883.5 450.1 888.5 449.6 893.5 449.7 898.5 449.8 903.5 450.4 908.5 450.7 912.8 451.2" stroke="#fff" stroke-width="3.2" stroke-opacity="0.77" class="b1"/><path d="M912.8 451 917.8 450.6 922.8 451.6 927.8 450.6 932.8 450.8 937.8 451.5 941 451.5" stroke="#fff" stroke-width="2.1" stroke-opacity="0.71" class="b1"/><path d="M0 453.3 5 453.3 10 452.9 15 453 20 451.3 25 450.3 30 450 33.7 449.9" stroke="#000" stroke-width="3.1" stroke-opacity="0.37" class="b1"/><path d="M33.7 449.2 38.7 450.1 43.7 449.4 48.7 448.3 53.7 448.7 58.7 446.4 63.7 446.7 64 445.9" stroke="#000" stroke-width="4.4" stroke-opacity="0.90" class="b1"/><path d="M64 446.4 69 446.4 74 444.6 79 445 84 443.9 89 445.5 91 445.1" stroke="#000" stroke-width="4.4" stroke-opacity="0.17" class="b1"/><path d="M91 444.7 96 445.3 101 445.3 106 446.3 111 446.3 116 446.5 121 446 126 446.9 129.2 447" stroke="#000" stroke-width="3.5" stroke-opacity="0.99" class="b1"/><path d="M129.2 447.3 134.2 447.8 139.2 446.7 144.2 447.7 145.3 448" stroke="#000" stroke-width="3.3" stroke-opacity="0.60" class="b1"/><path d="M145.3 448.1 150.3 448.7 155.3 449.2 160.3 449 165.3 449.4 170.3 449.3 175.3 449 180.3 449.4 184.7 450.1" stroke="#000" stroke-width="3.5" stroke-opacity="0.75" class="b1"/><path d="M184.7 450.3 189.7 451.1 194.7 451.5 199.7 451.8 204.7 451.7 209.7 452.8 214.7 452.9 219.7 452.8 224.1 454.4" stroke="#000" stroke-width="3.3" stroke-opacity="0.74" class="b1"/><path d="M224.1 454.7 229.1 454.4 234.1 454.8 239.1 454.5 244.1 454.9 247.1 455" stroke="#000" stroke-width="4.3" stroke-opacity="0.76" class="b1"/><path d="M247.1 454.6 252.1 455.2 257.1 455.3 262.1 455.8 267.1 456.5 267.2 456.3" stroke="#000" stroke-width="4.2" stroke-opacity="0.34" class="b1"/><path d="M267.2 455.8 272.2 456.9 277.2 456.7 282.2 457.8 287.2 456.6 292.2 457.1 296.3 457.1" stroke="#000" stroke-width="3.3" stroke-opacity="0.23" class="b1"/><path d="M296.3 457.3 301.3 456.8 306.3 455.8 311.3 456.8 316.3 457.5 321.3 456.7 322.9 456.6" stroke="#000" stroke-width="3.5" stroke-opacity="0.59" class="b1"/><path d="M322.9 456.3 327.9 457.1 332.9 457.2 337.9 456.5 342.9 456.4 347.9 455.9 352.9 456.1 357.9 456.1 362.9 455.6 366.5 455.4" stroke="#000" stroke-width="2.8" stroke-opacity="0.74" class="b1"/><path d="M366.5 456.1 371.5 455.5 376.5 455.8 381.5 455.6 386.5 455.3 391.5 454.1 396.5 454.5 401.5 454.4 402.5 454.6" stroke="#000" stroke-width="3.5" stroke-opacity="0.43" class="b1"/><path d="M402.5 455.1 407.5 454.4 412.5 455 417.5 454.7 422.2 453.9" stroke="#000" stroke-width="4.4" stroke-opacity="0.63" class="b1"/><path d="M422.2 454.2 427.2 453.6 432.2 453.8 432.5 453.9" stroke="#000" stroke-width="3.1" stroke-opacity="0.22" class="b1"/><path d="M432.5 453.9 437.5 454 442.5 453 447.5 453 452.2 453.7" stroke="#000" stroke-width="4.9" stroke-opacity="0.48" class="b1"/><path d="M452.2 453.1 457.2 454.2 462.2 454.6 465.8 453.3" stroke="#000" stroke-width="4.4" stroke-opacity="0.73" class="b1"/><path d="M465.8 452.4 470.8 452 475.8 452.3 480.8 452.7 485.8 452.4 490.8 454.1 491.7 453.1" stroke="#000" stroke-width="3.7" stroke-opacity="0.64" class="b1"/><path d="M491.7 452.1 496.7 453.2 501.7 452.8 506.7 453.8 511.7 454.5 516.7 454.3 519.8 453.8" stroke="#000" stroke-width="4.2" stroke-opacity="0.75" class="b1"/><path d="M519.8 453.9 524.8 453.6 529.8 454 534.8 453.8 539.8 453.4 544.8 453.9 547.6 453.6" stroke="#000" stroke-width="4" stroke-opacity="0.49" class="b1"/><path d="M547.6 453.5 552.6 453 557.6 452.2 562.6 453.8 567.6 453.9 567.9 453.8" stroke="#000" stroke-width="4.6" stroke-opacity="0.76" class="b1"/><path d="M567.9 454.4 572.9 454.5 577.9 454.1 579.1 454.4" stroke="#000" stroke-width="3.5" stroke-opacity="0.70" class="b1"/><path d="M579.1 455.3 584.1 455.1 589.1 454.7 594.1 454.4 599.1 454.2 604.1 453.9 609.1 454.4 614.1 453.7 614.4 453.9" stroke="#000" stroke-width="3.9" stroke-opacity="0.85" class="b1"/><path d="M614.4 454.1 619.4 453.2 624.4 453.9 628.7 453.9" stroke="#000" stroke-width="4.2" stroke-opacity="0.24" class="b1"/><path d="M628.7 453.9 633.7 454.6 638.7 454.5 643.7 454.2 648.7 455 653.7 453.6 658.7 454.7 663.7 453.4 666.6 454.5" stroke="#000" stroke-width="2.9" stroke-opacity="0.99" class="b1"/><path d="M666.6 454.8 671.6 455.5 676.6 455.5 681.6 455 686.6 453.6 691.6 454.1 696.6 453.4 701.6 454.6 703.1 454.6" stroke="#000" stroke-width="3.2" stroke-opacity="0.57" class="b1"/><path d="M703.1 454.1 708.1 453.7 713.1 454.4 718.1 455 723.1 455 728.1 454.3 733.1 454.8 738.1 454.8 743.1 454.5 746.4 454.3" stroke="#000" stroke-width="3" stroke-opacity="0.45" class="b1"/><path d="M746.4 454 751.4 454.6 756.4 454.4 761.4 454.2 766.4 452.7 771.4 453.4 776.4 453.4 781.1 453.6" stroke="#000" stroke-width="3.2" stroke-opacity="0.69" class="b1"/><path d="M781.1 453.4 786.1 452.9 791.1 453 796.1 454.2 801.1 453.7 806.1 454.2 811.1 454.1 812.8 452.8" stroke="#000" stroke-width="4.1" stroke-opacity="0.43" class="b1"/><path d="M812.8 453.9 817.8 453 822.8 453.1 826.4 452.9" stroke="#000" stroke-width="4.4" stroke-opacity="0.72" class="b1"/><path d="M826.4 452.7 831.4 452.5 836.4 452.6 841.4 453.5 843.1 453.4" stroke="#000" stroke-width="4" stroke-opacity="0.77" class="b1"/><path d="M843.1 453.7 848.1 453.1 853.1 452.8 858.1 453.3 860.9 453.1" stroke="#000" stroke-width="3.8" stroke-opacity="0.59" class="b1"/><path d="M860.9 454.5 865.9 453.3 870.9 453.9 875.9 453.5 880.9 452.7 885.9 453.5 890.9 453.7 895.9 453 899.9 454" stroke="#000" stroke-width="4.3" stroke-opacity="0.64" class="b1"/><path d="M899.9 453.6 904.9 452.9 909.9 454.1 914.9 453.7 919.9 454.4 924.9 454.3 929.9 454.3 932.8 453.9" stroke="#000" stroke-width="3.6" stroke-opacity="0.85" class="b1"/><path d="M932.8 454.3 937.8 453.7 941 453.6" stroke="#000" stroke-width="3.4" stroke-opacity="0.18" class="b1"/><path d="M0 456.3 5 456.1 10 455.5 10.4 455.6" stroke="#fff" stroke-width="2.9" stroke-opacity="0.94" class="b1"/><path d="M10.4 455.5 15.4 454.6 20.4 453.5 25.4 453.1 30.4 452.4 31.5 453.7" stroke="#fff" stroke-width="3.4" stroke-opacity="0.60" class="b1"/><path d="M31.5 453.2 36.5 453 41.5 453.5 45.6 452.3" stroke="#fff" stroke-width="3.4" stroke-opacity="0.56" class="b1"/><path d="M45.6 452.2 50.6 451.8 55.6 451.1 60.6 449.8 65.6 448.2 70.6 447.9 75.6 447.5 79.6 447.7" stroke="#fff" stroke-width="4.2" stroke-opacity="0.37" class="b1"/><path d="M79.6 447.4 84.6 448.5 89.6 448.7 89.7 448.3" stroke="#fff" stroke-width="3.2" stroke-opacity="0.55" class="b1"/><path d="M89.7 448.4 94.7 449.7 99.7 449.8 104.7 450.4 109.7 450.4 114.7 450.1 119.7 450.3 121.2 450" stroke="#fff" stroke-width="2.8" stroke-opacity="0.28" class="b1"/><path d="M121.2 450.8 126.2 451.1 131.2 450.5 136.2 451.4 141.2 451.8 146.2 451.9 148 452.1" stroke="#fff" stroke-width="4.2" stroke-opacity="0.43" class="b1"/><path d="M148 450.8 153 452.3 158 451.5 163 452.3 168 453.2 173 453.2 178 453.8 179.3 453.6" stroke="#fff" stroke-width="3.5" stroke-opacity="0.31" class="b1"/><path d="M179.3 453 184.3 454.2 189.3 454.8 194.3 455.9 199.3 456.2 201.3 454.9" stroke="#fff" stroke-width="3.7" stroke-opacity="0.88" class="b1"/><path d="M201.3 455.7 206.3 456.8 211.3 456.5 216.3 457.4 221.3 457.1 226.3 457.5 231.3 458.2 236.3 457.8 241.3 457.2 245.1 458.5" stroke="#fff" stroke-width="4.5" stroke-opacity="0.98" class="b1"/><path d="M245.1 458.4 250.1 458.3 255.1 459.1 260.1 459.2 265.1 460.3 266.8 460.2" stroke="#fff" stroke-width="4.4" stroke-opacity="0.91" class="b1"/><path d="M266.8 459.1 271.8 460.1 276.8 460.9 281.8 459.6 286.8 459.9 290.1 460.7" stroke="#fff" stroke-width="5" stroke-opacity="0.64" class="b1"/><path d="M290.1 460.3 295.1 459.7 300.1 459.2 305.1 459.3 310.1 460.3 315.1 460.2 320.1 460.1 325.1 459.3 327.8 460" stroke="#fff" stroke-width="2.9" stroke-opacity="0.39" class="b1"/><path d="M327.8 459.2 332.8 459.7 337.8 459.9 342.8 459.7 347.8 459.1 352.8 459.4 357.8 459.3 362.8 459.1 364.3 459.6" stroke="#fff" stroke-width="4.3" stroke-opacity="0.30" class="b1"/><path d="M364.3 460.2 369.3 459.7 374.3 458.8 379.3 459.1 384.2 458.6" stroke="#fff" stroke-width="4.1" stroke-opacity="0.53" class="b1"/><path d="M384.2 457.9 389.2 458 394.2 457.7 399.2 458.8 404.2 458.1 409.2 458.5 414.2 457.9 417.3 458.1" stroke="#fff" stroke-width="4.2" stroke-opacity="0.51" class="b1"/><path d="M417.3 458.2 422.3 458.2 427.3 457.5 432.3 457.5 432.9 457.1" stroke="#fff" stroke-width="3.1" stroke-opacity="0.47" class="b1"/><path d="M432.9 458.2 437.9 458.5 442.9 458.4 447.9 458.6 452.9 457.3 457.9 456.5 462.9 456.4 467.9 455.6 472.9 455.5 474.5 456.3" stroke="#fff" stroke-width="5.1" stroke-opacity="0.74" class="b1"/><path d="M474.5 456 479.5 455.8 484.5 456.5 489.5 457 491.7 456.4" stroke="#fff" stroke-width="4.3" stroke-opacity="0.22" class="b1"/><path d="M491.7 457.6 496.7 458 501.7 457.7 506.7 457 511.7 457.3 516.7 456.6 521.7 457.6 526.7 457.1 528.5 457.1" stroke="#fff" stroke-width="4.6" stroke-opacity="0.22" class="b1"/><path d="M528.5 457 533.5 456.4 538.5 456.8 543.5 457.3 548.5 458.2 553.5 458.5 556.6 457" stroke="#fff" stroke-width="3.9" stroke-opacity="0.56" class="b1"/><path d="M556.6 457.9 561.6 458.4 566.6 457.9 571.6 458.3 576.6 458.5 581.6 457.1 586.6 457.1 588.2 457.1" stroke="#fff" stroke-width="3.1" stroke-opacity="0.26" class="b1"/><path d="M588.2 457.7 593.2 457.4 598.2 458 603.2 458 608.2 456.9 613.2 457.5 618.2 457.8 621.7 458" stroke="#fff" stroke-width="3.1" stroke-opacity="0.87" class="b1"/><path d="M621.7 458.3 626.7 458.3 631.7 458 636.7 458.7 641.7 457.7 646.7 458.6 651.7 458.9 656.7 459 661.7 458.5 662.8 457.5" stroke="#fff" stroke-width="3.6" stroke-opacity="0.25" class="b1"/><path d="M662.8 456.9 667.8 456.9 672.8 457.5 677.8 457.4 682.8 456.7 684.6 457.7" stroke="#fff" stroke-width="3.3" stroke-opacity="0.44" class="b1"/><path d="M684.6 458 689.6 457.7 694.6 457.6 699.6 457.9 704.6 457.7 709.6 457 714.6 457.6 716 457.1" stroke="#fff" stroke-width="4" stroke-opacity="0.73" class="b1"/><path d="M716 458 721 457.7 726 458 731 458.5 736 458.4 741 457.9 741.7 457.3" stroke="#fff" stroke-width="3.2" stroke-opacity="0.91" class="b1"/><path d="M741.7 457.2 746.7 457.4 751.7 457.8 756.7 457.7 761.7 457.1 766.7 456.8 771.7 456.4 776.7 457.1 781.7 456.8 786.5 456.6" stroke="#fff" stroke-width="4.8" stroke-opacity="0.69" class="b1"/><path d="M786.5 456.1 791.5 456.6 796.5 457.1 801.5 457.3 806.5 456 811.5 457.3 816.5 456 821.5 455.7 826.5 455.6 830.8 456.2" stroke="#fff" stroke-width="4.4" stroke-opacity="0.88" class="b1"/><path d="M830.8 457.2 835.8 456.5 840.8 456.8 845.8 456.7 850.8 456.1 855.8 456.2 860.8 456.3 865.8 455.8 866.4 457" stroke="#fff" stroke-width="4.4" stroke-opacity="0.52" class="b1"/><path d="M866.4 456.5 871.4 456.6 876.4 456.7 881.4 456.9 883.2 457.2" stroke="#fff" stroke-width="3.1" stroke-opacity="0.84" class="b1"/><path d="M883.2 457 888.2 457.1 893.2 458 898.2 457 903.2 457.8 907.1 457.3" stroke="#fff" stroke-width="3.3" stroke-opacity="0.26" class="b1"/><path d="M907.1 457.8 912.1 457 917.1 456.4 922.1 458.1 927.1 458.4 932.1 458.6 937.1 458.6 941 457.7" stroke="#fff" stroke-width="4.3" stroke-opacity="0.46" class="b1"/><path d="M0 461.1 5 459.8 10 459 15 459.7 20 458.7 25 458.2 29.5 457.7" stroke="#000" stroke-width="3.7" stroke-opacity="0.88" class="b1"/><path d="M29.5 458.2 34.5 457.4 39.5 457.4 44.5 457.4 49.5 456.1 54.5 455.1 59.5 454 63 453.4" stroke="#000" stroke-width="4" stroke-opacity="0.39" class="b1"/><path d="M63 453.9 68 451.7 73 452.1 78 451.3 83 450.8 87.5 451.8" stroke="#000" stroke-width="2.7" stroke-opacity="0.50" class="b1"/><path d="M87.5 451.4 92.5 452.3 97.5 452.5 102.5 452.9 107.5 453.5 112.5 454.5 116 453.8" stroke="#000" stroke-width="4.1" stroke-opacity="0.99" class="b1"/><path d="M116 453.8 121 454.6 126 455.2 129.1 454.8" stroke="#000" stroke-width="3.2" stroke-opacity="0.71" class="b1"/><path d="M129.1 454 134.1 454.2 139.1 455.2 144.1 456.6 149.1 454.9 154.1 455 158.3 456.3" stroke="#000" stroke-width="2.5" stroke-opacity="0.40" class="b1"/><path d="M158.3 455.9 163.3 455 168.3 456 173.3 456.5 178.3 457.8 183.3 458.3 185.7 457" stroke="#000" stroke-width="3.9" stroke-opacity="0.23" class="b1"/><path d="M185.7 458.1 190.7 457.2 195.7 458 200.7 459.2 205.7 459.4 210.7 459.8 215.1 460.5" stroke="#000" stroke-width="3.6" stroke-opacity="0.55" class="b1"/><path d="M215.1 460 220.1 460.3 225.1 461.2 230.1 461.9 235.1 463.3 237.9 462.3" stroke="#000" stroke-width="4.2" stroke-opacity="0.84" class="b1"/><path d="M237.9 461.5 242.9 461.7 247.9 463.3 251.7 463" stroke="#000" stroke-width="4.3" stroke-opacity="0.72" class="b1"/><path d="M251.7 463.2 256.7 462.6 261.7 464.1 266.7 464 267.3 463.5" stroke="#000" stroke-width="3.8" stroke-opacity="0.23" class="b1"/><path d="M267.3 464 272.3 463.5 277.3 463 282.3 463.4 287.3 462.6 287.8 463.7" stroke="#000" stroke-width="3.9" stroke-opacity="0.63" class="b1"/><path d="M287.8 463.7 292.8 463.9 297.8 463.5 302.8 462.9 307.8 464 312.8 463 314.1 463.3" stroke="#000" stroke-width="3.4" stroke-opacity="0.55" class="b1"/><path d="M314.1 463.7 319.1 462.7 324.1 463.8 329.1 464.6 334.1 464 335.4 463.7" stroke="#000" stroke-width="3.3" stroke-opacity="0.23" class="b1"/><path d="M335.4 463.6 340.4 464.1 345.4 463 350.4 463 355.4 462.3 360.4 462.6 365.4 463.2 370.4 463 375.4 463.1 380 462.1" stroke="#000" stroke-width="3.9" stroke-opacity="0.61" class="b1"/><path d="M380 463.2 385 461.8 390 461.8 395 462.5 400 461.9 400.3 461.4" stroke="#000" stroke-width="4.2" stroke-opacity="0.46" class="b1"/><path d="M400.3 462.4 405.3 461.2 410.3 461.6 415.3 461.4 420.3 460.3 424.6 461.2" stroke="#000" stroke-width="4.1" stroke-opacity="0.80" class="b1"/><path d="M424.6 460.9 429.6 460 434.6 460.3 439.6 459.8 444.6 461.4 449.6 461.2 454.6 460.1 459.6 461.1 464.6 459.7 465.4 460.8" stroke="#000" stroke-width="3.1" stroke-opacity="0.18" class="b1"/><path d="M465.4 459.8 470.4 460.4 475.4 458.9 480.4 460 485.4 459.5 490.4 459.4 493 459.9" stroke="#000" stroke-width="3.5" stroke-opacity="0.83" class="b1"/><path d="M493 459.8 498 460.2 503 460.3 508 460 513 460.4 518 460.4 523 461.4 528 460.3 529.8 460.3" stroke="#000" stroke-width="4.3" stroke-opacity="0.46" class="b1"/><path d="M529.8 460.5 534.8 460.7 539.8 460.4 544.8 460 549.8 461.7 554.8 461.5 558 461.1" stroke="#000" stroke-width="2.8" stroke-opacity="0.23" class="b1"/><path d="M558 460 563 460.3 568 460.8 573 461.4 578 461.3 583 461.1 588 460.6 590.5 461.5" stroke="#000" stroke-width="3" stroke-opacity="0.71" class="b1"/><path d="M590.5 460.9 595.5 460.2 600.5 459.9 605.5 460.6 610.5 461.4 615.5 460.3 620.5 460.6 625.5 461.1 630.5 461 630.5 461.6" stroke="#000" stroke-width="4.2" stroke-opacity="0.16" class="b1"/><path d="M630.5 461.7 635.5 460.3 640.5 461.3 645.5 460.7 650.5 461.4 655.5 461 660.5 460.8 665.5 460.6 670.5 461.3" stroke="#000" stroke-width="4.2" stroke-opacity="0.99" class="b1"/><path d="M670.5 461.5 675.5 462.1 680.5 461.8 685.5 461.6 689 461.3" stroke="#000" stroke-width="3.9" stroke-opacity="0.39" class="b1"/><path d="M689 461.9 694 461.8 699 460.4 704 461.2 709 461 714 460.9 719 461 724 461 728.1 461" stroke="#000" stroke-width="2.9" stroke-opacity="0.49" class="b1"/><path d="M728.1 460.5 733.1 461.6 738.1 461.9 743.1 461.9 748.1 460.2 753.1 461 758.1 460.1 763.1 461.1 768.1 460 772.2 460.7" stroke="#000" stroke-width="2.7" stroke-opacity="0.80" class="b1"/><path d="M772.2 460.6 777.2 460.6 782.2 459.4 787.2 459.4 792.2 460 797.2 460.3 802.2 459.8 807.2 460.7 807.7 460.5" stroke="#000" stroke-width="4.6" stroke-opacity="0.17" class="b1"/><path d="M807.7 459.2 812.7 460.5 817.7 459.3 822.7 460.3 827 459.9" stroke="#000" stroke-width="3.6" stroke-opacity="0.55" class="b1"/><path d="M827 460.3 832 460.4 837 460 842 459.6 842.6 460" stroke="#000" stroke-width="3.9" stroke-opacity="0.46" class="b1"/><path d="M842.6 461.3 847.6 459.8 852.6 459.6 857.6 460.3 862.6 460.7 867.6 461.4 872.6 460.6 877.6 461.5 882.6 461.8 884.3 460.4" stroke="#000" stroke-width="4.7" stroke-opacity="0.51" class="b1"/><path d="M884.3 460.1 889.3 460.7 894.3 461 899.3 460.6 901.6 461" stroke="#000" stroke-width="4.6" stroke-opacity="0.96" class="b1"/><path d="M901.6 460.9 906.6 460.2 911.6 460.4 916.6 459.9 917.4 461" stroke="#000" stroke-width="3.5" stroke-opacity="0.70" class="b1"/><path d="M917.4 460.6 922.4 461.8 927.4 461.8 929.9 460.9" stroke="#000" stroke-width="3.5" stroke-opacity="0.31" class="b1"/><path d="M929.9 461.5 934.9 462.2 939.9 462.4 940.6 461.4" stroke="#000" stroke-width="4.5" stroke-opacity="0.81" class="b1"/><path d="M940.6 461.8 941 461.3" stroke="#000" stroke-width="3" stroke-opacity="0.37" class="b1"/><path d="M0 445.2 6 445.3 12 444.8 18 445.4 24 444.7 30 442.7 36 441.3 42 439.2 48 438.7 54 437.2 60 435.7 66 433.8 72 433.3 78 431.7 84 432.7 90 434.4 96 435.5 102 437.5 108 437.6 114 437.8 120 437.6 126 437.6 132 437.9 138 439 144 439.1 150 439.9 156 440 162 441.3 168 441 174 442.2 180 443.3 186 444.2 192 444.1 198 444.8 204 444.4 210 445.5 216 446.4 222 446.6 228 447.2 234 447.2 240 447.9 246 447.5 252 446.9 258 446.9 264 448.1 270 448.9 276 448.8 282 449.4 288 450 294 449.4 300 448.9 306 449.8 312 449.4 318 450 324 449.4 330 450.1 336 449.1 342 449 348 449.1 354 448.6 360 449.5 366 450.3 372 449.9 378 450.1 384 449.6 390 449.4 396 449.9 402 449.9 408 449.3 414 450.4 420 451 426 450.2 432 449.4 433 448" stroke="#000" stroke-width="6" stroke-opacity="0.95" class="b1"/><rect x="48.0" y="449.0" width="165.0" height="9.0" fill="#fff" opacity="0.75" filter="url(#b2)"/><path d="M0 429.3 6 429.6 12 429.5 18 429 24 429.3 30 429 36 429.3 42 429 48 429.1 54 429.3 60 428.7 66 428.5 72 428.2 78 427.9 84 428.1 90 427.3 96 427.1 102 426.7 108 426.2 114 425.7 120 426.1 126 425.8 132 426.3 138 425.9 144 425.7 150 425.4 156 425.1 162 424.8 168 425.4 174 425.8 180 426.1 186 426 192 426.1 198 425.9 204 425.6 210 425.9 216 425.6 222 425.1 228 425.1 234 425.4 240 425" stroke="#000" stroke-width="3" stroke-opacity="0.90" class="b1"/><path d="M348 427.6 354 427.6 360 427.8 366 427.6 372 427.9 378 427.5 384 427.8 390 428.1 396 428 402 428 408 427.6 414 427.8 420 428.1 426 428.4 432 428.1 438 427.8 444 428.1 450 428 456 427.9 462 428 468 427.7 474 428 480 428.3 483 428" stroke="#000" stroke-width="5" stroke-opacity="0.90" class="b1"/><path d="M348 432.7 354 432.5 360 432.5 366 432.9 372 432.7 378 432.6 384 433.1 390 432.7 396 432.9 402 433.2 408 433 414 432.6 420 432.4 426 432.9 432 432.9 438 432.6 444 432.4 450 432.9 456 433.2 462 433.5 468 433.4 474 433.5 480 433.4 483 433" stroke="#fff" stroke-width="5" stroke-opacity="0.90" class="b1"/><path d="M393 438.1 399 438.2 405 438.2 411 438.3 417 438.8 423 438.7 429 438.5 435 438.4 441 438.2 447 438.6 453 438.7 459 438.7 465 438.8 471 439.1 477 439.4 483 439" stroke="#000" stroke-width="5" stroke-opacity="0.90" class="b1"/><rect x="397.0" y="443.0" width="83.0" height="15.0" fill="#f4f4f4" opacity="0.75" filter="url(#b2)"/><path d="M523 430 529 429.3 535 429.8 541 429.6 547 429.2 553 429.2 559 429.6 565 429.9 571 429.5 577 429.4 583 429.6 589 430 595 430.3 601 429.6 607 429.4 613 429.1 619 429.2 625 429 631 429.2 637 429.8 643 429.8 649 429.3 655 429.6 661 429.8 667 429.5 673 429.8 679 430.2 685 429.5 691 429.4 697 429.8 703 429.9 709 430.2 715 430.1 720 429.5" stroke="#000" stroke-width="6" stroke-opacity="0.90" class="b1"/><path d="M523 436.6 529 437.1 535 436.8 541 437.2 547 437.4 553 437.7 559 437.7 565 437.8 571 438 577 437.9 583 437.4 589 437 595 436.6 601 436.7 607 436.5 613 436.9 619 436.5 625 436.6 631 437 637 437.3 643 436.7 649 436.4 655 436.5 661 436.2 667 436.6 673 436.3 679 436.7 685 437.1 691 437.4 697 437.2 703 437.4 709 437.5 715 437.3 720 437" stroke="#fff" stroke-width="7" stroke-opacity="0.90" class="b1"/><rect x="527.0" y="441.0" width="193.0" height="10.0" fill="#f0f0f0" opacity="0.45" filter="url(#b3)"/><rect x="527.0" y="451.0" width="193.0" height="9.0" fill="#505050" opacity="0.3" filter="url(#b3)"/><path d="M720 427.9 726 427.3 732 427.7 738 428 744 428.1 750 427.8 756 427.7 762 427.5 768 427.1 774 427.4 780 427.8 786 427.7 792 427.4 798 427.7 804 427.4 810 427.7 816 428.1 822 428.3 828 427.5 834 427 840 426.9 846 426.8 852 427 858 426.8 864 427.5 870 427.7 876 427.3 882 426.9 888 427.5 894 427.6 900 427.3 906 427.3 912 427.5 918 427.9 924 427.8 930 427.4 936 427 941 427.5" stroke="#000" stroke-width="5" stroke-opacity="0.90" class="b1"/><rect x="720.0" y="432.0" width="221.0" height="16.0" fill="#f4f4f4" opacity="0.6" filter="url(#b2)"/><rect x="720.0" y="450.0" width="221.0" height="10.0" fill="#606060" opacity="0.3" filter="url(#b3)"/><rect x="903.0" y="445.0" width="38.0" height="11.0" fill="#111" opacity="0.5" filter="url(#b2)"/><rect x="63.0" y="426.0" width="10.0" height="34.0" fill="#999" opacity="0.5" filter="url(#b1)"/><rect x="723.0" y="426.0" width="7.0" height="34.0" fill="#999" opacity="0.5" filter="url(#b1)"/><rect x="795.0" y="426.0" width="12.0" height="34.0" fill="#999" opacity="0.5" filter="url(#b1)"/><rect x="883.0" y="426.0" width="10.0" height="34.0" fill="#999" opacity="0.5" filter="url(#b1)"/></g></g></svg>
<div class="a ax" style="left:520.5px;top:317.0px;width:53px;text-align:right">0.0</div>
<div class="a" style="left:574.5px;top:322.5px;width:5px;height:1.2px;background:#333"></div>
<div class="a ax" style="left:520.5px;top:340.4px;width:53px;text-align:right">11.6</div>
<div class="a" style="left:574.5px;top:345.9px;width:5px;height:1.2px;background:#333"></div>
<div class="a ax" style="left:520.5px;top:363.9px;width:53px;text-align:right">16.6</div>
<div class="a" style="left:574.5px;top:369.4px;width:5px;height:1.2px;background:#333"></div>
<div class="a ax" style="left:520.5px;top:387.3px;width:53px;text-align:right">20.4</div>
<div class="a" style="left:574.5px;top:392.8px;width:5px;height:1.2px;background:#333"></div>
<div class="a ax" style="left:520.5px;top:410.7px;width:53px;text-align:right">23.8</div>
<div class="a" style="left:574.5px;top:416.2px;width:5px;height:1.2px;background:#333"></div>
<div class="a ax" style="left:520.5px;top:434.1px;width:53px;text-align:right">28.8</div>
<div class="a" style="left:574.5px;top:439.6px;width:5px;height:1.2px;background:#333"></div>
<div class="a ax" style="left:520.5px;top:457.6px;width:53px;text-align:right">29.6</div>
<div class="a" style="left:574.5px;top:463.1px;width:5px;height:1.2px;background:#333"></div>
<div class="a ax" style="left:520.5px;top:481.0px;width:53px;text-align:right">32.2</div>
<div class="a" style="left:574.5px;top:486.5px;width:5px;height:1.2px;background:#333"></div>
<div class="a ax" style="left:520.5px;top:504.4px;width:53px;text-align:right">34.6</div>
<div class="a" style="left:574.5px;top:509.9px;width:5px;height:1.2px;background:#333"></div>
<div class="a ax" style="left:520.5px;top:527.9px;width:53px;text-align:right">37.0</div>
<div class="a" style="left:574.5px;top:533.4px;width:5px;height:1.2px;background:#333"></div>
<div class="a ax" style="left:520.5px;top:551.3px;width:53px;text-align:right">39.3</div>
<div class="a" style="left:574.5px;top:556.8px;width:5px;height:1.2px;background:#333"></div>
<div class="a ax" style="left:520.5px;top:574.7px;width:53px;text-align:right">41.5</div>
<div class="a" style="left:574.5px;top:580.2px;width:5px;height:1.2px;background:#333"></div>
<div class="a ax" style="left:520.5px;top:598.2px;width:53px;text-align:right">43.6</div>
<div class="a" style="left:574.5px;top:603.7px;width:5px;height:1.2px;background:#333"></div>
<div class="a ax" style="left:520.5px;top:621.6px;width:53px;text-align:right">45.7</div>
<div class="a" style="left:574.5px;top:627.1px;width:5px;height:1.2px;background:#333"></div>
<div class="a ax" style="left:520.5px;top:645.0px;width:53px;text-align:right">47.8</div>
<div class="a" style="left:574.5px;top:650.5px;width:5px;height:1.2px;background:#333"></div>
<div class="a ax" style="left:520.5px;top:668.5px;width:53px;text-align:right">49.8</div>
<div class="a" style="left:574.5px;top:674.0px;width:5px;height:1.2px;background:#333"></div>
<div class="a ax" style="left:520.5px;top:691.9px;width:53px;text-align:right">51.8</div>
<div class="a" style="left:574.5px;top:697.4px;width:5px;height:1.2px;background:#333"></div>
<div class="a ax" style="left:577.0px;top:753px">0.0</div>
<div class="a" style="left:576.5px;top:750px;width:1.2px;height:4px;background:#333"></div>
<div class="a ax" style="left:671.1px;top:753px">100.0</div>
<div class="a" style="left:670.6px;top:750px;width:1.2px;height:4px;background:#333"></div>
<div class="a ax" style="left:765.2px;top:753px">200.0</div>
<div class="a" style="left:764.7px;top:750px;width:1.2px;height:4px;background:#333"></div>
<div class="a ax" style="left:859.3px;top:753px">300.0</div>
<div class="a" style="left:858.8px;top:750px;width:1.2px;height:4px;background:#333"></div>
<div class="a ax" style="left:953.4px;top:753px">400.0</div>
<div class="a" style="left:952.9px;top:750px;width:1.2px;height:4px;background:#333"></div>
<div class="a ax" style="left:1047.5px;top:753px">500.0</div>
<div class="a" style="left:1047.0px;top:750px;width:1.2px;height:4px;background:#333"></div>
<div class="a ax" style="left:1141.6px;top:753px">600.0</div>
<div class="a" style="left:1141.1px;top:750px;width:1.2px;height:4px;background:#333"></div>
<div class="a ax" style="left:1235.7px;top:753px">700.0</div>
<div class="a" style="left:1235.2px;top:750px;width:1.2px;height:4px;background:#333"></div>
<div class="a ax" style="left:1329.8px;top:753px">800.0</div>
<div class="a" style="left:1329.3px;top:750px;width:1.2px;height:4px;background:#333"></div>
<div class="a ax" style="left:1423.9px;top:753px">900.0</div>
<div class="a" style="left:1423.4px;top:750px;width:1.2px;height:4px;background:#333"></div>
<div class="a ax" style="left:1048px;top:767px">L, mm</div>
</div></div>
<!-- page scrollbar -->
<div class="a" style="left:1664px;top:64px;width:8px;height:986px;background:#f2f2fe"></div>
<div class="a sbb" style="left:1664px;top:64px;width:8px;height:18px"><i class="up"></i></div>
<div class="a" style="left:1664px;top:354px;width:8px;height:384px;background:#cdcdfa;border:1px solid #a8a8f0"></div>
<div class="a sbb" style="left:1664px;top:1030px;width:8px;height:18px"><i class="dn"></i></div>

<div class="panel">
  <div class="gh">Data selection</div>
  <div class="th" style="left:0;width:62px;padding-left:3px">#</div>
  <div class="th" style="left:63px;width:127px">Date Time</div>
  <div class="th" style="left:191px;width:85px">W.Joint #</div>
  <div class="th" style="left:277px;width:85px">Operator</div>
  <div class="th" style="left:363px;width:14px"></div>
  <div class="a" style="left:0;top:61px;width:370px;height:360px;overflow:hidden">
<div class="row" style="top:0px;background:#c9c9fa"><span style="left:-2px">30</span><span style="left:64px">09.06.2016 18:53:06</span><span style="left:192px">-</span><span style="left:278px">-</span></div>
<div class="row" style="top:30px;background:#dcdcfa"><span style="left:-2px">31</span><span style="left:64px">09.06.2016 19:06:02</span><span style="left:192px">-</span><span style="left:278px">-</span></div>
<div class="row" style="top:60px;background:#c9c9fa"><span style="left:-2px">32</span><span style="left:64px">09.06.2016 19:10:59</span><span style="left:192px">-</span><span style="left:278px">-</span></div>
<div class="row" style="top:90px;background:#dcdcfa"><span style="left:-2px">33</span><span style="left:64px">09.06.2016 19:11:41</span><span style="left:192px">-</span><span style="left:278px">-</span></div>
<div class="row" style="top:120px;background:#c9c9fa"><span style="left:-2px">34</span><span style="left:64px">05.07.2016 13:51:46</span><span style="left:192px">E00</span><span style="left:278px">Diddyk Andrii</span></div>
<div class="row" style="top:150px;background:#dcdcfa"><span style="left:-2px">35</span><span style="left:64px">05.07.2016 13:52:31</span><span style="left:192px">E02</span><span style="left:278px">Diddyk Andrii</span></div>
<div class="row" style="top:180px;background:#c9c9fa"><span style="left:-2px">36</span><span style="left:64px">05.07.2016 13:54:10</span><span style="left:192px">E03</span><span style="left:278px">Diddyk Andrii</span></div>
<div class="row" style="top:210px;background:#dcdcfa"><span style="left:-2px">37</span><span style="left:64px">05.07.2016 13:56:39</span><span style="left:192px">E04</span><span style="left:278px">Diddyk Andrii</span></div>
<div class="row" style="top:240px;background:#c9c9fa"><span style="left:-2px">38</span><span style="left:64px">05.07.2016 13:57:44</span><span style="left:192px">E05</span><span style="left:278px">Diddyk Andrii</span></div>
<div class="row" style="top:270px;background:#dcdcfa"><span style="left:-2px">39</span><span style="left:64px">05.07.2016 14:02:59</span><span style="left:192px">E06</span><span style="left:278px">Diddyk Andrii</span></div>
<div class="row" style="top:300px;background:#c9c9fa"><span style="left:-2px">40</span><span style="left:64px">04.10.2016 16:44:45</span><span style="left:192px">-</span><span style="left:278px">-</span></div>
<div class="row" style="top:330px;background:#dcdcfa"><span style="left:-2px">41</span><span style="left:64px">04.10.2016 16:49:10</span><span style="left:192px">-</span><span style="left:278px">-</span></div>
  </div>
  <div class="a" style="left:62px;top:61px;width:1px;height:360px;background:#b9b9f0;opacity:.6"></div>
  <div class="a" style="left:190px;top:61px;width:1px;height:360px;background:#b9b9f0;opacity:.6"></div>
  <div class="a" style="left:276px;top:61px;width:1px;height:360px;background:#b9b9f0;opacity:.6"></div>
  <div class="a" style="left:362px;top:61px;width:1px;height:360px;background:#b9b9f0;opacity:.6"></div>
  <!-- table scrollbar -->
  <div class="a" style="left:370px;top:61px;width:8px;height:360px;background:#f4f4ff"></div>
  <div class="a sbb" style="left:370px;top:62px;width:8px;height:18px"><i class="up"></i></div>
  <div class="a" style="left:370px;top:309px;width:8px;height:95px;background:#c9c9fa;border:1px solid #a9a9f2"></div>
  <div class="a sbb" style="left:370px;top:402px;width:8px;height:18px"><i class="dn"></i></div>

  <div class="sec" style="top:423px">Data filtration parameters</div>
  <div class="lbl" style="left:26px;top:460px">Date</div>
  <div class="tog" style="left:164px;top:482px"></div>
  <div class="lbl" style="left:217px;top:467px;font-size:13px">from</div>
  <div class="lbl" style="left:217px;top:502px;font-size:13px">to</div>
  <div class="din" style="left:265px;top:463px">19.10.2016<i></i></div>
  <div class="din" style="left:265px;top:498px">19.10.2016<i></i></div>
  <div class="sep" style="top:532px"></div>
  <div class="lbl" style="left:26px;top:540px">Welded joint #</div>
  <div class="tog" style="left:164px;top:547px"></div>
  <div class="tin" style="left:265px;top:546px">...</div>
  <div class="sep" style="top:582px"></div>
  <div class="lbl" style="left:26px;top:590px">Operator</div>
  <div class="tog" style="left:164px;top:597px"></div>
  <div class="tin" style="left:265px;top:596px">...</div>
  <div class="sep" style="top:632px;height:2px"></div>

  <div class="sec" style="top:634px">Document parameters</div>
  <div class="lbl" style="left:22px;top:670px">Cutting width</div>
  <div class="a" style="left:26px;top:695px;width:212px;height:7px;border-radius:4px;background:#9c8cf0;border:1px solid #444"></div>
  <div class="a" style="left:51px;top:691px;width:15px;height:15px;border-radius:50%;background:#6a62e6;border:1px solid #333"></div>
  <div class="a" style="left:261px;top:676px;width:79px;height:28px;border:1px solid #8a8af5;border-radius:5px;background:#fff;font-weight:bold;font-size:14px;line-height:27px;padding-left:4px;color:#000">1000</div>
  <div class="lbl" style="left:345px;top:685px;font-size:12px">mm</div>
  <div class="sep" style="top:712px"></div>
  <div class="lbl" style="left:26px;top:733px">Print preview/Print</div>
  <div class="a" style="left:260px;top:715px;width:50px;height:47px;border:1px solid #c0c0f4;border-radius:5px;box-shadow:0 0 2px #9a9af5"></div>
  <div class="a plus" style="left:270px;top:723px"></div>
  <div class="lbl" style="left:311px;top:735px;font-size:11px;color:#666">/</div>
  <div class="a" style="left:317px;top:715px;width:49px;height:47px;border:1px solid #d0d0f6;border-radius:5px"></div>
  <div class="a plus" style="left:326px;top:723px"></div>
  <div class="a" style="left:0;top:762px;width:380px;height:2px;background:#9a9af8"></div>
</div>

</body></html>
